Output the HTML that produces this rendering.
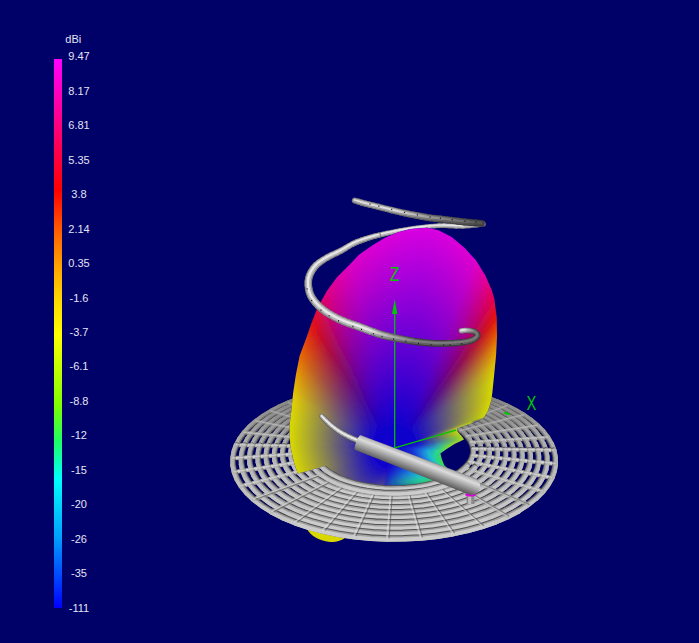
<!DOCTYPE html><html><head><meta charset="utf-8"><title>3D pattern</title><style>
html,body{margin:0;padding:0;background:#000069;overflow:hidden}
svg{display:block}
text{font-family:"Liberation Sans",sans-serif}
.w,.d,.m,.l,.m2,.l2{fill:none;stroke-linecap:round}.m2{stroke:#b4b4b4}.l2{stroke:#e2e2e2}
.d{stroke:#505050}.m{stroke:#9e9e9e}.l{stroke:#c8c8c8}
</style></head><body>
<svg width="699" height="643" viewBox="0 0 699 643">
<defs>
<linearGradient id="cb" gradientUnits="userSpaceOnUse" x1="0" y1="59" x2="0" y2="608">
<stop offset="0.0000" stop-color="#ff00ff"/>
<stop offset="0.1202" stop-color="#ff0080"/>
<stop offset="0.2386" stop-color="#ff0000"/>
<stop offset="0.3151" stop-color="#ff6000"/>
<stop offset="0.3752" stop-color="#ffa000"/>
<stop offset="0.4390" stop-color="#ffd800"/>
<stop offset="0.5027" stop-color="#ffff00"/>
<stop offset="0.5665" stop-color="#c0ff00"/>
<stop offset="0.6302" stop-color="#80ff00"/>
<stop offset="0.6940" stop-color="#20ff60"/>
<stop offset="0.7650" stop-color="#00ffff"/>
<stop offset="0.8707" stop-color="#00a0ff"/>
<stop offset="1.0000" stop-color="#0000ff"/>
</linearGradient>
<linearGradient id="tg" gradientUnits="objectBoundingBox" x1="0" y1="0" x2="0" y2="1">
<stop offset="0" stop-color="#7c7c7c"/>
<stop offset="0.1" stop-color="#b8b8b8"/>
<stop offset="0.28" stop-color="#dcdcdc"/>
<stop offset="0.5" stop-color="#b4b4b4"/>
<stop offset="0.75" stop-color="#868686"/>
<stop offset="1" stop-color="#585858"/>
</linearGradient>
</defs>
<rect width="699" height="643" fill="#000069"/>
<rect x="54" y="59" width="8" height="549" fill="url(#cb)"/>
<g fill="#e4e4f4" font-size="11" text-anchor="middle">
<text x="73.3" y="43.1">dBi</text>
<text x="79" y="60.2">9.47</text>
<text x="79" y="94.7">8.17</text>
<text x="79" y="129.1">6.81</text>
<text x="79" y="163.6">5.35</text>
<text x="79" y="198.1">3.8</text>
<text x="79" y="232.5">2.14</text>
<text x="79" y="267.0">0.35</text>
<text x="79" y="301.5">-1.6</text>
<text x="79" y="335.9">-3.7</text>
<text x="79" y="370.4">-6.1</text>
<text x="79" y="404.9">-8.8</text>
<text x="79" y="439.4">-12</text>
<text x="79" y="473.8">-15</text>
<text x="79" y="508.3">-20</text>
<text x="79" y="542.8">-26</text>
<text x="79" y="577.2">-35</text>
<text x="79" y="611.7">-111</text>
</g>
<path d="M307 529 C311 536 318 540.5 330 542 C338 542 343 540 347 536.5 L347 530 Z" fill="#d8d800"/>
<g id="mesh">
<path class="w" stroke="#545454" stroke-width="4.5" d="M244.5 445.2L236.6 445.0"/>
<path class="w" stroke="#4e4e4e" stroke-width="4" d="M251.7 433.3L244.4 432.6M262.7 422.5L256.1 421.3M530.4 426.7L537.3 425.7"/>
<path class="w" stroke="#484848" stroke-width="4" d="M276.7 413.0L271.0 411.3M501.8 407.9L507.0 406.0M517.5 416.7L523.6 415.1"/>
<path class="w" stroke="#424242" stroke-width="4" d="M293.4 404.8L288.6 402.8M312.1 398.1L308.3 395.7M464.1 394.8L467.3 392.3M483.8 400.6L488.1 398.4"/>
<path class="w" stroke="#3c3c3c" stroke-width="4" d="M332.5 392.9L329.6 390.3"/>
<path class="w" stroke="#3c3c3c" stroke-width="3.5" d="M353.9 389.2L352.1 386.5M376.1 387.1L375.3 384.4M398.6 386.7L398.9 383.9M421.1 387.8L422.3 385.1M443.0 390.5L445.3 387.9"/>
<path class="w" stroke="#545454" stroke-width="4" d="M539.9 438.0L547.5 437.5"/>
<path class="w" stroke="#aeaeae" stroke-width="3.5" d="M244.5 445.2L236.6 445.0"/>
<path class="w" stroke="#a8a8a8" stroke-width="3.5" d="M251.7 433.3L244.4 432.6M539.9 438.0L547.5 437.5"/>
<path class="w" stroke="#9c9c9c" stroke-width="3" d="M262.7 422.5L256.1 421.3"/>
<path class="w" stroke="#969696" stroke-width="3" d="M276.7 413.0L271.0 411.3M517.5 416.7L523.6 415.1"/>
<path class="w" stroke="#8a8a8a" stroke-width="3" d="M293.4 404.8L288.6 402.8M483.8 400.6L488.1 398.4"/>
<path class="w" stroke="#848484" stroke-width="3" d="M312.1 398.1L308.3 395.7M464.1 394.8L467.3 392.3"/>
<path class="w" stroke="#7e7e7e" stroke-width="3" d="M332.5 392.9L329.6 390.3M353.9 389.2L352.1 386.5M421.1 387.8L422.3 385.1M443.0 390.5L445.3 387.9"/>
<path class="w" stroke="#787878" stroke-width="3" d="M376.1 387.1L375.3 384.4M398.6 386.7L398.9 383.9"/>
<path class="w" stroke="#909090" stroke-width="3" d="M501.8 407.9L507.0 406.0"/>
<path class="w" stroke="#a2a2a2" stroke-width="3" d="M530.4 426.7L537.3 425.7"/>
<path class="w" stroke="#dedede" stroke-width="1.5" d="M244.5 445.2L236.6 445.0"/>
<path class="w" stroke="#d2d2d2" stroke-width="1.5" d="M251.7 433.3L244.4 432.6"/>
<path class="w" stroke="#c6c6c6" stroke-width="1.5" d="M262.7 422.5L256.1 421.3"/>
<path class="w" stroke="#bababa" stroke-width="1.5" d="M276.7 413.0L271.0 411.3"/>
<path class="w" stroke="#b4b4b4" stroke-width="1.5" d="M293.4 404.8L288.6 402.8M501.8 407.9L507.0 406.0"/>
<path class="w" stroke="#a8a8a8" stroke-width="1.5" d="M312.1 398.1L308.3 395.7M464.1 394.8L467.3 392.3"/>
<path class="w" stroke="#a2a2a2" stroke-width="1.5" d="M332.5 392.9L329.6 390.3M443.0 390.5L445.3 387.9"/>
<path class="w" stroke="#9c9c9c" stroke-width="1.5" d="M353.9 389.2L352.1 386.5M376.1 387.1L375.3 384.4M398.6 386.7L398.9 383.9M421.1 387.8L422.3 385.1"/>
<path class="w" stroke="#aeaeae" stroke-width="1.5" d="M483.8 400.6L488.1 398.4"/>
<path class="w" stroke="#c0c0c0" stroke-width="1.5" d="M517.5 416.7L523.6 415.1"/>
<path class="w" stroke="#cccccc" stroke-width="1.5" d="M530.4 426.7L537.3 425.7"/>
<path class="w" stroke="#d8d8d8" stroke-width="1.5" d="M539.9 438.0L547.5 437.5"/>
<path class="w" stroke="#545454" stroke-width="4.5" d="M252.4 445.3L244.5 445.2"/>
<path class="w" stroke="#4e4e4e" stroke-width="4" d="M259.1 434.1L251.7 433.3M269.3 423.8L262.7 422.5M523.5 427.8L530.4 426.7"/>
<path class="w" stroke="#484848" stroke-width="4" d="M282.5 414.7L276.7 413.0M496.6 409.8L501.8 407.9M511.4 418.2L517.5 416.7"/>
<path class="w" stroke="#424242" stroke-width="4" d="M298.3 406.9L293.4 404.8M316.0 400.4L312.1 398.1M460.8 397.2L464.1 394.8M479.6 402.8L483.8 400.6"/>
<path class="w" stroke="#3c3c3c" stroke-width="4" d="M335.4 395.4L332.5 392.9M355.8 391.9L353.9 389.2M440.8 393.1L443.0 390.5"/>
<path class="w" stroke="#3c3c3c" stroke-width="3.5" d="M377.0 389.9L376.1 387.1M398.4 389.5L398.6 386.7M419.8 390.5L421.1 387.8"/>
<path class="w" stroke="#545454" stroke-width="4" d="M532.3 438.5L539.9 438.0"/>
<path class="w" stroke="#aeaeae" stroke-width="3.5" d="M252.4 445.3L244.5 445.2"/>
<path class="w" stroke="#a8a8a8" stroke-width="3.5" d="M259.1 434.1L251.7 433.3M532.3 438.5L539.9 438.0"/>
<path class="w" stroke="#9c9c9c" stroke-width="3" d="M269.3 423.8L262.7 422.5"/>
<path class="w" stroke="#969696" stroke-width="3" d="M282.5 414.7L276.7 413.0M511.4 418.2L517.5 416.7"/>
<path class="w" stroke="#8a8a8a" stroke-width="3" d="M298.3 406.9L293.4 404.8M479.6 402.8L483.8 400.6"/>
<path class="w" stroke="#848484" stroke-width="3" d="M316.0 400.4L312.1 398.1M460.8 397.2L464.1 394.8"/>
<path class="w" stroke="#7e7e7e" stroke-width="3" d="M335.4 395.4L332.5 392.9M355.8 391.9L353.9 389.2M419.8 390.5L421.1 387.8M440.8 393.1L443.0 390.5"/>
<path class="w" stroke="#787878" stroke-width="3" d="M377.0 389.9L376.1 387.1M398.4 389.5L398.6 386.7"/>
<path class="w" stroke="#909090" stroke-width="3" d="M496.6 409.8L501.8 407.9"/>
<path class="w" stroke="#a2a2a2" stroke-width="3" d="M523.5 427.8L530.4 426.7"/>
<path class="w" stroke="#dedede" stroke-width="1.5" d="M252.4 445.3L244.5 445.2"/>
<path class="w" stroke="#d2d2d2" stroke-width="1.5" d="M259.1 434.1L251.7 433.3"/>
<path class="w" stroke="#c6c6c6" stroke-width="1.5" d="M269.3 423.8L262.7 422.5"/>
<path class="w" stroke="#bababa" stroke-width="1.5" d="M282.5 414.7L276.7 413.0"/>
<path class="w" stroke="#b4b4b4" stroke-width="1.5" d="M298.3 406.9L293.4 404.8M496.6 409.8L501.8 407.9"/>
<path class="w" stroke="#a8a8a8" stroke-width="1.5" d="M316.0 400.4L312.1 398.1M460.8 397.2L464.1 394.8"/>
<path class="w" stroke="#a2a2a2" stroke-width="1.5" d="M335.4 395.4L332.5 392.9M440.8 393.1L443.0 390.5"/>
<path class="w" stroke="#9c9c9c" stroke-width="1.5" d="M355.8 391.9L353.9 389.2M377.0 389.9L376.1 387.1M398.4 389.5L398.6 386.7M419.8 390.5L421.1 387.8"/>
<path class="w" stroke="#aeaeae" stroke-width="1.5" d="M479.6 402.8L483.8 400.6"/>
<path class="w" stroke="#c0c0c0" stroke-width="1.5" d="M511.4 418.2L517.5 416.7"/>
<path class="w" stroke="#cccccc" stroke-width="1.5" d="M523.5 427.8L530.4 426.7"/>
<path class="w" stroke="#d8d8d8" stroke-width="1.5" d="M532.3 438.5L539.9 438.0"/>
<path class="w" stroke="#545454" stroke-width="4.5" d="M260.3 445.4L252.4 445.3"/>
<path class="w" stroke="#4e4e4e" stroke-width="4" d="M266.4 434.8L259.1 434.1M275.9 425.1L269.3 423.8M516.5 428.9L523.5 427.8"/>
<path class="w" stroke="#484848" stroke-width="4" d="M288.3 416.4L282.5 414.7M491.3 411.8L496.6 409.8M505.2 419.7L511.4 418.2"/>
<path class="w" stroke="#424242" stroke-width="4" d="M303.2 408.9L298.3 406.9M320.0 402.8L316.0 400.4M457.5 399.8L460.8 397.2M475.2 405.1L479.6 402.8"/>
<path class="w" stroke="#3c3c3c" stroke-width="4" d="M338.3 398.0L335.4 395.4M357.7 394.7L355.8 391.9M377.8 392.8L377.0 389.9M398.2 392.3L398.4 389.5M418.6 393.3L419.8 390.5M438.5 395.8L440.8 393.1"/>
<path class="w" stroke="#545454" stroke-width="4" d="M524.7 439.0L532.3 438.5"/>
<path class="w" stroke="#aeaeae" stroke-width="3.5" d="M260.3 445.4L252.4 445.3"/>
<path class="w" stroke="#a8a8a8" stroke-width="3.5" d="M266.4 434.8L259.1 434.1M524.7 439.0L532.3 438.5"/>
<path class="w" stroke="#9c9c9c" stroke-width="3" d="M275.9 425.1L269.3 423.8"/>
<path class="w" stroke="#969696" stroke-width="3" d="M288.3 416.4L282.5 414.7M505.2 419.7L511.4 418.2"/>
<path class="w" stroke="#8a8a8a" stroke-width="3" d="M303.2 408.9L298.3 406.9M475.2 405.1L479.6 402.8"/>
<path class="w" stroke="#848484" stroke-width="3" d="M320.0 402.8L316.0 400.4M457.5 399.8L460.8 397.2"/>
<path class="w" stroke="#7e7e7e" stroke-width="3" d="M338.3 398.0L335.4 395.4M357.7 394.7L355.8 391.9M418.6 393.3L419.8 390.5M438.5 395.8L440.8 393.1"/>
<path class="w" stroke="#787878" stroke-width="3" d="M377.8 392.8L377.0 389.9M398.2 392.3L398.4 389.5"/>
<path class="w" stroke="#909090" stroke-width="3" d="M491.3 411.8L496.6 409.8"/>
<path class="w" stroke="#a2a2a2" stroke-width="3" d="M516.5 428.9L523.5 427.8"/>
<path class="w" stroke="#dedede" stroke-width="1.5" d="M260.3 445.4L252.4 445.3"/>
<path class="w" stroke="#d2d2d2" stroke-width="1.5" d="M266.4 434.8L259.1 434.1"/>
<path class="w" stroke="#c6c6c6" stroke-width="1.5" d="M275.9 425.1L269.3 423.8"/>
<path class="w" stroke="#bababa" stroke-width="1.5" d="M288.3 416.4L282.5 414.7"/>
<path class="w" stroke="#b4b4b4" stroke-width="1.5" d="M303.2 408.9L298.3 406.9M491.3 411.8L496.6 409.8"/>
<path class="w" stroke="#a8a8a8" stroke-width="1.5" d="M320.0 402.8L316.0 400.4M457.5 399.8L460.8 397.2"/>
<path class="w" stroke="#a2a2a2" stroke-width="1.5" d="M338.3 398.0L335.4 395.4M438.5 395.8L440.8 393.1"/>
<path class="w" stroke="#9c9c9c" stroke-width="1.5" d="M357.7 394.7L355.8 391.9M377.8 392.8L377.0 389.9M398.2 392.3L398.4 389.5M418.6 393.3L419.8 390.5"/>
<path class="w" stroke="#aeaeae" stroke-width="1.5" d="M475.2 405.1L479.6 402.8"/>
<path class="w" stroke="#c0c0c0" stroke-width="1.5" d="M505.2 419.7L511.4 418.2"/>
<path class="w" stroke="#cccccc" stroke-width="1.5" d="M516.5 428.9L523.5 427.8"/>
<path class="w" stroke="#d8d8d8" stroke-width="1.5" d="M524.7 439.0L532.3 438.5"/>
<path class="w" stroke="#545454" stroke-width="4.5" d="M268.3 445.6L260.3 445.4M517.1 439.5L524.7 439.0"/>
<path class="w" stroke="#4e4e4e" stroke-width="4" d="M273.8 435.6L266.4 434.8M282.6 426.4L275.9 425.1M509.5 429.9L516.5 428.9"/>
<path class="w" stroke="#484848" stroke-width="4" d="M294.2 418.1L288.3 416.4M486.0 413.7L491.3 411.8M499.0 421.3L505.2 419.7"/>
<path class="w" stroke="#424242" stroke-width="4" d="M308.1 411.1L303.2 408.9M323.9 405.2L320.0 402.8M454.1 402.3L457.5 399.8M470.9 407.4L475.2 405.1"/>
<path class="w" stroke="#3c3c3c" stroke-width="4" d="M341.2 400.6L338.3 398.0M359.6 397.4L357.7 394.7M378.7 395.6L377.8 392.8M398.0 395.2L398.2 392.3M417.3 396.2L418.6 393.3M436.1 398.6L438.5 395.8"/>
<path class="w" stroke="#aeaeae" stroke-width="3.5" d="M268.3 445.6L260.3 445.4"/>
<path class="w" stroke="#a8a8a8" stroke-width="3.5" d="M273.8 435.6L266.4 434.8M517.1 439.5L524.7 439.0"/>
<path class="w" stroke="#9c9c9c" stroke-width="3" d="M282.6 426.4L275.9 425.1"/>
<path class="w" stroke="#969696" stroke-width="3" d="M294.2 418.1L288.3 416.4M499.0 421.3L505.2 419.7"/>
<path class="w" stroke="#8a8a8a" stroke-width="3" d="M308.1 411.1L303.2 408.9M470.9 407.4L475.2 405.1"/>
<path class="w" stroke="#848484" stroke-width="3" d="M323.9 405.2L320.0 402.8M454.1 402.3L457.5 399.8"/>
<path class="w" stroke="#7e7e7e" stroke-width="3" d="M341.2 400.6L338.3 398.0M359.6 397.4L357.7 394.7M417.3 396.2L418.6 393.3M436.1 398.6L438.5 395.8"/>
<path class="w" stroke="#787878" stroke-width="3" d="M378.7 395.6L377.8 392.8M398.0 395.2L398.2 392.3"/>
<path class="w" stroke="#909090" stroke-width="3" d="M486.0 413.7L491.3 411.8"/>
<path class="w" stroke="#a2a2a2" stroke-width="3" d="M509.5 429.9L516.5 428.9"/>
<path class="w" stroke="#dedede" stroke-width="1.5" d="M268.3 445.6L260.3 445.4"/>
<path class="w" stroke="#d2d2d2" stroke-width="1.5" d="M273.8 435.6L266.4 434.8"/>
<path class="w" stroke="#c6c6c6" stroke-width="1.5" d="M282.6 426.4L275.9 425.1"/>
<path class="w" stroke="#bababa" stroke-width="1.5" d="M294.2 418.1L288.3 416.4"/>
<path class="w" stroke="#b4b4b4" stroke-width="1.5" d="M308.1 411.1L303.2 408.9M486.0 413.7L491.3 411.8"/>
<path class="w" stroke="#a8a8a8" stroke-width="1.5" d="M323.9 405.2L320.0 402.8M454.1 402.3L457.5 399.8"/>
<path class="w" stroke="#a2a2a2" stroke-width="1.5" d="M341.2 400.6L338.3 398.0M436.1 398.6L438.5 395.8"/>
<path class="w" stroke="#9c9c9c" stroke-width="1.5" d="M359.6 397.4L357.7 394.7M378.7 395.6L377.8 392.8M398.0 395.2L398.2 392.3M417.3 396.2L418.6 393.3"/>
<path class="w" stroke="#aeaeae" stroke-width="1.5" d="M470.9 407.4L475.2 405.1"/>
<path class="w" stroke="#c0c0c0" stroke-width="1.5" d="M499.0 421.3L505.2 419.7"/>
<path class="w" stroke="#cccccc" stroke-width="1.5" d="M509.5 429.9L516.5 428.9"/>
<path class="w" stroke="#d8d8d8" stroke-width="1.5" d="M517.1 439.5L524.7 439.0"/>
<path class="w" stroke="#545454" stroke-width="4.5" d="M276.2 445.7L268.3 445.6M509.4 440.0L517.1 439.5"/>
<path class="w" stroke="#4e4e4e" stroke-width="4" d="M281.2 436.3L273.8 435.6M289.4 427.6L282.6 426.4M502.5 431.0L509.5 429.9"/>
<path class="w" stroke="#484848" stroke-width="4" d="M300.1 419.9L294.2 418.1M480.6 415.7L486.0 413.7M492.8 422.9L499.0 421.3"/>
<path class="w" stroke="#424242" stroke-width="4" d="M313.1 413.2L308.1 411.1M328.0 407.6L323.9 405.2M450.7 404.9L454.1 402.3M466.4 409.7L470.9 407.4"/>
<path class="w" stroke="#3c3c3c" stroke-width="4" d="M344.2 403.3L341.2 400.6M361.6 400.3L359.6 397.4M379.5 398.5L378.7 395.6M397.8 398.1L398.0 395.2M416.0 399.1L417.3 396.2M433.7 401.3L436.1 398.6"/>
<path class="w" stroke="#aeaeae" stroke-width="3.5" d="M276.2 445.7L268.3 445.6"/>
<path class="w" stroke="#a8a8a8" stroke-width="3.5" d="M281.2 436.3L273.8 435.6M509.4 440.0L517.1 439.5"/>
<path class="w" stroke="#9c9c9c" stroke-width="3" d="M289.4 427.6L282.6 426.4"/>
<path class="w" stroke="#969696" stroke-width="3" d="M300.1 419.9L294.2 418.1M492.8 422.9L499.0 421.3"/>
<path class="w" stroke="#8a8a8a" stroke-width="3" d="M313.1 413.2L308.1 411.1M466.4 409.7L470.9 407.4"/>
<path class="w" stroke="#848484" stroke-width="3" d="M328.0 407.6L323.9 405.2M450.7 404.9L454.1 402.3"/>
<path class="w" stroke="#7e7e7e" stroke-width="3" d="M344.2 403.3L341.2 400.6M361.6 400.3L359.6 397.4M416.0 399.1L417.3 396.2M433.7 401.3L436.1 398.6"/>
<path class="w" stroke="#787878" stroke-width="3" d="M379.5 398.5L378.7 395.6M397.8 398.1L398.0 395.2"/>
<path class="w" stroke="#909090" stroke-width="3" d="M480.6 415.7L486.0 413.7"/>
<path class="w" stroke="#a2a2a2" stroke-width="3" d="M502.5 431.0L509.5 429.9"/>
<path class="w" stroke="#dedede" stroke-width="1.5" d="M276.2 445.7L268.3 445.6"/>
<path class="w" stroke="#d2d2d2" stroke-width="1.5" d="M281.2 436.3L273.8 435.6"/>
<path class="w" stroke="#c6c6c6" stroke-width="1.5" d="M289.4 427.6L282.6 426.4"/>
<path class="w" stroke="#bababa" stroke-width="1.5" d="M300.1 419.9L294.2 418.1"/>
<path class="w" stroke="#b4b4b4" stroke-width="1.5" d="M313.1 413.2L308.1 411.1M480.6 415.7L486.0 413.7"/>
<path class="w" stroke="#a8a8a8" stroke-width="1.5" d="M328.0 407.6L323.9 405.2M450.7 404.9L454.1 402.3"/>
<path class="w" stroke="#a2a2a2" stroke-width="1.5" d="M344.2 403.3L341.2 400.6M433.7 401.3L436.1 398.6"/>
<path class="w" stroke="#9c9c9c" stroke-width="1.5" d="M361.6 400.3L359.6 397.4M379.5 398.5L378.7 395.6M397.8 398.1L398.0 395.2M416.0 399.1L417.3 396.2"/>
<path class="w" stroke="#aeaeae" stroke-width="1.5" d="M466.4 409.7L470.9 407.4"/>
<path class="w" stroke="#c0c0c0" stroke-width="1.5" d="M492.8 422.9L499.0 421.3"/>
<path class="w" stroke="#cccccc" stroke-width="1.5" d="M502.5 431.0L509.5 429.9"/>
<path class="w" stroke="#d8d8d8" stroke-width="1.5" d="M509.4 440.0L517.1 439.5"/>
<path class="w" stroke="#545454" stroke-width="4.5" d="M284.1 445.8L276.2 445.7M501.8 440.5L509.4 440.0"/>
<path class="w" stroke="#4e4e4e" stroke-width="4" d="M288.7 437.1L281.2 436.3M296.1 428.9L289.4 427.6M495.4 432.1L502.5 431.0"/>
<path class="w" stroke="#484848" stroke-width="4" d="M306.1 421.6L300.1 419.9M475.2 417.7L480.6 415.7M486.5 424.5L492.8 422.9"/>
<path class="w" stroke="#424242" stroke-width="4" d="M318.2 415.3L313.1 413.2M332.1 410.1L328.0 407.6M447.2 407.5L450.7 404.9M462.0 412.1L466.4 409.7"/>
<path class="w" stroke="#3c3c3c" stroke-width="4" d="M347.3 406.0L344.2 403.3M363.5 403.1L361.6 400.3M380.4 401.5L379.5 398.5M397.6 401.1L397.8 398.1M414.7 402.0L416.0 399.1M431.3 404.1L433.7 401.3"/>
<path class="w" stroke="#aeaeae" stroke-width="3.5" d="M284.1 445.8L276.2 445.7"/>
<path class="w" stroke="#a8a8a8" stroke-width="3.5" d="M288.7 437.1L281.2 436.3M501.8 440.5L509.4 440.0"/>
<path class="w" stroke="#9c9c9c" stroke-width="3" d="M296.1 428.9L289.4 427.6"/>
<path class="w" stroke="#969696" stroke-width="3" d="M306.1 421.6L300.1 419.9M486.5 424.5L492.8 422.9"/>
<path class="w" stroke="#8a8a8a" stroke-width="3" d="M318.2 415.3L313.1 413.2M462.0 412.1L466.4 409.7"/>
<path class="w" stroke="#848484" stroke-width="3" d="M332.1 410.1L328.0 407.6M447.2 407.5L450.7 404.9"/>
<path class="w" stroke="#7e7e7e" stroke-width="3" d="M347.3 406.0L344.2 403.3M363.5 403.1L361.6 400.3M414.7 402.0L416.0 399.1M431.3 404.1L433.7 401.3"/>
<path class="w" stroke="#787878" stroke-width="3" d="M380.4 401.5L379.5 398.5M397.6 401.1L397.8 398.1"/>
<path class="w" stroke="#909090" stroke-width="3" d="M475.2 417.7L480.6 415.7"/>
<path class="w" stroke="#a2a2a2" stroke-width="3.5" d="M495.4 432.1L502.5 431.0"/>
<path class="w" stroke="#dedede" stroke-width="1.5" d="M284.1 445.8L276.2 445.7"/>
<path class="w" stroke="#d2d2d2" stroke-width="1.5" d="M288.7 437.1L281.2 436.3"/>
<path class="w" stroke="#c6c6c6" stroke-width="1.5" d="M296.1 428.9L289.4 427.6"/>
<path class="w" stroke="#bababa" stroke-width="1.5" d="M306.1 421.6L300.1 419.9"/>
<path class="w" stroke="#b4b4b4" stroke-width="1.5" d="M318.2 415.3L313.1 413.2M475.2 417.7L480.6 415.7"/>
<path class="w" stroke="#a8a8a8" stroke-width="1.5" d="M332.1 410.1L328.0 407.6M447.2 407.5L450.7 404.9"/>
<path class="w" stroke="#a2a2a2" stroke-width="1.5" d="M347.3 406.0L344.2 403.3M431.3 404.1L433.7 401.3"/>
<path class="w" stroke="#9c9c9c" stroke-width="1.5" d="M363.5 403.1L361.6 400.3M380.4 401.5L379.5 398.5M397.6 401.1L397.8 398.1M414.7 402.0L416.0 399.1"/>
<path class="w" stroke="#aeaeae" stroke-width="1.5" d="M462.0 412.1L466.4 409.7"/>
<path class="w" stroke="#c0c0c0" stroke-width="1.5" d="M486.5 424.5L492.8 422.9"/>
<path class="w" stroke="#cccccc" stroke-width="1.5" d="M495.4 432.1L502.5 431.0"/>
<path class="w" stroke="#d8d8d8" stroke-width="1.5" d="M501.8 440.5L509.4 440.0"/>
<path class="w" stroke="#545454" stroke-width="4.5" d="M292.1 446.0L284.1 445.8M494.1 441.0L501.8 440.5"/>
<path class="w" stroke="#4e4e4e" stroke-width="4" d="M296.2 437.8L288.7 437.1M302.9 430.2L296.1 428.9M488.3 433.2L495.4 432.1"/>
<path class="w" stroke="#484848" stroke-width="4" d="M312.1 423.4L306.1 421.6M469.7 419.8L475.2 417.7M480.1 426.1L486.5 424.5"/>
<path class="w" stroke="#424242" stroke-width="4" d="M323.3 417.5L318.2 415.3M336.2 412.6L332.1 410.1M443.7 410.2L447.2 407.5M457.4 414.4L462.0 412.1"/>
<path class="w" stroke="#3c3c3c" stroke-width="4" d="M350.4 408.8L347.3 406.0M365.5 406.1L363.5 403.1M381.3 404.5L380.4 401.5M397.4 404.2L397.6 401.1M413.3 405.0L414.7 402.0M428.9 407.0L431.3 404.1"/>
<path class="w" stroke="#aeaeae" stroke-width="3.5" d="M292.1 446.0L284.1 445.8"/>
<path class="w" stroke="#a8a8a8" stroke-width="3.5" d="M296.2 437.8L288.7 437.1M494.1 441.0L501.8 440.5"/>
<path class="w" stroke="#9c9c9c" stroke-width="3" d="M302.9 430.2L296.1 428.9"/>
<path class="w" stroke="#969696" stroke-width="3" d="M312.1 423.4L306.1 421.6M480.1 426.1L486.5 424.5"/>
<path class="w" stroke="#8a8a8a" stroke-width="3" d="M323.3 417.5L318.2 415.3M457.4 414.4L462.0 412.1"/>
<path class="w" stroke="#848484" stroke-width="3" d="M336.2 412.6L332.1 410.1M443.7 410.2L447.2 407.5"/>
<path class="w" stroke="#7e7e7e" stroke-width="3" d="M350.4 408.8L347.3 406.0M365.5 406.1L363.5 403.1M413.3 405.0L414.7 402.0M428.9 407.0L431.3 404.1"/>
<path class="w" stroke="#787878" stroke-width="3" d="M381.3 404.5L380.4 401.5M397.4 404.2L397.6 401.1"/>
<path class="w" stroke="#909090" stroke-width="3" d="M469.7 419.8L475.2 417.7"/>
<path class="w" stroke="#a2a2a2" stroke-width="3.5" d="M488.3 433.2L495.4 432.1"/>
<path class="w" stroke="#dedede" stroke-width="1.5" d="M292.1 446.0L284.1 445.8"/>
<path class="w" stroke="#d2d2d2" stroke-width="1.5" d="M296.2 437.8L288.7 437.1"/>
<path class="w" stroke="#c6c6c6" stroke-width="1.5" d="M302.9 430.2L296.1 428.9"/>
<path class="w" stroke="#bababa" stroke-width="1.5" d="M312.1 423.4L306.1 421.6"/>
<path class="w" stroke="#b4b4b4" stroke-width="1.5" d="M323.3 417.5L318.2 415.3M469.7 419.8L475.2 417.7"/>
<path class="w" stroke="#a8a8a8" stroke-width="1.5" d="M336.2 412.6L332.1 410.1M443.7 410.2L447.2 407.5"/>
<path class="w" stroke="#a2a2a2" stroke-width="1.5" d="M350.4 408.8L347.3 406.0M428.9 407.0L431.3 404.1"/>
<path class="w" stroke="#9c9c9c" stroke-width="1.5" d="M365.5 406.1L363.5 403.1M381.3 404.5L380.4 401.5M397.4 404.2L397.6 401.1M413.3 405.0L414.7 402.0"/>
<path class="w" stroke="#aeaeae" stroke-width="1.5" d="M457.4 414.4L462.0 412.1"/>
<path class="w" stroke="#c0c0c0" stroke-width="1.5" d="M480.1 426.1L486.5 424.5"/>
<path class="w" stroke="#cccccc" stroke-width="1.5" d="M488.3 433.2L495.4 432.1"/>
<path class="w" stroke="#d8d8d8" stroke-width="1.5" d="M494.1 441.0L501.8 440.5"/>
<path class="w" stroke="#545454" stroke-width="4.5" d="M300.0 446.1L292.1 446.0M486.4 441.5L494.1 441.0"/>
<path class="w" stroke="#4e4e4e" stroke-width="4" d="M303.7 438.6L296.2 437.8M309.8 431.5L302.9 430.2M481.2 434.3L488.3 433.2"/>
<path class="w" stroke="#484848" stroke-width="4" d="M318.2 425.2L312.1 423.4M464.1 421.8L469.7 419.8M473.7 427.7L480.1 426.1"/>
<path class="w" stroke="#424242" stroke-width="4" d="M328.5 419.7L323.3 417.5M340.4 415.1L336.2 412.6M440.2 412.9L443.7 410.2M452.8 416.8L457.4 414.4"/>
<path class="w" stroke="#3c3c3c" stroke-width="4" d="M353.5 411.5L350.4 408.8M367.6 409.0L365.5 406.1M382.2 407.6L381.3 404.5M397.1 407.2L397.4 404.2M412.0 408.0L413.3 405.0M426.4 409.9L428.9 407.0"/>
<path class="w" stroke="#aeaeae" stroke-width="3.5" d="M300.0 446.1L292.1 446.0"/>
<path class="w" stroke="#a8a8a8" stroke-width="3.5" d="M303.7 438.6L296.2 437.8M486.4 441.5L494.1 441.0"/>
<path class="w" stroke="#9c9c9c" stroke-width="3.5" d="M309.8 431.5L302.9 430.2"/>
<path class="w" stroke="#969696" stroke-width="3" d="M318.2 425.2L312.1 423.4M473.7 427.7L480.1 426.1"/>
<path class="w" stroke="#8a8a8a" stroke-width="3" d="M328.5 419.7L323.3 417.5M452.8 416.8L457.4 414.4"/>
<path class="w" stroke="#848484" stroke-width="3" d="M340.4 415.1L336.2 412.6M440.2 412.9L443.7 410.2"/>
<path class="w" stroke="#7e7e7e" stroke-width="3" d="M353.5 411.5L350.4 408.8M367.6 409.0L365.5 406.1M412.0 408.0L413.3 405.0M426.4 409.9L428.9 407.0"/>
<path class="w" stroke="#787878" stroke-width="3" d="M382.2 407.6L381.3 404.5M397.1 407.2L397.4 404.2"/>
<path class="w" stroke="#909090" stroke-width="3" d="M464.1 421.8L469.7 419.8"/>
<path class="w" stroke="#a2a2a2" stroke-width="3.5" d="M481.2 434.3L488.3 433.2"/>
<path class="w" stroke="#dedede" stroke-width="1.5" d="M300.0 446.1L292.1 446.0"/>
<path class="w" stroke="#d2d2d2" stroke-width="1.5" d="M303.7 438.6L296.2 437.8"/>
<path class="w" stroke="#c6c6c6" stroke-width="1.5" d="M309.8 431.5L302.9 430.2"/>
<path class="w" stroke="#bababa" stroke-width="1.5" d="M318.2 425.2L312.1 423.4"/>
<path class="w" stroke="#b4b4b4" stroke-width="1.5" d="M328.5 419.7L323.3 417.5M464.1 421.8L469.7 419.8"/>
<path class="w" stroke="#a8a8a8" stroke-width="1.5" d="M340.4 415.1L336.2 412.6M440.2 412.9L443.7 410.2"/>
<path class="w" stroke="#a2a2a2" stroke-width="1.5" d="M353.5 411.5L350.4 408.8M426.4 409.9L428.9 407.0"/>
<path class="w" stroke="#9c9c9c" stroke-width="1.5" d="M367.6 409.0L365.5 406.1M382.2 407.6L381.3 404.5M397.1 407.2L397.4 404.2M412.0 408.0L413.3 405.0"/>
<path class="w" stroke="#aeaeae" stroke-width="1.5" d="M452.8 416.8L457.4 414.4"/>
<path class="w" stroke="#c0c0c0" stroke-width="1.5" d="M473.7 427.7L480.1 426.1"/>
<path class="w" stroke="#cccccc" stroke-width="1.5" d="M481.2 434.3L488.3 433.2"/>
<path class="w" stroke="#d8d8d8" stroke-width="1.5" d="M486.4 441.5L494.1 441.0"/>
<path class="w" stroke="#545454" stroke-width="4.5" d="M308.0 446.2L300.0 446.1M478.7 442.0L486.4 441.5"/>
<path class="w" stroke="#4e4e4e" stroke-width="4.5" d="M311.2 439.3L303.7 438.6"/>
<path class="w" stroke="#4e4e4e" stroke-width="4" d="M316.7 432.9L309.8 431.5M474.0 435.4L481.2 434.3"/>
<path class="w" stroke="#484848" stroke-width="4" d="M324.3 427.0L318.2 425.2M458.5 423.9L464.1 421.8M467.2 429.3L473.7 427.7"/>
<path class="w" stroke="#424242" stroke-width="4" d="M333.7 421.9L328.5 419.7M344.6 417.7L340.4 415.1M436.5 415.6L440.2 412.9M448.2 419.3L452.8 416.8"/>
<path class="w" stroke="#3c3c3c" stroke-width="4" d="M356.7 414.4L353.5 411.5M369.6 412.0L367.6 409.0M383.1 410.7L382.2 407.6M396.9 410.4L397.1 407.2M410.6 411.1L412.0 408.0M423.9 412.8L426.4 409.9"/>
<path class="w" stroke="#aeaeae" stroke-width="3.5" d="M308.0 446.2L300.0 446.1"/>
<path class="w" stroke="#a8a8a8" stroke-width="3.5" d="M311.2 439.3L303.7 438.6M478.7 442.0L486.4 441.5"/>
<path class="w" stroke="#9c9c9c" stroke-width="3.5" d="M316.7 432.9L309.8 431.5"/>
<path class="w" stroke="#969696" stroke-width="3" d="M324.3 427.0L318.2 425.2M467.2 429.3L473.7 427.7"/>
<path class="w" stroke="#8a8a8a" stroke-width="3" d="M333.7 421.9L328.5 419.7M448.2 419.3L452.8 416.8"/>
<path class="w" stroke="#848484" stroke-width="3" d="M344.6 417.7L340.4 415.1M436.5 415.6L440.2 412.9"/>
<path class="w" stroke="#7e7e7e" stroke-width="3" d="M356.7 414.4L353.5 411.5M369.6 412.0L367.6 409.0M410.6 411.1L412.0 408.0M423.9 412.8L426.4 409.9"/>
<path class="w" stroke="#787878" stroke-width="3" d="M383.1 410.7L382.2 407.6M396.9 410.4L397.1 407.2"/>
<path class="w" stroke="#909090" stroke-width="3" d="M458.5 423.9L464.1 421.8"/>
<path class="w" stroke="#a2a2a2" stroke-width="3.5" d="M474.0 435.4L481.2 434.3"/>
<path class="w" stroke="#dedede" stroke-width="1.5" d="M308.0 446.2L300.0 446.1"/>
<path class="w" stroke="#d2d2d2" stroke-width="1.5" d="M311.2 439.3L303.7 438.6"/>
<path class="w" stroke="#c6c6c6" stroke-width="1.5" d="M316.7 432.9L309.8 431.5"/>
<path class="w" stroke="#bababa" stroke-width="1.5" d="M324.3 427.0L318.2 425.2"/>
<path class="w" stroke="#b4b4b4" stroke-width="1.5" d="M333.7 421.9L328.5 419.7M458.5 423.9L464.1 421.8"/>
<path class="w" stroke="#a8a8a8" stroke-width="1.5" d="M344.6 417.7L340.4 415.1M436.5 415.6L440.2 412.9"/>
<path class="w" stroke="#a2a2a2" stroke-width="1.5" d="M356.7 414.4L353.5 411.5M423.9 412.8L426.4 409.9"/>
<path class="w" stroke="#9c9c9c" stroke-width="1.5" d="M369.6 412.0L367.6 409.0M383.1 410.7L382.2 407.6M396.9 410.4L397.1 407.2M410.6 411.1L412.0 408.0"/>
<path class="w" stroke="#aeaeae" stroke-width="1.5" d="M448.2 419.3L452.8 416.8"/>
<path class="w" stroke="#c0c0c0" stroke-width="1.5" d="M467.2 429.3L473.7 427.7"/>
<path class="w" stroke="#cccccc" stroke-width="1.5" d="M474.0 435.4L481.2 434.3"/>
<path class="w" stroke="#d8d8d8" stroke-width="1.5" d="M478.7 442.0L486.4 441.5"/>
<path class="w" stroke="#545454" stroke-width="4.5" d="M316.0 446.4L308.0 446.2M470.9 442.5L478.7 442.0"/>
<path class="w" stroke="#4e4e4e" stroke-width="4.5" d="M318.7 440.1L311.2 439.3"/>
<path class="w" stroke="#4e4e4e" stroke-width="4" d="M323.7 434.2L316.7 432.9M466.8 436.5L474.0 435.4"/>
<path class="w" stroke="#484848" stroke-width="4" d="M330.5 428.9L324.3 427.0M452.8 426.0L458.5 423.9M460.7 430.9L467.2 429.3"/>
<path class="w" stroke="#424242" stroke-width="4" d="M339.0 424.2L333.7 421.9M348.9 420.3L344.6 417.7M432.9 418.4L436.5 415.6M443.5 421.8L448.2 419.3"/>
<path class="w" stroke="#3c3c3c" stroke-width="4" d="M359.9 417.2L356.7 414.4M371.7 415.1L369.6 412.0M384.1 413.8L383.1 410.7M396.7 413.5L396.9 410.4M409.2 414.2L410.6 411.1M421.4 415.8L423.9 412.8"/>
<path class="w" stroke="#aeaeae" stroke-width="3.5" d="M316.0 446.4L308.0 446.2"/>
<path class="w" stroke="#a8a8a8" stroke-width="3.5" d="M318.7 440.1L311.2 439.3M470.9 442.5L478.7 442.0"/>
<path class="w" stroke="#9c9c9c" stroke-width="3.5" d="M323.7 434.2L316.7 432.9"/>
<path class="w" stroke="#969696" stroke-width="3" d="M330.5 428.9L324.3 427.0M460.7 430.9L467.2 429.3"/>
<path class="w" stroke="#8a8a8a" stroke-width="3" d="M339.0 424.2L333.7 421.9M443.5 421.8L448.2 419.3"/>
<path class="w" stroke="#848484" stroke-width="3" d="M348.9 420.3L344.6 417.7M432.9 418.4L436.5 415.6"/>
<path class="w" stroke="#7e7e7e" stroke-width="3" d="M359.9 417.2L356.7 414.4M371.7 415.1L369.6 412.0M409.2 414.2L410.6 411.1M421.4 415.8L423.9 412.8"/>
<path class="w" stroke="#787878" stroke-width="3" d="M384.1 413.8L383.1 410.7M396.7 413.5L396.9 410.4"/>
<path class="w" stroke="#909090" stroke-width="3" d="M452.8 426.0L458.5 423.9"/>
<path class="w" stroke="#a2a2a2" stroke-width="3.5" d="M466.8 436.5L474.0 435.4"/>
<path class="w" stroke="#dedede" stroke-width="1.5" d="M316.0 446.4L308.0 446.2"/>
<path class="w" stroke="#d2d2d2" stroke-width="1.5" d="M318.7 440.1L311.2 439.3"/>
<path class="w" stroke="#c6c6c6" stroke-width="1.5" d="M323.7 434.2L316.7 432.9"/>
<path class="w" stroke="#bababa" stroke-width="1.5" d="M330.5 428.9L324.3 427.0"/>
<path class="w" stroke="#b4b4b4" stroke-width="1.5" d="M339.0 424.2L333.7 421.9M452.8 426.0L458.5 423.9"/>
<path class="w" stroke="#a8a8a8" stroke-width="1.5" d="M348.9 420.3L344.6 417.7M432.9 418.4L436.5 415.6"/>
<path class="w" stroke="#a2a2a2" stroke-width="1.5" d="M359.9 417.2L356.7 414.4M421.4 415.8L423.9 412.8"/>
<path class="w" stroke="#9c9c9c" stroke-width="1.5" d="M371.7 415.1L369.6 412.0M384.1 413.8L383.1 410.7M396.7 413.5L396.9 410.4M409.2 414.2L410.6 411.1"/>
<path class="w" stroke="#aeaeae" stroke-width="1.5" d="M443.5 421.8L448.2 419.3"/>
<path class="w" stroke="#c0c0c0" stroke-width="1.5" d="M460.7 430.9L467.2 429.3"/>
<path class="w" stroke="#cccccc" stroke-width="1.5" d="M466.8 436.5L474.0 435.4"/>
<path class="w" stroke="#d8d8d8" stroke-width="1.5" d="M470.9 442.5L478.7 442.0"/>
<path class="w" stroke="#484848" stroke-width="5.5" d="M236.6 445.0L240.0 438.7M547.5 437.5L551.1 443.8M551.1 443.8L553.6 450.3"/>
<path class="w" stroke="#424242" stroke-width="5.5" d="M240.0 438.7L244.4 432.6M542.9 431.4L547.5 437.5"/>
<path class="w" stroke="#424242" stroke-width="5" d="M244.4 432.6L249.8 426.8M249.8 426.8L256.1 421.3M530.8 420.2L537.3 425.7M537.3 425.7L542.9 431.4"/>
<path class="w" stroke="#3c3c3c" stroke-width="5" d="M256.1 421.3L263.2 416.1M263.2 416.1L271.0 411.3M271.0 411.3L279.5 406.8M507.0 406.0L515.6 410.4M515.6 410.4L523.6 415.1M523.6 415.1L530.8 420.2"/>
<path class="w" stroke="#363636" stroke-width="5" d="M279.5 406.8L288.6 402.8M288.6 402.8L298.2 399.1M298.2 399.1L308.3 395.7M477.9 395.1L488.1 398.4M488.1 398.4L497.8 402.0M497.8 402.0L507.0 406.0"/>
<path class="w" stroke="#363636" stroke-width="4.5" d="M308.3 395.7L318.8 392.8M467.3 392.3L477.9 395.1"/>
<path class="w" stroke="#303030" stroke-width="4.5" d="M318.8 392.8L329.6 390.3M329.6 390.3L340.8 388.2M340.8 388.2L352.1 386.5M352.1 386.5L363.7 385.3M363.7 385.3L375.3 384.4M375.3 384.4L387.1 383.9M387.1 383.9L398.9 383.9M398.9 383.9L410.6 384.3M410.6 384.3L422.3 385.1M422.3 385.1L433.9 386.2M433.9 386.2L445.3 387.9M445.3 387.9L456.4 389.9M456.4 389.9L467.3 392.3"/>
<path class="w" stroke="#8a8a8a" stroke-width="4.5" d="M236.2 444.8L239.6 438.5M547.9 437.2L551.5 443.5M551.5 443.6L554.1 450.1"/>
<path class="w" stroke="#848484" stroke-width="4.5" d="M239.6 438.4L244.1 432.4M543.2 431.2L547.8 437.2"/>
<path class="w" stroke="#7e7e7e" stroke-width="4.5" d="M244.1 432.3L249.5 426.5M249.6 426.5L255.8 421.0M531.1 419.9L537.5 425.4M537.6 425.4L543.2 431.1"/>
<path class="w" stroke="#787878" stroke-width="4" d="M255.9 421.0L263.0 415.8M523.8 414.8L531.1 419.9"/>
<path class="w" stroke="#727272" stroke-width="4" d="M263.0 415.8L270.8 411.0M270.8 410.9L279.3 406.5M507.2 405.6L515.8 410.0M515.8 410.0L523.8 414.8"/>
<path class="w" stroke="#6c6c6c" stroke-width="4" d="M279.4 406.5L288.4 402.4M288.5 402.4L298.1 398.7M488.2 398.0L497.9 401.6M497.9 401.6L507.1 405.6"/>
<path class="w" stroke="#666666" stroke-width="4" d="M298.1 398.7L308.2 395.4M308.2 395.4L318.7 392.5M467.4 391.9L478.0 394.8M478.0 394.8L488.2 398.0"/>
<path class="w" stroke="#606060" stroke-width="4" d="M318.7 392.5L329.5 390.0M329.6 390.0L340.7 387.9M340.7 387.9L352.1 386.2M352.1 386.2L363.6 384.9M422.3 384.7L433.9 385.9M433.9 385.9L445.3 387.5M445.3 387.5L456.5 389.5M456.5 389.5L467.4 391.9"/>
<path class="w" stroke="#5a5a5a" stroke-width="4" d="M363.6 384.9L375.3 384.0M375.3 384.0L387.1 383.6M387.1 383.6L398.9 383.5M398.9 383.5L410.6 383.9M410.6 383.9L422.3 384.7"/>
<path class="w" stroke="#aeaeae" stroke-width="3" d="M235.6 444.5L239.0 438.2M548.4 436.9L552.0 443.2"/>
<path class="w" stroke="#a8a8a8" stroke-width="3" d="M239.1 438.1L243.6 432.0M543.7 430.8L548.3 436.8"/>
<path class="w" stroke="#a2a2a2" stroke-width="3" d="M243.7 431.9L249.1 426.1M538.0 424.9L543.6 430.7"/>
<path class="w" stroke="#9c9c9c" stroke-width="3" d="M249.1 426.0L255.4 420.5M531.5 419.5L537.9 424.9"/>
<path class="w" stroke="#969696" stroke-width="3" d="M255.5 420.5L262.6 415.3M524.2 414.3L531.4 419.4"/>
<path class="w" stroke="#909090" stroke-width="3" d="M262.7 415.3L270.5 410.4M270.6 410.4L279.1 406.0M507.4 405.1L516.1 409.5M516.1 409.5L524.1 414.3"/>
<path class="w" stroke="#8a8a8a" stroke-width="3" d="M279.1 405.9L288.2 401.9M498.2 401.1L507.4 405.1"/>
<path class="w" stroke="#848484" stroke-width="3" d="M288.3 401.9L297.9 398.1M297.9 398.1L308.0 394.8M478.2 394.2L488.4 397.4M488.4 397.5L498.1 401.1"/>
<path class="w" stroke="#7e7e7e" stroke-width="3" d="M308.1 394.8L318.5 391.9M318.6 391.9L329.4 389.4M456.7 389.0L467.5 391.4M467.6 391.4L478.1 394.2"/>
<path class="w" stroke="#787878" stroke-width="3" d="M329.5 389.4L340.6 387.3M340.6 387.3L352.0 385.6M352.0 385.6L363.6 384.3M422.4 384.1L434.0 385.3M434.0 385.3L445.4 386.9M445.4 386.9L456.6 389.0"/>
<path class="w" stroke="#727272" stroke-width="3" d="M363.6 384.3L375.3 383.5M375.3 383.5L387.0 383.0M387.1 383.0L398.8 383.0M398.9 383.0L410.6 383.3M410.7 383.3L422.4 384.1"/>
<path class="w" stroke="#aeaeae" stroke-width="3.5" d="M552.1 443.4L554.7 449.9"/>
<path class="w" stroke="#484848" stroke-width="5.5" d="M244.5 445.2L247.6 439.1M539.9 438.0L543.3 443.9M543.3 443.9L545.5 450.1"/>
<path class="w" stroke="#424242" stroke-width="5.5" d="M247.6 439.1L251.7 433.3M535.6 432.2L539.9 438.0"/>
<path class="w" stroke="#424242" stroke-width="5" d="M251.7 433.3L256.8 427.8M256.8 427.8L262.7 422.5M524.3 421.5L530.4 426.7M530.4 426.7L535.6 432.2"/>
<path class="w" stroke="#3c3c3c" stroke-width="5" d="M262.7 422.5L269.4 417.6M269.4 417.6L276.7 413.0M276.7 413.0L284.8 408.7M501.8 407.9L510.0 412.1M510.0 412.1L517.5 416.7M517.5 416.7L524.3 421.5"/>
<path class="w" stroke="#363636" stroke-width="5" d="M284.8 408.7L293.4 404.8M293.4 404.8L302.5 401.2M302.5 401.2L312.1 398.1M312.1 398.1L322.1 395.3M464.1 394.8L474.2 397.5M474.2 397.5L483.8 400.6M483.8 400.6L493.1 404.1M493.1 404.1L501.8 407.9"/>
<path class="w" stroke="#303030" stroke-width="4.5" d="M322.1 395.3L332.5 392.9M332.5 392.9L343.1 390.8M343.1 390.8L353.9 389.2M353.9 389.2L365.0 388.0M365.0 388.0L376.1 387.1M376.1 387.1L387.4 386.7M387.4 386.7L398.6 386.7M398.6 386.7L409.9 387.0M409.9 387.0L421.1 387.8M421.1 387.8L432.1 388.9M432.1 388.9L443.0 390.5M443.0 390.5L453.7 392.4M453.7 392.4L464.1 394.8"/>
<path class="w" stroke="#8a8a8a" stroke-width="4.5" d="M244.1 445.0L247.2 438.9M540.3 437.8L543.6 443.7M543.7 443.8L545.9 450.0"/>
<path class="w" stroke="#848484" stroke-width="4.5" d="M247.3 438.9L251.4 433.1M535.9 432.0L540.3 437.7"/>
<path class="w" stroke="#7e7e7e" stroke-width="4.5" d="M251.4 433.1L256.5 427.5M256.5 427.5L262.4 422.2M524.6 421.2L530.7 426.4M530.7 426.4L535.9 431.9"/>
<path class="w" stroke="#787878" stroke-width="4.5" d="M262.4 422.2L269.1 417.3M517.7 416.3L524.6 421.2"/>
<path class="w" stroke="#727272" stroke-width="4" d="M269.1 417.3L276.5 412.6M276.6 412.6L284.6 408.4M502.0 407.5L510.2 411.8M510.2 411.8L517.7 416.3"/>
<path class="w" stroke="#6c6c6c" stroke-width="4" d="M284.6 408.4L293.2 404.4M293.3 404.4L302.4 400.9M484.0 400.2L493.2 403.7M493.2 403.7L502.0 407.5"/>
<path class="w" stroke="#666666" stroke-width="4" d="M302.4 400.9L312.0 397.7M312.0 397.7L322.0 394.9M464.2 394.4L474.3 397.1M474.3 397.1L484.0 400.2"/>
<path class="w" stroke="#606060" stroke-width="4" d="M322.1 394.9L332.4 392.5M332.4 392.5L343.0 390.5M343.0 390.5L353.9 388.8M353.9 388.8L364.9 387.6M421.1 387.4L432.2 388.6M432.2 388.6L443.1 390.1M443.1 390.1L453.8 392.0M453.8 392.0L464.2 394.4"/>
<path class="w" stroke="#5a5a5a" stroke-width="4" d="M365.0 387.6L376.1 386.8M376.1 386.8L387.4 386.3M387.4 386.3L398.6 386.3M398.7 386.3L409.9 386.6M409.9 386.6L421.1 387.4"/>
<path class="w" stroke="#aeaeae" stroke-width="3" d="M243.5 444.7L246.7 438.6M540.9 437.4L544.2 443.4"/>
<path class="w" stroke="#a8a8a8" stroke-width="3" d="M246.8 438.5L250.9 432.7M536.5 431.6L540.8 437.3"/>
<path class="w" stroke="#a2a2a2" stroke-width="3" d="M251.0 432.6L256.0 427.1M531.1 426.0L536.4 431.5"/>
<path class="w" stroke="#9c9c9c" stroke-width="3" d="M256.1 427.0L262.0 421.8M525.0 420.8L531.1 425.9"/>
<path class="w" stroke="#969696" stroke-width="3" d="M262.1 421.7L268.7 416.8M518.1 415.8L524.9 420.7"/>
<path class="w" stroke="#909090" stroke-width="3" d="M268.8 416.8L276.2 412.1M276.3 412.1L284.3 407.8M502.3 407.0L510.4 411.2M510.5 411.2L518.0 415.8"/>
<path class="w" stroke="#8a8a8a" stroke-width="3" d="M284.4 407.8L293.0 403.9M493.5 403.2L502.2 407.0"/>
<path class="w" stroke="#848484" stroke-width="3" d="M293.1 403.9L302.2 400.3M302.2 400.3L311.8 397.1M474.5 396.6L484.1 399.7M484.2 399.7L493.4 403.1"/>
<path class="w" stroke="#7e7e7e" stroke-width="3" d="M311.9 397.1L321.9 394.3M321.9 394.3L332.3 391.9M453.9 391.5L464.3 393.8M464.3 393.8L474.4 396.6"/>
<path class="w" stroke="#787878" stroke-width="3" d="M332.3 391.9L342.9 389.9M343.0 389.9L353.8 388.3M353.8 388.3L364.9 387.0M421.2 386.8L432.2 388.0M432.3 388.0L443.2 389.5M443.2 389.5L453.9 391.5"/>
<path class="w" stroke="#727272" stroke-width="3" d="M364.9 387.0L376.1 386.2M376.1 386.2L387.3 385.8M387.4 385.8L398.6 385.7M398.7 385.7L409.9 386.1M410.0 386.1L421.1 386.8"/>
<path class="w" stroke="#aeaeae" stroke-width="3.5" d="M544.3 443.6L546.6 449.8"/>
<path class="w" stroke="#484848" stroke-width="5.5" d="M252.4 445.3L255.3 439.6M532.3 438.5L535.4 444.1M535.4 444.1L537.4 450.0"/>
<path class="w" stroke="#424242" stroke-width="5.5" d="M255.3 439.6L259.1 434.1M528.3 433.0L532.3 438.5"/>
<path class="w" stroke="#424242" stroke-width="5" d="M259.1 434.1L263.8 428.8M263.8 428.8L269.3 423.8M517.8 422.8L523.5 427.8M523.5 427.8L528.3 433.0"/>
<path class="w" stroke="#3c3c3c" stroke-width="5" d="M269.3 423.8L275.5 419.1M275.5 419.1L282.5 414.7M282.5 414.7L290.1 410.6M496.6 409.8L504.3 413.8M504.3 413.8L511.4 418.2M511.4 418.2L517.8 422.8"/>
<path class="w" stroke="#363636" stroke-width="5" d="M290.1 410.6L298.3 406.9M298.3 406.9L306.9 403.5M306.9 403.5L316.0 400.4M316.0 400.4L325.5 397.7M460.8 397.2L470.4 399.8M470.4 399.8L479.6 402.8M479.6 402.8L488.3 406.1M488.3 406.1L496.6 409.8"/>
<path class="w" stroke="#303030" stroke-width="5" d="M325.5 397.7L335.4 395.4M335.4 395.4L345.5 393.5M450.9 395.0L460.8 397.2"/>
<path class="w" stroke="#303030" stroke-width="4.5" d="M345.5 393.5L355.8 391.9M355.8 391.9L366.3 390.7M366.3 390.7L377.0 389.9M377.0 389.9L387.7 389.5M387.7 389.5L398.4 389.5M398.4 389.5L409.2 389.8M409.2 389.8L419.8 390.5M419.8 390.5L430.4 391.6M430.4 391.6L440.8 393.1M440.8 393.1L450.9 395.0"/>
<path class="w" stroke="#8a8a8a" stroke-width="4.5" d="M252.0 445.1L254.9 439.4M532.7 438.3L535.8 443.9M535.8 444.0L537.8 449.9"/>
<path class="w" stroke="#848484" stroke-width="4.5" d="M254.9 439.3L258.7 433.8M528.7 432.8L532.7 438.2"/>
<path class="w" stroke="#7e7e7e" stroke-width="4.5" d="M258.8 433.8L263.5 428.5M263.5 428.5L269.0 423.5M518.1 422.5L523.7 427.5M523.8 427.5L528.6 432.7"/>
<path class="w" stroke="#787878" stroke-width="4.5" d="M269.0 423.5L275.3 418.8M511.6 417.9L518.0 422.5"/>
<path class="w" stroke="#727272" stroke-width="4" d="M275.3 418.8L282.3 414.3M282.3 414.3L289.9 410.3M496.8 409.5L504.5 413.5M504.5 413.5L511.6 417.8"/>
<path class="w" stroke="#6c6c6c" stroke-width="4" d="M289.9 410.2L298.1 406.5M298.1 406.5L306.8 403.1M479.7 402.5L488.5 405.8M488.5 405.8L496.8 409.5"/>
<path class="w" stroke="#666666" stroke-width="4" d="M306.8 403.1L315.9 400.0M315.9 400.0L325.4 397.4M460.9 396.9L470.5 399.5M470.5 399.5L479.7 402.4"/>
<path class="w" stroke="#606060" stroke-width="4" d="M325.4 397.4L335.3 395.0M335.3 395.0L345.4 393.1M345.4 393.1L355.8 391.5M355.8 391.5L366.3 390.4M419.9 390.2L430.4 391.3M430.4 391.3L440.8 392.8M440.8 392.8L451.0 394.6M451.0 394.6L460.9 396.9"/>
<path class="w" stroke="#5a5a5a" stroke-width="4" d="M366.3 390.4L376.9 389.5M377.0 389.5L387.7 389.1M387.7 389.1L398.4 389.1M398.5 389.1L409.2 389.4M409.2 389.4L419.9 390.2"/>
<path class="w" stroke="#aeaeae" stroke-width="3" d="M251.4 444.8L254.3 439.1M533.3 438.0L536.3 443.6"/>
<path class="w" stroke="#a8a8a8" stroke-width="3" d="M254.4 439.0L258.2 433.5M529.2 432.4L533.2 437.8"/>
<path class="w" stroke="#a2a2a2" stroke-width="3" d="M258.3 433.4L263.0 428.1M524.2 427.1L529.1 432.3"/>
<path class="w" stroke="#9c9c9c" stroke-width="3" d="M263.1 428.0L268.6 423.0M518.5 422.1L524.2 427.0"/>
<path class="w" stroke="#969696" stroke-width="3" d="M268.7 423.0L274.9 418.3M512.0 417.4L518.4 422.0"/>
<path class="w" stroke="#909090" stroke-width="3" d="M275.0 418.2L282.0 413.8M282.0 413.8L289.6 409.7M497.1 408.9L504.8 413.0M504.8 413.0L511.9 417.3"/>
<path class="w" stroke="#8a8a8a" stroke-width="3" d="M289.7 409.7L297.8 406.0M488.7 405.2L497.0 408.9"/>
<path class="w" stroke="#848484" stroke-width="3" d="M297.9 405.9L306.6 402.5M306.6 402.5L315.7 399.5M470.7 398.9L479.9 401.9M479.9 401.9L488.7 405.2"/>
<path class="w" stroke="#7e7e7e" stroke-width="3" d="M315.8 399.5L325.3 396.8M325.3 396.8L335.1 394.5M451.1 394.1L461.0 396.3M461.1 396.3L470.6 398.9"/>
<path class="w" stroke="#787878" stroke-width="3" d="M335.2 394.5L345.3 392.5M345.3 392.5L355.7 391.0M355.7 391.0L366.2 389.8M419.9 389.6L430.5 390.7M430.5 390.7L440.9 392.2M440.9 392.2L451.1 394.1"/>
<path class="w" stroke="#727272" stroke-width="3" d="M366.3 389.8L376.9 389.0M376.9 389.0L387.7 388.6M387.7 388.6L398.4 388.5M398.5 388.5L409.2 388.9M409.2 388.9L419.9 389.6"/>
<path class="w" stroke="#aeaeae" stroke-width="3.5" d="M536.4 443.8L538.5 449.6"/>
<path class="w" stroke="#484848" stroke-width="5.5" d="M260.3 445.4L262.9 440.0M524.7 439.0L527.5 444.3M527.5 444.3L529.3 449.9"/>
<path class="w" stroke="#424242" stroke-width="5.5" d="M262.9 440.0L266.4 434.8M521.0 433.8L524.7 439.0"/>
<path class="w" stroke="#424242" stroke-width="5" d="M266.4 434.8L270.8 429.8M270.8 429.8L275.9 425.1M511.2 424.2L516.5 428.9M516.5 428.9L521.0 433.8"/>
<path class="w" stroke="#3c3c3c" stroke-width="5" d="M275.9 425.1L281.8 420.6M281.8 420.6L288.3 416.4M288.3 416.4L295.5 412.5M491.3 411.8L498.6 415.6M498.6 415.6L505.2 419.7M505.2 419.7L511.2 424.2"/>
<path class="w" stroke="#363636" stroke-width="5" d="M295.5 412.5L303.2 408.9M303.2 408.9L311.3 405.7M311.3 405.7L320.0 402.8M320.0 402.8L329.0 400.2M457.5 399.8L466.6 402.2M466.6 402.2L475.2 405.1M475.2 405.1L483.5 408.3M483.5 408.3L491.3 411.8"/>
<path class="w" stroke="#303030" stroke-width="5" d="M329.0 400.2L338.3 398.0M338.3 398.0L347.9 396.2M347.9 396.2L357.7 394.7M428.6 394.4L438.5 395.8M438.5 395.8L448.1 397.6M448.1 397.6L457.5 399.8"/>
<path class="w" stroke="#303030" stroke-width="4.5" d="M357.7 394.7L367.7 393.5M367.7 393.5L377.8 392.8M377.8 392.8L388.0 392.3M388.0 392.3L398.2 392.3M398.2 392.3L408.4 392.6M408.4 392.6L418.6 393.3M418.6 393.3L428.6 394.4"/>
<path class="w" stroke="#8a8a8a" stroke-width="4.5" d="M259.9 445.2L262.5 439.8M525.1 438.8L527.9 444.1M527.9 444.2L529.8 449.7"/>
<path class="w" stroke="#848484" stroke-width="4.5" d="M262.6 439.8L266.1 434.6M521.4 433.6L525.1 438.7"/>
<path class="w" stroke="#7e7e7e" stroke-width="4.5" d="M266.1 434.5L270.5 429.6M270.5 429.5L275.6 424.8M511.5 423.9L516.8 428.5M516.8 428.6L521.3 433.5"/>
<path class="w" stroke="#787878" stroke-width="4.5" d="M275.7 424.8L281.5 420.3M505.5 419.4L511.5 423.8"/>
<path class="w" stroke="#727272" stroke-width="4" d="M281.6 420.3L288.1 416.1M288.1 416.1L295.3 412.2M491.5 411.4L498.8 415.3M498.8 415.3L505.4 419.4"/>
<path class="w" stroke="#6c6c6c" stroke-width="4" d="M295.3 412.2L303.0 408.6M303.0 408.6L311.2 405.3M475.4 404.7L483.7 407.9M483.7 407.9L491.5 411.4"/>
<path class="w" stroke="#666666" stroke-width="4" d="M311.2 405.3L319.8 402.4M319.9 402.4L328.8 399.9M457.6 399.4L466.7 401.9M466.7 401.9L475.4 404.7"/>
<path class="w" stroke="#606060" stroke-width="4" d="M328.9 399.8L338.2 397.6M338.2 397.6L347.8 395.8M347.8 395.8L357.6 394.3M357.7 394.3L367.6 393.1M418.6 393.0L428.6 394.0M428.7 394.0L438.5 395.4M438.5 395.4L448.2 397.2M448.2 397.2L457.6 399.4"/>
<path class="w" stroke="#5a5a5a" stroke-width="4" d="M367.7 393.1L377.8 392.4M377.8 392.4L388.0 392.0M388.0 392.0L398.2 391.9M398.2 391.9L408.4 392.3M408.5 392.3L418.6 393.0"/>
<path class="w" stroke="#aeaeae" stroke-width="3" d="M259.4 445.0L262.0 439.6M525.7 438.5L528.5 443.8"/>
<path class="w" stroke="#a8a8a8" stroke-width="3" d="M262.1 439.4L265.6 434.2M521.9 433.2L525.6 438.4"/>
<path class="w" stroke="#a2a2a2" stroke-width="3" d="M265.6 434.1L270.0 429.1M517.3 428.2L521.8 433.1"/>
<path class="w" stroke="#9c9c9c" stroke-width="3" d="M270.1 429.1L275.2 424.3M511.9 423.4L517.2 428.1"/>
<path class="w" stroke="#969696" stroke-width="3" d="M275.3 424.3L281.2 419.8M505.8 418.9L511.8 423.3"/>
<path class="w" stroke="#909090" stroke-width="3" d="M281.2 419.7L287.8 415.6M287.9 415.5L295.0 411.6M491.8 410.9L499.0 414.7M499.1 414.7L505.8 418.9"/>
<path class="w" stroke="#8a8a8a" stroke-width="3" d="M295.1 411.6L302.7 408.0M483.9 407.4L491.7 410.9"/>
<path class="w" stroke="#848484" stroke-width="3" d="M302.8 408.0L311.0 404.8M311.0 404.8L319.6 401.9M466.9 401.3L475.5 404.2M475.6 404.2L483.9 407.4"/>
<path class="w" stroke="#7e7e7e" stroke-width="3" d="M319.7 401.9L328.7 399.3M328.7 399.3L338.1 397.1M448.3 396.7L457.7 398.8M457.7 398.8L466.8 401.3"/>
<path class="w" stroke="#787878" stroke-width="3" d="M338.1 397.1L347.7 395.2M347.7 395.2L357.6 393.7M357.6 393.7L367.6 392.6M418.7 392.4L428.7 393.5M428.7 393.5L438.6 394.9M438.6 394.9L448.3 396.7"/>
<path class="w" stroke="#727272" stroke-width="3" d="M367.6 392.6L377.7 391.8M377.8 391.8L388.0 391.4M388.0 391.4L398.2 391.4M398.3 391.4L408.5 391.7M408.5 391.7L418.6 392.4"/>
<path class="w" stroke="#aeaeae" stroke-width="3.5" d="M528.5 444.0L530.4 449.5"/>
<path class="w" stroke="#484848" stroke-width="5.5" d="M268.3 445.6L270.6 440.5M517.1 439.5L519.6 444.5M519.6 444.5L521.2 449.7"/>
<path class="w" stroke="#424242" stroke-width="5.5" d="M270.6 440.5L273.8 435.6M513.7 434.6L517.1 439.5"/>
<path class="w" stroke="#424242" stroke-width="5" d="M273.8 435.6L277.8 430.8M277.8 430.8L282.6 426.4M504.6 425.5L509.5 429.9M509.5 429.9L513.7 434.6"/>
<path class="w" stroke="#3c3c3c" stroke-width="5" d="M282.6 426.4L288.1 422.1M288.1 422.1L294.2 418.1M294.2 418.1L300.9 414.4M486.0 413.7L492.8 417.4M492.8 417.4L499.0 421.3M499.0 421.3L504.6 425.5"/>
<path class="w" stroke="#363636" stroke-width="5" d="M300.9 414.4L308.1 411.1M308.1 411.1L315.8 408.0M315.8 408.0L323.9 405.2M323.9 405.2L332.4 402.8M454.1 402.3L462.7 404.7M462.7 404.7L470.9 407.4M470.9 407.4L478.7 410.4M478.7 410.4L486.0 413.7"/>
<path class="w" stroke="#303030" stroke-width="5" d="M332.4 402.8L341.2 400.6M341.2 400.6L350.3 398.9M350.3 398.9L359.6 397.4M359.6 397.4L369.1 396.4M369.1 396.4L378.7 395.6M378.7 395.6L388.3 395.2M388.3 395.2L398.0 395.2M398.0 395.2L407.7 395.5M407.7 395.5L417.3 396.2M417.3 396.2L426.8 397.2M426.8 397.2L436.1 398.6M436.1 398.6L445.2 400.3M445.2 400.3L454.1 402.3"/>
<path class="w" stroke="#8a8a8a" stroke-width="4.5" d="M267.9 445.4L270.2 440.3M517.5 439.3L520.0 444.3M520.0 444.4L521.7 449.6"/>
<path class="w" stroke="#848484" stroke-width="4.5" d="M270.3 440.2L273.5 435.3M514.1 434.4L517.4 439.2"/>
<path class="w" stroke="#7e7e7e" stroke-width="4.5" d="M273.5 435.3L277.5 430.6M277.6 430.5L282.3 426.1M504.9 425.2L509.8 429.6M509.8 429.6L514.0 434.3"/>
<path class="w" stroke="#787878" stroke-width="4.5" d="M282.4 426.0L287.8 421.8M499.3 421.0L504.9 425.2"/>
<path class="w" stroke="#727272" stroke-width="4.5" d="M287.9 421.8L294.0 417.8M493.0 417.0L499.2 421.0"/>
<path class="w" stroke="#727272" stroke-width="4" d="M294.0 417.8L300.7 414.1M486.2 413.4L493.0 417.0"/>
<path class="w" stroke="#6c6c6c" stroke-width="4" d="M300.7 414.1L307.9 410.7M308.0 410.7L315.7 407.6M471.0 407.0L478.8 410.0M478.8 410.0L486.1 413.4"/>
<path class="w" stroke="#666666" stroke-width="4" d="M315.7 407.6L323.8 404.8M323.8 404.8L332.3 402.4M454.2 401.9L462.8 404.3M462.8 404.3L471.0 407.0"/>
<path class="w" stroke="#606060" stroke-width="4" d="M332.3 402.4L341.1 400.3M341.2 400.3L350.2 398.5M350.3 398.5L359.6 397.1M359.6 397.1L369.0 396.0M417.3 395.8L426.8 396.8M426.8 396.8L436.2 398.2M436.2 398.2L445.3 399.9M445.3 399.9L454.2 401.9"/>
<path class="w" stroke="#5a5a5a" stroke-width="4" d="M369.0 396.0L378.6 395.2M378.6 395.2L388.3 394.9M388.3 394.9L398.0 394.8M398.0 394.8L407.7 395.1M407.7 395.1L417.3 395.8"/>
<path class="w" stroke="#aeaeae" stroke-width="3" d="M267.3 445.1L269.6 440.0M518.0 439.0L520.6 444.1"/>
<path class="w" stroke="#a8a8a8" stroke-width="3" d="M269.7 439.9L272.9 435.0M514.6 434.0L518.0 438.9"/>
<path class="w" stroke="#a2a2a2" stroke-width="3" d="M273.0 434.9L277.1 430.2M510.3 429.2L514.5 433.9"/>
<path class="w" stroke="#9c9c9c" stroke-width="3" d="M277.1 430.1L281.9 425.6M505.3 424.7L510.2 429.2"/>
<path class="w" stroke="#969696" stroke-width="3" d="M282.0 425.5L287.5 421.3M499.6 420.5L505.2 424.7"/>
<path class="w" stroke="#909090" stroke-width="3" d="M287.5 421.3L293.6 417.3M293.7 417.3L300.4 413.6M486.5 412.9L493.3 416.5M493.3 416.5L499.6 420.4"/>
<path class="w" stroke="#8a8a8a" stroke-width="3" d="M300.5 413.5L307.7 410.1M479.1 409.5L486.4 412.8"/>
<path class="w" stroke="#848484" stroke-width="3" d="M307.7 410.1L315.4 407.0M315.5 407.0L323.6 404.3M463.0 403.7L471.2 406.5M471.2 406.5L479.0 409.5"/>
<path class="w" stroke="#7e7e7e" stroke-width="3" d="M323.7 404.3L332.2 401.8M332.2 401.8L341.0 399.7M445.5 399.3L454.3 401.4M454.4 401.4L462.9 403.7"/>
<path class="w" stroke="#787878" stroke-width="3" d="M341.1 399.7L350.1 397.9M350.2 397.9L359.5 396.5M359.5 396.5L369.0 395.4M417.4 395.2L426.9 396.2M426.9 396.2L436.3 397.6M436.3 397.6L445.4 399.3"/>
<path class="w" stroke="#727272" stroke-width="3" d="M369.0 395.4L378.6 394.7M378.6 394.7L388.3 394.3M388.3 394.3L398.0 394.3M398.0 394.3L407.7 394.6M407.8 394.6L417.4 395.2"/>
<path class="w" stroke="#aeaeae" stroke-width="3.5" d="M520.7 444.2L522.3 449.4"/>
<path class="w" stroke="#484848" stroke-width="5.5" d="M276.2 445.7L278.3 440.9M509.4 440.0L511.7 444.7M511.7 444.7L513.2 449.6"/>
<path class="w" stroke="#424242" stroke-width="5.5" d="M278.3 440.9L281.2 436.3M281.2 436.3L284.9 431.9M506.4 435.4L509.4 440.0"/>
<path class="w" stroke="#424242" stroke-width="5" d="M284.9 431.9L289.4 427.6M498.0 426.8L502.5 431.0M502.5 431.0L506.4 435.4"/>
<path class="w" stroke="#3c3c3c" stroke-width="5" d="M289.4 427.6L294.4 423.6M294.4 423.6L300.1 419.9M300.1 419.9L306.4 416.4M480.6 415.7L487.0 419.2M487.0 419.2L492.8 422.9M492.8 422.9L498.0 426.8"/>
<path class="w" stroke="#363636" stroke-width="5" d="M306.4 416.4L313.1 413.2M313.1 413.2L320.3 410.3M320.3 410.3L328.0 407.6M328.0 407.6L336.0 405.3M450.7 404.9L458.7 407.1M458.7 407.1L466.4 409.7M466.4 409.7L473.7 412.6M473.7 412.6L480.6 415.7"/>
<path class="w" stroke="#303030" stroke-width="5" d="M336.0 405.3L344.2 403.3M344.2 403.3L352.8 401.6M352.8 401.6L361.6 400.3M361.6 400.3L370.5 399.2M370.5 399.2L379.5 398.5M379.5 398.5L388.7 398.2M388.7 398.2L397.8 398.1M397.8 398.1L406.9 398.4M406.9 398.4L416.0 399.1M416.0 399.1L424.9 400.0M424.9 400.0L433.7 401.3M433.7 401.3L442.3 402.9M442.3 402.9L450.7 404.9"/>
<path class="w" stroke="#8a8a8a" stroke-width="4.5" d="M275.8 445.5L277.9 440.7M509.8 439.8L512.1 444.5M512.1 444.6L513.6 449.5"/>
<path class="w" stroke="#848484" stroke-width="4.5" d="M278.0 440.7L280.9 436.1M506.7 435.2L509.8 439.7"/>
<path class="w" stroke="#7e7e7e" stroke-width="4.5" d="M280.9 436.0L284.6 431.6M284.7 431.6L289.1 427.3M498.2 426.5L502.8 430.7M502.8 430.7L506.7 435.1"/>
<path class="w" stroke="#787878" stroke-width="4.5" d="M289.1 427.3L294.2 423.3M493.0 422.5L498.2 426.5"/>
<path class="w" stroke="#727272" stroke-width="4.5" d="M294.2 423.3L299.9 419.5M487.2 418.8L493.0 422.5"/>
<path class="w" stroke="#727272" stroke-width="4" d="M299.9 419.5L306.2 416.0M480.8 415.4L487.1 418.8"/>
<path class="w" stroke="#6c6c6c" stroke-width="4" d="M306.2 416.0L313.0 412.8M313.0 412.8L320.2 409.9M466.6 409.3L473.9 412.2M473.9 412.2L480.8 415.4"/>
<path class="w" stroke="#666666" stroke-width="4" d="M320.2 409.9L327.8 407.3M327.9 407.3L335.8 404.9M450.8 404.5L458.8 406.8M458.9 406.8L466.6 409.3"/>
<path class="w" stroke="#606060" stroke-width="4" d="M335.9 404.9L344.2 402.9M344.2 402.9L352.7 401.2M352.7 401.2L361.5 399.9M361.5 399.9L370.4 398.9M416.0 398.7L425.0 399.7M425.0 399.7L433.8 400.9M433.8 400.9L442.4 402.6M442.4 402.6L450.8 404.5"/>
<path class="w" stroke="#5a5a5a" stroke-width="4" d="M370.5 398.9L379.5 398.2M379.5 398.2L388.6 397.8M388.7 397.8L397.8 397.8M397.8 397.8L406.9 398.1M407.0 398.1L416.0 398.7"/>
<path class="w" stroke="#aeaeae" stroke-width="3" d="M275.2 445.3L277.3 440.5M510.4 439.5L512.7 444.3"/>
<path class="w" stroke="#a8a8a8" stroke-width="3" d="M277.4 440.4L280.4 435.7M507.2 434.8L510.3 439.4"/>
<path class="w" stroke="#a2a2a2" stroke-width="3" d="M280.4 435.6L284.1 431.2M503.3 430.3L507.1 434.7"/>
<path class="w" stroke="#9c9c9c" stroke-width="3" d="M284.2 431.1L288.6 426.9M498.7 426.1L503.2 430.2"/>
<path class="w" stroke="#969696" stroke-width="3" d="M288.7 426.8L293.8 422.8M493.4 422.1L498.6 426.0"/>
<path class="w" stroke="#909090" stroke-width="3" d="M293.9 422.8L299.6 419.0M299.6 419.0L305.9 415.5M481.1 414.8L487.4 418.3M487.5 418.3L493.3 422.0"/>
<path class="w" stroke="#8a8a8a" stroke-width="3" d="M305.9 415.5L312.7 412.3M474.2 411.7L481.0 414.8"/>
<path class="w" stroke="#848484" stroke-width="3" d="M312.8 412.3L320.0 409.3M320.0 409.3L327.6 406.7M459.1 406.2L466.8 408.8M466.8 408.8L474.1 411.6"/>
<path class="w" stroke="#7e7e7e" stroke-width="3" d="M327.7 406.7L335.7 404.4M335.7 404.4L344.0 402.4M442.6 402.0L450.9 403.9M451.0 403.9L459.0 406.2"/>
<path class="w" stroke="#787878" stroke-width="3" d="M344.1 402.4L352.6 400.7M352.6 400.7L361.4 399.3M361.4 399.3L370.4 398.3M416.1 398.1L425.1 399.1M425.1 399.1L433.9 400.4M433.9 400.4L442.5 402.0"/>
<path class="w" stroke="#727272" stroke-width="3" d="M370.4 398.3L379.5 397.6M379.5 397.6L388.6 397.2M388.6 397.2L397.8 397.2M397.8 397.2L407.0 397.5M407.0 397.5L416.1 398.1"/>
<path class="w" stroke="#aeaeae" stroke-width="3.5" d="M512.8 444.4L514.2 449.3"/>
<path class="w" stroke="#484848" stroke-width="5.5" d="M284.1 445.8L286.0 441.4M501.8 440.5L503.8 444.9M503.8 444.9L505.1 449.5"/>
<path class="w" stroke="#424242" stroke-width="5.5" d="M286.0 441.4L288.7 437.1M288.7 437.1L292.1 432.9M495.4 432.1L499.0 436.2M499.0 436.2L501.8 440.5"/>
<path class="w" stroke="#424242" stroke-width="5" d="M292.1 432.9L296.1 428.9M491.3 428.2L495.4 432.1"/>
<path class="w" stroke="#3c3c3c" stroke-width="5" d="M296.1 428.9L300.8 425.2M300.8 425.2L306.1 421.6M306.1 421.6L311.9 418.4M475.2 417.7L481.1 421.0M481.1 421.0L486.5 424.5M486.5 424.5L491.3 428.2"/>
<path class="w" stroke="#363636" stroke-width="5" d="M311.9 418.4L318.2 415.3M318.2 415.3L324.9 412.6M324.9 412.6L332.1 410.1M332.1 410.1L339.5 407.9M447.2 407.5L454.8 409.6M454.8 409.6L462.0 412.1M462.0 412.1L468.8 414.8M468.8 414.8L475.2 417.7"/>
<path class="w" stroke="#303030" stroke-width="5" d="M339.5 407.9L347.3 406.0M347.3 406.0L355.3 404.4M355.3 404.4L363.5 403.1M363.5 403.1L371.9 402.2M371.9 402.2L380.4 401.5M380.4 401.5L389.0 401.2M389.0 401.2L397.6 401.1M397.6 401.1L406.2 401.4M406.2 401.4L414.7 402.0M414.7 402.0L423.1 402.9M423.1 402.9L431.3 404.1M431.3 404.1L439.4 405.7M439.4 405.7L447.2 407.5"/>
<path class="w" stroke="#8a8a8a" stroke-width="4.5" d="M283.7 445.7L285.6 441.2M502.2 440.3L504.2 444.7M504.2 444.8L505.5 449.4"/>
<path class="w" stroke="#848484" stroke-width="4.5" d="M285.7 441.1L288.3 436.8M499.3 436.0L502.1 440.3"/>
<path class="w" stroke="#7e7e7e" stroke-width="4.5" d="M288.4 436.8L291.7 432.6M291.8 432.6L295.8 428.6M491.5 427.9L495.7 431.8M495.8 431.8L499.3 435.9"/>
<path class="w" stroke="#787878" stroke-width="4.5" d="M295.9 428.6L300.6 424.9M486.7 424.1L491.5 427.8"/>
<path class="w" stroke="#727272" stroke-width="4.5" d="M300.6 424.8L305.9 421.3M305.9 421.3L311.7 418.0M475.4 417.4L481.3 420.6M481.3 420.6L486.7 424.1"/>
<path class="w" stroke="#6c6c6c" stroke-width="4" d="M311.7 418.0L318.0 415.0M318.0 415.0L324.8 412.2M462.1 411.7L468.9 414.4M468.9 414.4L475.3 417.4"/>
<path class="w" stroke="#666666" stroke-width="4" d="M324.8 412.2L331.9 409.7M331.9 409.7L339.4 407.5M447.3 407.1L454.9 409.3M454.9 409.3L462.1 411.7"/>
<path class="w" stroke="#606060" stroke-width="4" d="M339.4 407.5L347.2 405.6M347.2 405.6L355.2 404.0M355.2 404.0L363.5 402.8M363.5 402.8L371.9 401.8M414.7 401.6L423.1 402.5M423.1 402.5L431.4 403.8M431.4 403.8L439.5 405.3M439.5 405.3L447.3 407.1"/>
<path class="w" stroke="#5a5a5a" stroke-width="4" d="M371.9 401.8L380.4 401.1M380.4 401.1L389.0 400.8M389.0 400.8L397.6 400.7M397.6 400.7L406.2 401.0M406.2 401.0L414.7 401.6"/>
<path class="w" stroke="#aeaeae" stroke-width="3" d="M283.2 445.4L285.0 440.9M502.7 440.0L504.8 444.5"/>
<path class="w" stroke="#a8a8a8" stroke-width="3" d="M285.1 440.8L287.8 436.5M499.9 435.6L502.7 439.9"/>
<path class="w" stroke="#a2a2a2" stroke-width="3" d="M287.9 436.4L291.3 432.2M496.2 431.4L499.8 435.5"/>
<path class="w" stroke="#9c9c9c" stroke-width="3" d="M291.3 432.2L295.4 428.2M492.0 427.4L496.2 431.3"/>
<path class="w" stroke="#969696" stroke-width="3" d="M295.5 428.1L300.2 424.4M487.1 423.6L491.9 427.3"/>
<path class="w" stroke="#909090" stroke-width="3" d="M300.2 424.3L305.5 420.8M305.6 420.8L311.4 417.5M475.6 416.8L481.6 420.1M481.6 420.1L487.0 423.6"/>
<path class="w" stroke="#8a8a8a" stroke-width="3" d="M311.5 417.5L317.8 414.4M469.2 413.9L475.6 416.8"/>
<path class="w" stroke="#848484" stroke-width="3" d="M317.8 414.4L324.5 411.7M324.6 411.6L331.7 409.2M455.1 408.7L462.3 411.1M462.3 411.1L469.1 413.8"/>
<path class="w" stroke="#7e7e7e" stroke-width="3" d="M331.8 409.2L339.2 407.0M339.3 407.0L347.1 405.1M439.6 404.7L447.5 406.6M447.5 406.6L455.0 408.7"/>
<path class="w" stroke="#787878" stroke-width="3" d="M347.1 405.1L355.1 403.5M355.2 403.5L363.4 402.2M363.4 402.2L371.8 401.2M414.8 401.0L423.2 402.0M423.2 402.0L431.5 403.2M431.5 403.2L439.6 404.7"/>
<path class="w" stroke="#727272" stroke-width="3" d="M371.8 401.2L380.3 400.5M380.4 400.5L388.9 400.2M389.0 400.2L397.6 400.2M397.6 400.2L406.2 400.4M406.2 400.4L414.7 401.0"/>
<path class="w" stroke="#aeaeae" stroke-width="3.5" d="M504.9 444.6L506.1 449.2"/>
<path class="w" stroke="#484848" stroke-width="5.5" d="M292.1 446.0L293.8 441.8M494.1 441.0L495.9 445.1M495.9 445.1L497.0 449.3"/>
<path class="w" stroke="#424242" stroke-width="5.5" d="M293.8 441.8L296.2 437.8M296.2 437.8L299.2 433.9M488.3 433.2L491.6 437.0M491.6 437.0L494.1 441.0"/>
<path class="w" stroke="#424242" stroke-width="5" d="M299.2 433.9L302.9 430.2M484.5 429.5L488.3 433.2"/>
<path class="w" stroke="#3c3c3c" stroke-width="5" d="M302.9 430.2L307.3 426.7M307.3 426.7L312.1 423.4M312.1 423.4L317.5 420.4M469.7 419.8L475.1 422.8M475.1 422.8L480.1 426.1M480.1 426.1L484.5 429.5"/>
<path class="w" stroke="#363636" stroke-width="5" d="M317.5 420.4L323.3 417.5M323.3 417.5L329.6 414.9M329.6 414.9L336.2 412.6M336.2 412.6L343.1 410.5M443.7 410.2L450.7 412.2M450.7 412.2L457.4 414.4M457.4 414.4L463.7 417.0M463.7 417.0L469.7 419.8"/>
<path class="w" stroke="#303030" stroke-width="5" d="M343.1 410.5L350.4 408.8M350.4 408.8L357.9 407.3M357.9 407.3L365.5 406.1M365.5 406.1L373.4 405.1M373.4 405.1L381.3 404.5M381.3 404.5L389.3 404.2M389.3 404.2L397.4 404.2M397.4 404.2L405.4 404.4M405.4 404.4L413.3 405.0M413.3 405.0L421.2 405.8M421.2 405.8L428.9 407.0M428.9 407.0L436.4 408.4M436.4 408.4L443.7 410.2"/>
<path class="w" stroke="#8a8a8a" stroke-width="4.5" d="M291.7 445.8L293.4 441.7M494.5 440.8L496.3 444.9M496.3 445.0L497.4 449.2"/>
<path class="w" stroke="#848484" stroke-width="4.5" d="M293.4 441.6L295.8 437.6M491.9 436.8L494.4 440.8"/>
<path class="w" stroke="#7e7e7e" stroke-width="4.5" d="M295.8 437.5L298.9 433.7M298.9 433.6L302.7 429.9M484.8 429.2L488.6 432.9M488.7 432.9L491.9 436.7"/>
<path class="w" stroke="#787878" stroke-width="4.5" d="M302.7 429.9L307.0 426.4M480.4 425.7L484.8 429.2"/>
<path class="w" stroke="#727272" stroke-width="4.5" d="M307.0 426.4L311.9 423.1M311.9 423.1L317.3 420.0M469.9 419.4L475.3 422.4M475.4 422.5L480.3 425.7"/>
<path class="w" stroke="#6c6c6c" stroke-width="4.5" d="M317.3 420.0L323.1 417.2"/>
<path class="w" stroke="#6c6c6c" stroke-width="4" d="M323.2 417.1L329.4 414.6M457.6 414.1L463.9 416.6M463.9 416.6L469.8 419.4"/>
<path class="w" stroke="#666666" stroke-width="4" d="M329.4 414.5L336.1 412.2M336.1 412.2L343.0 410.2M443.8 409.8L450.8 411.8M450.9 411.8L457.5 414.1"/>
<path class="w" stroke="#606060" stroke-width="4" d="M343.0 410.2L350.3 408.4M350.3 408.4L357.8 406.9M357.8 406.9L365.5 405.7M365.5 405.7L373.3 404.7M413.4 404.6L421.2 405.5M421.2 405.5L429.0 406.6M429.0 406.6L436.5 408.1M436.5 408.1L443.8 409.8"/>
<path class="w" stroke="#5a5a5a" stroke-width="4" d="M373.3 404.7L381.3 404.1M381.3 404.1L389.3 403.8M389.3 403.8L397.4 403.8M397.4 403.8L405.4 404.0M405.4 404.0L413.4 404.6"/>
<path class="w" stroke="#aeaeae" stroke-width="3" d="M291.1 445.6L292.8 441.4M495.1 440.6L496.9 444.7"/>
<path class="w" stroke="#a8a8a8" stroke-width="3" d="M292.9 441.3L295.3 437.3M492.4 436.4L495.0 440.4"/>
<path class="w" stroke="#a2a2a2" stroke-width="3" d="M295.3 437.1L298.4 433.3M489.2 432.5L492.4 436.3"/>
<path class="w" stroke="#9c9c9c" stroke-width="3" d="M298.5 433.2L302.2 429.5M485.2 428.8L489.1 432.4"/>
<path class="w" stroke="#969696" stroke-width="3" d="M302.3 429.4L306.6 425.9M480.7 425.2L485.2 428.7"/>
<path class="w" stroke="#909090" stroke-width="3" d="M306.7 425.9L311.5 422.6M311.6 422.5L317.0 419.5M470.2 418.9L475.6 421.9M475.7 421.9L480.7 425.2"/>
<path class="w" stroke="#8a8a8a" stroke-width="3" d="M317.0 419.4L322.9 416.6M464.2 416.1L470.1 418.9"/>
<path class="w" stroke="#848484" stroke-width="3" d="M322.9 416.6L329.2 414.0M329.2 414.0L335.9 411.7M451.0 411.2L457.7 413.5M457.8 413.5L464.1 416.0"/>
<path class="w" stroke="#7e7e7e" stroke-width="3" d="M335.9 411.6L342.9 409.6M342.9 409.6L350.1 407.8M436.7 407.5L443.9 409.2M444.0 409.2L451.0 411.2"/>
<path class="w" stroke="#787878" stroke-width="3" d="M350.2 407.8L357.7 406.3M357.7 406.3L365.4 405.1M365.4 405.1L373.3 404.2M413.4 404.0L421.3 404.9M421.3 404.9L429.0 406.0M429.1 406.0L436.6 407.5"/>
<path class="w" stroke="#727272" stroke-width="3" d="M373.3 404.2L381.2 403.5M381.3 403.5L389.3 403.2M389.3 403.2L397.4 403.2M397.4 403.2L405.4 403.4M405.4 403.4L413.4 404.0"/>
<path class="w" stroke="#aeaeae" stroke-width="3.5" d="M497.0 444.8L498.1 449.1"/>
<path class="w" stroke="#484848" stroke-width="5.5" d="M300.0 446.1L301.5 442.3M486.4 441.5L488.0 445.3M488.0 445.3L488.9 449.2"/>
<path class="w" stroke="#424242" stroke-width="5.5" d="M301.5 442.3L303.7 438.6M303.7 438.6L306.4 435.0M481.2 434.3L484.1 437.8M484.1 437.8L486.4 441.5"/>
<path class="w" stroke="#424242" stroke-width="5" d="M306.4 435.0L309.8 431.5M477.7 430.9L481.2 434.3"/>
<path class="w" stroke="#3c3c3c" stroke-width="5" d="M309.8 431.5L313.7 428.3M313.7 428.3L318.2 425.2M318.2 425.2L323.1 422.4M464.1 421.8L469.1 424.6M469.1 424.6L473.7 427.7M473.7 427.7L477.7 430.9"/>
<path class="w" stroke="#363636" stroke-width="5" d="M323.1 422.4L328.5 419.7M328.5 419.7L334.3 417.3M334.3 417.3L340.4 415.1M340.4 415.1L346.8 413.2M440.2 412.9L446.6 414.7M446.6 414.7L452.8 416.8M452.8 416.8L458.7 419.2M458.7 419.2L464.1 421.8"/>
<path class="w" stroke="#303030" stroke-width="5" d="M346.8 413.2L353.5 411.5M353.5 411.5L360.4 410.1M360.4 410.1L367.6 409.0M367.6 409.0L374.8 408.2M374.8 408.2L382.2 407.6M382.2 407.6L389.7 407.3M389.7 407.3L397.1 407.2M397.1 407.2L404.6 407.5M404.6 407.5L412.0 408.0M412.0 408.0L419.3 408.8M419.3 408.8L426.4 409.9M426.4 409.9L433.4 411.2M433.4 411.2L440.2 412.9"/>
<path class="w" stroke="#8a8a8a" stroke-width="4.5" d="M299.6 445.9L301.1 442.1M486.8 441.3L488.4 445.1M488.4 445.2L489.4 449.1"/>
<path class="w" stroke="#848484" stroke-width="4.5" d="M301.2 442.1L303.3 438.3M484.5 437.6L486.7 441.3"/>
<path class="w" stroke="#7e7e7e" stroke-width="4.5" d="M303.3 438.3L306.1 434.7M306.1 434.7L309.5 431.3M478.0 430.6L481.5 434.0M481.5 434.0L484.4 437.6"/>
<path class="w" stroke="#787878" stroke-width="4.5" d="M309.5 431.2L313.5 428.0M473.9 427.3L478.0 430.6"/>
<path class="w" stroke="#727272" stroke-width="4.5" d="M313.5 427.9L318.0 424.9M318.0 424.9L322.9 422.0M464.3 421.5L469.3 424.3M469.4 424.3L473.9 427.3"/>
<path class="w" stroke="#6c6c6c" stroke-width="4.5" d="M322.9 422.0L328.3 419.4M458.8 418.8L464.3 421.4"/>
<path class="w" stroke="#6c6c6c" stroke-width="4" d="M328.3 419.3L334.1 416.9M453.0 416.5L458.8 418.8"/>
<path class="w" stroke="#666666" stroke-width="4" d="M334.1 416.9L340.2 414.8M340.3 414.7L346.7 412.8M440.3 412.5L446.8 414.3M446.8 414.3L453.0 416.5"/>
<path class="w" stroke="#606060" stroke-width="4" d="M346.7 412.8L353.4 411.2M353.4 411.2L360.4 409.8M360.4 409.8L367.5 408.6M367.5 408.6L374.8 407.8M412.0 407.6L419.3 408.4M419.3 408.4L426.5 409.5M426.5 409.5L433.5 410.9M433.5 410.9L440.2 412.5"/>
<path class="w" stroke="#5a5a5a" stroke-width="4" d="M374.8 407.8L382.2 407.2M382.2 407.2L389.6 406.9M389.7 406.9L397.1 406.8M397.1 406.8L404.6 407.1M404.6 407.1L412.0 407.6"/>
<path class="w" stroke="#aeaeae" stroke-width="3" d="M299.0 445.7L300.5 441.9M487.4 441.1L489.0 444.9"/>
<path class="w" stroke="#a8a8a8" stroke-width="3" d="M300.6 441.7L302.7 438.0M485.0 437.3L487.3 441.0"/>
<path class="w" stroke="#a2a2a2" stroke-width="3" d="M302.8 437.9L305.6 434.3M482.0 433.6L484.9 437.2"/>
<path class="w" stroke="#9c9c9c" stroke-width="3" d="M305.7 434.2L309.1 430.8M478.5 430.1L481.9 433.5"/>
<path class="w" stroke="#969696" stroke-width="3" d="M309.1 430.7L313.1 427.5M474.3 426.8L478.4 430.1"/>
<path class="w" stroke="#909090" stroke-width="3" d="M313.2 427.4L317.6 424.4M317.7 424.3L322.6 421.5M464.6 420.9L469.6 423.7M469.7 423.8L474.3 426.8"/>
<path class="w" stroke="#8a8a8a" stroke-width="3" d="M322.7 421.4L328.0 418.8M459.1 418.3L464.6 420.9"/>
<path class="w" stroke="#848484" stroke-width="3" d="M328.1 418.8L333.9 416.4M333.9 416.4L340.0 414.2M447.0 413.8L453.2 415.9M453.2 415.9L459.0 418.3"/>
<path class="w" stroke="#7e7e7e" stroke-width="3" d="M340.1 414.2L346.5 412.3M346.6 412.2L353.3 410.6M433.6 410.3L440.4 411.9M440.4 411.9L446.9 413.8"/>
<path class="w" stroke="#787878" stroke-width="3" d="M353.3 410.6L360.3 409.2M360.3 409.2L367.4 408.0M367.5 408.0L374.7 407.2M412.1 407.0L419.4 407.8M419.4 407.8L426.6 408.9M426.6 408.9L433.6 410.3"/>
<path class="w" stroke="#727272" stroke-width="3" d="M374.8 407.2L382.1 406.6M382.2 406.6L389.6 406.3M389.7 406.3L397.1 406.3M397.2 406.3L404.6 406.5M404.6 406.5L412.0 407.0"/>
<path class="w" stroke="#aeaeae" stroke-width="3.5" d="M489.1 445.1L490.0 449.0"/>
<path class="w" stroke="#484848" stroke-width="5.5" d="M308.0 446.2L309.3 442.7M478.7 442.0L480.1 445.5M480.1 445.5L480.9 449.1"/>
<path class="w" stroke="#424242" stroke-width="5.5" d="M309.3 442.7L311.2 439.3M311.2 439.3L313.7 436.0M313.7 436.0L316.7 432.9M474.0 435.4L476.6 438.6M476.6 438.6L478.7 442.0"/>
<path class="w" stroke="#3c3c3c" stroke-width="5" d="M316.7 432.9L320.3 429.9M320.3 429.9L324.3 427.0M324.3 427.0L328.8 424.4M458.5 423.9L463.1 426.5M463.1 426.5L467.2 429.3M467.2 429.3L470.9 432.3"/>
<path class="w" stroke="#363636" stroke-width="5" d="M328.8 424.4L333.7 421.9M333.7 421.9L339.0 419.7M339.0 419.7L344.6 417.7M344.6 417.7L350.5 415.9M436.5 415.6L442.5 417.3M442.5 417.3L448.2 419.3M448.2 419.3L453.5 421.5M453.5 421.5L458.5 423.9"/>
<path class="w" stroke="#303030" stroke-width="5" d="M350.5 415.9L356.7 414.4M356.7 414.4L363.1 413.1M363.1 413.1L369.6 412.0M369.6 412.0L376.3 411.2M376.3 411.2L383.1 410.7M383.1 410.7L390.0 410.4M390.0 410.4L396.9 410.4M396.9 410.4L403.8 410.6M403.8 410.6L410.6 411.1M410.6 411.1L417.3 411.8M417.3 411.8L423.9 412.8M423.9 412.8L430.3 414.1M430.3 414.1L436.5 415.6"/>
<path class="w" stroke="#424242" stroke-width="5" d="M470.9 432.3L474.0 435.4"/>
<path class="w" stroke="#8a8a8a" stroke-width="4.5" d="M307.6 446.1L308.9 442.6M479.1 441.9L480.5 445.4M480.5 445.4L481.3 449.0"/>
<path class="w" stroke="#848484" stroke-width="4.5" d="M308.9 442.5L310.8 439.1M477.0 438.4L479.0 441.8"/>
<path class="w" stroke="#7e7e7e" stroke-width="4.5" d="M310.9 439.1L313.3 435.8M313.4 435.7L316.4 432.6M471.2 432.0L474.3 435.1M474.4 435.1L477.0 438.4"/>
<path class="w" stroke="#787878" stroke-width="4.5" d="M316.4 432.5L320.0 429.5M467.5 429.0L471.2 431.9"/>
<path class="w" stroke="#727272" stroke-width="4.5" d="M320.0 429.5L324.1 426.7M324.1 426.7L328.6 424.0M458.7 423.5L463.3 426.1M463.3 426.1L467.5 428.9"/>
<path class="w" stroke="#6c6c6c" stroke-width="4.5" d="M328.6 424.0L333.5 421.6M333.6 421.6L338.8 419.3M448.3 418.9L453.7 421.1M453.7 421.1L458.7 423.5"/>
<path class="w" stroke="#666666" stroke-width="4" d="M338.9 419.3L344.5 417.3M344.5 417.3L350.4 415.5M436.7 415.2L442.6 416.9M442.6 416.9L448.3 418.9"/>
<path class="w" stroke="#606060" stroke-width="4" d="M350.4 415.5L356.6 414.0M356.6 414.0L363.0 412.7M363.0 412.7L369.6 411.6M369.6 411.6L376.3 410.8M410.6 410.7L417.4 411.4M417.4 411.4L424.0 412.4M424.0 412.4L430.4 413.7M430.4 413.7L436.6 415.2"/>
<path class="w" stroke="#5a5a5a" stroke-width="4" d="M376.3 410.8L383.1 410.3M383.1 410.3L390.0 410.0M390.0 410.0L396.9 410.0M396.9 410.0L403.8 410.2M403.8 410.2L410.6 410.7"/>
<path class="w" stroke="#aeaeae" stroke-width="3" d="M307.0 445.8L308.3 442.3M479.7 441.6L481.1 445.1"/>
<path class="w" stroke="#a8a8a8" stroke-width="3" d="M308.4 442.2L310.3 438.8M477.6 438.1L479.6 441.5"/>
<path class="w" stroke="#a2a2a2" stroke-width="3" d="M310.3 438.7L312.8 435.4M474.9 434.7L477.5 438.0"/>
<path class="w" stroke="#9c9c9c" stroke-width="3" d="M312.9 435.3L316.0 432.1M471.6 431.5L474.8 434.6"/>
<path class="w" stroke="#969696" stroke-width="3" d="M316.0 432.1L319.6 429.1M467.9 428.5L471.5 431.4"/>
<path class="w" stroke="#909090" stroke-width="3" d="M319.7 429.0L323.7 426.2M323.8 426.1L328.3 423.5M459.0 423.0L463.6 425.6M463.7 425.6L467.8 428.4"/>
<path class="w" stroke="#8a8a8a" stroke-width="3" d="M328.4 423.5L333.3 421.0M454.0 420.6L459.0 423.0"/>
<path class="w" stroke="#848484" stroke-width="3" d="M333.3 421.0L338.6 418.8M338.7 418.8L344.3 416.7M442.8 416.4L448.5 418.3M448.6 418.3L453.9 420.5"/>
<path class="w" stroke="#7e7e7e" stroke-width="3" d="M344.3 416.7L350.2 415.0M350.3 414.9L356.4 413.4M430.6 413.1L436.8 414.6M436.8 414.6L442.8 416.4"/>
<path class="w" stroke="#787878" stroke-width="3" d="M356.5 413.4L362.9 412.1M362.9 412.1L369.5 411.0M369.5 411.0L376.2 410.2M410.7 410.1L417.4 410.8M417.5 410.9L424.1 411.9M424.1 411.9L430.5 413.1"/>
<path class="w" stroke="#727272" stroke-width="3" d="M376.3 410.2L383.1 409.7M383.1 409.7L390.0 409.4M390.0 409.4L396.9 409.4M396.9 409.4L403.8 409.6M403.8 409.6L410.7 410.1"/>
<path class="w" stroke="#aeaeae" stroke-width="3.5" d="M481.1 445.3L481.9 448.8"/>
<path class="w" stroke="#484848" stroke-width="5.5" d="M316.0 446.4L317.1 443.2M470.9 442.5L472.1 445.7M472.1 445.7L472.8 448.9"/>
<path class="w" stroke="#424242" stroke-width="5.5" d="M317.1 443.2L318.7 440.1M318.7 440.1L321.0 437.1M321.0 437.1L323.7 434.2M464.0 433.6L466.8 436.5M466.8 436.5L469.1 439.5M469.1 439.5L470.9 442.5"/>
<path class="w" stroke="#3c3c3c" stroke-width="5" d="M323.7 434.2L326.9 431.4M326.9 431.4L330.5 428.9M330.5 428.9L334.6 426.4M452.8 426.0L457.0 428.4M457.0 428.4L460.7 430.9M460.7 430.9L464.0 433.6"/>
<path class="w" stroke="#363636" stroke-width="5" d="M334.6 426.4L339.0 424.2M339.0 424.2L343.8 422.1M343.8 422.1L348.9 420.3M348.9 420.3L354.3 418.7M432.9 418.4L438.3 420.0M438.3 420.0L443.5 421.8M443.5 421.8L448.3 423.8M448.3 423.8L452.8 426.0"/>
<path class="w" stroke="#303030" stroke-width="5" d="M354.3 418.7L359.9 417.2M359.9 417.2L365.7 416.0M365.7 416.0L371.7 415.1M371.7 415.1L377.9 414.3M377.9 414.3L384.1 413.8M384.1 413.8L390.4 413.6M390.4 413.6L396.7 413.5M396.7 413.5L402.9 413.8M402.9 413.8L409.2 414.2M409.2 414.2L415.3 414.9M415.3 414.9L421.4 415.8M421.4 415.8L427.2 417.0M427.2 417.0L432.9 418.4"/>
<path class="w" stroke="#8a8a8a" stroke-width="4.5" d="M315.5 446.2L316.7 443.0M471.3 442.4L472.5 445.6M472.6 445.6L473.2 448.9"/>
<path class="w" stroke="#848484" stroke-width="4.5" d="M316.7 443.0L318.4 439.9M469.5 439.2L471.3 442.3"/>
<path class="w" stroke="#7e7e7e" stroke-width="4.5" d="M318.4 439.8L320.6 436.8M320.6 436.8L323.4 433.9M464.3 433.3L467.1 436.2M467.2 436.2L469.5 439.2"/>
<path class="w" stroke="#787878" stroke-width="4.5" d="M323.4 433.9L326.6 431.1M461.0 430.6L464.3 433.3"/>
<path class="w" stroke="#727272" stroke-width="4.5" d="M326.6 431.1L330.3 428.5M330.3 428.5L334.4 426.1M453.1 425.6L457.2 428.0M457.2 428.0L461.0 430.6"/>
<path class="w" stroke="#6c6c6c" stroke-width="4.5" d="M334.4 426.1L338.8 423.8M338.9 423.8L343.6 421.8M443.6 421.4L448.5 423.4M448.5 423.4L453.0 425.6"/>
<path class="w" stroke="#666666" stroke-width="4.5" d="M343.7 421.8L348.8 419.9M348.8 419.9L354.2 418.3M433.0 418.0L438.4 419.6M438.4 419.6L443.6 421.4"/>
<path class="w" stroke="#606060" stroke-width="4" d="M354.2 418.3L359.8 416.8M359.8 416.8L365.7 415.6M365.7 415.6L371.7 414.7M371.7 414.7L377.8 413.9M409.2 413.8L415.4 414.5M415.4 414.5L421.4 415.4M421.4 415.4L427.3 416.6M427.3 416.6L433.0 418.0"/>
<path class="w" stroke="#5a5a5a" stroke-width="4" d="M377.8 413.9L384.0 413.4M384.1 413.4L390.3 413.2M390.4 413.2L396.7 413.1M396.7 413.1L403.0 413.4M403.0 413.4L409.2 413.8"/>
<path class="w" stroke="#aeaeae" stroke-width="3" d="M314.9 446.0L316.1 442.8M471.9 442.2L473.2 445.3"/>
<path class="w" stroke="#a8a8a8" stroke-width="3" d="M316.1 442.7L317.8 439.6M470.1 438.9L471.8 442.0"/>
<path class="w" stroke="#a2a2a2" stroke-width="3" d="M317.9 439.4L320.1 436.4M467.7 435.8L470.0 438.8"/>
<path class="w" stroke="#9c9c9c" stroke-width="3" d="M320.2 436.3L322.9 433.5M464.8 432.9L467.6 435.7"/>
<path class="w" stroke="#969696" stroke-width="3" d="M323.0 433.4L326.2 430.7M461.4 430.1L464.7 432.8"/>
<path class="w" stroke="#909090" stroke-width="3" d="M326.3 430.6L329.9 428.0M330.0 428.0L334.0 425.5M453.4 425.1L457.5 427.5M457.6 427.5L461.3 430.1"/>
<path class="w" stroke="#8a8a8a" stroke-width="3" d="M334.1 425.5L338.6 423.3M448.8 422.8L453.3 425.1"/>
<path class="w" stroke="#848484" stroke-width="3" d="M338.6 423.3L343.4 421.2M343.5 421.2L348.6 419.3M438.6 419.0L443.8 420.8M443.9 420.8L448.7 422.8"/>
<path class="w" stroke="#7e7e7e" stroke-width="3" d="M348.6 419.3L354.0 417.7M354.0 417.7L359.7 416.3M427.5 416.0L433.1 417.4M433.2 417.4L438.6 419.0"/>
<path class="w" stroke="#787878" stroke-width="3" d="M359.7 416.2L365.5 415.1M365.6 415.0L371.6 414.1M371.6 414.1L377.7 413.3M409.3 413.2L415.4 413.9M415.5 413.9L421.5 414.8M421.5 414.8L427.4 416.0"/>
<path class="w" stroke="#727272" stroke-width="3" d="M377.8 413.3L384.0 412.8M384.0 412.8L390.3 412.6M390.4 412.6L396.7 412.5M396.7 412.5L403.0 412.8M403.0 412.8L409.3 413.2"/>
<path class="w" stroke="#aeaeae" stroke-width="3.5" d="M473.2 445.5L473.9 448.7"/>
<path class="w" stroke="#5a5a5a" stroke-width="5" d="M391.1 488.2L390.8 492.8M376.3 487.3L374.3 491.7M420.6 486.1L423.5 490.4M406.1 487.8L407.4 492.3"/>
<path class="w" stroke="#5a5a5a" stroke-width="4.5" d="M362.2 485.0L358.6 489.2M349.3 481.6L344.3 485.3M338.0 477.1L331.9 480.3M328.8 471.7L321.7 474.4M321.9 465.8L314.2 467.7M317.5 459.4L309.4 460.6M315.5 452.9L307.3 453.4M472.3 455.5L480.4 456.3M469.3 462.0L477.3 463.5M463.9 468.2L471.4 470.4M456.0 474.0L462.8 476.8M446.0 479.0L451.7 482.5M434.0 483.1L438.5 487.0"/>
<path class="w" stroke="#545454" stroke-width="4.5" d="M472.8 448.9L480.9 449.1"/>
<path class="w" stroke="#b4b4b4" stroke-width="3.5" d="M391.1 488.2L390.8 492.8M376.3 487.3L374.3 491.7M362.2 485.0L358.6 489.2M349.3 481.6L344.3 485.3M338.0 477.1L331.9 480.3M328.8 471.7L321.7 474.4M321.9 465.8L314.2 467.7M317.5 459.4L309.4 460.6M315.5 452.9L307.3 453.4M472.8 448.9L480.9 449.1M472.3 455.5L480.4 456.3M469.3 462.0L477.3 463.5M463.9 468.2L471.4 470.4M456.0 474.0L462.8 476.8M446.0 479.0L451.7 482.5M434.0 483.1L438.5 487.0M420.6 486.1L423.5 490.4M406.1 487.8L407.4 492.3"/>
<path class="w" stroke="#e4e4e4" stroke-width="2" d="M391.1 488.2L390.8 492.8M376.3 487.3L374.3 491.7M362.2 485.0L358.6 489.2M349.3 481.6L344.3 485.3M338.0 477.1L331.9 480.3M328.8 471.7L321.7 474.4M321.9 465.8L314.2 467.7M317.5 459.4L309.4 460.6M315.5 452.9L307.3 453.4M472.3 455.5L480.4 456.3M469.3 462.0L477.3 463.5M463.9 468.2L471.4 470.4M456.0 474.0L462.8 476.8M446.0 479.0L451.7 482.5M434.0 483.1L438.5 487.0M420.6 486.1L423.5 490.4M406.1 487.8L407.4 492.3"/>
<path class="w" stroke="#dedede" stroke-width="1.5" d="M472.8 448.9L480.9 449.1"/>
<path class="w" stroke="#5a5a5a" stroke-width="5" d="M390.8 492.8L390.5 497.4M374.3 491.7L372.3 496.3M358.6 489.2L355.0 493.5M438.5 487.0L443.0 491.1M423.5 490.4L426.6 494.8M407.4 492.3L408.8 496.9"/>
<path class="w" stroke="#5a5a5a" stroke-width="4.5" d="M344.3 485.3L339.2 489.2M331.9 480.3L325.6 483.6M321.7 474.4L314.6 477.0M314.2 467.7L306.4 469.7M309.4 460.6L301.3 461.9M307.3 453.4L299.2 453.9M480.4 456.3L488.6 457.1M477.3 463.5L485.3 465.0M471.4 470.4L479.0 472.7M462.8 476.8L469.6 479.8M451.7 482.5L457.5 486.0"/>
<path class="w" stroke="#545454" stroke-width="4.5" d="M480.9 449.1L488.9 449.2"/>
<path class="w" stroke="#b4b4b4" stroke-width="4" d="M390.8 492.8L390.5 497.4M374.3 491.7L372.3 496.3M407.4 492.3L408.8 496.9"/>
<path class="w" stroke="#b4b4b4" stroke-width="3.5" d="M358.6 489.2L355.0 493.5M344.3 485.3L339.2 489.2M331.9 480.3L325.6 483.6M321.7 474.4L314.6 477.0M314.2 467.7L306.4 469.7M309.4 460.6L301.3 461.9M307.3 453.4L299.2 453.9M480.9 449.1L488.9 449.2M480.4 456.3L488.6 457.1M477.3 463.5L485.3 465.0M471.4 470.4L479.0 472.7M462.8 476.8L469.6 479.8M451.7 482.5L457.5 486.0M438.5 487.0L443.0 491.1M423.5 490.4L426.6 494.8"/>
<path class="w" stroke="#e4e4e4" stroke-width="2" d="M390.8 492.8L390.5 497.4M374.3 491.7L372.3 496.3M358.6 489.2L355.0 493.5M344.3 485.3L339.2 489.2M331.9 480.3L325.6 483.6M321.7 474.4L314.6 477.0M314.2 467.7L306.4 469.7M309.4 460.6L301.3 461.9M307.3 453.4L299.2 453.9M480.4 456.3L488.6 457.1M477.3 463.5L485.3 465.0M471.4 470.4L479.0 472.7M462.8 476.8L469.6 479.8M451.7 482.5L457.5 486.0M438.5 487.0L443.0 491.1M423.5 490.4L426.6 494.8M407.4 492.3L408.8 496.9"/>
<path class="w" stroke="#dedede" stroke-width="1.5" d="M480.9 449.1L488.9 449.2"/>
<path class="w" stroke="#5a5a5a" stroke-width="5" d="M390.5 497.4L390.1 502.2M372.3 496.3L370.2 500.9M355.0 493.5L351.2 497.8M339.2 489.2L334.1 493.1M443.0 491.1L447.6 495.1M426.6 494.8L429.6 499.2M408.8 496.9L410.2 501.6"/>
<path class="w" stroke="#5a5a5a" stroke-width="4.5" d="M325.6 483.6L319.3 486.9M314.6 477.0L307.3 479.7M306.4 469.7L298.5 471.7M301.3 461.9L293.1 463.1M299.2 453.9L291.0 454.5M488.6 457.1L496.8 458.0M485.3 465.0L493.4 466.6M479.0 472.7L486.6 474.9M469.6 479.8L476.6 482.7M457.5 486.0L463.4 489.5"/>
<path class="w" stroke="#545454" stroke-width="4.5" d="M488.9 449.2L497.0 449.3"/>
<path class="w" stroke="#b4b4b4" stroke-width="4" d="M390.5 497.4L390.1 502.2M372.3 496.3L370.2 500.9M355.0 493.5L351.2 497.8M426.6 494.8L429.6 499.2M408.8 496.9L410.2 501.6"/>
<path class="w" stroke="#b4b4b4" stroke-width="3.5" d="M339.2 489.2L334.1 493.1M325.6 483.6L319.3 486.9M314.6 477.0L307.3 479.7M306.4 469.7L298.5 471.7M301.3 461.9L293.1 463.1M299.2 453.9L291.0 454.5M488.9 449.2L497.0 449.3M488.6 457.1L496.8 458.0M485.3 465.0L493.4 466.6M479.0 472.7L486.6 474.9M469.6 479.8L476.6 482.7M457.5 486.0L463.4 489.5M443.0 491.1L447.6 495.1"/>
<path class="w" stroke="#e4e4e4" stroke-width="2" d="M390.5 497.4L390.1 502.2M372.3 496.3L370.2 500.9M355.0 493.5L351.2 497.8M339.2 489.2L334.1 493.1M325.6 483.6L319.3 486.9M314.6 477.0L307.3 479.7M306.4 469.7L298.5 471.7M301.3 461.9L293.1 463.1M299.2 453.9L291.0 454.5M488.6 457.1L496.8 458.0M485.3 465.0L493.4 466.6M479.0 472.7L486.6 474.9M469.6 479.8L476.6 482.7M457.5 486.0L463.4 489.5M443.0 491.1L447.6 495.1M426.6 494.8L429.6 499.2M408.8 496.9L410.2 501.6"/>
<path class="w" stroke="#dedede" stroke-width="1.5" d="M488.9 449.2L497.0 449.3"/>
<path class="w" stroke="#5a5a5a" stroke-width="5" d="M390.1 502.2L389.7 507.1M370.2 500.9L368.0 505.6M351.2 497.8L347.5 502.2M334.1 493.1L328.8 497.0M319.3 486.9L312.8 490.3M463.4 489.5L469.4 493.2M447.6 495.1L452.3 499.3M429.6 499.2L432.8 503.8M410.2 501.6L411.6 506.4"/>
<path class="w" stroke="#5a5a5a" stroke-width="4.5" d="M307.3 479.7L300.0 482.4M298.5 471.7L290.6 473.6M293.1 463.1L284.9 464.4M291.0 454.5L282.8 455.0M496.8 458.0L505.1 458.8M493.4 466.6L501.5 468.1M486.6 474.9L494.4 477.2M476.6 482.7L483.6 485.7"/>
<path class="w" stroke="#545454" stroke-width="4.5" d="M497.0 449.3L505.1 449.5"/>
<path class="w" stroke="#b4b4b4" stroke-width="4" d="M390.1 502.2L389.7 507.1M370.2 500.9L368.0 505.6M351.2 497.8L347.5 502.2M334.1 493.1L328.8 497.0M447.6 495.1L452.3 499.3M429.6 499.2L432.8 503.8M410.2 501.6L411.6 506.4"/>
<path class="w" stroke="#b4b4b4" stroke-width="3.5" d="M319.3 486.9L312.8 490.3M307.3 479.7L300.0 482.4M298.5 471.7L290.6 473.6M293.1 463.1L284.9 464.4M291.0 454.5L282.8 455.0M497.0 449.3L505.1 449.5M496.8 458.0L505.1 458.8M493.4 466.6L501.5 468.1M486.6 474.9L494.4 477.2M476.6 482.7L483.6 485.7M463.4 489.5L469.4 493.2"/>
<path class="w" stroke="#e4e4e4" stroke-width="2" d="M390.1 502.2L389.7 507.1M370.2 500.9L368.0 505.6M351.2 497.8L347.5 502.2M334.1 493.1L328.8 497.0M319.3 486.9L312.8 490.3M307.3 479.7L300.0 482.4M298.5 471.7L290.6 473.6M293.1 463.1L284.9 464.4M291.0 454.5L282.8 455.0M496.8 458.0L505.1 458.8M493.4 466.6L501.5 468.1M486.6 474.9L494.4 477.2M476.6 482.7L483.6 485.7M463.4 489.5L469.4 493.2M447.6 495.1L452.3 499.3M429.6 499.2L432.8 503.8M410.2 501.6L411.6 506.4"/>
<path class="w" stroke="#dedede" stroke-width="1.5" d="M497.0 449.3L505.1 449.5"/>
<path class="w" stroke="#5a5a5a" stroke-width="5" d="M389.7 507.1L389.4 512.0M368.0 505.6L365.9 510.5M347.5 502.2L343.6 506.7M328.8 497.0L323.5 501.1M312.8 490.3L306.3 493.7M469.4 493.2L475.5 496.8M452.3 499.3L457.1 503.5M432.8 503.8L436.0 508.5M411.6 506.4L413.1 511.3"/>
<path class="w" stroke="#5a5a5a" stroke-width="4.5" d="M300.0 482.4L292.5 485.1M290.6 473.6L282.6 475.7M284.9 464.4L276.6 465.7M282.8 455.0L274.6 455.6M505.1 458.8L513.3 459.6M501.5 468.1L509.7 469.7M494.4 477.2L502.2 479.5M483.6 485.7L490.7 488.7"/>
<path class="w" stroke="#545454" stroke-width="4.5" d="M505.1 449.5L513.2 449.6"/>
<path class="w" stroke="#b4b4b4" stroke-width="4" d="M389.7 507.1L389.4 512.0M368.0 505.6L365.9 510.5M347.5 502.2L343.6 506.7M328.8 497.0L323.5 501.1M469.4 493.2L475.5 496.8M452.3 499.3L457.1 503.5M432.8 503.8L436.0 508.5M411.6 506.4L413.1 511.3"/>
<path class="w" stroke="#b4b4b4" stroke-width="3.5" d="M312.8 490.3L306.3 493.7M300.0 482.4L292.5 485.1M290.6 473.6L282.6 475.7M284.9 464.4L276.6 465.7M282.8 455.0L274.6 455.6M505.1 449.5L513.2 449.6M505.1 458.8L513.3 459.6M501.5 468.1L509.7 469.7M494.4 477.2L502.2 479.5M483.6 485.7L490.7 488.7"/>
<path class="w" stroke="#e4e4e4" stroke-width="2" d="M389.7 507.1L389.4 512.0M368.0 505.6L365.9 510.5M347.5 502.2L343.6 506.7M328.8 497.0L323.5 501.1M312.8 490.3L306.3 493.7M300.0 482.4L292.5 485.1M290.6 473.6L282.6 475.7M284.9 464.4L276.6 465.7M282.8 455.0L274.6 455.6M505.1 458.8L513.3 459.6M501.5 468.1L509.7 469.7M494.4 477.2L502.2 479.5M483.6 485.7L490.7 488.7M469.4 493.2L475.5 496.8M452.3 499.3L457.1 503.5M432.8 503.8L436.0 508.5M411.6 506.4L413.1 511.3"/>
<path class="w" stroke="#dedede" stroke-width="1.5" d="M505.1 449.5L513.2 449.6"/>
<path class="w" stroke="#5a5a5a" stroke-width="5" d="M389.4 512.0L389.0 517.1M365.9 510.5L363.7 515.4M343.6 506.7L339.7 511.3M323.5 501.1L318.1 505.2M306.3 493.7L299.6 497.2M490.7 488.7L497.9 491.8M475.5 496.8L481.7 500.6M457.1 503.5L461.9 507.9M436.0 508.5L439.2 513.2M413.1 511.3L414.6 516.3"/>
<path class="w" stroke="#5a5a5a" stroke-width="4.5" d="M292.5 485.1L285.0 487.9M282.6 475.7L274.6 477.7M276.6 465.7L268.3 466.9M274.6 455.6L266.3 456.1M513.3 459.6L521.6 460.4M509.7 469.7L518.0 471.3M502.2 479.5L510.0 481.9"/>
<path class="w" stroke="#545454" stroke-width="4.5" d="M513.2 449.6L521.2 449.7"/>
<path class="w" stroke="#b4b4b4" stroke-width="4" d="M389.4 512.0L389.0 517.1M365.9 510.5L363.7 515.4M343.6 506.7L339.7 511.3M323.5 501.1L318.1 505.2M306.3 493.7L299.6 497.2M475.5 496.8L481.7 500.6M457.1 503.5L461.9 507.9M436.0 508.5L439.2 513.2M413.1 511.3L414.6 516.3"/>
<path class="w" stroke="#b4b4b4" stroke-width="3.5" d="M292.5 485.1L285.0 487.9M282.6 475.7L274.6 477.7M276.6 465.7L268.3 466.9M274.6 455.6L266.3 456.1M513.2 449.6L521.2 449.7M513.3 459.6L521.6 460.4M509.7 469.7L518.0 471.3M502.2 479.5L510.0 481.9M490.7 488.7L497.9 491.8"/>
<path class="w" stroke="#e4e4e4" stroke-width="2" d="M389.4 512.0L389.0 517.1M365.9 510.5L363.7 515.4M343.6 506.7L339.7 511.3M323.5 501.1L318.1 505.2M306.3 493.7L299.6 497.2M292.5 485.1L285.0 487.9M282.6 475.7L274.6 477.7M276.6 465.7L268.3 466.9M274.6 455.6L266.3 456.1M513.3 459.6L521.6 460.4M509.7 469.7L518.0 471.3M502.2 479.5L510.0 481.9M490.7 488.7L497.9 491.8M475.5 496.8L481.7 500.6M457.1 503.5L461.9 507.9M436.0 508.5L439.2 513.2M413.1 511.3L414.6 516.3"/>
<path class="w" stroke="#dedede" stroke-width="1.5" d="M513.2 449.6L521.2 449.7"/>
<path class="w" stroke="#5a5a5a" stroke-width="5" d="M389.0 517.1L388.6 522.2M363.7 515.4L361.4 520.4M339.7 511.3L335.7 516.0M318.1 505.2L312.6 509.3M299.6 497.2L292.9 500.7M285.0 487.9L277.4 490.7M497.9 491.8L505.2 494.9M481.7 500.6L488.0 504.4M461.9 507.9L466.9 512.2M439.2 513.2L442.6 518.0M414.6 516.3L416.1 521.4"/>
<path class="w" stroke="#5a5a5a" stroke-width="4.5" d="M274.6 477.7L266.4 479.7M268.3 466.9L260.0 468.2M266.3 456.1L258.1 456.7M521.6 460.4L530.0 461.3M518.0 471.3L526.3 472.9M510.0 481.9L518.0 484.2"/>
<path class="w" stroke="#545454" stroke-width="4.5" d="M521.2 449.7L529.3 449.9"/>
<path class="w" stroke="#b4b4b4" stroke-width="4" d="M389.0 517.1L388.6 522.2M363.7 515.4L361.4 520.4M339.7 511.3L335.7 516.0M318.1 505.2L312.6 509.3M299.6 497.2L292.9 500.7M481.7 500.6L488.0 504.4M461.9 507.9L466.9 512.2M439.2 513.2L442.6 518.0M414.6 516.3L416.1 521.4"/>
<path class="w" stroke="#b4b4b4" stroke-width="3.5" d="M285.0 487.9L277.4 490.7M274.6 477.7L266.4 479.7M268.3 466.9L260.0 468.2M266.3 456.1L258.1 456.7M521.2 449.7L529.3 449.9M521.6 460.4L530.0 461.3M518.0 471.3L526.3 472.9M510.0 481.9L518.0 484.2M497.9 491.8L505.2 494.9"/>
<path class="w" stroke="#e4e4e4" stroke-width="2" d="M389.0 517.1L388.6 522.2M363.7 515.4L361.4 520.4M339.7 511.3L335.7 516.0M318.1 505.2L312.6 509.3M299.6 497.2L292.9 500.7M285.0 487.9L277.4 490.7M274.6 477.7L266.4 479.7M268.3 466.9L260.0 468.2M266.3 456.1L258.1 456.7M521.6 460.4L530.0 461.3M518.0 471.3L526.3 472.9M510.0 481.9L518.0 484.2M497.9 491.8L505.2 494.9M481.7 500.6L488.0 504.4M461.9 507.9L466.9 512.2M439.2 513.2L442.6 518.0M414.6 516.3L416.1 521.4"/>
<path class="w" stroke="#dedede" stroke-width="1.5" d="M521.2 449.7L529.3 449.9"/>
<path class="w" stroke="#5a5a5a" stroke-width="5" d="M388.6 522.2L388.2 527.5M361.4 520.4L359.1 525.5M335.7 516.0L331.6 520.8M312.6 509.3L306.9 513.6M292.9 500.7L286.1 504.3M277.4 490.7L269.7 493.6M505.2 494.9L512.6 498.0M488.0 504.4L494.4 508.2M466.9 512.2L471.9 516.7M442.6 518.0L446.0 523.0M416.1 521.4L417.6 526.7"/>
<path class="w" stroke="#5a5a5a" stroke-width="4.5" d="M266.4 479.7L258.2 481.8M260.0 468.2L251.6 469.5M258.1 456.7L249.8 457.2M530.0 461.3L538.3 462.1M526.3 472.9L534.6 474.5M518.0 484.2L526.1 486.6"/>
<path class="w" stroke="#545454" stroke-width="4.5" d="M529.3 449.9L537.4 450.0"/>
<path class="w" stroke="#b4b4b4" stroke-width="4" d="M388.6 522.2L388.2 527.5M361.4 520.4L359.1 525.5M335.7 516.0L331.6 520.8M312.6 509.3L306.9 513.6M292.9 500.7L286.1 504.3M505.2 494.9L512.6 498.0M488.0 504.4L494.4 508.2M466.9 512.2L471.9 516.7M442.6 518.0L446.0 523.0M416.1 521.4L417.6 526.7"/>
<path class="w" stroke="#b4b4b4" stroke-width="3.5" d="M277.4 490.7L269.7 493.6M266.4 479.7L258.2 481.8M260.0 468.2L251.6 469.5M258.1 456.7L249.8 457.2M529.3 449.9L537.4 450.0M530.0 461.3L538.3 462.1M526.3 472.9L534.6 474.5M518.0 484.2L526.1 486.6"/>
<path class="w" stroke="#e4e4e4" stroke-width="2" d="M388.6 522.2L388.2 527.5M361.4 520.4L359.1 525.5M335.7 516.0L331.6 520.8M312.6 509.3L306.9 513.6M292.9 500.7L286.1 504.3M277.4 490.7L269.7 493.6M266.4 479.7L258.2 481.8M260.0 468.2L251.6 469.5M258.1 456.7L249.8 457.2M530.0 461.3L538.3 462.1M526.3 472.9L534.6 474.5M518.0 484.2L526.1 486.6M505.2 494.9L512.6 498.0M488.0 504.4L494.4 508.2M466.9 512.2L471.9 516.7M442.6 518.0L446.0 523.0M416.1 521.4L417.6 526.7"/>
<path class="w" stroke="#dedede" stroke-width="1.5" d="M529.3 449.9L537.4 450.0"/>
<path class="w" stroke="#5a5a5a" stroke-width="5" d="M388.2 527.5L387.8 532.9M359.1 525.5L356.8 530.7M331.6 520.8L327.4 525.6M306.9 513.6L301.2 517.9M286.1 504.3L279.2 508.0M269.7 493.6L261.9 496.4M512.6 498.0L520.1 501.2M494.4 508.2L500.8 512.2M471.9 516.7L477.0 521.3M446.0 523.0L449.4 528.0M417.6 526.7L419.2 532.0"/>
<path class="w" stroke="#5a5a5a" stroke-width="4.5" d="M258.2 481.8L249.9 483.9M251.6 469.5L243.1 470.8M249.8 457.2L241.5 457.8M538.3 462.1L546.7 463.0M534.6 474.5L543.1 476.1M526.1 486.6L534.2 489.0"/>
<path class="w" stroke="#545454" stroke-width="4.5" d="M537.4 450.0L545.5 450.1"/>
<path class="w" stroke="#b4b4b4" stroke-width="4" d="M388.2 527.5L387.8 532.9M359.1 525.5L356.8 530.7M331.6 520.8L327.4 525.6M306.9 513.6L301.2 517.9M286.1 504.3L279.2 508.0M269.7 493.6L261.9 496.4M512.6 498.0L520.1 501.2M494.4 508.2L500.8 512.2M471.9 516.7L477.0 521.3M446.0 523.0L449.4 528.0M417.6 526.7L419.2 532.0"/>
<path class="w" stroke="#b4b4b4" stroke-width="3.5" d="M258.2 481.8L249.9 483.9M251.6 469.5L243.1 470.8M249.8 457.2L241.5 457.8M537.4 450.0L545.5 450.1M538.3 462.1L546.7 463.0M534.6 474.5L543.1 476.1M526.1 486.6L534.2 489.0"/>
<path class="w" stroke="#e4e4e4" stroke-width="2" d="M388.2 527.5L387.8 532.9M359.1 525.5L356.8 530.7M331.6 520.8L327.4 525.6M306.9 513.6L301.2 517.9M286.1 504.3L279.2 508.0M269.7 493.6L261.9 496.4M258.2 481.8L249.9 483.9M251.6 469.5L243.1 470.8M249.8 457.2L241.5 457.8M538.3 462.1L546.7 463.0M534.6 474.5L543.1 476.1M526.1 486.6L534.2 489.0M512.6 498.0L520.1 501.2M494.4 508.2L500.8 512.2M471.9 516.7L477.0 521.3M446.0 523.0L449.4 528.0M417.6 526.7L419.2 532.0"/>
<path class="w" stroke="#dedede" stroke-width="1.5" d="M537.4 450.0L545.5 450.1"/>
<path class="w" stroke="#5a5a5a" stroke-width="5" d="M387.8 532.9L387.4 538.4M356.8 530.7L354.3 536.1M327.4 525.6L323.2 530.6M301.2 517.9L295.4 522.3M279.2 508.0L272.1 511.7M261.9 496.4L254.0 499.3M534.2 489.0L542.4 491.4M520.1 501.2L527.7 504.4M500.8 512.2L507.4 516.1M477.0 521.3L482.2 525.9M449.4 528.0L452.9 533.1M419.2 532.0L420.8 537.4"/>
<path class="w" stroke="#5a5a5a" stroke-width="4.5" d="M249.9 483.9L241.5 486.0M243.1 470.8L234.6 472.1M241.5 457.8L233.1 458.3M546.7 463.0L555.2 463.8M543.1 476.1L551.5 477.7"/>
<path class="w" stroke="#545454" stroke-width="4.5" d="M545.5 450.1L553.6 450.3"/>
<path class="w" stroke="#b4b4b4" stroke-width="4" d="M387.8 532.9L387.4 538.4M356.8 530.7L354.3 536.1M327.4 525.6L323.2 530.6M301.2 517.9L295.4 522.3M279.2 508.0L272.1 511.7M261.9 496.4L254.0 499.3M520.1 501.2L527.7 504.4M500.8 512.2L507.4 516.1M477.0 521.3L482.2 525.9M449.4 528.0L452.9 533.1M419.2 532.0L420.8 537.4"/>
<path class="w" stroke="#b4b4b4" stroke-width="3.5" d="M249.9 483.9L241.5 486.0M243.1 470.8L234.6 472.1M241.5 457.8L233.1 458.3M545.5 450.1L553.6 450.3M546.7 463.0L555.2 463.8M543.1 476.1L551.5 477.7M534.2 489.0L542.4 491.4"/>
<path class="w" stroke="#e4e4e4" stroke-width="2" d="M387.8 532.9L387.4 538.4M356.8 530.7L354.3 536.1M327.4 525.6L323.2 530.6M301.2 517.9L295.4 522.3M279.2 508.0L272.1 511.7M261.9 496.4L254.0 499.3M249.9 483.9L241.5 486.0M243.1 470.8L234.6 472.1M241.5 457.8L233.1 458.3M546.7 463.0L555.2 463.8M543.1 476.1L551.5 477.7M534.2 489.0L542.4 491.4M520.1 501.2L527.7 504.4M500.8 512.2L507.4 516.1M477.0 521.3L482.2 525.9M449.4 528.0L452.9 533.1M419.2 532.0L420.8 537.4"/>
<path class="w" stroke="#dedede" stroke-width="1.5" d="M545.5 450.1L553.6 450.3"/>
<path class="w" stroke="#545454" stroke-width="6" d="M391.1 488.2L383.7 487.9M383.7 487.9L376.3 487.3M376.3 487.3L369.1 486.3M369.1 486.3L362.2 485.0M362.2 485.0L355.5 483.4M355.5 483.4L349.3 481.6M349.3 481.6L343.4 479.4M343.4 479.4L338.0 477.1M451.3 476.6L446.0 479.0M446.0 479.0L440.2 481.2M440.2 481.2L434.0 483.1M434.0 483.1L427.5 484.7M427.5 484.7L420.6 486.1M420.6 486.1L413.4 487.1M413.4 487.1L406.1 487.8M406.1 487.8L398.6 488.2M398.6 488.2L391.1 488.2"/>
<path class="w" stroke="#4e4e4e" stroke-width="6" d="M338.0 477.1L333.2 474.5M456.0 474.0L451.3 476.6"/>
<path class="w" stroke="#4e4e4e" stroke-width="5.5" d="M333.2 474.5L328.8 471.7M328.8 471.7L325.1 468.8M325.1 468.8L321.9 465.8M321.9 465.8L319.4 462.6M319.4 462.6L317.5 459.4M317.5 459.4L316.2 456.1M472.3 455.5L471.1 458.8M471.1 458.8L469.3 462.0M469.3 462.0L466.9 465.2M466.9 465.2L463.9 468.2M463.9 468.2L460.3 471.2M460.3 471.2L456.0 474.0"/>
<path class="w" stroke="#484848" stroke-width="5.5" d="M316.2 456.1L315.5 452.9M315.5 452.9L315.4 449.6M315.4 449.6L316.0 446.4M472.8 448.9L472.9 452.2M472.9 452.2L472.3 455.5"/>
<path class="w" stroke="#a2a2a2" stroke-width="5" d="M391.1 488.7L383.7 488.4M383.6 488.4L376.3 487.7M376.3 487.7L369.1 486.8M369.0 486.8L362.1 485.5M362.1 485.5L355.4 483.9M355.4 483.9L349.1 482.0M349.1 482.0L343.3 479.9M446.2 479.4L440.4 481.6M440.4 481.6L434.2 483.5M434.1 483.5L427.6 485.2M427.5 485.2L420.7 486.5M420.6 486.5L413.5 487.6M413.5 487.6L406.1 488.3M406.1 488.3L398.7 488.6M398.6 488.6L391.1 488.7"/>
<path class="w" stroke="#9c9c9c" stroke-width="5" d="M343.2 479.9L337.8 477.5M337.8 477.5L332.9 474.9M332.9 474.9L328.6 472.1M328.5 472.1L324.8 469.2M464.2 468.6L460.5 471.5M460.5 471.6L456.3 474.4M456.3 474.4L451.5 477.0M451.5 477.0L446.2 479.4"/>
<path class="w" stroke="#969696" stroke-width="5" d="M324.8 469.2L321.6 466.1M467.2 465.5L464.2 468.5"/>
<path class="w" stroke="#969696" stroke-width="4.5" d="M321.6 466.1L319.0 462.9M319.0 462.9L317.1 459.6M317.0 459.6L315.8 456.3M471.5 459.0L469.7 462.2M469.7 462.3L467.3 465.4"/>
<path class="w" stroke="#909090" stroke-width="4.5" d="M315.7 456.2L315.1 453.0M315.1 452.9L315.0 449.6M315.0 449.5L315.5 446.3M473.2 448.9L473.3 452.2M473.3 452.3L472.7 455.6M472.7 455.6L471.5 458.9"/>
<path class="w" stroke="#cccccc" stroke-width="3.5" d="M391.1 489.4L383.6 489.1M383.6 489.1L376.2 488.4M376.2 488.4L369.0 487.5M368.9 487.4L362.0 486.2M361.9 486.2L355.3 484.6M355.2 484.6L348.9 482.7M440.6 482.3L434.4 484.2M434.3 484.2L427.7 485.9M427.7 485.9L420.8 487.2M420.7 487.2L413.6 488.3M413.5 488.3L406.2 489.0M406.1 489.0L398.7 489.3M398.6 489.3L391.1 489.4"/>
<path class="w" stroke="#c6c6c6" stroke-width="3.5" d="M348.9 482.7L343.0 480.5M342.9 480.5L337.6 478.1M337.5 478.1L332.6 475.5M332.5 475.5L328.2 472.7M460.9 472.1L456.7 474.9M456.6 475.0L451.8 477.6M451.8 477.6L446.5 480.0M446.4 480.1L440.6 482.3"/>
<path class="w" stroke="#c0c0c0" stroke-width="3.5" d="M328.1 472.6L324.4 469.7M324.3 469.6L321.1 466.6M321.0 466.5L318.5 463.3M470.2 462.7L467.8 465.8M467.7 466.0L464.7 469.0M464.6 469.1L461.0 472.1"/>
<path class="w" stroke="#bababa" stroke-width="3.5" d="M318.4 463.2L316.5 460.0M316.4 459.8L315.1 456.6M473.3 455.9L472.2 459.1M472.1 459.3L470.3 462.5"/>
<path class="w" stroke="#b4b4b4" stroke-width="3.5" d="M315.1 456.4L314.4 453.1M314.4 452.9L314.3 449.6M314.4 449.4L314.9 446.2M473.9 448.9L473.9 452.2M473.9 452.4L473.4 455.7"/>
<path class="w" stroke="#545454" stroke-width="6" d="M390.8 492.8L382.5 492.4M382.5 492.4L374.3 491.7M374.3 491.7L366.3 490.6M366.3 490.6L358.6 489.2M358.6 489.2L351.2 487.4M351.2 487.4L344.3 485.3M344.3 485.3L337.8 483.0M337.8 483.0L331.9 480.3M457.5 479.8L451.7 482.5M451.7 482.5L445.3 484.9M445.3 484.9L438.5 487.0M438.5 487.0L431.2 488.9M431.2 488.9L423.5 490.4M423.5 490.4L415.6 491.5M415.6 491.5L407.4 492.3M407.4 492.3L399.1 492.7M399.1 492.7L390.8 492.8"/>
<path class="w" stroke="#4e4e4e" stroke-width="6" d="M331.9 480.3L326.5 477.4M326.5 477.4L321.7 474.4M467.4 473.7L462.8 476.8M462.8 476.8L457.5 479.8"/>
<path class="w" stroke="#4e4e4e" stroke-width="5.5" d="M321.7 474.4L317.6 471.1M317.6 471.1L314.2 467.7M314.2 467.7L311.4 464.2M311.4 464.2L309.4 460.6M309.4 460.6L308.0 457.0M480.4 456.3L479.2 459.9M479.2 459.9L477.3 463.5M477.3 463.5L474.7 467.0M474.7 467.0L471.4 470.4M471.4 470.4L467.4 473.7"/>
<path class="w" stroke="#484848" stroke-width="5.5" d="M308.0 457.0L307.3 453.4M307.3 453.4L307.3 449.8M307.3 449.8L308.0 446.2M480.9 449.1L481.0 452.7M481.0 452.7L480.4 456.3"/>
<path class="w" stroke="#a2a2a2" stroke-width="5" d="M390.8 493.3L382.5 492.9M382.5 492.9L374.3 492.2M374.2 492.2L366.3 491.1M366.2 491.1L358.5 489.7M358.5 489.7L351.1 487.9M351.1 487.9L344.1 485.8M344.1 485.8L337.6 483.4M451.9 482.9L445.5 485.3M445.5 485.3L438.6 487.5M438.6 487.5L431.3 489.3M431.3 489.3L423.6 490.8M423.6 490.8L415.7 492.0M415.6 492.0L407.5 492.8M407.5 492.8L399.2 493.2M399.1 493.2L390.8 493.3"/>
<path class="w" stroke="#9c9c9c" stroke-width="5" d="M337.6 483.4L331.7 480.7M331.6 480.7L326.3 477.9M326.2 477.8L321.5 474.7M321.5 474.7L317.3 471.5M471.7 470.8L467.7 474.1M467.7 474.1L463.1 477.2M463.0 477.2L457.8 480.2M457.7 480.2L451.9 482.9"/>
<path class="w" stroke="#969696" stroke-width="5" d="M317.3 471.4L313.9 468.0M313.8 468.0L311.1 464.5M475.0 467.3L471.7 470.8"/>
<path class="w" stroke="#969696" stroke-width="4.5" d="M311.1 464.4L309.0 460.9M309.0 460.8L307.6 457.2M479.6 460.1L477.7 463.7M477.7 463.8L475.0 467.3"/>
<path class="w" stroke="#909090" stroke-width="4.5" d="M307.6 457.1L306.9 453.5M306.9 453.4L306.9 449.8M306.9 449.7L307.6 446.1M481.3 449.1L481.4 452.7M481.4 452.7L480.9 456.4M480.9 456.4L479.6 460.1"/>
<path class="w" stroke="#cccccc" stroke-width="3.5" d="M390.8 494.0L382.4 493.6M382.4 493.6L374.2 492.9M374.1 492.9L366.2 491.8M366.1 491.8L358.4 490.4M358.3 490.3L351.0 488.6M350.9 488.6L343.9 486.5M445.7 486.0L438.8 488.2M438.8 488.2L431.5 490.0M431.4 490.0L423.8 491.5M423.7 491.6L415.8 492.7M415.7 492.7L407.5 493.5M407.5 493.5L399.2 493.9M399.1 493.9L390.8 494.0"/>
<path class="w" stroke="#c6c6c6" stroke-width="3.5" d="M343.9 486.4L337.4 484.1M337.3 484.0L331.4 481.4M331.3 481.3L325.9 478.5M325.9 478.4L321.1 475.3M468.1 474.7L463.4 477.8M463.4 477.9L458.1 480.8M458.0 480.8L452.2 483.5M452.1 483.5L445.8 486.0"/>
<path class="w" stroke="#c0c0c0" stroke-width="3.5" d="M321.0 475.3L316.9 472.0M316.8 471.9L313.4 468.5M313.3 468.4L310.6 464.9M478.2 464.2L475.6 467.7M475.5 467.8L472.2 471.2M472.1 471.3L468.1 474.6"/>
<path class="w" stroke="#bababa" stroke-width="3.5" d="M310.5 464.8L308.4 461.2M308.3 461.0L307.0 457.4M481.5 456.7L480.3 460.3M480.2 460.5L478.3 464.0"/>
<path class="w" stroke="#b4b4b4" stroke-width="3.5" d="M306.9 457.2L306.3 453.6M306.2 453.4L306.2 449.8M306.3 449.6L306.9 446.0M482.0 449.0L482.1 452.6M482.1 452.8L481.5 456.5"/>
<path class="w" stroke="#545454" stroke-width="6" d="M390.5 497.4L381.3 497.1M381.3 497.1L372.3 496.3M372.3 496.3L363.5 495.1M363.5 495.1L355.0 493.5M355.0 493.5L346.8 491.5M346.8 491.5L339.2 489.2M339.2 489.2L332.1 486.5M332.1 486.5L325.6 483.6M463.9 483.0L457.5 486.0M457.5 486.0L450.5 488.7M450.5 488.7L443.0 491.1M443.0 491.1L435.0 493.1M435.0 493.1L426.6 494.8M426.6 494.8L417.8 496.1M417.8 496.1L408.8 496.9M408.8 496.9L399.7 497.4M399.7 497.4L390.5 497.4"/>
<path class="w" stroke="#4e4e4e" stroke-width="6" d="M325.6 483.6L319.7 480.4M319.7 480.4L314.6 477.0M314.6 477.0L310.1 473.4M479.0 472.7L474.7 476.3M474.7 476.3L469.6 479.8M469.6 479.8L463.9 483.0"/>
<path class="w" stroke="#4e4e4e" stroke-width="5.5" d="M310.1 473.4L306.4 469.7M306.4 469.7L303.5 465.8M303.5 465.8L301.3 461.9M301.3 461.9L299.9 457.9M488.6 457.1L487.4 461.1M487.4 461.1L485.3 465.0M485.3 465.0L482.5 468.9M482.5 468.9L479.0 472.7"/>
<path class="w" stroke="#484848" stroke-width="5.5" d="M299.9 457.9L299.2 453.9M299.2 453.9L299.3 450.0M299.3 450.0L300.0 446.1M488.9 449.2L489.1 453.2M489.1 453.2L488.6 457.1"/>
<path class="w" stroke="#a2a2a2" stroke-width="5" d="M390.4 497.9L381.3 497.5M381.3 497.5L372.2 496.7M372.2 496.7L363.4 495.5M363.4 495.5L354.9 493.9M354.8 493.9L346.7 492.0M346.7 491.9L339.1 489.6M339.0 489.6L331.9 487.0M457.7 486.4L450.7 489.1M450.7 489.1L443.1 491.5M443.1 491.5L435.1 493.6M435.1 493.6L426.6 495.2M426.6 495.2L417.9 496.5M417.8 496.5L408.9 497.4M408.8 497.4L399.7 497.9M399.7 497.9L390.5 497.9"/>
<path class="w" stroke="#9c9c9c" stroke-width="5" d="M331.9 487.0L325.4 484.0M325.4 484.0L319.5 480.8M319.5 480.8L314.3 477.4M314.3 477.4L309.8 473.8M479.3 473.0L475.0 476.7M474.9 476.7L469.9 480.1M469.9 480.2L464.1 483.4M464.1 483.4L457.7 486.4"/>
<path class="w" stroke="#969696" stroke-width="5" d="M309.8 473.7L306.1 470.0M306.0 470.0L303.1 466.1M485.7 465.3L482.9 469.2M482.9 469.2L479.3 473.0"/>
<path class="w" stroke="#969696" stroke-width="4.5" d="M303.1 466.0L300.9 462.1M300.9 462.0L299.4 458.1M487.8 461.3L485.7 465.2"/>
<path class="w" stroke="#909090" stroke-width="4.5" d="M299.4 458.0L298.7 454.0M298.7 453.9L298.8 450.0M298.8 449.9L299.6 446.0M489.4 449.2L489.6 453.1M489.6 453.2L489.1 457.2M489.0 457.3L487.8 461.2"/>
<path class="w" stroke="#cccccc" stroke-width="3.5" d="M390.4 498.7L381.2 498.3M381.2 498.3L372.2 497.5M372.1 497.5L363.3 496.3M363.2 496.2L354.7 494.6M354.7 494.6L346.6 492.7M346.5 492.6L338.9 490.3M450.9 489.8L443.4 492.2M443.3 492.2L435.3 494.3M435.2 494.3L426.8 495.9M426.7 496.0L418.0 497.2M417.9 497.3L408.9 498.1M408.9 498.1L399.7 498.6M399.7 498.6L390.5 498.7"/>
<path class="w" stroke="#c6c6c6" stroke-width="3.5" d="M338.8 490.3L331.7 487.6M331.6 487.6L325.1 484.7M325.0 484.6L319.2 481.4M319.1 481.4L313.9 478.0M475.3 477.3L470.3 480.7M470.2 480.8L464.5 484.0M464.4 484.0L458.0 487.0M458.0 487.1L451.0 489.8"/>
<path class="w" stroke="#c0c0c0" stroke-width="3.5" d="M313.8 477.9L309.4 474.3M309.3 474.2L305.6 470.5M305.5 470.4L302.6 466.5M486.2 465.7L483.4 469.6M483.4 469.7L479.8 473.5M479.7 473.6L475.4 477.2"/>
<path class="w" stroke="#bababa" stroke-width="3.5" d="M302.5 466.4L300.3 462.4M300.2 462.3L298.8 458.3M489.7 457.5L488.4 461.4M488.4 461.6L486.3 465.6"/>
<path class="w" stroke="#b4b4b4" stroke-width="3.5" d="M298.8 458.1L298.1 454.1M298.1 453.9L298.2 450.0M298.2 449.8L299.0 445.9M490.0 449.1L490.2 453.1M490.2 453.3L489.7 457.3"/>
<path class="w" stroke="#545454" stroke-width="6" d="M390.1 502.2L380.1 501.8M380.1 501.8L370.2 500.9M370.2 500.9L360.5 499.6M360.5 499.6L351.2 497.8M351.2 497.8L342.4 495.6M342.4 495.6L334.1 493.1M334.1 493.1L326.3 490.2M326.3 490.2L319.3 486.9M470.4 486.3L463.4 489.5M463.4 489.5L455.8 492.5M455.8 492.5L447.6 495.1M447.6 495.1L438.8 497.4M438.8 497.4L429.6 499.2M429.6 499.2L420.1 500.7M420.1 500.7L410.2 501.6M410.2 501.6L400.2 502.2M400.2 502.2L390.1 502.2"/>
<path class="w" stroke="#4e4e4e" stroke-width="6" d="M319.3 486.9L312.9 483.4M312.9 483.4L307.3 479.7M307.3 479.7L302.5 475.7M302.5 475.7L298.5 471.7M486.6 474.9L482.0 478.9M482.0 478.9L476.6 482.7M476.6 482.7L470.4 486.3"/>
<path class="w" stroke="#4e4e4e" stroke-width="5.5" d="M298.5 471.7L295.4 467.4M295.4 467.4L293.1 463.1M293.1 463.1L291.6 458.8M496.8 458.0L495.5 462.3M495.5 462.3L493.4 466.6M493.4 466.6L490.4 470.8M490.4 470.8L486.6 474.9"/>
<path class="w" stroke="#484848" stroke-width="5.5" d="M291.6 458.8L291.0 454.5M291.0 454.5L291.2 450.2M291.2 450.2L292.1 446.0M497.0 449.3L497.3 453.6M497.3 453.6L496.8 458.0"/>
<path class="w" stroke="#a2a2a2" stroke-width="5" d="M390.1 502.7L380.0 502.3M380.0 502.3L370.1 501.4M370.1 501.4L360.5 500.0M360.4 500.0L351.1 498.3M351.1 498.3L342.3 496.1M342.2 496.1L333.9 493.5M333.9 493.5L326.2 490.6M463.6 490.0L456.0 493.0M456.0 493.0L447.8 495.6M447.7 495.6L439.0 497.9M438.9 497.9L429.7 499.7M429.7 499.7L420.1 501.2M420.1 501.2L410.3 502.1M410.2 502.1L400.2 502.6M400.2 502.6L390.1 502.7"/>
<path class="w" stroke="#9c9c9c" stroke-width="5" d="M326.1 490.6L319.1 487.4M319.0 487.3L312.7 483.8M312.6 483.8L307.1 480.1M307.0 480.0L302.2 476.1M486.9 475.3L482.3 479.3M482.3 479.3L476.8 483.1M476.8 483.1L470.6 486.7M470.6 486.7L463.6 490.0"/>
<path class="w" stroke="#969696" stroke-width="5" d="M302.2 476.1L298.2 472.0M298.2 471.9L295.0 467.7M493.8 466.8L490.8 471.1M490.8 471.1L487.0 475.3"/>
<path class="w" stroke="#969696" stroke-width="4.5" d="M295.0 467.7L292.7 463.4M292.7 463.3L291.2 459.0M495.9 462.5L493.8 466.8"/>
<path class="w" stroke="#909090" stroke-width="4.5" d="M291.2 458.9L290.6 454.6M290.6 454.5L290.7 450.2M290.7 450.1L291.7 445.9M497.4 449.3L497.8 453.6M497.8 453.7L497.3 458.0M497.3 458.1L496.0 462.4"/>
<path class="w" stroke="#cccccc" stroke-width="3.5" d="M390.1 503.4L380.0 503.0M380.0 503.0L370.1 502.1M370.0 502.1L360.4 500.8M360.3 500.8L351.0 499.0M351.0 499.0L342.1 496.8M342.0 496.8L333.7 494.2M456.2 493.7L448.0 496.3M447.9 496.3L439.2 498.6M439.1 498.6L429.9 500.4M429.8 500.5L420.2 501.9M420.2 501.9L410.3 502.9M410.3 502.9L400.3 503.4M400.2 503.4L390.1 503.4"/>
<path class="w" stroke="#c6c6c6" stroke-width="3.5" d="M333.6 494.2L325.9 491.3M325.8 491.2L318.8 488.0M318.7 488.0L312.3 484.5M312.2 484.4L306.7 480.7M482.7 479.9L477.2 483.7M477.1 483.7L470.9 487.3M470.9 487.3L463.9 490.6M463.9 490.6L456.3 493.6"/>
<path class="w" stroke="#c0c0c0" stroke-width="3.5" d="M306.6 480.6L301.8 476.6M301.7 476.5L297.7 472.5M297.6 472.3L294.5 468.1M494.3 467.2L491.4 471.5M491.3 471.6L487.5 475.7M487.4 475.8L482.7 479.8"/>
<path class="w" stroke="#bababa" stroke-width="3.5" d="M294.4 468.0L292.1 463.7M292.1 463.5L290.6 459.2M497.9 458.3L496.6 462.6M496.5 462.8L494.4 467.1"/>
<path class="w" stroke="#b4b4b4" stroke-width="3.5" d="M290.5 459.0L289.9 454.7M289.9 454.4L290.1 450.1M290.1 450.0L291.0 445.7M498.1 449.3L498.4 453.5M498.4 453.7L497.9 458.1"/>
<path class="w" stroke="#545454" stroke-width="6" d="M389.7 507.1L378.8 506.6M378.8 506.6L368.0 505.6M368.0 505.6L357.6 504.2M357.6 504.2L347.5 502.2M347.5 502.2L337.8 499.8M337.8 499.8L328.8 497.0M328.8 497.0L320.4 493.8M320.4 493.8L312.8 490.3M476.9 489.6L469.4 493.2M469.4 493.2L461.2 496.4M461.2 496.4L452.3 499.3M452.3 499.3L442.8 501.8M442.8 501.8L432.8 503.8M432.8 503.8L422.4 505.4M422.4 505.4L411.6 506.4M411.6 506.4L400.7 507.0M400.7 507.0L389.7 507.1"/>
<path class="w" stroke="#4e4e4e" stroke-width="6" d="M312.8 490.3L306.0 486.5M306.0 486.5L300.0 482.4M300.0 482.4L294.8 478.1M294.8 478.1L290.6 473.6M498.4 472.7L494.4 477.2M494.4 477.2L489.4 481.6M489.4 481.6L483.6 485.7M483.6 485.7L476.9 489.6"/>
<path class="w" stroke="#4e4e4e" stroke-width="5.5" d="M290.6 473.6L287.3 469.1M287.3 469.1L284.9 464.4M284.9 464.4L283.4 459.7M505.1 458.8L503.8 463.5M503.8 463.5L501.5 468.1M501.5 468.1L498.4 472.7"/>
<path class="w" stroke="#484848" stroke-width="5.5" d="M283.4 459.7L282.8 455.0M282.8 455.0L283.0 450.4M283.0 450.4L284.1 445.8M505.1 449.5L505.5 454.1M505.5 454.1L505.1 458.8"/>
<path class="w" stroke="#a2a2a2" stroke-width="5" d="M389.7 507.6L378.8 507.1M378.8 507.1L368.0 506.1M368.0 506.1L357.5 504.6M357.5 504.6L347.4 502.7M347.3 502.7L337.7 500.3M337.7 500.3L328.7 497.5M328.6 497.5L320.3 494.3M469.6 493.6L461.4 496.9M461.3 496.9L452.4 499.8M452.4 499.8L442.9 502.3M442.9 502.3L432.9 504.3M432.8 504.3L422.4 505.9M422.4 505.9L411.7 506.9M411.7 506.9L400.8 507.5M400.7 507.5L389.7 507.6"/>
<path class="w" stroke="#9c9c9c" stroke-width="5" d="M320.2 494.3L312.6 490.7M312.6 490.7L305.7 486.9M305.7 486.9L299.7 482.8M299.7 482.8L294.5 478.5M494.7 477.6L489.7 481.9M489.7 481.9L483.9 486.1M483.8 486.1L477.1 490.0M477.1 490.0L469.6 493.6"/>
<path class="w" stroke="#969696" stroke-width="5" d="M294.5 478.4L290.3 474.0M290.2 473.9L286.9 469.3M286.9 469.3L284.5 464.6M504.2 463.7L501.9 468.3M501.9 468.4L498.8 473.0M498.7 473.0L494.7 477.5"/>
<path class="w" stroke="#969696" stroke-width="4.5" d="M284.5 464.5L283.0 459.9"/>
<path class="w" stroke="#909090" stroke-width="4.5" d="M283.0 459.8L282.4 455.1M282.4 455.0L282.6 450.4M282.6 450.3L283.7 445.7M505.5 449.4L505.9 454.1M505.9 454.1L505.5 458.8M505.5 458.9L504.2 463.6"/>
<path class="w" stroke="#cccccc" stroke-width="3.5" d="M389.7 508.3L378.8 507.8M378.7 507.8L367.9 506.9M367.9 506.8L357.4 505.4M357.3 505.4L347.2 503.4M347.2 503.4L337.5 501.0M337.5 501.0L328.5 498.2M461.6 497.6L452.7 500.5M452.6 500.5L443.1 503.0M443.0 503.0L433.0 505.0M433.0 505.0L422.5 506.6M422.5 506.6L411.8 507.7M411.7 507.7L400.8 508.2M400.7 508.2L389.8 508.3"/>
<path class="w" stroke="#c6c6c6" stroke-width="3.5" d="M328.4 498.2L320.0 495.0M319.9 494.9L312.3 491.4M312.2 491.3L305.4 487.5M305.3 487.5L299.3 483.4M490.1 482.5L484.3 486.6M484.2 486.7L477.5 490.6M477.4 490.6L469.9 494.2M469.9 494.3L461.6 497.5"/>
<path class="w" stroke="#c0c0c0" stroke-width="3.5" d="M299.2 483.3L294.1 479.0M294.0 478.9L289.8 474.4M289.7 474.3L286.4 469.7M502.5 468.8L499.3 473.4M499.3 473.5L495.2 478.0M495.1 478.1L490.2 482.4"/>
<path class="w" stroke="#bababa" stroke-width="3.5" d="M286.3 469.6L283.9 464.9M283.8 464.7L282.3 460.1M506.1 459.1L504.8 463.8M504.8 464.0L502.6 468.6"/>
<path class="w" stroke="#b4b4b4" stroke-width="3.5" d="M282.3 459.9L281.7 455.2M281.7 455.0L282.0 450.3M282.0 450.1L283.1 445.6M506.2 449.4L506.6 454.0M506.6 454.2L506.2 458.9"/>
<path class="w" stroke="#545454" stroke-width="6" d="M389.4 512.0L377.5 511.5M377.5 511.5L365.9 510.5M365.9 510.5L354.5 508.8M354.5 508.8L343.6 506.7M343.6 506.7L333.2 504.1M333.2 504.1L323.5 501.1M323.5 501.1L314.5 497.6M314.5 497.6L306.3 493.7M483.5 492.9L475.5 496.8M475.5 496.8L466.7 500.4M466.7 500.4L457.1 503.5M457.1 503.5L446.8 506.2M446.8 506.2L436.0 508.5M436.0 508.5L424.7 510.2M424.7 510.2L413.1 511.3M413.1 511.3L401.3 512.0M401.3 512.0L389.4 512.0"/>
<path class="w" stroke="#4e4e4e" stroke-width="6" d="M306.3 493.7L299.0 489.6M299.0 489.6L292.5 485.1M292.5 485.1L287.1 480.5M287.1 480.5L282.6 475.7M506.4 474.7L502.2 479.5M502.2 479.5L496.9 484.2M496.9 484.2L490.7 488.7M490.7 488.7L483.5 492.9"/>
<path class="w" stroke="#4e4e4e" stroke-width="5.5" d="M282.6 475.7L279.1 470.7M279.1 470.7L276.6 465.7M276.6 465.7L275.1 460.6M513.3 459.6L512.0 464.7M512.0 464.7L509.7 469.7M509.7 469.7L506.4 474.7"/>
<path class="w" stroke="#484848" stroke-width="5.5" d="M275.1 460.6L274.6 455.6M274.6 455.6L274.9 450.6M274.9 450.6L276.2 445.7M513.2 449.6L513.7 454.6M513.7 454.6L513.3 459.6"/>
<path class="w" stroke="#a2a2a2" stroke-width="5" d="M389.4 512.5L377.5 512.0M377.5 512.0L365.8 510.9M365.8 510.9L354.5 509.3M354.4 509.3L343.5 507.2M343.5 507.2L333.1 504.6M333.1 504.6L323.3 501.5M323.3 501.5L314.3 498.0M475.7 497.3L466.8 500.8M466.8 500.9L457.2 504.0M457.2 504.0L446.9 506.7M446.9 506.7L436.1 508.9M436.1 509.0L424.8 510.7M424.8 510.7L413.1 511.8M413.1 511.8L401.3 512.5M401.3 512.5L389.4 512.5"/>
<path class="w" stroke="#9c9c9c" stroke-width="5" d="M314.3 498.0L306.1 494.2M306.0 494.2L298.7 490.0M298.7 490.0L292.3 485.5M292.2 485.5L286.8 480.8M502.5 479.9L497.2 484.6M497.2 484.6L491.0 489.1M490.9 489.1L483.8 493.3M483.8 493.4L475.7 497.3"/>
<path class="w" stroke="#969696" stroke-width="5" d="M286.8 480.8L282.3 476.0M282.2 475.9L278.8 471.0M278.7 470.9L276.2 465.9M512.4 464.9L510.1 469.9M510.1 470.0L506.8 474.9M506.8 475.0L502.5 479.8"/>
<path class="w" stroke="#969696" stroke-width="4.5" d="M276.2 465.8L274.7 460.7"/>
<path class="w" stroke="#909090" stroke-width="4.5" d="M274.7 460.7L274.1 455.6M274.1 455.5L274.5 450.6M274.5 450.5L275.8 445.6M513.6 449.6L514.1 454.5M514.2 454.6L513.8 459.6M513.8 459.7L512.5 464.8"/>
<path class="w" stroke="#cccccc" stroke-width="3.5" d="M389.3 513.3L377.5 512.8M377.4 512.8L365.8 511.7M365.7 511.7L354.4 510.1M354.3 510.1L343.4 507.9M343.3 507.9L332.9 505.3M332.9 505.3L323.1 502.2M467.0 501.6L457.4 504.7M457.4 504.7L447.1 507.4M447.0 507.5L436.2 509.7M436.2 509.7L424.9 511.4M424.8 511.4L413.2 512.6M413.2 512.6L401.3 513.2M401.3 513.2L389.4 513.3"/>
<path class="w" stroke="#c6c6c6" stroke-width="3.5" d="M323.0 502.2L314.0 498.7M314.0 498.7L305.8 494.8M305.7 494.8L298.4 490.6M298.3 490.5L291.9 486.1M497.6 485.2L491.4 489.7M491.3 489.7L484.1 494.0M484.1 494.0L476.0 497.9M476.0 498.0L467.1 501.5"/>
<path class="w" stroke="#c0c0c0" stroke-width="3.5" d="M291.8 486.0L286.3 481.4M286.2 481.3L281.8 476.4M281.7 476.3L278.2 471.4M510.7 470.3L507.4 475.3M507.3 475.4L503.0 480.3M502.9 480.4L497.7 485.1"/>
<path class="w" stroke="#bababa" stroke-width="3.5" d="M278.1 471.2L275.6 466.2M275.6 466.0L274.1 460.9M514.4 459.9L513.1 464.9M513.0 465.1L510.8 470.2"/>
<path class="w" stroke="#b4b4b4" stroke-width="3.5" d="M274.0 460.7L273.5 455.7M273.5 455.5L273.8 450.5M273.9 450.3L275.1 445.4M514.3 449.5L514.8 454.5M514.8 454.7L514.4 459.7"/>
<path class="w" stroke="#545454" stroke-width="6.5" d="M389.0 517.1L376.2 516.5M376.2 516.5L363.7 515.4M363.7 515.4L351.4 513.6M439.2 513.2L427.1 515.1M427.1 515.1L414.6 516.3M414.6 516.3L401.8 517.0M401.8 517.0L389.0 517.1"/>
<path class="w" stroke="#545454" stroke-width="6" d="M351.4 513.6L339.7 511.3M339.7 511.3L328.5 508.5M328.5 508.5L318.1 505.2M318.1 505.2L308.4 501.4M308.4 501.4L299.6 497.2M490.3 496.3L481.7 500.6M481.7 500.6L472.2 504.4M472.2 504.4L461.9 507.9M461.9 507.9L450.9 510.8M450.9 510.8L439.2 513.2"/>
<path class="w" stroke="#4e4e4e" stroke-width="6" d="M299.6 497.2L291.8 492.7M291.8 492.7L285.0 487.9M285.0 487.9L279.3 482.9M279.3 482.9L274.6 477.7M274.6 477.7L270.9 472.3M518.0 471.3L514.5 476.6M514.5 476.6L510.0 481.9M510.0 481.9L504.5 486.9M504.5 486.9L497.9 491.8M497.9 491.8L490.3 496.3"/>
<path class="w" stroke="#4e4e4e" stroke-width="5.5" d="M270.9 472.3L268.3 466.9M268.3 466.9L266.8 461.5M521.6 460.4L520.3 465.9M520.3 465.9L518.0 471.3"/>
<path class="w" stroke="#484848" stroke-width="5.5" d="M266.8 461.5L266.3 456.1M266.3 456.1L266.8 450.8M266.8 450.8L268.3 445.6M521.2 449.7L521.9 455.1M521.9 455.1L521.6 460.4"/>
<path class="w" stroke="#a2a2a2" stroke-width="5.5" d="M389.0 517.6L376.2 517.0M376.2 517.0L363.6 515.9M363.6 515.9L351.4 514.1M439.3 513.7L427.2 515.6M427.1 515.6L414.6 516.8M414.6 516.8L401.9 517.5M401.8 517.5L389.0 517.6"/>
<path class="w" stroke="#a2a2a2" stroke-width="5" d="M351.3 514.1L339.6 511.8M339.6 511.8L328.4 509.0M328.4 508.9L317.9 505.6M317.9 505.6L308.2 501.8M481.9 501.0L472.4 504.9M472.4 504.9L462.1 508.3M462.0 508.3L451.0 511.3M451.0 511.3L439.3 513.7"/>
<path class="w" stroke="#9c9c9c" stroke-width="5" d="M308.2 501.8L299.4 497.7M299.4 497.6L291.6 493.1M291.6 493.1L284.8 488.3M284.7 488.3L278.9 483.2M510.4 482.2L504.8 487.3M504.8 487.3L498.2 492.2M498.1 492.2L490.5 496.8M490.5 496.8L481.9 501.0"/>
<path class="w" stroke="#969696" stroke-width="5" d="M278.9 483.2L274.2 478.0M274.2 477.9L270.5 472.6M270.5 472.5L267.9 467.1M520.7 466.0L518.4 471.5M518.4 471.5L514.9 476.9M514.9 476.9L510.4 482.2"/>
<path class="w" stroke="#969696" stroke-width="4.5" d="M267.9 467.1L266.4 461.6"/>
<path class="w" stroke="#909090" stroke-width="4.5" d="M266.4 461.6L265.9 456.2M265.9 456.1L266.4 450.8M266.4 450.7L267.8 445.4M521.7 449.7L522.4 455.0M522.4 455.1L522.1 460.5M522.1 460.5L520.8 466.0"/>
<path class="w" stroke="#cccccc" stroke-width="4" d="M389.0 518.3L376.2 517.8M376.1 517.8L363.5 516.6M363.5 516.6L351.3 514.9M439.4 514.4L427.3 516.3M427.2 516.3L414.7 517.6M414.6 517.6L401.9 518.3M401.8 518.3L389.0 518.3"/>
<path class="w" stroke="#cccccc" stroke-width="3.5" d="M351.2 514.8L339.4 512.5M339.4 512.5L328.2 509.7M328.1 509.7L317.7 506.3M472.6 505.6L462.3 509.0M462.2 509.1L451.2 512.0M451.1 512.0L439.5 514.4"/>
<path class="w" stroke="#c6c6c6" stroke-width="3.5" d="M317.6 506.3L308.0 502.5M307.9 502.5L299.1 498.3M299.0 498.3L291.2 493.7M291.1 493.7L284.3 488.9M505.2 487.9L498.6 492.7M498.5 492.8L490.9 497.4M490.8 497.4L482.2 501.7M482.2 501.7L472.7 505.6"/>
<path class="w" stroke="#c0c0c0" stroke-width="3.5" d="M284.3 488.8L278.5 483.8M278.4 483.7L273.7 478.5M273.6 478.3L270.0 473.0M518.9 471.9L515.5 477.2M515.4 477.4L510.9 482.6M510.8 482.7L505.3 487.8"/>
<path class="w" stroke="#bababa" stroke-width="3.5" d="M269.9 472.8L267.3 467.4M267.3 467.3L265.7 461.8M522.7 460.7L521.4 466.1M521.4 466.3L519.0 471.7"/>
<path class="w" stroke="#b4b4b4" stroke-width="3.5" d="M265.7 461.6L265.2 456.2M265.2 456.0L265.7 450.7M265.8 450.5L267.2 445.3M522.3 449.6L523.0 454.9M523.0 455.1L522.8 460.5"/>
<path class="w" stroke="#545454" stroke-width="6.5" d="M388.6 522.2L374.9 521.6M374.9 521.6L361.4 520.4M361.4 520.4L348.3 518.5M348.3 518.5L335.7 516.0M335.7 516.0L323.7 512.9M466.9 512.2L455.0 515.4M455.0 515.4L442.6 518.0M442.6 518.0L429.5 520.1M429.5 520.1L416.1 521.4M416.1 521.4L402.4 522.2M402.4 522.2L388.6 522.2"/>
<path class="w" stroke="#545454" stroke-width="6" d="M323.7 512.9L312.6 509.3M312.6 509.3L302.3 505.2M302.3 505.2L292.9 500.7M497.1 499.8L488.0 504.4M488.0 504.4L477.9 508.5M477.9 508.5L466.9 512.2"/>
<path class="w" stroke="#4e4e4e" stroke-width="6" d="M292.9 500.7L284.6 495.9M284.6 495.9L277.4 490.7M277.4 490.7L271.3 485.3M271.3 485.3L266.4 479.7M266.4 479.7L262.6 474.0M526.3 472.9L522.7 478.6M522.7 478.6L518.0 484.2M518.0 484.2L512.2 489.7M512.2 489.7L505.2 494.9M505.2 494.9L497.1 499.8"/>
<path class="w" stroke="#4e4e4e" stroke-width="5.5" d="M262.6 474.0L260.0 468.2M260.0 468.2L258.5 462.4M530.0 461.3L528.7 467.1M528.7 467.1L526.3 472.9"/>
<path class="w" stroke="#484848" stroke-width="5.5" d="M258.5 462.4L258.1 456.7M258.1 456.7L258.7 451.0M258.7 451.0L260.3 445.4M529.3 449.9L530.2 455.5M530.2 455.5L530.0 461.3"/>
<path class="w" stroke="#a2a2a2" stroke-width="5.5" d="M388.6 522.8L374.9 522.2M374.9 522.2L361.4 520.9M361.3 520.9L348.2 519.0M348.2 519.0L335.6 516.5M335.6 516.5L323.6 513.4M467.0 512.7L455.2 515.9M455.2 515.9L442.7 518.5M442.6 518.5L429.6 520.6M429.6 520.6L416.1 522.0M416.1 522.0L402.4 522.7M402.4 522.7L388.6 522.8"/>
<path class="w" stroke="#a2a2a2" stroke-width="5" d="M323.6 513.4L312.4 509.8M312.4 509.8L302.1 505.7M488.2 504.8L478.0 509.0M478.0 509.0L467.0 512.7"/>
<path class="w" stroke="#9c9c9c" stroke-width="5" d="M302.0 505.7L292.7 501.2M292.7 501.2L284.4 496.3M284.3 496.3L277.1 491.1M277.1 491.1L271.0 485.7M518.3 484.6L512.5 490.0M512.5 490.0L505.5 495.3M505.4 495.3L497.4 500.2M497.3 500.2L488.2 504.8"/>
<path class="w" stroke="#969696" stroke-width="5" d="M271.0 485.6L266.1 480.0M266.0 480.0L262.2 474.3M262.2 474.2L259.6 468.4M529.1 467.2L526.7 473.0M526.7 473.1L523.1 478.8M523.1 478.9L518.4 484.5"/>
<path class="w" stroke="#969696" stroke-width="4.5" d="M259.6 468.3L258.0 462.5"/>
<path class="w" stroke="#909090" stroke-width="4.5" d="M258.0 462.5L257.6 456.7M257.6 456.6L258.3 450.9M258.3 450.9L259.9 445.3M529.8 449.8L530.6 455.5M530.6 455.5L530.4 461.3M530.4 461.4L529.1 467.2"/>
<path class="w" stroke="#cccccc" stroke-width="4" d="M388.6 523.5L374.8 522.9M374.8 522.9L361.3 521.7M361.2 521.6L348.1 519.7M348.0 519.7L335.4 517.2M335.4 517.2L323.4 514.1M467.2 513.4L455.4 516.6M455.3 516.7L442.8 519.3M442.8 519.3L429.7 521.3M429.7 521.3L416.2 522.7M416.2 522.7L402.5 523.4M402.4 523.5L388.6 523.5"/>
<path class="w" stroke="#cccccc" stroke-width="3.5" d="M323.3 514.1L312.2 510.5M478.3 509.7L467.2 513.4"/>
<path class="w" stroke="#c6c6c6" stroke-width="3.5" d="M312.1 510.5L301.8 506.4M301.7 506.3L292.4 501.8M292.3 501.8L284.0 496.9M283.9 496.9L276.7 491.7M512.9 490.6L505.9 495.8M505.8 495.9L497.7 500.8M497.6 500.9L488.5 505.5M488.4 505.5L478.3 509.7"/>
<path class="w" stroke="#c0c0c0" stroke-width="3.5" d="M276.6 491.6L270.6 486.2M270.5 486.1L265.5 480.5M265.4 480.4L261.7 474.7M527.3 473.5L523.7 479.2M523.6 479.3L518.9 485.0M518.8 485.1L513.0 490.5"/>
<path class="w" stroke="#bababa" stroke-width="3.5" d="M261.6 474.5L258.9 468.7M258.9 468.5L257.4 462.7M531.1 461.5L529.8 467.3M529.7 467.5L527.3 473.3"/>
<path class="w" stroke="#b4b4b4" stroke-width="3.5" d="M257.4 462.5L256.9 456.8M257.0 456.6L257.6 450.9M257.6 450.7L259.3 445.1M530.4 449.7L531.3 455.4M531.3 455.6L531.1 461.3"/>
<path class="w" stroke="#545454" stroke-width="6.5" d="M388.2 527.5L373.5 526.9M373.5 526.9L359.1 525.5M359.1 525.5L345.1 523.5M345.1 523.5L331.6 520.8M331.6 520.8L318.9 517.4M318.9 517.4L306.9 513.6M483.6 512.7L471.9 516.7M471.9 516.7L459.3 520.1M459.3 520.1L446.0 523.0M446.0 523.0L432.0 525.2M432.0 525.2L417.6 526.7M417.6 526.7L403.0 527.4M403.0 527.4L388.2 527.5"/>
<path class="w" stroke="#545454" stroke-width="6" d="M306.9 513.6L296.0 509.2M296.0 509.2L286.1 504.3M504.0 503.3L494.4 508.2M494.4 508.2L483.6 512.7"/>
<path class="w" stroke="#4e4e4e" stroke-width="6" d="M286.1 504.3L277.3 499.1M277.3 499.1L269.7 493.6M269.7 493.6L263.3 487.8M263.3 487.8L258.2 481.8M258.2 481.8L254.3 475.7M534.6 474.5L531.0 480.6M531.0 480.6L526.1 486.6M526.1 486.6L519.9 492.4M519.9 492.4L512.6 498.0M512.6 498.0L504.0 503.3"/>
<path class="w" stroke="#4e4e4e" stroke-width="5.5" d="M254.3 475.7L251.6 469.5M251.6 469.5L250.1 463.3M538.3 462.1L537.1 468.3M537.1 468.3L534.6 474.5"/>
<path class="w" stroke="#484848" stroke-width="5.5" d="M250.1 463.3L249.8 457.2M249.8 457.2L250.6 451.2M250.6 451.2L252.4 445.3M537.4 450.0L538.4 456.0M538.4 456.0L538.3 462.1"/>
<path class="w" stroke="#a2a2a2" stroke-width="5.5" d="M388.2 528.0L373.5 527.4M373.5 527.4L359.1 526.0M359.0 526.0L345.0 524.0M345.0 524.0L331.5 521.3M331.5 521.2L318.7 517.9M318.7 517.9L306.8 514.0M483.8 513.2L472.0 517.2M472.0 517.2L459.4 520.6M459.4 520.6L446.1 523.5M446.0 523.5L432.1 525.7M432.1 525.7L417.7 527.2M417.7 527.2L403.0 528.0M403.0 528.0L388.2 528.0"/>
<path class="w" stroke="#a2a2a2" stroke-width="5" d="M306.8 514.0L295.8 509.6M494.5 508.7L483.8 513.2"/>
<path class="w" stroke="#9c9c9c" stroke-width="5" d="M295.8 509.6L285.9 504.8M285.8 504.7L277.1 499.5M277.0 499.5L269.4 493.9M269.4 493.9L263.0 488.1M526.4 486.9L520.3 492.8M520.2 492.8L512.9 498.4M512.8 498.4L504.3 503.7M504.3 503.7L494.6 508.7"/>
<path class="w" stroke="#969696" stroke-width="5" d="M263.0 488.1L257.8 482.1M257.8 482.0L253.9 475.9M253.9 475.9L251.2 469.7M251.2 469.6L249.7 463.5M537.5 468.5L535.1 474.6M535.0 474.7L531.4 480.8M531.3 480.9L526.4 486.9"/>
<path class="w" stroke="#909090" stroke-width="4.5" d="M249.7 463.4L249.3 457.2M249.3 457.2L250.1 451.1M250.1 451.1L252.0 445.2M537.9 449.9L538.9 455.9M538.9 456.0L538.8 462.1M538.8 462.2L537.5 468.4"/>
<path class="w" stroke="#cccccc" stroke-width="4" d="M388.2 528.8L373.5 528.2M373.4 528.1L359.0 526.8M358.9 526.8L344.9 524.7M344.8 524.7L331.4 522.0M331.3 522.0L318.5 518.7M318.5 518.6L306.6 514.8M484.0 513.9L472.3 517.9M472.2 517.9L459.6 521.4M459.6 521.4L446.2 524.2M446.2 524.2L432.2 526.4M432.2 526.4L417.8 527.9M417.7 527.9L403.1 528.7M403.0 528.7L388.2 528.8"/>
<path class="w" stroke="#c6c6c6" stroke-width="3.5" d="M306.5 514.7L295.5 510.3M295.5 510.3L285.6 505.4M285.5 505.4L276.7 500.2M276.6 500.1L269.0 494.5M520.7 493.4L513.3 499.0M513.2 499.1L504.7 504.3M504.6 504.4L494.9 509.3M494.8 509.4L484.1 513.9"/>
<path class="w" stroke="#c0c0c0" stroke-width="3.5" d="M268.9 494.4L262.5 488.6M262.4 488.5L257.3 482.6M257.2 482.4L253.3 476.3M535.6 475.1L532.0 481.2M531.9 481.3L527.0 487.3M526.9 487.4L520.8 493.3"/>
<path class="w" stroke="#bababa" stroke-width="3.5" d="M253.2 476.1L250.5 470.0M250.5 469.8L249.0 463.6M539.4 462.3L538.2 468.5M538.1 468.7L535.7 474.9"/>
<path class="w" stroke="#b4b4b4" stroke-width="3.5" d="M249.0 463.4L248.7 457.3M248.7 457.1L249.5 451.1M249.5 450.9L251.4 445.0M538.5 449.8L539.5 455.8M539.6 456.0L539.5 462.1"/>
<path class="w" stroke="#545454" stroke-width="6.5" d="M387.8 532.9L372.2 532.2M372.2 532.2L356.8 530.7M356.8 530.7L341.8 528.5M341.8 528.5L327.4 525.6M327.4 525.6L313.9 522.0M313.9 522.0L301.2 517.9M301.2 517.9L289.6 513.2M500.8 512.2L489.4 517.0M489.4 517.0L477.0 521.3M477.0 521.3L463.6 525.0M463.6 525.0L449.4 528.0M449.4 528.0L434.6 530.4M434.6 530.4L419.2 532.0M419.2 532.0L403.6 532.8M403.6 532.8L387.8 532.9"/>
<path class="w" stroke="#545454" stroke-width="6" d="M289.6 513.2L279.2 508.0M511.1 506.9L500.8 512.2"/>
<path class="w" stroke="#4e4e4e" stroke-width="6" d="M279.2 508.0L269.9 502.4M269.9 502.4L261.9 496.4M261.9 496.4L255.3 490.2M255.3 490.2L249.9 483.9M249.9 483.9L245.9 477.4M245.9 477.4L243.1 470.8M543.1 476.1L539.3 482.6M539.3 482.6L534.2 489.0M534.2 489.0L527.8 495.2M527.8 495.2L520.1 501.2M520.1 501.2L511.1 506.9"/>
<path class="w" stroke="#4e4e4e" stroke-width="5.5" d="M243.1 470.8L241.7 464.3M546.7 463.0L545.5 469.5M545.5 469.5L543.1 476.1"/>
<path class="w" stroke="#484848" stroke-width="5.5" d="M241.7 464.3L241.5 457.8M241.5 457.8L242.4 451.4M242.4 451.4L244.5 445.2M545.5 450.1L546.7 456.5M546.7 456.5L546.7 463.0"/>
<path class="w" stroke="#a2a2a2" stroke-width="5.5" d="M387.8 533.4L372.1 532.7M372.1 532.7L356.7 531.3M356.7 531.2L341.7 529.0M341.7 529.0L327.3 526.1M327.3 526.1L313.8 522.5M313.7 522.5L301.1 518.4M301.0 518.3L289.4 513.6M501.0 512.6L489.6 517.4M489.6 517.4L477.2 521.7M477.1 521.8L463.7 525.4M463.7 525.5L449.5 528.5M449.5 528.5L434.6 530.9M434.6 530.9L419.3 532.5M419.3 532.5L403.6 533.3M403.6 533.3L387.8 533.4"/>
<path class="w" stroke="#9c9c9c" stroke-width="5" d="M289.4 513.6L278.9 508.4M278.9 508.4L269.7 502.8M269.6 502.8L261.6 496.8M261.6 496.8L254.9 490.6M534.5 489.3L528.1 495.6M528.1 495.6L520.4 501.6M520.3 501.6L511.3 507.3M511.3 507.3L501.1 512.6"/>
<path class="w" stroke="#969696" stroke-width="5" d="M254.9 490.5L249.5 484.2M249.5 484.1L245.5 477.6M245.4 477.5L242.7 471.0M242.7 470.9L241.2 464.4M546.0 469.7L543.5 476.2M543.5 476.3L539.7 482.8M539.7 482.9L534.6 489.3"/>
<path class="w" stroke="#909090" stroke-width="4.5" d="M241.2 464.3L241.0 457.8M241.0 457.7L242.0 451.3M242.0 451.3L244.1 445.0M546.0 450.1L547.2 456.4M547.2 456.5L547.2 463.0"/>
<path class="w" stroke="#909090" stroke-width="5" d="M547.2 463.0L546.0 469.6"/>
<path class="w" stroke="#cccccc" stroke-width="4" d="M387.8 534.2L372.1 533.5M372.0 533.5L356.6 532.0M356.6 532.0L341.6 529.8M341.5 529.8L327.2 526.9M327.1 526.9L313.6 523.3M313.5 523.3L300.8 519.1M489.9 518.2L477.4 522.5M477.3 522.5L464.0 526.2M463.9 526.2L449.7 529.3M449.6 529.3L434.8 531.6M434.7 531.6L419.4 533.3M419.3 533.3L403.7 534.1M403.6 534.1L387.8 534.2"/>
<path class="w" stroke="#c6c6c6" stroke-width="4" d="M300.8 519.0L289.2 514.3M501.3 513.3L489.9 518.1"/>
<path class="w" stroke="#c6c6c6" stroke-width="3.5" d="M289.1 514.3L278.6 509.1M278.5 509.0L269.3 503.4M269.2 503.3L261.2 497.4M528.5 496.2L520.8 502.2M520.7 502.2L511.7 507.9M511.6 508.0L501.4 513.3"/>
<path class="w" stroke="#c0c0c0" stroke-width="3.5" d="M261.1 497.3L254.4 491.1M254.4 491.0L249.0 484.6M248.9 484.5L244.9 478.0M544.1 476.6L540.3 483.2M540.2 483.3L535.1 489.7M535.0 489.8L528.6 496.1"/>
<path class="w" stroke="#bababa" stroke-width="3.5" d="M244.8 477.8L242.1 471.3M242.0 471.1L240.6 464.5M547.8 463.2L546.6 469.7M546.6 469.9L544.1 476.5"/>
<path class="w" stroke="#b4b4b4" stroke-width="3.5" d="M240.6 464.3L240.3 457.8M240.4 457.6L241.3 451.2M241.4 451.1L243.5 444.8M546.6 449.9L547.8 456.3M547.8 456.5L547.9 463.0"/>
<path class="w" stroke="#545454" stroke-width="6.5" d="M387.4 538.4L370.7 537.6M370.7 537.6L354.3 536.1M354.3 536.1L338.4 533.7M338.4 533.7L323.2 530.6M323.2 530.6L308.8 526.7M308.8 526.7L295.4 522.3M295.4 522.3L283.2 517.2M283.2 517.2L272.1 511.7M518.2 510.5L507.4 516.1M507.4 516.1L495.4 521.3M495.4 521.3L482.2 525.9M482.2 525.9L468.0 529.9M468.0 529.9L452.9 533.1M452.9 533.1L437.2 535.7M437.2 535.7L420.8 537.4M420.8 537.4L404.2 538.3M404.2 538.3L387.4 538.4"/>
<path class="w" stroke="#4e4e4e" stroke-width="6" d="M272.1 511.7L262.4 505.7M262.4 505.7L254.0 499.3M254.0 499.3L247.1 492.8M247.1 492.8L241.5 486.0M241.5 486.0L237.4 479.1M237.4 479.1L234.6 472.1M554.0 470.7L551.5 477.7M551.5 477.7L547.7 484.6M547.7 484.6L542.4 491.4M542.4 491.4L535.7 498.0M535.7 498.0L527.7 504.4M527.7 504.4L518.2 510.5"/>
<path class="w" stroke="#4e4e4e" stroke-width="5.5" d="M234.6 472.1L233.2 465.2M555.2 463.8L554.0 470.7"/>
<path class="w" stroke="#484848" stroke-width="5.5" d="M233.2 465.2L233.1 458.3M233.1 458.3L234.3 451.6M234.3 451.6L236.6 445.0M553.6 450.3L555.0 457.0M555.0 457.0L555.2 463.8"/>
<path class="w" stroke="#a2a2a2" stroke-width="5.5" d="M387.4 538.9L370.7 538.2M370.7 538.2L354.3 536.6M354.3 536.6L338.4 534.2M338.3 534.2L323.1 531.1M323.1 531.1L308.7 527.2M308.7 527.2L295.3 522.7M295.2 522.7L283.0 517.7M507.6 516.6L495.6 521.8M495.6 521.8L482.4 526.4M482.4 526.4L468.2 530.4M468.1 530.4L453.1 533.6M453.0 533.6L437.2 536.2M437.2 536.2L420.9 537.9M420.9 537.9L404.2 538.8M404.2 538.8L387.4 538.9"/>
<path class="w" stroke="#9c9c9c" stroke-width="5.5" d="M282.9 517.7L271.9 512.1M518.4 510.9L507.7 516.6"/>
<path class="w" stroke="#9c9c9c" stroke-width="5" d="M271.9 512.1L262.1 506.1M262.1 506.1L253.8 499.7M253.7 499.7L246.8 493.1M542.8 491.7L536.1 498.4M536.0 498.4L528.0 504.8M527.9 504.8L518.5 510.9"/>
<path class="w" stroke="#969696" stroke-width="5" d="M246.7 493.1L241.2 486.3M241.1 486.2L237.0 479.3M237.0 479.2L234.2 472.3M234.2 472.2L232.8 465.3M554.5 470.9L552.0 477.8M551.9 477.9L548.1 484.8M548.1 484.9L542.8 491.7"/>
<path class="w" stroke="#909090" stroke-width="4.5" d="M232.8 465.2L232.7 458.3M232.7 458.3L233.8 451.5M233.9 451.5L236.2 444.9M554.1 450.2L555.5 456.9M555.5 457.0L555.6 463.8"/>
<path class="w" stroke="#909090" stroke-width="5" d="M555.6 463.9L554.5 470.8"/>
<path class="w" stroke="#cccccc" stroke-width="4" d="M387.4 539.7L370.7 539.0M370.6 539.0L354.2 537.4M354.2 537.4L338.2 535.0M338.2 535.0L322.9 531.8M322.9 531.8L308.5 528.0M308.4 528.0L295.0 523.5M495.8 522.5L482.6 527.1M482.6 527.1L468.4 531.1M468.3 531.1L453.2 534.4M453.2 534.4L437.4 536.9M437.3 537.0L421.0 538.7M420.9 538.7L404.3 539.6M404.2 539.6L387.4 539.7"/>
<path class="w" stroke="#c6c6c6" stroke-width="4" d="M295.0 523.4L282.7 518.4M282.6 518.3L271.6 512.8M518.8 511.6L508.0 517.2M507.9 517.3L495.9 522.5"/>
<path class="w" stroke="#c6c6c6" stroke-width="3.5" d="M271.5 512.7L261.8 506.7M261.7 506.6L253.3 500.3M536.5 499.0L528.4 505.4M528.3 505.5L518.9 511.5"/>
<path class="w" stroke="#c0c0c0" stroke-width="3.5" d="M253.2 500.2L246.3 493.6M246.2 493.5L240.6 486.7M240.5 486.6L236.4 479.7M552.6 478.3L548.7 485.2M548.6 485.3L543.4 492.1M543.3 492.3L536.6 498.9"/>
<path class="w" stroke="#bababa" stroke-width="3.5" d="M236.3 479.5L233.6 472.5M233.5 472.3L232.1 465.4M556.3 464.0L555.1 470.9M555.1 471.1L552.6 478.1"/>
<path class="w" stroke="#b4b4b4" stroke-width="3.5" d="M232.1 465.2L232.0 458.3M232.0 458.1L233.2 451.4M233.2 451.2L235.5 444.7M554.7 450.1L556.1 456.8M556.1 456.9L556.3 463.8"/>
<path class="w" stroke-opacity="0.45" stroke="#a8a8a8" stroke-width="3.5" d="M338.0 477.1L331.9 480.3M328.8 471.7L321.7 474.4M321.7 474.4L314.6 477.0M314.6 477.0L307.3 479.7M307.3 479.7L300.0 482.4M321.9 465.8L314.2 467.7M314.2 467.7L306.4 469.7M306.4 469.7L298.5 471.7M298.5 471.7L290.6 473.6M290.6 473.6L282.6 475.7M282.6 475.7L274.6 477.7M274.6 477.7L266.4 479.7M266.4 479.7L258.2 481.8M317.5 459.4L309.4 460.6M309.4 460.6L301.3 461.9M301.3 461.9L293.1 463.1M293.1 463.1L284.9 464.4M284.9 464.4L276.6 465.7M276.6 465.7L268.3 466.9M268.3 466.9L260.0 468.2M260.0 468.2L251.6 469.5M251.6 469.5L243.1 470.8M243.1 470.8L234.6 472.1M315.5 452.9L307.3 453.4M307.3 453.4L299.2 453.9M299.2 453.9L291.0 454.5M291.0 454.5L282.8 455.0M282.8 455.0L274.6 455.6M274.6 455.6L266.3 456.1M266.3 456.1L258.1 456.7M258.1 456.7L249.8 457.2M249.8 457.2L241.5 457.8M241.5 457.8L233.1 458.3M316.0 446.4L308.0 446.2M308.0 446.2L300.0 446.1M300.0 446.1L292.1 446.0M292.1 446.0L284.1 445.8M284.1 445.8L276.2 445.7M276.2 445.7L268.3 445.6M268.3 445.6L260.3 445.4M260.3 445.4L252.4 445.3M252.4 445.3L244.5 445.2M244.5 445.2L236.6 445.0M470.9 442.5L478.7 442.0M478.7 442.0L486.4 441.5M486.4 441.5L494.1 441.0M494.1 441.0L501.8 440.5M501.8 440.5L509.4 440.0M509.4 440.0L517.1 439.5M517.1 439.5L524.7 439.0M524.7 439.0L532.3 438.5M532.3 438.5L539.9 438.0M539.9 438.0L547.5 437.5M472.8 448.9L480.9 449.1M480.9 449.1L488.9 449.2M488.9 449.2L497.0 449.3M497.0 449.3L505.1 449.5M505.1 449.5L513.2 449.6M513.2 449.6L521.2 449.7M521.2 449.7L529.3 449.9M529.3 449.9L537.4 450.0M537.4 450.0L545.5 450.1M545.5 450.1L553.6 450.3M472.3 455.5L480.4 456.3M480.4 456.3L488.6 457.1M488.6 457.1L496.8 458.0M496.8 458.0L505.1 458.8M505.1 458.8L513.3 459.6M513.3 459.6L521.6 460.4M521.6 460.4L530.0 461.3M530.0 461.3L538.3 462.1M538.3 462.1L546.7 463.0M546.7 463.0L555.2 463.8M469.3 462.0L477.3 463.5M477.3 463.5L485.3 465.0M485.3 465.0L493.4 466.6M493.4 466.6L501.5 468.1M501.5 468.1L509.7 469.7M509.7 469.7L518.0 471.3M518.0 471.3L526.3 472.9M526.3 472.9L534.6 474.5M534.6 474.5L543.1 476.1M543.1 476.1L551.5 477.7M463.9 468.2L471.4 470.4M471.4 470.4L479.0 472.7M479.0 472.7L486.6 474.9M486.6 474.9L494.4 477.2M494.4 477.2L502.2 479.5M502.2 479.5L510.0 481.9M456.0 474.0L462.8 476.8M462.8 476.8L469.6 479.8M469.6 479.8L476.6 482.7M446.0 479.0L451.7 482.5"/>
<path class="w" stroke-opacity="0.45" stroke="#a8a8a8" stroke-width="4" d="M331.9 480.3L325.6 483.6M325.6 483.6L319.3 486.9M319.3 486.9L312.8 490.3M312.8 490.3L306.3 493.7M306.3 493.7L299.6 497.2M299.6 497.2L292.9 500.7M292.9 500.7L286.1 504.3M286.1 504.3L279.2 508.0M279.2 508.0L272.1 511.7M300.0 482.4L292.5 485.1M292.5 485.1L285.0 487.9M285.0 487.9L277.4 490.7M277.4 490.7L269.7 493.6M269.7 493.6L261.9 496.4M261.9 496.4L254.0 499.3M258.2 481.8L249.9 483.9M249.9 483.9L241.5 486.0M510.0 481.9L518.0 484.2M518.0 484.2L526.1 486.6M526.1 486.6L534.2 489.0M534.2 489.0L542.4 491.4M476.6 482.7L483.6 485.7M483.6 485.7L490.7 488.7M490.7 488.7L497.9 491.8M497.9 491.8L505.2 494.9M505.2 494.9L512.6 498.0M512.6 498.0L520.1 501.2M520.1 501.2L527.7 504.4M451.7 482.5L457.5 486.0M457.5 486.0L463.4 489.5M463.4 489.5L469.4 493.2M469.4 493.2L475.5 496.8M475.5 496.8L481.7 500.6M481.7 500.6L488.0 504.4M488.0 504.4L494.4 508.2M494.4 508.2L500.8 512.2M500.8 512.2L507.4 516.1"/>
<path class="w" stroke-opacity="0.45" stroke="#a0a0a0" stroke-width="3.5" d="M318.7 440.1L311.2 439.3M311.2 439.3L303.7 438.6M303.7 438.6L296.2 437.8M296.2 437.8L288.7 437.1M288.7 437.1L281.2 436.3M281.2 436.3L273.8 435.6M273.8 435.6L266.4 434.8M266.4 434.8L259.1 434.1M259.1 434.1L251.7 433.3M251.7 433.3L244.4 432.6M466.8 436.5L474.0 435.4M474.0 435.4L481.2 434.3M481.2 434.3L488.3 433.2M488.3 433.2L495.4 432.1M495.4 432.1L502.5 431.0M502.5 431.0L509.5 429.9M509.5 429.9L516.5 428.9M516.5 428.9L523.5 427.8M523.5 427.8L530.4 426.7M530.4 426.7L537.3 425.7"/>
<path class="w" stroke-opacity="0.45" stroke="#989898" stroke-width="3.5" d="M323.7 434.2L316.7 432.9M316.7 432.9L309.8 431.5M309.8 431.5L302.9 430.2M302.9 430.2L296.1 428.9M296.1 428.9L289.4 427.6M289.4 427.6L282.6 426.4M282.6 426.4L275.9 425.1M275.9 425.1L269.3 423.8M269.3 423.8L262.7 422.5M262.7 422.5L256.1 421.3M460.7 430.9L467.2 429.3M467.2 429.3L473.7 427.7M473.7 427.7L480.1 426.1M480.1 426.1L486.5 424.5M486.5 424.5L492.8 422.9M492.8 422.9L499.0 421.3M499.0 421.3L505.2 419.7"/>
<path class="w" stroke-opacity="0.45" stroke="#909090" stroke-width="3.5" d="M330.5 428.9L324.3 427.0M324.3 427.0L318.2 425.2M318.2 425.2L312.1 423.4M312.1 423.4L306.1 421.6M306.1 421.6L300.1 419.9M452.8 426.0L458.5 423.9M458.5 423.9L464.1 421.8M464.1 421.8L469.7 419.8"/>
<path class="w" stroke-opacity="0.45" stroke="#909090" stroke-width="3" d="M300.1 419.9L294.2 418.1M294.2 418.1L288.3 416.4M288.3 416.4L282.5 414.7M282.5 414.7L276.7 413.0M276.7 413.0L271.0 411.3M469.7 419.8L475.2 417.7M475.2 417.7L480.6 415.7M480.6 415.7L486.0 413.7M486.0 413.7L491.3 411.8M491.3 411.8L496.6 409.8M496.6 409.8L501.8 407.9M501.8 407.9L507.0 406.0"/>
<path class="w" stroke-opacity="0.45" stroke="#888888" stroke-width="3.5" d="M339.0 424.2L333.7 421.9M333.7 421.9L328.5 419.7M443.5 421.8L448.2 419.3"/>
<path class="w" stroke-opacity="0.45" stroke="#888888" stroke-width="3" d="M328.5 419.7L323.3 417.5M323.3 417.5L318.2 415.3M318.2 415.3L313.1 413.2M313.1 413.2L308.1 411.1M308.1 411.1L303.2 408.9M303.2 408.9L298.3 406.9M298.3 406.9L293.4 404.8M293.4 404.8L288.6 402.8M348.9 420.3L344.6 417.7M344.6 417.7L340.4 415.1M340.4 415.1L336.2 412.6M336.2 412.6L332.1 410.1M332.1 410.1L328.0 407.6M328.0 407.6L323.9 405.2M323.9 405.2L320.0 402.8M320.0 402.8L316.0 400.4M316.0 400.4L312.1 398.1M312.1 398.1L308.3 395.7M448.2 419.3L452.8 416.8M452.8 416.8L457.4 414.4M457.4 414.4L462.0 412.1M462.0 412.1L466.4 409.7M466.4 409.7L470.9 407.4M470.9 407.4L475.2 405.1M475.2 405.1L479.6 402.8M479.6 402.8L483.8 400.6M483.8 400.6L488.1 398.4"/>
<path class="w" stroke-opacity="0.45" stroke="#989898" stroke-width="3" d="M505.2 419.7L511.4 418.2M511.4 418.2L517.5 416.7M517.5 416.7L523.6 415.1"/>
<path class="w" stroke-opacity="0.55" stroke="#e0e0e0" stroke-width="1.5" d="M390.8 487.8L390.5 492.4M390.5 492.4L390.2 497.0M390.2 497.0L389.8 501.8M389.8 501.8L389.4 506.7M389.4 506.7L389.1 511.6M389.1 511.6L388.7 516.7M388.7 516.7L388.3 521.8M388.3 521.8L387.9 527.1M376.0 486.9L374.0 491.3M374.0 491.3L372.0 495.9M372.0 495.9L369.9 500.5M369.9 500.5L367.7 505.2M367.7 505.2L365.6 510.1M365.6 510.1L363.4 515.0M363.4 515.0L361.1 520.0M361.1 520.0L358.8 525.1M361.9 484.6L358.3 488.8M358.3 488.8L354.7 493.1M354.7 493.1L350.9 497.4M350.9 497.4L347.2 501.8M347.2 501.8L343.3 506.3M343.3 506.3L339.4 510.9M339.4 510.9L335.4 515.6M335.4 515.6L331.3 520.4M331.3 520.4L327.1 525.2M349.0 481.2L344.0 484.9M344.0 484.9L338.9 488.8M338.9 488.8L333.8 492.7M333.8 492.7L328.5 496.6M328.5 496.6L323.2 500.7M323.2 500.7L317.8 504.8M317.8 504.8L312.3 508.9M312.3 508.9L306.6 513.2M306.6 513.2L300.9 517.5M300.9 517.5L295.1 521.9M337.7 476.7L331.6 479.9M331.6 479.9L325.3 483.2M325.3 483.2L319.0 486.5M319.0 486.5L312.5 489.9M312.5 489.9L306.0 493.3M306.0 493.3L299.3 496.8M299.3 496.8L292.6 500.3M292.6 500.3L285.8 503.9M285.8 503.9L278.9 507.6M278.9 507.6L271.8 511.3M328.5 471.3L321.4 474.0M321.4 474.0L314.3 476.6M314.3 476.6L307.0 479.3M307.0 479.3L299.7 482.0M299.7 482.0L292.2 484.7M292.2 484.7L284.7 487.5M284.7 487.5L277.1 490.3M277.1 490.3L269.4 493.2M269.4 493.2L261.6 496.0M261.6 496.0L253.7 498.9M321.6 465.4L313.9 467.3M313.9 467.3L306.1 469.3M306.1 469.3L298.2 471.3M298.2 471.3L290.3 473.2M290.3 473.2L282.3 475.3M282.3 475.3L274.3 477.3M274.3 477.3L266.1 479.3M266.1 479.3L257.9 481.4M257.9 481.4L249.6 483.5M249.6 483.5L241.2 485.6M317.2 459.0L309.1 460.2M309.1 460.2L301.0 461.5M301.0 461.5L292.8 462.7M292.8 462.7L284.6 464.0M284.6 464.0L276.3 465.3M276.3 465.3L268.0 466.5M268.0 466.5L259.7 467.8M259.7 467.8L251.3 469.1M251.3 469.1L242.8 470.4M242.8 470.4L234.3 471.7M315.2 452.5L307.0 453.0M307.0 453.0L298.9 453.5M298.9 453.5L290.7 454.1M290.7 454.1L282.5 454.6M282.5 454.6L274.3 455.2M274.3 455.2L266.0 455.7M266.0 455.7L257.8 456.3M257.8 456.3L249.5 456.8M249.5 456.8L241.2 457.4M241.2 457.4L232.8 457.9M315.7 446.0L307.7 445.8M307.7 445.8L299.7 445.7M299.7 445.7L291.8 445.6M291.8 445.6L283.8 445.4M283.8 445.4L275.9 445.3M275.9 445.3L268.0 445.2M268.0 445.2L260.0 445.0M260.0 445.0L252.1 444.9M252.1 444.9L244.2 444.8M244.2 444.8L236.3 444.6M472.5 448.5L480.6 448.7M480.6 448.7L488.6 448.8M488.6 448.8L496.7 448.9M496.7 448.9L504.8 449.1M504.8 449.1L512.9 449.2M512.9 449.2L520.9 449.3M520.9 449.3L529.0 449.5M529.0 449.5L537.1 449.6M537.1 449.6L545.2 449.7M545.2 449.7L553.3 449.9M472.0 455.1L480.1 455.9M480.1 455.9L488.3 456.7M488.3 456.7L496.5 457.6M496.5 457.6L504.8 458.4M504.8 458.4L513.0 459.2M513.0 459.2L521.3 460.0M521.3 460.0L529.7 460.9M529.7 460.9L538.0 461.7M538.0 461.7L546.4 462.6M546.4 462.6L554.9 463.4M469.0 461.6L477.0 463.1M477.0 463.1L485.0 464.6M485.0 464.6L493.1 466.2M493.1 466.2L501.2 467.7M501.2 467.7L509.4 469.3M509.4 469.3L517.7 470.9M517.7 470.9L526.0 472.5M526.0 472.5L534.3 474.1M534.3 474.1L542.8 475.7M542.8 475.7L551.2 477.3M463.6 467.8L471.1 470.0M471.1 470.0L478.7 472.3M478.7 472.3L486.3 474.5M486.3 474.5L494.1 476.8M494.1 476.8L501.9 479.1M501.9 479.1L509.7 481.5M509.7 481.5L517.7 483.8M517.7 483.8L525.8 486.2M525.8 486.2L533.9 488.6M533.9 488.6L542.1 491.0M455.7 473.6L462.5 476.4M462.5 476.4L469.3 479.4M469.3 479.4L476.3 482.3M476.3 482.3L483.3 485.3M483.3 485.3L490.4 488.3M490.4 488.3L497.6 491.4M497.6 491.4L504.9 494.5M504.9 494.5L512.3 497.6M512.3 497.6L519.8 500.8M519.8 500.8L527.4 504.0M445.7 478.6L451.4 482.1M451.4 482.1L457.2 485.6M457.2 485.6L463.1 489.1M463.1 489.1L469.1 492.8M469.1 492.8L475.2 496.4M475.2 496.4L481.4 500.2M481.4 500.2L487.7 504.0M487.7 504.0L494.1 507.8M494.1 507.8L500.5 511.8M500.5 511.8L507.1 515.7M433.7 482.7L438.2 486.6M438.2 486.6L442.7 490.7M442.7 490.7L447.3 494.7M447.3 494.7L452.0 498.9M452.0 498.9L456.8 503.1M456.8 503.1L461.6 507.5M461.6 507.5L466.6 511.8M466.6 511.8L471.6 516.3M471.6 516.3L476.7 520.9M476.7 520.9L481.9 525.5M420.3 485.7L423.2 490.0M423.2 490.0L426.3 494.4M426.3 494.4L429.3 498.8M429.3 498.8L432.5 503.4M432.5 503.4L435.7 508.1M435.7 508.1L438.9 512.8M438.9 512.8L442.3 517.6M442.3 517.6L445.7 522.6M445.7 522.6L449.1 527.6M405.8 487.4L407.1 491.9M407.1 491.9L408.5 496.5M408.5 496.5L409.9 501.2M409.9 501.2L411.3 506.0M411.3 506.0L412.8 510.9M412.8 510.9L414.3 515.9M414.3 515.9L415.8 521.0M415.8 521.0L417.3 526.3"/>
<path class="w" stroke-opacity="0.55" stroke="#e0e0e0" stroke-width="2" d="M387.9 527.1L387.5 532.5M387.5 532.5L387.1 538.0M358.8 525.1L356.5 530.3M356.5 530.3L354.0 535.7M327.1 525.2L322.9 530.2M449.1 527.6L452.6 532.7M417.3 526.3L418.9 531.6M418.9 531.6L420.5 537.0"/>
<path class="w" stroke-opacity="0.55" stroke="#d8d8d8" stroke-width="1.5" d="M318.4 439.7L310.9 438.9M310.9 438.9L303.4 438.2M303.4 438.2L295.9 437.4M295.9 437.4L288.4 436.7M288.4 436.7L280.9 435.9M280.9 435.9L273.5 435.2M273.5 435.2L266.1 434.4M266.1 434.4L258.8 433.7M258.8 433.7L251.4 432.9M251.4 432.9L244.1 432.2M470.6 442.1L478.4 441.6M478.4 441.6L486.1 441.1M486.1 441.1L493.8 440.6M493.8 440.6L501.5 440.1M501.5 440.1L509.1 439.6M509.1 439.6L516.8 439.1M516.8 439.1L524.4 438.6M524.4 438.6L532.0 438.1M532.0 438.1L539.6 437.6M539.6 437.6L547.2 437.1"/>
<path class="w" stroke-opacity="0.55" stroke="#c8c8c8" stroke-width="1.5" d="M323.4 433.8L316.4 432.5M316.4 432.5L309.5 431.1M309.5 431.1L302.6 429.8M302.6 429.8L295.8 428.5M295.8 428.5L289.1 427.2M289.1 427.2L282.3 426.0M282.3 426.0L275.6 424.7M275.6 424.7L269.0 423.4M269.0 423.4L262.4 422.1M262.4 422.1L255.8 420.9"/>
<path class="w" stroke-opacity="0.55" stroke="#c0c0c0" stroke-width="1.5" d="M330.2 428.5L324.0 426.6M324.0 426.6L317.9 424.8M317.9 424.8L311.8 423.0M311.8 423.0L305.8 421.2M305.8 421.2L299.8 419.5M299.8 419.5L293.9 417.7M293.9 417.7L288.0 416.0M288.0 416.0L282.2 414.3M282.2 414.3L276.4 412.6M276.4 412.6L270.7 410.9M460.4 430.5L466.9 428.9M466.9 428.9L473.4 427.3M473.4 427.3L479.8 425.7M479.8 425.7L486.2 424.1M486.2 424.1L492.5 422.5M492.5 422.5L498.7 420.9M498.7 420.9L504.9 419.3M504.9 419.3L511.1 417.8M511.1 417.8L517.2 416.3M517.2 416.3L523.3 414.7"/>
<path class="w" stroke-opacity="0.55" stroke="#b8b8b8" stroke-width="1.5" d="M338.7 423.8L333.4 421.5M333.4 421.5L328.2 419.3M328.2 419.3L323.0 417.1M323.0 417.1L317.9 414.9M317.9 414.9L312.8 412.8M312.8 412.8L307.8 410.7M307.8 410.7L302.9 408.5M302.9 408.5L298.0 406.5M298.0 406.5L293.1 404.4M293.1 404.4L288.3 402.4M452.5 425.6L458.2 423.5M458.2 423.5L463.8 421.4M463.8 421.4L469.4 419.4M469.4 419.4L474.9 417.3M474.9 417.3L480.3 415.3M480.3 415.3L485.7 413.3M485.7 413.3L491.0 411.4M491.0 411.4L496.3 409.4M496.3 409.4L501.5 407.5M501.5 407.5L506.7 405.6"/>
<path class="w" stroke-opacity="0.55" stroke="#b0b0b0" stroke-width="1.5" d="M348.6 419.9L344.3 417.3M344.3 417.3L340.1 414.7M340.1 414.7L335.9 412.2M335.9 412.2L331.8 409.7M331.8 409.7L327.7 407.2M327.7 407.2L323.6 404.8M323.6 404.8L319.7 402.4M319.7 402.4L315.7 400.0M315.7 400.0L311.8 397.7M311.8 397.7L308.0 395.3M443.2 421.4L447.9 418.9M447.9 418.9L452.5 416.4M452.5 416.4L457.1 414.0M457.1 414.0L461.7 411.7M461.7 411.7L466.1 409.3M466.1 409.3L470.6 407.0M470.6 407.0L474.9 404.7M474.9 404.7L479.3 402.4M479.3 402.4L483.5 400.2M483.5 400.2L487.8 398.0"/>
<path class="w" stroke-opacity="0.55" stroke="#a8a8a8" stroke-width="1.5" d="M359.6 416.8L356.4 414.0M356.4 414.0L353.2 411.1M353.2 411.1L350.1 408.4M350.1 408.4L347.0 405.6M347.0 405.6L343.9 402.9M343.9 402.9L340.9 400.2M340.9 400.2L338.0 397.6M338.0 397.6L335.1 395.0M335.1 395.0L332.2 392.5M332.2 392.5L329.3 389.9M421.1 415.4L423.6 412.4M423.6 412.4L426.1 409.5M426.1 409.5L428.6 406.6M428.6 406.6L431.0 403.7M431.0 403.7L433.4 400.9M433.4 400.9L435.8 398.2M435.8 398.2L438.2 395.4M438.2 395.4L440.5 392.7M440.5 392.7L442.7 390.1M442.7 390.1L445.0 387.5M432.6 418.0L436.2 415.2M436.2 415.2L439.9 412.5M439.9 412.5L443.4 409.8M443.4 409.8L446.9 407.1M446.9 407.1L450.4 404.5M450.4 404.5L453.8 401.9M453.8 401.9L457.2 399.4M457.2 399.4L460.5 396.8M460.5 396.8L463.8 394.4M463.8 394.4L467.0 391.9"/>
<path class="w" stroke-opacity="0.55" stroke="#a0a0a0" stroke-width="1.5" d="M371.4 414.7L369.3 411.6M369.3 411.6L367.3 408.6M367.3 408.6L365.2 405.7M365.2 405.7L363.2 402.7M363.2 402.7L361.3 399.9M361.3 399.9L359.3 397.0M359.3 397.0L357.4 394.3M357.4 394.3L355.5 391.5M355.5 391.5L353.6 388.8M353.6 388.8L351.8 386.1M383.8 413.4L382.8 410.3M382.8 410.3L381.9 407.2M381.9 407.2L381.0 404.1M381.0 404.1L380.1 401.1M380.1 401.1L379.2 398.1M379.2 398.1L378.4 395.2M378.4 395.2L377.5 392.4M377.5 392.4L376.7 389.5M376.7 389.5L375.8 386.7M375.8 386.7L375.0 384.0M396.4 413.1L396.6 410.0M396.6 410.0L396.8 406.8M396.8 406.8L397.1 403.8M397.1 403.8L397.3 400.7M397.3 400.7L397.5 397.7M397.5 397.7L397.7 394.8M397.7 394.8L397.9 391.9M397.9 391.9L398.1 389.1M398.1 389.1L398.3 386.3M398.3 386.3L398.6 383.5M408.9 413.8L410.3 410.7M410.3 410.7L411.7 407.6M411.7 407.6L413.0 404.6M413.0 404.6L414.4 401.6M414.4 401.6L415.7 398.7M415.7 398.7L417.0 395.8M417.0 395.8L418.3 392.9M418.3 392.9L419.5 390.1M419.5 390.1L420.8 387.4M420.8 387.4L422.0 384.7"/>
<path class="w" stroke-opacity="0.55" stroke="#d0d0d0" stroke-width="1.5" d="M466.5 436.1L473.7 435.0M473.7 435.0L480.9 433.9M480.9 433.9L488.0 432.8M488.0 432.8L495.1 431.7M495.1 431.7L502.2 430.6M502.2 430.6L509.2 429.5M509.2 429.5L516.2 428.5M516.2 428.5L523.2 427.4M523.2 427.4L530.1 426.3M530.1 426.3L537.0 425.3"/>
<path fill="none" stroke="#505050" stroke-opacity="0.6" stroke-width="1.1" d="M392.8 488.2L389.1 538.4M378.0 487.3L356.0 536.1M363.9 485.0L324.9 530.6M351.0 481.6L297.1 522.3M339.7 477.1L273.8 511.7M330.5 471.7L255.7 499.3M457.7 474.0L529.4 504.4M447.7 479.0L509.1 516.1M435.7 483.1L483.9 525.9M422.3 486.1L454.6 533.1M407.8 487.8L422.5 537.4"/>
</g>
<g id="hback">
<path class="w" stroke="#808080" stroke-width="5.5" d="M483.0 223.8L476.2 224.8"/>
<path class="w" stroke="#808080" stroke-width="5.3" d="M476.2 224.8L469.4 225.7"/>
<path class="w" stroke="#808080" stroke-width="5.1" d="M469.4 225.7L462.8 226.3"/>
<path class="w" stroke="#808080" stroke-width="5.0" d="M462.8 226.3L456.3 226.2"/>
<path class="w" stroke="#808080" stroke-width="4.9" d="M456.3 226.2L449.9 225.8"/>
<path class="w" stroke="#808080" stroke-width="4.8" d="M449.9 225.8L444.0 225.6"/>
<path class="w" stroke="#808080" stroke-width="4.8" d="M444.0 225.6L438.9 225.7"/>
<path class="w" stroke="#808080" stroke-width="4.7" d="M438.9 225.7L434.4 226.0"/>
<path class="w" stroke="#808080" stroke-width="4.7" d="M434.4 226.0L430.0 226.4"/>
<path class="w" stroke="#808080" stroke-width="4.7" d="M430.0 226.4L425.7 226.8"/>
<path class="w" stroke="#808080" stroke-width="4.7" d="M425.7 226.8L421.5 227.3"/>
<path class="w" stroke="#808080" stroke-width="4.7" d="M421.5 227.3L417.3 227.8"/>
<path class="w" stroke="#808080" stroke-width="4.7" d="M417.3 227.8L413.0 228.4"/>
<path class="w" stroke="#808080" stroke-width="4.7" d="M413.0 228.4L408.7 229.1"/>
<path class="w" stroke="#808080" stroke-width="4.8" d="M408.7 229.1L404.4 229.8"/>
<path class="w" stroke="#808080" stroke-width="4.8" d="M404.4 229.8L400.1 230.6"/>
<path class="w" stroke="#808080" stroke-width="4.8" d="M400.1 230.6L395.8 231.4"/>
<path class="w" stroke="#808080" stroke-width="4.9" d="M395.8 231.4L391.5 232.3"/>
<path class="w" stroke="#808080" stroke-width="4.9" d="M391.5 232.3L387.2 233.2"/>
<path class="w" stroke="#808080" stroke-width="5.0" d="M387.2 233.2L382.9 234.2"/>
<path class="w" stroke="#808080" stroke-width="5.1" d="M382.9 234.2L378.6 235.2"/>
<path class="w" stroke="#808080" stroke-width="5.1" d="M378.6 235.2L374.3 236.3"/>
<path class="w" stroke="#808080" stroke-width="5.2" d="M374.3 236.3L370.0 237.5"/>
<path class="w" stroke="#808080" stroke-width="5.3" d="M370.0 237.5L365.7 238.8"/>
<path class="w" stroke="#808080" stroke-width="5.5" d="M365.7 238.8L361.4 240.3"/>
<path class="w" stroke="#808080" stroke-width="5.6" d="M361.4 240.3L357.1 241.9"/>
<path class="w" stroke="#808080" stroke-width="5.7" d="M357.1 241.9L352.9 243.8"/>
<path class="w" stroke="#b8b8b8" stroke-width="3.8" d="M482.9 223.6L476.1 224.5"/>
<path class="w" stroke="#b8b8b8" stroke-width="3.7" d="M476.1 224.5L469.3 225.5"/>
<path class="w" stroke="#b8b8b8" stroke-width="3.6" d="M469.3 225.5L462.7 226.1"/>
<path class="w" stroke="#b8b8b8" stroke-width="3.5" d="M462.7 226.1L456.2 226.0"/>
<path class="w" stroke="#b8b8b8" stroke-width="3.4" d="M456.2 226.0L449.8 225.6"/>
<path class="w" stroke="#b8b8b8" stroke-width="3.4" d="M449.8 225.6L443.9 225.3"/>
<path class="w" stroke="#b8b8b8" stroke-width="3.3" d="M443.9 225.3L438.8 225.5"/>
<path class="w" stroke="#b8b8b8" stroke-width="3.3" d="M438.8 225.5L434.3 225.8"/>
<path class="w" stroke="#b8b8b8" stroke-width="3.3" d="M434.3 225.8L429.9 226.2"/>
<path class="w" stroke="#b8b8b8" stroke-width="3.3" d="M429.9 226.2L425.6 226.6"/>
<path class="w" stroke="#b8b8b8" stroke-width="3.3" d="M425.6 226.6L421.4 227.0"/>
<path class="w" stroke="#b8b8b8" stroke-width="3.3" d="M421.4 227.0L417.2 227.6"/>
<path class="w" stroke="#b8b8b8" stroke-width="3.3" d="M417.2 227.6L412.9 228.2"/>
<path class="w" stroke="#b8b8b8" stroke-width="3.3" d="M412.9 228.2L408.6 228.8"/>
<path class="w" stroke="#b8b8b8" stroke-width="3.3" d="M408.6 228.8L404.3 229.6"/>
<path class="w" stroke="#b8b8b8" stroke-width="3.4" d="M404.3 229.6L400.0 230.3"/>
<path class="w" stroke="#b8b8b8" stroke-width="3.4" d="M400.0 230.3L395.7 231.2"/>
<path class="w" stroke="#b8b8b8" stroke-width="3.4" d="M395.7 231.2L391.4 232.1"/>
<path class="w" stroke="#b8b8b8" stroke-width="3.4" d="M391.4 232.1L387.1 233.0"/>
<path class="w" stroke="#b8b8b8" stroke-width="3.5" d="M387.1 233.0L382.8 233.9"/>
<path class="w" stroke="#b8b8b8" stroke-width="3.5" d="M382.8 233.9L378.5 234.9"/>
<path class="w" stroke="#b8b8b8" stroke-width="3.6" d="M378.5 234.9L374.2 236.0"/>
<path class="w" stroke="#b8b8b8" stroke-width="3.7" d="M374.2 236.0L369.9 237.2"/>
<path class="w" stroke="#b8b8b8" stroke-width="3.7" d="M369.9 237.2L365.6 238.6"/>
<path class="w" stroke="#b8b8b8" stroke-width="3.8" d="M365.6 238.6L361.3 240.0"/>
<path class="w" stroke="#b8b8b8" stroke-width="3.9" d="M361.3 240.0L357.0 241.7"/>
<path class="w" stroke="#b8b8b8" stroke-width="4.0" d="M357.0 241.7L352.8 243.6"/>
<path class="w" stroke="#e8e8e8" stroke-width="1.6" d="M482.7 223.2L475.9 224.2"/>
<path class="w" stroke="#e8e8e8" stroke-width="1.6" d="M475.9 224.2L469.1 225.1"/>
<path class="w" stroke="#e8e8e8" stroke-width="1.5" d="M469.1 225.1L462.5 225.7"/>
<path class="w" stroke="#e8e8e8" stroke-width="1.5" d="M462.5 225.7L456.0 225.6"/>
<path class="w" stroke="#e8e8e8" stroke-width="1.5" d="M456.0 225.6L449.6 225.2"/>
<path class="w" stroke="#e8e8e8" stroke-width="1.4" d="M449.6 225.2L443.7 225.0"/>
<path class="w" stroke="#e8e8e8" stroke-width="1.4" d="M443.7 225.0L438.6 225.1"/>
<path class="w" stroke="#e8e8e8" stroke-width="1.4" d="M438.6 225.1L434.1 225.4"/>
<path class="w" stroke="#e8e8e8" stroke-width="1.4" d="M434.1 225.4L429.7 225.8"/>
<path class="w" stroke="#e8e8e8" stroke-width="1.4" d="M429.7 225.8L425.4 226.2"/>
<path class="w" stroke="#e8e8e8" stroke-width="1.4" d="M425.4 226.2L421.2 226.7"/>
<path class="w" stroke="#e8e8e8" stroke-width="1.4" d="M421.2 226.7L417.0 227.2"/>
<path class="w" stroke="#e8e8e8" stroke-width="1.4" d="M417.0 227.2L412.7 227.8"/>
<path class="w" stroke="#e8e8e8" stroke-width="1.4" d="M412.7 227.8L408.4 228.5"/>
<path class="w" stroke="#e8e8e8" stroke-width="1.4" d="M408.4 228.5L404.1 229.2"/>
<path class="w" stroke="#e8e8e8" stroke-width="1.4" d="M404.1 229.2L399.8 230.0"/>
<path class="w" stroke="#e8e8e8" stroke-width="1.5" d="M399.8 230.0L395.5 230.8"/>
<path class="w" stroke="#e8e8e8" stroke-width="1.5" d="M395.5 230.8L391.2 231.7"/>
<path class="w" stroke="#e8e8e8" stroke-width="1.5" d="M391.2 231.7L386.9 232.6"/>
<path class="w" stroke="#e8e8e8" stroke-width="1.5" d="M386.9 232.6L382.6 233.6"/>
<path class="w" stroke="#e8e8e8" stroke-width="1.5" d="M382.6 233.6L378.3 234.6"/>
<path class="w" stroke="#e8e8e8" stroke-width="1.5" d="M378.3 234.6L374.0 235.7"/>
<path class="w" stroke="#e8e8e8" stroke-width="1.6" d="M374.0 235.7L369.7 236.9"/>
<path class="w" stroke="#e8e8e8" stroke-width="1.6" d="M369.7 236.9L365.4 238.2"/>
<path class="w" stroke="#e8e8e8" stroke-width="1.6" d="M365.4 238.2L361.1 239.7"/>
<path class="w" stroke="#e8e8e8" stroke-width="1.7" d="M361.1 239.7L356.8 241.3"/>
<path class="w" stroke="#e8e8e8" stroke-width="1.7" d="M356.8 241.3L352.6 243.2"/>
</g>
<clipPath id="lobe"><path d="M427.3 227.8L438.5 230.2L451.6 237.0L464.7 248.1L475.9 260.3L485.2 275.2L491.7 290.1L494.3 298.7L496.7 317.3L497.0 336.0L496.1 354.7L494.3 373.3L492.4 392.0L491.5 399.5L488.0 410.8L483.5 418.3L476.8 422.0L467.4 424.7L457.0 428.5L457.5 431.5L462.0 436.5L464.0 439.5L454.5 444.0L445.5 449.8L440.4 453.6L441.7 458.8L444.2 465.2L450.0 470.5L457.8 472.9L453.2 475.6L448.2 478.1L442.6 480.3L436.6 482.3L430.1 484.1L423.4 485.6L416.3 486.7L409.0 487.5L401.6 488.1L394.1 488.2L386.7 488.1L379.2 487.5L372.0 486.7L364.9 485.6L358.2 484.1L351.7 482.3L345.7 480.3L340.1 478.1L335.0 475.6L330.5 472.9L326.5 470.0L323.1 467.0L322.0 467.0L309.0 470.8L297.8 473.6L294.0 462.4L290.3 446.0L289.4 427.3L290.3 419.5L291.2 412.0L293.1 393.3L295.9 374.7L299.6 356.0L306.5 337.6L311.1 324.2L316.0 311.6L321.6 300.4L327.2 290.6L337.0 277.3L351.0 263.3L359.3 254.5L372.2 245.5L385.0 237.8L398.0 232.3L410.8 228.9Z"/></clipPath>
<g clip-path="url(#lobe)">
<rect x="280" y="220" width="230" height="280" fill="rgb(18,4,204)"/>
<defs><linearGradient id="w0" gradientUnits="userSpaceOnUse" x1="394.7" y1="447.6" x2="397.5" y2="232.5"><stop offset="0" stop-color="rgb(18,4,204)"/><stop offset="0.102" stop-color="rgb(18,4,204)"/><stop offset="1" stop-color="rgb(217,0,221)"/></linearGradient><linearGradient id="w1" gradientUnits="userSpaceOnUse" x1="394.7" y1="447.6" x2="403.2" y2="230.9"><stop offset="0" stop-color="rgb(18,4,204)"/><stop offset="0.101" stop-color="rgb(18,4,204)"/><stop offset="1" stop-color="rgb(217,0,222)"/></linearGradient><linearGradient id="w2" gradientUnits="userSpaceOnUse" x1="394.7" y1="447.6" x2="409.0" y2="229.4"><stop offset="0" stop-color="rgb(18,4,204)"/><stop offset="0.101" stop-color="rgb(18,4,204)"/><stop offset="1" stop-color="rgb(216,0,223)"/></linearGradient><linearGradient id="w3" gradientUnits="userSpaceOnUse" x1="394.7" y1="447.6" x2="414.8" y2="228.6"><stop offset="0" stop-color="rgb(18,4,204)"/><stop offset="0.100" stop-color="rgb(18,4,204)"/><stop offset="1" stop-color="rgb(216,0,224)"/></linearGradient><linearGradient id="w4" gradientUnits="userSpaceOnUse" x1="394.7" y1="447.6" x2="420.7" y2="228.2"><stop offset="0" stop-color="rgb(18,4,204)"/><stop offset="0.100" stop-color="rgb(18,4,204)"/><stop offset="1" stop-color="rgb(216,0,224)"/></linearGradient><linearGradient id="w5" gradientUnits="userSpaceOnUse" x1="394.7" y1="447.6" x2="426.6" y2="227.8"><stop offset="0" stop-color="rgb(18,4,204)"/><stop offset="0.099" stop-color="rgb(18,4,204)"/><stop offset="1" stop-color="rgb(216,0,224)"/></linearGradient><linearGradient id="w6" gradientUnits="userSpaceOnUse" x1="394.7" y1="447.6" x2="432.3" y2="228.9"><stop offset="0" stop-color="rgb(18,4,204)"/><stop offset="0.099" stop-color="rgb(18,4,204)"/><stop offset="1" stop-color="rgb(216,0,223)"/></linearGradient><linearGradient id="w7" gradientUnits="userSpaceOnUse" x1="394.7" y1="447.6" x2="438.0" y2="230.1"><stop offset="0" stop-color="rgb(18,4,204)"/><stop offset="0.099" stop-color="rgb(18,4,204)"/><stop offset="1" stop-color="rgb(216,0,223)"/></linearGradient><linearGradient id="w8" gradientUnits="userSpaceOnUse" x1="394.7" y1="447.6" x2="443.3" y2="232.7"><stop offset="0" stop-color="rgb(18,4,204)"/><stop offset="0.100" stop-color="rgb(18,4,204)"/><stop offset="1" stop-color="rgb(217,0,221)"/></linearGradient><linearGradient id="w9" gradientUnits="userSpaceOnUse" x1="394.7" y1="447.6" x2="448.6" y2="235.4"><stop offset="0" stop-color="rgb(18,4,204)"/><stop offset="0.101" stop-color="rgb(18,4,204)"/><stop offset="1" stop-color="rgb(217,0,219)"/></linearGradient><linearGradient id="w10" gradientUnits="userSpaceOnUse" x1="394.7" y1="447.6" x2="453.6" y2="238.7"><stop offset="0" stop-color="rgb(18,4,204)"/><stop offset="0.101" stop-color="rgb(18,4,204)"/><stop offset="1" stop-color="rgb(218,0,218)"/></linearGradient><linearGradient id="w11" gradientUnits="userSpaceOnUse" x1="394.7" y1="447.6" x2="458.3" y2="242.7"><stop offset="0" stop-color="rgb(18,4,204)"/><stop offset="0.103" stop-color="rgb(18,4,204)"/><stop offset="1" stop-color="rgb(219,0,215)"/></linearGradient><linearGradient id="w12" gradientUnits="userSpaceOnUse" x1="394.7" y1="447.6" x2="462.9" y2="246.6"><stop offset="0" stop-color="rgb(18,4,204)"/><stop offset="0.104" stop-color="rgb(18,4,204)"/><stop offset="1" stop-color="rgb(219,0,213)"/></linearGradient><linearGradient id="w13" gradientUnits="userSpaceOnUse" x1="394.7" y1="447.6" x2="467.3" y2="250.9"><stop offset="0" stop-color="rgb(18,4,204)"/><stop offset="0.105" stop-color="rgb(18,4,204)"/><stop offset="1" stop-color="rgb(220,0,210)"/></linearGradient><linearGradient id="w14" gradientUnits="userSpaceOnUse" x1="394.7" y1="447.6" x2="471.4" y2="255.4"><stop offset="0" stop-color="rgb(18,4,204)"/><stop offset="0.106" stop-color="rgb(18,4,204)"/><stop offset="1" stop-color="rgb(221,0,207)"/></linearGradient><linearGradient id="w15" gradientUnits="userSpaceOnUse" x1="394.7" y1="447.6" x2="475.4" y2="259.8"><stop offset="0" stop-color="rgb(18,4,204)"/><stop offset="0.108" stop-color="rgb(18,4,204)"/><stop offset="1" stop-color="rgb(222,0,205)"/></linearGradient><linearGradient id="w16" gradientUnits="userSpaceOnUse" x1="394.7" y1="447.6" x2="478.9" y2="265.0"><stop offset="0" stop-color="rgb(18,4,204)"/><stop offset="0.109" stop-color="rgb(18,4,204)"/><stop offset="1" stop-color="rgb(224,0,192)"/></linearGradient><linearGradient id="w17" gradientUnits="userSpaceOnUse" x1="394.7" y1="447.6" x2="482.1" y2="270.3"><stop offset="0" stop-color="rgb(18,4,204)"/><stop offset="0.111" stop-color="rgb(18,4,204)"/><stop offset="1" stop-color="rgb(225,0,176)"/></linearGradient><linearGradient id="w18" gradientUnits="userSpaceOnUse" x1="394.7" y1="447.6" x2="485.3" y2="275.4"><stop offset="0" stop-color="rgb(18,4,204)"/><stop offset="0.113" stop-color="rgb(18,4,204)"/><stop offset="1" stop-color="rgb(227,0,161)"/></linearGradient><linearGradient id="w19" gradientUnits="userSpaceOnUse" x1="394.7" y1="447.6" x2="487.8" y2="281.3"><stop offset="0" stop-color="rgb(18,4,204)"/><stop offset="0.115" stop-color="rgb(18,4,204)"/><stop offset="1" stop-color="rgb(228,0,141)"/></linearGradient><linearGradient id="w20" gradientUnits="userSpaceOnUse" x1="394.7" y1="447.6" x2="490.3" y2="286.9"><stop offset="0" stop-color="rgb(18,4,204)"/><stop offset="0.118" stop-color="rgb(18,4,204)"/><stop offset="1" stop-color="rgb(229,0,120)"/></linearGradient><linearGradient id="w21" gradientUnits="userSpaceOnUse" x1="394.7" y1="447.6" x2="492.5" y2="292.6"><stop offset="0" stop-color="rgb(18,4,204)"/><stop offset="0.120" stop-color="rgb(18,4,204)"/><stop offset="1" stop-color="rgb(229,0,99)"/></linearGradient><linearGradient id="w22" gradientUnits="userSpaceOnUse" x1="394.7" y1="447.6" x2="494.3" y2="298.6"><stop offset="0" stop-color="rgb(18,4,204)"/><stop offset="0.123" stop-color="rgb(18,4,204)"/><stop offset="1" stop-color="rgb(230,1,78)"/></linearGradient><linearGradient id="w23" gradientUnits="userSpaceOnUse" x1="394.7" y1="447.6" x2="495.2" y2="305.4"><stop offset="0" stop-color="rgb(18,4,204)"/><stop offset="0.126" stop-color="rgb(18,4,204)"/><stop offset="1" stop-color="rgb(229,8,53)"/></linearGradient><linearGradient id="w24" gradientUnits="userSpaceOnUse" x1="394.7" y1="447.6" x2="496.0" y2="311.9"><stop offset="0" stop-color="rgb(18,4,204)"/><stop offset="0.130" stop-color="rgb(18,4,204)"/><stop offset="1" stop-color="rgb(229,15,29)"/></linearGradient><linearGradient id="w25" gradientUnits="userSpaceOnUse" x1="394.7" y1="447.6" x2="496.7" y2="318.2"><stop offset="0" stop-color="rgb(18,4,204)"/><stop offset="0.134" stop-color="rgb(18,4,204)"/><stop offset="1" stop-color="rgb(228,24,9)"/></linearGradient><linearGradient id="w26" gradientUnits="userSpaceOnUse" x1="394.7" y1="447.6" x2="496.8" y2="324.8"><stop offset="0" stop-color="rgb(18,4,204)"/><stop offset="0.138" stop-color="rgb(18,4,204)"/><stop offset="1" stop-color="rgb(229,49,5)"/></linearGradient><linearGradient id="w27" gradientUnits="userSpaceOnUse" x1="394.7" y1="447.6" x2="496.9" y2="331.0"><stop offset="0" stop-color="rgb(18,4,204)"/><stop offset="0.142" stop-color="rgb(18,4,204)"/><stop offset="1" stop-color="rgb(230,73,1)"/></linearGradient><linearGradient id="w28" gradientUnits="userSpaceOnUse" x1="394.7" y1="447.6" x2="497.0" y2="337.0"><stop offset="0" stop-color="rgb(18,4,204)"/><stop offset="0.146" stop-color="rgb(18,4,204)"/><stop offset="1" stop-color="rgb(230,96,0)"/></linearGradient><linearGradient id="w29" gradientUnits="userSpaceOnUse" x1="394.7" y1="447.6" x2="496.7" y2="342.9"><stop offset="0" stop-color="rgb(18,4,204)"/><stop offset="0.151" stop-color="rgb(18,4,204)"/><stop offset="1" stop-color="rgb(230,120,0)"/></linearGradient><linearGradient id="w30" gradientUnits="userSpaceOnUse" x1="394.7" y1="447.6" x2="496.4" y2="348.5"><stop offset="0" stop-color="rgb(18,4,204)"/><stop offset="0.155" stop-color="rgb(18,4,204)"/><stop offset="1" stop-color="rgb(230,142,0)"/></linearGradient><linearGradient id="w31" gradientUnits="userSpaceOnUse" x1="394.7" y1="447.6" x2="496.1" y2="353.8"><stop offset="0" stop-color="rgb(18,4,204)"/><stop offset="0.159" stop-color="rgb(18,4,204)"/><stop offset="1" stop-color="rgb(228,158,0)"/></linearGradient><linearGradient id="w32" gradientUnits="userSpaceOnUse" x1="394.7" y1="447.6" x2="495.7" y2="359.0"><stop offset="0" stop-color="rgb(18,4,204)"/><stop offset="0.164" stop-color="rgb(18,4,204)"/><stop offset="1" stop-color="rgb(227,175,0)"/></linearGradient><linearGradient id="w33" gradientUnits="userSpaceOnUse" x1="394.7" y1="447.6" x2="495.2" y2="364.0"><stop offset="0" stop-color="rgb(18,4,204)"/><stop offset="0.168" stop-color="rgb(18,4,204)"/><stop offset="1" stop-color="rgb(225,190,0)"/></linearGradient><linearGradient id="w34" gradientUnits="userSpaceOnUse" x1="394.7" y1="447.6" x2="494.7" y2="368.7"><stop offset="0" stop-color="rgb(18,4,204)"/><stop offset="0.173" stop-color="rgb(18,4,204)"/><stop offset="1" stop-color="rgb(222,198,0)"/></linearGradient><linearGradient id="w35" gradientUnits="userSpaceOnUse" x1="394.7" y1="447.6" x2="494.3" y2="373.2"><stop offset="0" stop-color="rgb(18,4,204)"/><stop offset="0.177" stop-color="rgb(18,4,204)"/><stop offset="1" stop-color="rgb(220,205,0)"/></linearGradient><linearGradient id="w36" gradientUnits="userSpaceOnUse" x1="394.7" y1="447.6" x2="493.9" y2="377.5"><stop offset="0" stop-color="rgb(18,4,204)"/><stop offset="0.181" stop-color="rgb(18,4,204)"/><stop offset="1" stop-color="rgb(217,212,0)"/></linearGradient><linearGradient id="w37" gradientUnits="userSpaceOnUse" x1="394.7" y1="447.6" x2="493.5" y2="381.6"><stop offset="0" stop-color="rgb(18,4,204)"/><stop offset="0.185" stop-color="rgb(18,4,204)"/><stop offset="1" stop-color="rgb(216,216,0)"/></linearGradient><linearGradient id="w38" gradientUnits="userSpaceOnUse" x1="394.7" y1="447.6" x2="493.1" y2="385.5"><stop offset="0" stop-color="rgb(18,4,204)"/><stop offset="0.189" stop-color="rgb(18,4,204)"/><stop offset="1" stop-color="rgb(216,216,0)"/></linearGradient><linearGradient id="w39" gradientUnits="userSpaceOnUse" x1="394.7" y1="447.6" x2="492.7" y2="389.3"><stop offset="0" stop-color="rgb(18,4,204)"/><stop offset="0.193" stop-color="rgb(18,4,204)"/><stop offset="1" stop-color="rgb(216,216,0)"/></linearGradient><linearGradient id="w40" gradientUnits="userSpaceOnUse" x1="394.7" y1="447.6" x2="492.3" y2="392.9"><stop offset="0" stop-color="rgb(18,4,204)"/><stop offset="0.197" stop-color="rgb(18,4,204)"/><stop offset="1" stop-color="rgb(216,216,0)"/></linearGradient><linearGradient id="w41" gradientUnits="userSpaceOnUse" x1="394.7" y1="447.6" x2="491.9" y2="396.5"><stop offset="0" stop-color="rgb(18,4,204)"/><stop offset="0.200" stop-color="rgb(18,4,204)"/><stop offset="1" stop-color="rgb(215,215,0)"/></linearGradient><linearGradient id="w42" gradientUnits="userSpaceOnUse" x1="394.7" y1="447.6" x2="491.4" y2="399.9"><stop offset="0" stop-color="rgb(18,4,204)"/><stop offset="0.204" stop-color="rgb(18,4,204)"/><stop offset="1" stop-color="rgb(215,215,0)"/></linearGradient><linearGradient id="w43" gradientUnits="userSpaceOnUse" x1="394.7" y1="447.6" x2="490.2" y2="403.6"><stop offset="0" stop-color="rgb(18,4,204)"/><stop offset="0.209" stop-color="rgb(18,4,204)"/><stop offset="1" stop-color="rgb(215,215,0)"/></linearGradient><linearGradient id="w44" gradientUnits="userSpaceOnUse" x1="394.7" y1="447.6" x2="489.2" y2="407.0"><stop offset="0" stop-color="rgb(18,4,204)"/><stop offset="0.214" stop-color="rgb(18,4,204)"/><stop offset="1" stop-color="rgb(213,215,0)"/></linearGradient><linearGradient id="w45" gradientUnits="userSpaceOnUse" x1="394.7" y1="447.6" x2="488.1" y2="410.3"><stop offset="0" stop-color="rgb(18,4,204)"/><stop offset="0.219" stop-color="rgb(18,4,204)"/><stop offset="1" stop-color="rgb(209,216,1)"/></linearGradient><linearGradient id="w46" gradientUnits="userSpaceOnUse" x1="394.7" y1="447.6" x2="486.2" y2="413.9"><stop offset="0" stop-color="rgb(18,4,204)"/><stop offset="0.226" stop-color="rgb(18,4,204)"/><stop offset="1" stop-color="rgb(206,216,2)"/></linearGradient><linearGradient id="w47" gradientUnits="userSpaceOnUse" x1="394.7" y1="447.6" x2="484.1" y2="417.2"><stop offset="0" stop-color="rgb(18,4,204)"/><stop offset="0.233" stop-color="rgb(18,4,204)"/><stop offset="1" stop-color="rgb(202,217,3)"/></linearGradient><linearGradient id="w48" gradientUnits="userSpaceOnUse" x1="394.7" y1="447.6" x2="461.5" y2="426.9"><stop offset="0" stop-color="rgb(18,4,204)"/><stop offset="0.315" stop-color="rgb(18,4,204)"/><stop offset="1" stop-color="rgb(198,218,4)"/></linearGradient><linearGradient id="w49" gradientUnits="userSpaceOnUse" x1="394.7" y1="447.6" x2="457.2" y2="430.0"><stop offset="0" stop-color="rgb(18,4,204)"/><stop offset="0.339" stop-color="rgb(18,4,204)"/><stop offset="1" stop-color="rgb(194,218,5)"/></linearGradient><linearGradient id="w50" gradientUnits="userSpaceOnUse" x1="394.7" y1="447.6" x2="457.6" y2="431.6"><stop offset="0" stop-color="rgb(18,4,204)"/><stop offset="0.339" stop-color="rgb(18,4,204)"/><stop offset="1" stop-color="rgb(191,219,8)"/></linearGradient><linearGradient id="w51" gradientUnits="userSpaceOnUse" x1="394.7" y1="447.6" x2="458.9" y2="433.1"><stop offset="0" stop-color="rgb(18,4,204)"/><stop offset="0.334" stop-color="rgb(18,4,204)"/><stop offset="1" stop-color="rgb(187,219,10)"/></linearGradient><linearGradient id="w52" gradientUnits="userSpaceOnUse" x1="394.7" y1="447.6" x2="460.3" y2="434.6"><stop offset="0" stop-color="rgb(18,4,204)"/><stop offset="0.2" stop-color="rgb(18,5,204)"/><stop offset="0.35" stop-color="rgb(23,13,199)"/><stop offset="0.5" stop-color="rgb(58,61,158)"/><stop offset="0.62" stop-color="rgb(87,100,126)"/><stop offset="0.74" stop-color="rgb(115,139,93)"/><stop offset="0.86" stop-color="rgb(144,177,57)"/><stop offset="1" stop-color="rgb(183,220,13)"/></linearGradient><linearGradient id="w53" gradientUnits="userSpaceOnUse" x1="394.7" y1="447.6" x2="461.6" y2="436.1"><stop offset="0" stop-color="rgb(18,4,204)"/><stop offset="0.2" stop-color="rgb(18,8,205)"/><stop offset="0.35" stop-color="rgb(24,18,199)"/><stop offset="0.5" stop-color="rgb(55,66,164)"/><stop offset="0.62" stop-color="rgb(80,106,136)"/><stop offset="0.74" stop-color="rgb(105,145,105)"/><stop offset="0.86" stop-color="rgb(131,181,68)"/><stop offset="1" stop-color="rgb(179,220,15)"/></linearGradient><linearGradient id="w54" gradientUnits="userSpaceOnUse" x1="394.7" y1="447.6" x2="462.8" y2="437.7"><stop offset="0" stop-color="rgb(18,4,204)"/><stop offset="0.2" stop-color="rgb(19,10,205)"/><stop offset="0.35" stop-color="rgb(24,22,199)"/><stop offset="0.5" stop-color="rgb(52,71,170)"/><stop offset="0.62" stop-color="rgb(74,111,145)"/><stop offset="0.74" stop-color="rgb(96,151,117)"/><stop offset="0.86" stop-color="rgb(119,185,77)"/><stop offset="1" stop-color="rgb(176,220,16)"/></linearGradient><linearGradient id="w55" gradientUnits="userSpaceOnUse" x1="394.7" y1="447.6" x2="463.9" y2="439.4"><stop offset="0" stop-color="rgb(18,4,204)"/><stop offset="0.2" stop-color="rgb(19,13,206)"/><stop offset="0.35" stop-color="rgb(25,26,200)"/><stop offset="0.5" stop-color="rgb(49,75,176)"/><stop offset="0.62" stop-color="rgb(68,116,154)"/><stop offset="0.74" stop-color="rgb(87,156,128)"/><stop offset="0.86" stop-color="rgb(107,189,87)"/><stop offset="1" stop-color="rgb(172,220,18)"/></linearGradient><linearGradient id="w56" gradientUnits="userSpaceOnUse" x1="394.7" y1="447.6" x2="459.5" y2="441.6"><stop offset="0" stop-color="rgb(18,4,204)"/><stop offset="0.2" stop-color="rgb(19,15,206)"/><stop offset="0.35" stop-color="rgb(21,26,205)"/><stop offset="0.5" stop-color="rgb(43,76,185)"/><stop offset="0.62" stop-color="rgb(60,118,166)"/><stop offset="0.74" stop-color="rgb(76,160,142)"/><stop offset="0.86" stop-color="rgb(96,192,97)"/><stop offset="1" stop-color="rgb(168,220,19)"/></linearGradient><linearGradient id="w57" gradientUnits="userSpaceOnUse" x1="394.7" y1="447.6" x2="455.3" y2="443.6"><stop offset="0" stop-color="rgb(18,4,204)"/><stop offset="0.2" stop-color="rgb(19,18,206)"/><stop offset="0.35" stop-color="rgb(20,28,208)"/><stop offset="0.5" stop-color="rgb(38,77,194)"/><stop offset="0.62" stop-color="rgb(52,121,178)"/><stop offset="0.74" stop-color="rgb(67,164,155)"/><stop offset="0.86" stop-color="rgb(84,195,107)"/><stop offset="1" stop-color="rgb(163,220,21)"/></linearGradient><linearGradient id="w58" gradientUnits="userSpaceOnUse" x1="394.7" y1="447.6" x2="452.4" y2="445.3"><stop offset="0" stop-color="rgb(18,4,204)"/><stop offset="0.2" stop-color="rgb(19,20,207)"/><stop offset="0.35" stop-color="rgb(20,32,209)"/><stop offset="0.5" stop-color="rgb(33,80,201)"/><stop offset="0.62" stop-color="rgb(45,125,188)"/><stop offset="0.74" stop-color="rgb(57,169,167)"/><stop offset="0.86" stop-color="rgb(72,199,117)"/><stop offset="1" stop-color="rgb(152,221,26)"/></linearGradient><linearGradient id="w59" gradientUnits="userSpaceOnUse" x1="394.7" y1="447.6" x2="450.0" y2="446.9"><stop offset="0" stop-color="rgb(18,4,204)"/><stop offset="0.2" stop-color="rgb(20,22,207)"/><stop offset="0.35" stop-color="rgb(21,36,210)"/><stop offset="0.5" stop-color="rgb(30,84,207)"/><stop offset="0.62" stop-color="rgb(39,130,198)"/><stop offset="0.74" stop-color="rgb(48,174,179)"/><stop offset="0.86" stop-color="rgb(61,203,127)"/><stop offset="1" stop-color="rgb(141,223,31)"/></linearGradient><linearGradient id="w60" gradientUnits="userSpaceOnUse" x1="394.7" y1="447.6" x2="447.8" y2="448.3"><stop offset="0" stop-color="rgb(18,4,204)"/><stop offset="0.2" stop-color="rgb(20,25,208)"/><stop offset="0.35" stop-color="rgb(21,41,210)"/><stop offset="0.5" stop-color="rgb(28,89,213)"/><stop offset="0.62" stop-color="rgb(35,135,207)"/><stop offset="0.74" stop-color="rgb(41,180,190)"/><stop offset="0.86" stop-color="rgb(53,207,135)"/><stop offset="1" stop-color="rgb(129,224,36)"/></linearGradient><linearGradient id="w61" gradientUnits="userSpaceOnUse" x1="394.7" y1="447.6" x2="445.8" y2="449.6"><stop offset="0" stop-color="rgb(18,4,204)"/><stop offset="0.2" stop-color="rgb(20,27,208)"/><stop offset="0.35" stop-color="rgb(22,45,211)"/><stop offset="0.5" stop-color="rgb(27,95,217)"/><stop offset="0.62" stop-color="rgb(31,141,215)"/><stop offset="0.74" stop-color="rgb(36,186,200)"/><stop offset="0.86" stop-color="rgb(46,211,143)"/><stop offset="1" stop-color="rgb(117,225,44)"/></linearGradient><linearGradient id="w62" gradientUnits="userSpaceOnUse" x1="394.7" y1="447.6" x2="444.1" y2="450.8"><stop offset="0" stop-color="rgb(18,4,204)"/><stop offset="0.2" stop-color="rgb(20,30,208)"/><stop offset="0.35" stop-color="rgb(22,49,212)"/><stop offset="0.5" stop-color="rgb(26,101,221)"/><stop offset="0.62" stop-color="rgb(29,148,221)"/><stop offset="0.74" stop-color="rgb(32,193,209)"/><stop offset="0.86" stop-color="rgb(41,215,149)"/><stop offset="1" stop-color="rgb(99,223,68)"/></linearGradient><linearGradient id="w63" gradientUnits="userSpaceOnUse" x1="394.7" y1="447.6" x2="442.6" y2="452.0"><stop offset="0" stop-color="rgb(18,4,204)"/><stop offset="0.2" stop-color="rgb(20,30,209)"/><stop offset="0.35" stop-color="rgb(22,50,212)"/><stop offset="0.5" stop-color="rgb(26,102,221)"/><stop offset="0.62" stop-color="rgb(29,149,222)"/><stop offset="0.74" stop-color="rgb(31,194,210)"/><stop offset="0.86" stop-color="rgb(40,216,150)"/><stop offset="1" stop-color="rgb(81,222,92)"/></linearGradient><linearGradient id="w64" gradientUnits="userSpaceOnUse" x1="394.7" y1="447.6" x2="441.1" y2="453.1"><stop offset="0" stop-color="rgb(18,4,204)"/><stop offset="0.2" stop-color="rgb(20,30,209)"/><stop offset="0.35" stop-color="rgb(22,50,212)"/><stop offset="0.5" stop-color="rgb(26,102,221)"/><stop offset="0.62" stop-color="rgb(29,149,222)"/><stop offset="0.74" stop-color="rgb(31,194,210)"/><stop offset="0.86" stop-color="rgb(40,216,150)"/><stop offset="1" stop-color="rgb(63,220,116)"/></linearGradient><linearGradient id="w65" gradientUnits="userSpaceOnUse" x1="394.7" y1="447.6" x2="440.6" y2="454.2"><stop offset="0" stop-color="rgb(18,4,204)"/><stop offset="0.2" stop-color="rgb(20,30,209)"/><stop offset="0.35" stop-color="rgb(22,50,212)"/><stop offset="0.5" stop-color="rgb(26,102,221)"/><stop offset="0.62" stop-color="rgb(29,149,222)"/><stop offset="0.74" stop-color="rgb(31,194,210)"/><stop offset="0.86" stop-color="rgb(40,216,150)"/><stop offset="1" stop-color="rgb(60,221,110)"/></linearGradient><linearGradient id="w66" gradientUnits="userSpaceOnUse" x1="394.7" y1="447.6" x2="440.9" y2="455.5"><stop offset="0" stop-color="rgb(18,4,204)"/><stop offset="0.2" stop-color="rgb(20,30,209)"/><stop offset="0.35" stop-color="rgb(22,50,212)"/><stop offset="0.5" stop-color="rgb(26,102,221)"/><stop offset="0.62" stop-color="rgb(29,149,222)"/><stop offset="0.74" stop-color="rgb(31,194,210)"/><stop offset="0.86" stop-color="rgb(40,216,150)"/><stop offset="1" stop-color="rgb(60,222,97)"/></linearGradient><linearGradient id="w67" gradientUnits="userSpaceOnUse" x1="394.7" y1="447.6" x2="441.2" y2="456.9"><stop offset="0" stop-color="rgb(18,4,204)"/><stop offset="0.2" stop-color="rgb(20,30,209)"/><stop offset="0.35" stop-color="rgb(22,50,212)"/><stop offset="0.5" stop-color="rgb(26,102,221)"/><stop offset="0.62" stop-color="rgb(29,149,222)"/><stop offset="0.74" stop-color="rgb(31,194,210)"/><stop offset="0.86" stop-color="rgb(40,216,150)"/><stop offset="1" stop-color="rgb(60,224,85)"/></linearGradient><linearGradient id="w68" gradientUnits="userSpaceOnUse" x1="394.7" y1="447.6" x2="441.6" y2="458.2"><stop offset="0" stop-color="rgb(18,4,204)"/><stop offset="0.2" stop-color="rgb(20,30,209)"/><stop offset="0.35" stop-color="rgb(22,50,212)"/><stop offset="0.5" stop-color="rgb(26,102,221)"/><stop offset="0.62" stop-color="rgb(29,149,222)"/><stop offset="0.74" stop-color="rgb(31,194,210)"/><stop offset="0.86" stop-color="rgb(40,216,150)"/><stop offset="1" stop-color="rgb(60,225,72)"/></linearGradient><linearGradient id="w69" gradientUnits="userSpaceOnUse" x1="394.7" y1="447.6" x2="442.0" y2="459.6"><stop offset="0" stop-color="rgb(18,4,204)"/><stop offset="0.2" stop-color="rgb(20,30,209)"/><stop offset="0.35" stop-color="rgb(22,50,212)"/><stop offset="0.5" stop-color="rgb(26,102,221)"/><stop offset="0.62" stop-color="rgb(29,149,222)"/><stop offset="0.74" stop-color="rgb(31,194,210)"/><stop offset="0.86" stop-color="rgb(40,216,150)"/><stop offset="1" stop-color="rgb(62,225,66)"/></linearGradient><linearGradient id="w70" gradientUnits="userSpaceOnUse" x1="394.7" y1="447.6" x2="442.6" y2="461.1"><stop offset="0" stop-color="rgb(18,4,204)"/><stop offset="0.2" stop-color="rgb(20,30,209)"/><stop offset="0.35" stop-color="rgb(22,50,212)"/><stop offset="0.5" stop-color="rgb(26,102,221)"/><stop offset="0.62" stop-color="rgb(29,149,222)"/><stop offset="0.74" stop-color="rgb(31,194,210)"/><stop offset="0.86" stop-color="rgb(40,216,150)"/><stop offset="1" stop-color="rgb(64,225,62)"/></linearGradient><linearGradient id="w71" gradientUnits="userSpaceOnUse" x1="394.7" y1="447.6" x2="443.2" y2="462.7"><stop offset="0" stop-color="rgb(18,4,204)"/><stop offset="0.2" stop-color="rgb(20,30,209)"/><stop offset="0.35" stop-color="rgb(22,50,212)"/><stop offset="0.5" stop-color="rgb(26,102,221)"/><stop offset="0.62" stop-color="rgb(29,149,222)"/><stop offset="0.74" stop-color="rgb(31,194,210)"/><stop offset="0.86" stop-color="rgb(40,216,150)"/><stop offset="1" stop-color="rgb(66,225,58)"/></linearGradient><linearGradient id="w72" gradientUnits="userSpaceOnUse" x1="394.7" y1="447.6" x2="443.8" y2="464.3"><stop offset="0" stop-color="rgb(18,4,204)"/><stop offset="0.2" stop-color="rgb(20,30,209)"/><stop offset="0.35" stop-color="rgb(22,50,212)"/><stop offset="0.5" stop-color="rgb(26,102,221)"/><stop offset="0.62" stop-color="rgb(29,149,222)"/><stop offset="0.74" stop-color="rgb(31,194,210)"/><stop offset="0.86" stop-color="rgb(40,216,150)"/><stop offset="1" stop-color="rgb(68,225,54)"/></linearGradient><linearGradient id="w73" gradientUnits="userSpaceOnUse" x1="394.7" y1="447.6" x2="445.4" y2="466.3"><stop offset="0" stop-color="rgb(18,4,204)"/><stop offset="0.2" stop-color="rgb(20,30,209)"/><stop offset="0.35" stop-color="rgb(22,50,212)"/><stop offset="0.5" stop-color="rgb(26,102,221)"/><stop offset="0.62" stop-color="rgb(29,149,222)"/><stop offset="0.74" stop-color="rgb(31,194,210)"/><stop offset="0.86" stop-color="rgb(40,216,150)"/><stop offset="1" stop-color="rgb(70,225,50)"/></linearGradient><linearGradient id="w74" gradientUnits="userSpaceOnUse" x1="394.7" y1="447.6" x2="448.4" y2="469.0"><stop offset="0" stop-color="rgb(18,4,204)"/><stop offset="0.2" stop-color="rgb(20,30,209)"/><stop offset="0.35" stop-color="rgb(22,50,212)"/><stop offset="0.5" stop-color="rgb(26,102,221)"/><stop offset="0.62" stop-color="rgb(29,149,222)"/><stop offset="0.74" stop-color="rgb(31,194,210)"/><stop offset="0.86" stop-color="rgb(40,216,150)"/><stop offset="1" stop-color="rgb(72,222,50)"/></linearGradient><linearGradient id="w75" gradientUnits="userSpaceOnUse" x1="394.7" y1="447.6" x2="456.0" y2="473.9"><stop offset="0" stop-color="rgb(18,4,204)"/><stop offset="0.2" stop-color="rgb(20,30,209)"/><stop offset="0.35" stop-color="rgb(22,50,212)"/><stop offset="0.5" stop-color="rgb(26,102,221)"/><stop offset="0.62" stop-color="rgb(29,149,222)"/><stop offset="0.74" stop-color="rgb(31,194,210)"/><stop offset="0.86" stop-color="rgb(40,216,150)"/><stop offset="1" stop-color="rgb(74,220,50)"/></linearGradient><linearGradient id="w76" gradientUnits="userSpaceOnUse" x1="394.7" y1="447.6" x2="454.2" y2="475.0"><stop offset="0" stop-color="rgb(18,4,204)"/><stop offset="0.2" stop-color="rgb(20,30,209)"/><stop offset="0.35" stop-color="rgb(22,50,212)"/><stop offset="0.5" stop-color="rgb(26,102,221)"/><stop offset="0.62" stop-color="rgb(29,149,222)"/><stop offset="0.74" stop-color="rgb(31,194,210)"/><stop offset="0.86" stop-color="rgb(40,216,150)"/><stop offset="1" stop-color="rgb(76,218,50)"/></linearGradient><linearGradient id="w77" gradientUnits="userSpaceOnUse" x1="394.7" y1="447.6" x2="452.3" y2="476.0"><stop offset="0" stop-color="rgb(18,4,204)"/><stop offset="0.2" stop-color="rgb(20,30,209)"/><stop offset="0.35" stop-color="rgb(22,50,212)"/><stop offset="0.5" stop-color="rgb(26,102,221)"/><stop offset="0.62" stop-color="rgb(29,149,222)"/><stop offset="0.74" stop-color="rgb(31,194,210)"/><stop offset="0.86" stop-color="rgb(40,216,150)"/><stop offset="1" stop-color="rgb(78,215,50)"/></linearGradient><linearGradient id="w78" gradientUnits="userSpaceOnUse" x1="394.7" y1="447.6" x2="450.4" y2="476.9"><stop offset="0" stop-color="rgb(18,4,204)"/><stop offset="0.2" stop-color="rgb(20,30,209)"/><stop offset="0.35" stop-color="rgb(22,50,212)"/><stop offset="0.5" stop-color="rgb(26,102,221)"/><stop offset="0.62" stop-color="rgb(29,149,222)"/><stop offset="0.74" stop-color="rgb(31,194,210)"/><stop offset="0.86" stop-color="rgb(40,216,150)"/><stop offset="1" stop-color="rgb(80,213,50)"/></linearGradient><linearGradient id="w79" gradientUnits="userSpaceOnUse" x1="394.7" y1="447.6" x2="448.6" y2="477.8"><stop offset="0" stop-color="rgb(18,4,204)"/><stop offset="0.2" stop-color="rgb(20,30,209)"/><stop offset="0.35" stop-color="rgb(22,50,212)"/><stop offset="0.5" stop-color="rgb(26,102,221)"/><stop offset="0.62" stop-color="rgb(29,149,222)"/><stop offset="0.74" stop-color="rgb(31,194,210)"/><stop offset="0.86" stop-color="rgb(40,216,150)"/><stop offset="1" stop-color="rgb(82,211,50)"/></linearGradient><linearGradient id="w80" gradientUnits="userSpaceOnUse" x1="394.7" y1="447.6" x2="446.8" y2="478.6"><stop offset="0" stop-color="rgb(18,4,204)"/><stop offset="0.2" stop-color="rgb(20,30,209)"/><stop offset="0.35" stop-color="rgb(22,50,212)"/><stop offset="0.5" stop-color="rgb(26,102,221)"/><stop offset="0.62" stop-color="rgb(29,149,222)"/><stop offset="0.74" stop-color="rgb(31,194,210)"/><stop offset="0.86" stop-color="rgb(40,216,150)"/><stop offset="1" stop-color="rgb(83,208,50)"/></linearGradient><linearGradient id="w81" gradientUnits="userSpaceOnUse" x1="394.7" y1="447.6" x2="445.0" y2="479.3"><stop offset="0" stop-color="rgb(18,4,204)"/><stop offset="0.2" stop-color="rgb(20,30,209)"/><stop offset="0.35" stop-color="rgb(22,50,212)"/><stop offset="0.5" stop-color="rgb(26,102,221)"/><stop offset="0.62" stop-color="rgb(29,149,222)"/><stop offset="0.74" stop-color="rgb(31,194,210)"/><stop offset="0.86" stop-color="rgb(40,216,150)"/><stop offset="1" stop-color="rgb(85,206,50)"/></linearGradient><linearGradient id="w82" gradientUnits="userSpaceOnUse" x1="394.7" y1="447.6" x2="443.3" y2="480.0"><stop offset="0" stop-color="rgb(18,4,204)"/><stop offset="0.2" stop-color="rgb(20,30,209)"/><stop offset="0.35" stop-color="rgb(22,50,212)"/><stop offset="0.5" stop-color="rgb(26,102,221)"/><stop offset="0.62" stop-color="rgb(29,149,222)"/><stop offset="0.74" stop-color="rgb(31,194,210)"/><stop offset="0.86" stop-color="rgb(40,216,150)"/><stop offset="1" stop-color="rgb(87,204,50)"/></linearGradient><linearGradient id="w83" gradientUnits="userSpaceOnUse" x1="394.7" y1="447.6" x2="441.5" y2="480.7"><stop offset="0" stop-color="rgb(18,4,204)"/><stop offset="0.2" stop-color="rgb(20,30,209)"/><stop offset="0.35" stop-color="rgb(22,50,212)"/><stop offset="0.5" stop-color="rgb(26,102,221)"/><stop offset="0.62" stop-color="rgb(29,149,222)"/><stop offset="0.74" stop-color="rgb(31,194,210)"/><stop offset="0.86" stop-color="rgb(40,216,150)"/><stop offset="1" stop-color="rgb(89,201,50)"/></linearGradient><linearGradient id="w84" gradientUnits="userSpaceOnUse" x1="394.7" y1="447.6" x2="439.8" y2="481.3"><stop offset="0" stop-color="rgb(18,4,204)"/><stop offset="0.2" stop-color="rgb(20,30,209)"/><stop offset="0.35" stop-color="rgb(22,50,212)"/><stop offset="0.5" stop-color="rgb(26,102,221)"/><stop offset="0.62" stop-color="rgb(29,149,222)"/><stop offset="0.74" stop-color="rgb(31,194,210)"/><stop offset="0.86" stop-color="rgb(40,216,150)"/><stop offset="1" stop-color="rgb(87,199,53)"/></linearGradient><linearGradient id="w85" gradientUnits="userSpaceOnUse" x1="394.7" y1="447.6" x2="438.1" y2="481.8"><stop offset="0" stop-color="rgb(18,4,204)"/><stop offset="0.2" stop-color="rgb(20,30,209)"/><stop offset="0.35" stop-color="rgb(22,50,212)"/><stop offset="0.5" stop-color="rgb(26,102,221)"/><stop offset="0.62" stop-color="rgb(29,149,222)"/><stop offset="0.74" stop-color="rgb(31,194,210)"/><stop offset="0.86" stop-color="rgb(40,216,150)"/><stop offset="1" stop-color="rgb(82,198,60)"/></linearGradient><linearGradient id="w86" gradientUnits="userSpaceOnUse" x1="394.7" y1="447.6" x2="436.5" y2="482.4"><stop offset="0" stop-color="rgb(18,4,204)"/><stop offset="0.2" stop-color="rgb(20,30,209)"/><stop offset="0.35" stop-color="rgb(22,50,212)"/><stop offset="0.5" stop-color="rgb(26,102,221)"/><stop offset="0.62" stop-color="rgb(29,149,222)"/><stop offset="0.74" stop-color="rgb(31,194,210)"/><stop offset="0.86" stop-color="rgb(40,216,150)"/><stop offset="1" stop-color="rgb(76,197,67)"/></linearGradient><linearGradient id="w87" gradientUnits="userSpaceOnUse" x1="394.7" y1="447.6" x2="434.8" y2="482.8"><stop offset="0" stop-color="rgb(18,4,204)"/><stop offset="0.2" stop-color="rgb(20,30,209)"/><stop offset="0.35" stop-color="rgb(22,50,212)"/><stop offset="0.5" stop-color="rgb(26,102,221)"/><stop offset="0.62" stop-color="rgb(29,149,222)"/><stop offset="0.74" stop-color="rgb(31,194,210)"/><stop offset="0.86" stop-color="rgb(40,216,150)"/><stop offset="1" stop-color="rgb(71,195,74)"/></linearGradient><linearGradient id="w88" gradientUnits="userSpaceOnUse" x1="394.7" y1="447.6" x2="433.3" y2="483.2"><stop offset="0" stop-color="rgb(18,4,204)"/><stop offset="0.2" stop-color="rgb(20,30,209)"/><stop offset="0.35" stop-color="rgb(22,50,212)"/><stop offset="0.5" stop-color="rgb(26,102,221)"/><stop offset="0.62" stop-color="rgb(29,149,222)"/><stop offset="0.74" stop-color="rgb(31,194,210)"/><stop offset="0.86" stop-color="rgb(40,216,150)"/><stop offset="1" stop-color="rgb(65,194,81)"/></linearGradient><linearGradient id="w89" gradientUnits="userSpaceOnUse" x1="394.7" y1="447.6" x2="431.7" y2="483.7"><stop offset="0" stop-color="rgb(18,4,204)"/><stop offset="0.2" stop-color="rgb(20,30,209)"/><stop offset="0.35" stop-color="rgb(22,50,212)"/><stop offset="0.5" stop-color="rgb(26,102,221)"/><stop offset="0.62" stop-color="rgb(29,149,222)"/><stop offset="0.74" stop-color="rgb(31,194,210)"/><stop offset="0.86" stop-color="rgb(40,216,150)"/><stop offset="1" stop-color="rgb(60,192,88)"/></linearGradient><linearGradient id="w90" gradientUnits="userSpaceOnUse" x1="394.7" y1="447.6" x2="430.2" y2="484.1"><stop offset="0" stop-color="rgb(18,4,204)"/><stop offset="0.2" stop-color="rgb(20,30,209)"/><stop offset="0.35" stop-color="rgb(22,50,212)"/><stop offset="0.5" stop-color="rgb(26,102,221)"/><stop offset="0.62" stop-color="rgb(29,149,222)"/><stop offset="0.74" stop-color="rgb(31,194,210)"/><stop offset="0.86" stop-color="rgb(40,216,150)"/><stop offset="1" stop-color="rgb(55,191,94)"/></linearGradient><linearGradient id="w91" gradientUnits="userSpaceOnUse" x1="394.7" y1="447.6" x2="428.7" y2="484.4"><stop offset="0" stop-color="rgb(18,4,204)"/><stop offset="0.2" stop-color="rgb(20,30,209)"/><stop offset="0.35" stop-color="rgb(22,50,212)"/><stop offset="0.5" stop-color="rgb(26,102,221)"/><stop offset="0.62" stop-color="rgb(29,149,222)"/><stop offset="0.74" stop-color="rgb(31,194,210)"/><stop offset="0.86" stop-color="rgb(40,216,150)"/><stop offset="1" stop-color="rgb(50,189,101)"/></linearGradient><linearGradient id="w92" gradientUnits="userSpaceOnUse" x1="394.7" y1="447.6" x2="427.2" y2="484.7"><stop offset="0" stop-color="rgb(18,4,204)"/><stop offset="0.2" stop-color="rgb(20,30,209)"/><stop offset="0.35" stop-color="rgb(22,50,212)"/><stop offset="0.5" stop-color="rgb(26,102,221)"/><stop offset="0.62" stop-color="rgb(29,149,222)"/><stop offset="0.74" stop-color="rgb(31,194,210)"/><stop offset="0.86" stop-color="rgb(40,216,150)"/><stop offset="1" stop-color="rgb(48,185,104)"/></linearGradient><linearGradient id="w93" gradientUnits="userSpaceOnUse" x1="394.7" y1="447.6" x2="425.8" y2="485.0"><stop offset="0" stop-color="rgb(18,4,204)"/><stop offset="0.2" stop-color="rgb(20,30,209)"/><stop offset="0.35" stop-color="rgb(22,50,212)"/><stop offset="0.5" stop-color="rgb(26,102,221)"/><stop offset="0.62" stop-color="rgb(29,148,222)"/><stop offset="0.74" stop-color="rgb(31,193,210)"/><stop offset="0.86" stop-color="rgb(40,216,150)"/><stop offset="1" stop-color="rgb(46,180,108)"/></linearGradient><linearGradient id="w94" gradientUnits="userSpaceOnUse" x1="394.7" y1="447.6" x2="424.4" y2="485.3"><stop offset="0" stop-color="rgb(18,4,204)"/><stop offset="0.2" stop-color="rgb(20,30,208)"/><stop offset="0.35" stop-color="rgb(22,49,212)"/><stop offset="0.5" stop-color="rgb(26,100,220)"/><stop offset="0.62" stop-color="rgb(29,146,221)"/><stop offset="0.74" stop-color="rgb(31,191,208)"/><stop offset="0.86" stop-color="rgb(40,214,150)"/><stop offset="1" stop-color="rgb(44,175,112)"/></linearGradient><linearGradient id="w95" gradientUnits="userSpaceOnUse" x1="394.7" y1="447.6" x2="423.1" y2="485.6"><stop offset="0" stop-color="rgb(18,4,204)"/><stop offset="0.2" stop-color="rgb(20,29,208)"/><stop offset="0.35" stop-color="rgb(22,48,212)"/><stop offset="0.5" stop-color="rgb(26,98,220)"/><stop offset="0.62" stop-color="rgb(29,144,220)"/><stop offset="0.74" stop-color="rgb(31,188,207)"/><stop offset="0.86" stop-color="rgb(40,211,149)"/><stop offset="1" stop-color="rgb(42,170,116)"/></linearGradient><linearGradient id="w96" gradientUnits="userSpaceOnUse" x1="394.7" y1="447.6" x2="421.7" y2="485.8"><stop offset="0" stop-color="rgb(18,4,204)"/><stop offset="0.2" stop-color="rgb(20,28,208)"/><stop offset="0.35" stop-color="rgb(22,46,211)"/><stop offset="0.5" stop-color="rgb(26,95,219)"/><stop offset="0.62" stop-color="rgb(28,141,219)"/><stop offset="0.74" stop-color="rgb(31,185,206)"/><stop offset="0.86" stop-color="rgb(40,209,149)"/><stop offset="1" stop-color="rgb(40,166,119)"/></linearGradient><linearGradient id="w97" gradientUnits="userSpaceOnUse" x1="394.7" y1="447.6" x2="420.4" y2="486.0"><stop offset="0" stop-color="rgb(18,4,204)"/><stop offset="0.2" stop-color="rgb(20,28,208)"/><stop offset="0.35" stop-color="rgb(22,45,211)"/><stop offset="0.5" stop-color="rgb(26,93,219)"/><stop offset="0.62" stop-color="rgb(28,138,218)"/><stop offset="0.74" stop-color="rgb(31,182,205)"/><stop offset="0.86" stop-color="rgb(39,206,149)"/><stop offset="1" stop-color="rgb(38,161,123)"/></linearGradient><linearGradient id="w98" gradientUnits="userSpaceOnUse" x1="394.7" y1="447.6" x2="419.1" y2="486.3"><stop offset="0" stop-color="rgb(18,4,204)"/><stop offset="0.2" stop-color="rgb(20,27,208)"/><stop offset="0.35" stop-color="rgb(21,44,211)"/><stop offset="0.5" stop-color="rgb(25,90,218)"/><stop offset="0.62" stop-color="rgb(28,135,217)"/><stop offset="0.74" stop-color="rgb(31,179,204)"/><stop offset="0.86" stop-color="rgb(39,203,150)"/><stop offset="1" stop-color="rgb(37,156,127)"/></linearGradient><linearGradient id="w99" gradientUnits="userSpaceOnUse" x1="394.7" y1="447.6" x2="417.8" y2="486.5"><stop offset="0" stop-color="rgb(18,4,204)"/><stop offset="0.2" stop-color="rgb(20,26,208)"/><stop offset="0.35" stop-color="rgb(21,43,211)"/><stop offset="0.5" stop-color="rgb(25,88,218)"/><stop offset="0.62" stop-color="rgb(28,132,217)"/><stop offset="0.74" stop-color="rgb(31,176,203)"/><stop offset="0.86" stop-color="rgb(38,200,150)"/><stop offset="1" stop-color="rgb(35,152,131)"/></linearGradient><linearGradient id="w100" gradientUnits="userSpaceOnUse" x1="394.7" y1="447.6" x2="416.6" y2="486.7"><stop offset="0" stop-color="rgb(18,4,204)"/><stop offset="0.2" stop-color="rgb(20,26,208)"/><stop offset="0.35" stop-color="rgb(21,42,211)"/><stop offset="0.5" stop-color="rgb(25,85,218)"/><stop offset="0.62" stop-color="rgb(28,129,216)"/><stop offset="0.74" stop-color="rgb(30,172,203)"/><stop offset="0.86" stop-color="rgb(38,197,151)"/><stop offset="1" stop-color="rgb(33,147,134)"/></linearGradient><linearGradient id="w101" gradientUnits="userSpaceOnUse" x1="394.7" y1="447.6" x2="415.3" y2="486.8"><stop offset="0" stop-color="rgb(18,4,204)"/><stop offset="0.2" stop-color="rgb(20,25,208)"/><stop offset="0.35" stop-color="rgb(21,41,210)"/><stop offset="0.5" stop-color="rgb(25,83,217)"/><stop offset="0.62" stop-color="rgb(27,126,215)"/><stop offset="0.74" stop-color="rgb(30,169,202)"/><stop offset="0.86" stop-color="rgb(37,193,151)"/><stop offset="1" stop-color="rgb(31,142,138)"/></linearGradient><linearGradient id="w102" gradientUnits="userSpaceOnUse" x1="394.7" y1="447.6" x2="414.1" y2="487.0"><stop offset="0" stop-color="rgb(18,4,204)"/><stop offset="0.2" stop-color="rgb(20,24,208)"/><stop offset="0.35" stop-color="rgb(21,39,210)"/><stop offset="0.5" stop-color="rgb(25,80,217)"/><stop offset="0.62" stop-color="rgb(27,123,215)"/><stop offset="0.74" stop-color="rgb(30,165,202)"/><stop offset="0.86" stop-color="rgb(37,190,152)"/><stop offset="1" stop-color="rgb(30,139,141)"/></linearGradient><linearGradient id="w103" gradientUnits="userSpaceOnUse" x1="394.7" y1="447.6" x2="412.9" y2="487.1"><stop offset="0" stop-color="rgb(18,4,204)"/><stop offset="0.2" stop-color="rgb(20,24,207)"/><stop offset="0.35" stop-color="rgb(21,38,210)"/><stop offset="0.5" stop-color="rgb(24,77,217)"/><stop offset="0.62" stop-color="rgb(27,120,214)"/><stop offset="0.74" stop-color="rgb(29,161,201)"/><stop offset="0.86" stop-color="rgb(36,186,153)"/><stop offset="1" stop-color="rgb(29,136,142)"/></linearGradient><linearGradient id="w104" gradientUnits="userSpaceOnUse" x1="394.7" y1="447.6" x2="411.7" y2="487.2"><stop offset="0" stop-color="rgb(18,4,204)"/><stop offset="0.2" stop-color="rgb(20,23,207)"/><stop offset="0.35" stop-color="rgb(21,37,210)"/><stop offset="0.5" stop-color="rgb(24,75,216)"/><stop offset="0.62" stop-color="rgb(26,116,213)"/><stop offset="0.74" stop-color="rgb(29,158,200)"/><stop offset="0.86" stop-color="rgb(36,183,153)"/><stop offset="1" stop-color="rgb(29,133,144)"/></linearGradient><linearGradient id="w105" gradientUnits="userSpaceOnUse" x1="394.7" y1="447.6" x2="410.6" y2="487.4"><stop offset="0" stop-color="rgb(18,4,204)"/><stop offset="0.2" stop-color="rgb(20,22,207)"/><stop offset="0.35" stop-color="rgb(21,36,210)"/><stop offset="0.5" stop-color="rgb(24,73,216)"/><stop offset="0.62" stop-color="rgb(26,113,213)"/><stop offset="0.74" stop-color="rgb(29,154,200)"/><stop offset="0.86" stop-color="rgb(35,179,154)"/><stop offset="1" stop-color="rgb(28,130,146)"/></linearGradient><linearGradient id="w106" gradientUnits="userSpaceOnUse" x1="394.7" y1="447.6" x2="409.4" y2="487.5"><stop offset="0" stop-color="rgb(18,4,204)"/><stop offset="0.2" stop-color="rgb(20,22,207)"/><stop offset="0.35" stop-color="rgb(21,35,209)"/><stop offset="0.5" stop-color="rgb(24,70,215)"/><stop offset="0.62" stop-color="rgb(26,110,212)"/><stop offset="0.74" stop-color="rgb(28,150,199)"/><stop offset="0.86" stop-color="rgb(35,175,155)"/><stop offset="1" stop-color="rgb(28,128,148)"/></linearGradient><linearGradient id="w107" gradientUnits="userSpaceOnUse" x1="394.7" y1="447.6" x2="408.3" y2="487.6"><stop offset="0" stop-color="rgb(18,4,204)"/><stop offset="0.2" stop-color="rgb(19,21,207)"/><stop offset="0.35" stop-color="rgb(21,34,209)"/><stop offset="0.5" stop-color="rgb(23,68,215)"/><stop offset="0.62" stop-color="rgb(26,106,212)"/><stop offset="0.74" stop-color="rgb(28,146,199)"/><stop offset="0.86" stop-color="rgb(34,171,155)"/><stop offset="1" stop-color="rgb(27,125,149)"/></linearGradient><linearGradient id="w108" gradientUnits="userSpaceOnUse" x1="394.7" y1="447.6" x2="407.1" y2="487.7"><stop offset="0" stop-color="rgb(18,4,204)"/><stop offset="0.2" stop-color="rgb(19,20,207)"/><stop offset="0.35" stop-color="rgb(20,33,209)"/><stop offset="0.5" stop-color="rgb(23,65,215)"/><stop offset="0.62" stop-color="rgb(25,103,211)"/><stop offset="0.74" stop-color="rgb(28,142,199)"/><stop offset="0.86" stop-color="rgb(34,167,156)"/><stop offset="1" stop-color="rgb(26,122,151)"/></linearGradient><linearGradient id="w109" gradientUnits="userSpaceOnUse" x1="394.7" y1="447.6" x2="406.0" y2="487.8"><stop offset="0" stop-color="rgb(18,4,204)"/><stop offset="0.2" stop-color="rgb(19,20,207)"/><stop offset="0.35" stop-color="rgb(20,31,209)"/><stop offset="0.5" stop-color="rgb(23,63,214)"/><stop offset="0.62" stop-color="rgb(25,99,211)"/><stop offset="0.74" stop-color="rgb(27,138,198)"/><stop offset="0.86" stop-color="rgb(33,163,157)"/><stop offset="1" stop-color="rgb(26,119,152)"/></linearGradient><linearGradient id="w110" gradientUnits="userSpaceOnUse" x1="394.7" y1="447.6" x2="404.9" y2="487.8"><stop offset="0" stop-color="rgb(18,4,204)"/><stop offset="0.2" stop-color="rgb(19,19,207)"/><stop offset="0.35" stop-color="rgb(20,30,209)"/><stop offset="0.5" stop-color="rgb(23,60,214)"/><stop offset="0.62" stop-color="rgb(25,96,210)"/><stop offset="0.74" stop-color="rgb(27,134,198)"/><stop offset="0.86" stop-color="rgb(33,159,158)"/><stop offset="1" stop-color="rgb(25,116,154)"/></linearGradient><linearGradient id="w111" gradientUnits="userSpaceOnUse" x1="394.7" y1="447.6" x2="403.8" y2="487.9"><stop offset="0" stop-color="rgb(18,4,204)"/><stop offset="0.2" stop-color="rgb(19,18,206)"/><stop offset="0.35" stop-color="rgb(20,29,208)"/><stop offset="0.5" stop-color="rgb(23,58,213)"/><stop offset="0.62" stop-color="rgb(24,92,210)"/><stop offset="0.74" stop-color="rgb(27,130,198)"/><stop offset="0.86" stop-color="rgb(32,155,159)"/><stop offset="1" stop-color="rgb(25,114,156)"/></linearGradient><linearGradient id="w112" gradientUnits="userSpaceOnUse" x1="394.7" y1="447.6" x2="402.7" y2="488.0"><stop offset="0" stop-color="rgb(18,4,204)"/><stop offset="0.2" stop-color="rgb(19,18,206)"/><stop offset="0.35" stop-color="rgb(20,28,208)"/><stop offset="0.5" stop-color="rgb(22,55,213)"/><stop offset="0.62" stop-color="rgb(24,89,209)"/><stop offset="0.74" stop-color="rgb(26,125,197)"/><stop offset="0.86" stop-color="rgb(32,150,160)"/><stop offset="1" stop-color="rgb(24,111,158)"/></linearGradient><linearGradient id="w113" gradientUnits="userSpaceOnUse" x1="394.7" y1="447.6" x2="401.7" y2="488.0"><stop offset="0" stop-color="rgb(18,4,204)"/><stop offset="0.2" stop-color="rgb(19,17,206)"/><stop offset="0.35" stop-color="rgb(20,27,208)"/><stop offset="0.5" stop-color="rgb(22,53,212)"/><stop offset="0.62" stop-color="rgb(24,85,209)"/><stop offset="0.74" stop-color="rgb(26,121,197)"/><stop offset="0.86" stop-color="rgb(31,146,161)"/><stop offset="1" stop-color="rgb(24,108,159)"/></linearGradient><linearGradient id="w114" gradientUnits="userSpaceOnUse" x1="394.7" y1="447.6" x2="400.6" y2="488.1"><stop offset="0" stop-color="rgb(18,4,204)"/><stop offset="0.2" stop-color="rgb(19,16,206)"/><stop offset="0.35" stop-color="rgb(20,26,208)"/><stop offset="0.5" stop-color="rgb(22,50,212)"/><stop offset="0.62" stop-color="rgb(24,82,209)"/><stop offset="0.74" stop-color="rgb(25,117,197)"/><stop offset="0.86" stop-color="rgb(30,141,163)"/><stop offset="1" stop-color="rgb(23,105,161)"/></linearGradient><linearGradient id="w115" gradientUnits="userSpaceOnUse" x1="394.7" y1="447.6" x2="399.5" y2="488.1"><stop offset="0" stop-color="rgb(18,4,204)"/><stop offset="0.2" stop-color="rgb(19,16,206)"/><stop offset="0.35" stop-color="rgb(20,25,208)"/><stop offset="0.5" stop-color="rgb(22,48,212)"/><stop offset="0.62" stop-color="rgb(23,78,208)"/><stop offset="0.74" stop-color="rgb(25,112,197)"/><stop offset="0.86" stop-color="rgb(30,137,164)"/><stop offset="1" stop-color="rgb(22,102,162)"/></linearGradient><linearGradient id="w116" gradientUnits="userSpaceOnUse" x1="394.7" y1="447.6" x2="398.4" y2="488.1"><stop offset="0" stop-color="rgb(18,4,204)"/><stop offset="0.2" stop-color="rgb(19,15,206)"/><stop offset="0.35" stop-color="rgb(20,23,207)"/><stop offset="0.5" stop-color="rgb(22,45,211)"/><stop offset="0.62" stop-color="rgb(23,75,208)"/><stop offset="0.74" stop-color="rgb(25,108,197)"/><stop offset="0.86" stop-color="rgb(29,132,165)"/><stop offset="1" stop-color="rgb(22,100,164)"/></linearGradient><linearGradient id="w117" gradientUnits="userSpaceOnUse" x1="394.7" y1="447.6" x2="397.4" y2="488.1"><stop offset="0" stop-color="rgb(18,4,204)"/><stop offset="0.2" stop-color="rgb(19,14,206)"/><stop offset="0.35" stop-color="rgb(20,22,207)"/><stop offset="0.5" stop-color="rgb(21,43,211)"/><stop offset="0.62" stop-color="rgb(23,71,207)"/><stop offset="0.74" stop-color="rgb(24,103,196)"/><stop offset="0.86" stop-color="rgb(28,127,167)"/><stop offset="1" stop-color="rgb(21,97,166)"/></linearGradient><linearGradient id="w118" gradientUnits="userSpaceOnUse" x1="394.7" y1="447.6" x2="396.3" y2="488.2"><stop offset="0" stop-color="rgb(18,4,204)"/><stop offset="0.2" stop-color="rgb(19,14,206)"/><stop offset="0.35" stop-color="rgb(19,21,207)"/><stop offset="0.5" stop-color="rgb(21,41,210)"/><stop offset="0.62" stop-color="rgb(22,67,207)"/><stop offset="0.74" stop-color="rgb(24,99,196)"/><stop offset="0.86" stop-color="rgb(27,122,168)"/><stop offset="1" stop-color="rgb(21,94,168)"/></linearGradient><linearGradient id="w119" gradientUnits="userSpaceOnUse" x1="394.7" y1="447.6" x2="395.2" y2="488.2"><stop offset="0" stop-color="rgb(18,4,204)"/><stop offset="0.2" stop-color="rgb(19,13,206)"/><stop offset="0.35" stop-color="rgb(19,20,207)"/><stop offset="0.5" stop-color="rgb(21,38,210)"/><stop offset="0.62" stop-color="rgb(22,64,206)"/><stop offset="0.74" stop-color="rgb(23,94,196)"/><stop offset="0.86" stop-color="rgb(27,117,170)"/><stop offset="1" stop-color="rgb(20,91,169)"/></linearGradient><linearGradient id="w120" gradientUnits="userSpaceOnUse" x1="394.7" y1="447.6" x2="394.2" y2="488.2"><stop offset="0" stop-color="rgb(18,4,204)"/><stop offset="0.2" stop-color="rgb(19,12,205)"/><stop offset="0.35" stop-color="rgb(19,19,207)"/><stop offset="0.5" stop-color="rgb(21,36,209)"/><stop offset="0.62" stop-color="rgb(22,60,206)"/><stop offset="0.74" stop-color="rgb(23,89,196)"/><stop offset="0.86" stop-color="rgb(27,111,171)"/><stop offset="1" stop-color="rgb(21,87,170)"/></linearGradient><linearGradient id="w121" gradientUnits="userSpaceOnUse" x1="394.7" y1="447.6" x2="393.1" y2="488.2"><stop offset="0" stop-color="rgb(18,4,204)"/><stop offset="0.2" stop-color="rgb(19,12,205)"/><stop offset="0.35" stop-color="rgb(19,18,206)"/><stop offset="0.5" stop-color="rgb(21,33,209)"/><stop offset="0.62" stop-color="rgb(22,56,205)"/><stop offset="0.74" stop-color="rgb(24,84,196)"/><stop offset="0.86" stop-color="rgb(27,105,172)"/><stop offset="1" stop-color="rgb(24,82,170)"/></linearGradient><linearGradient id="w122" gradientUnits="userSpaceOnUse" x1="394.7" y1="447.6" x2="392.0" y2="488.2"><stop offset="0" stop-color="rgb(18,4,204)"/><stop offset="0.2" stop-color="rgb(19,11,205)"/><stop offset="0.35" stop-color="rgb(19,16,206)"/><stop offset="0.5" stop-color="rgb(20,31,209)"/><stop offset="0.62" stop-color="rgb(22,52,205)"/><stop offset="0.74" stop-color="rgb(24,79,195)"/><stop offset="0.86" stop-color="rgb(28,99,173)"/><stop offset="1" stop-color="rgb(27,77,171)"/></linearGradient><linearGradient id="w123" gradientUnits="userSpaceOnUse" x1="394.7" y1="447.6" x2="391.0" y2="488.1"><stop offset="0" stop-color="rgb(18,4,204)"/><stop offset="0.2" stop-color="rgb(19,10,205)"/><stop offset="0.35" stop-color="rgb(19,15,206)"/><stop offset="0.5" stop-color="rgb(20,28,208)"/><stop offset="0.62" stop-color="rgb(22,49,204)"/><stop offset="0.74" stop-color="rgb(25,73,195)"/><stop offset="0.86" stop-color="rgb(29,92,173)"/><stop offset="1" stop-color="rgb(29,72,171)"/></linearGradient><linearGradient id="w124" gradientUnits="userSpaceOnUse" x1="394.7" y1="447.6" x2="389.9" y2="488.1"><stop offset="0" stop-color="rgb(18,4,204)"/><stop offset="0.2" stop-color="rgb(19,10,205)"/><stop offset="0.35" stop-color="rgb(19,14,206)"/><stop offset="0.5" stop-color="rgb(20,26,208)"/><stop offset="0.62" stop-color="rgb(22,45,204)"/><stop offset="0.74" stop-color="rgb(26,67,194)"/><stop offset="0.86" stop-color="rgb(30,85,174)"/><stop offset="1" stop-color="rgb(32,67,171)"/></linearGradient><linearGradient id="w125" gradientUnits="userSpaceOnUse" x1="394.7" y1="447.6" x2="388.8" y2="488.1"><stop offset="0" stop-color="rgb(18,4,204)"/><stop offset="0.2" stop-color="rgb(18,9,205)"/><stop offset="0.35" stop-color="rgb(19,13,206)"/><stop offset="0.5" stop-color="rgb(20,23,207)"/><stop offset="0.62" stop-color="rgb(22,41,203)"/><stop offset="0.74" stop-color="rgb(26,62,194)"/><stop offset="0.86" stop-color="rgb(32,78,175)"/><stop offset="1" stop-color="rgb(34,62,172)"/></linearGradient><linearGradient id="w126" gradientUnits="userSpaceOnUse" x1="394.7" y1="447.6" x2="387.7" y2="488.1"><stop offset="0" stop-color="rgb(18,4,204)"/><stop offset="0.2" stop-color="rgb(18,8,205)"/><stop offset="0.35" stop-color="rgb(19,12,205)"/><stop offset="0.5" stop-color="rgb(19,21,207)"/><stop offset="0.62" stop-color="rgb(23,37,202)"/><stop offset="0.74" stop-color="rgb(27,56,193)"/><stop offset="0.86" stop-color="rgb(33,71,176)"/><stop offset="1" stop-color="rgb(37,57,172)"/></linearGradient><linearGradient id="w127" gradientUnits="userSpaceOnUse" x1="394.7" y1="447.6" x2="386.7" y2="488.1"><stop offset="0" stop-color="rgb(18,4,204)"/><stop offset="0.2" stop-color="rgb(18,8,205)"/><stop offset="0.35" stop-color="rgb(19,11,205)"/><stop offset="0.5" stop-color="rgb(19,18,206)"/><stop offset="0.62" stop-color="rgb(23,33,202)"/><stop offset="0.74" stop-color="rgb(28,50,193)"/><stop offset="0.86" stop-color="rgb(34,64,177)"/><stop offset="1" stop-color="rgb(40,52,172)"/></linearGradient><linearGradient id="w128" gradientUnits="userSpaceOnUse" x1="394.7" y1="447.6" x2="385.6" y2="488.0"><stop offset="0" stop-color="rgb(18,4,204)"/><stop offset="0.2" stop-color="rgb(18,7,205)"/><stop offset="0.35" stop-color="rgb(18,10,205)"/><stop offset="0.5" stop-color="rgb(19,16,206)"/><stop offset="0.62" stop-color="rgb(23,29,201)"/><stop offset="0.74" stop-color="rgb(29,44,192)"/><stop offset="0.86" stop-color="rgb(36,56,178)"/><stop offset="1" stop-color="rgb(42,47,172)"/></linearGradient><linearGradient id="w129" gradientUnits="userSpaceOnUse" x1="394.7" y1="447.6" x2="384.5" y2="487.9"><stop offset="0" stop-color="rgb(18,4,204)"/><stop offset="0.2" stop-color="rgb(18,7,204)"/><stop offset="0.35" stop-color="rgb(18,8,205)"/><stop offset="0.5" stop-color="rgb(19,13,206)"/><stop offset="0.62" stop-color="rgb(24,24,200)"/><stop offset="0.74" stop-color="rgb(30,38,192)"/><stop offset="0.86" stop-color="rgb(37,48,179)"/><stop offset="1" stop-color="rgb(45,42,173)"/></linearGradient><linearGradient id="w130" gradientUnits="userSpaceOnUse" x1="394.7" y1="447.6" x2="383.4" y2="487.8"><stop offset="0" stop-color="rgb(18,4,204)"/><stop offset="0.2" stop-color="rgb(18,6,204)"/><stop offset="0.35" stop-color="rgb(18,7,205)"/><stop offset="0.5" stop-color="rgb(19,11,205)"/><stop offset="0.62" stop-color="rgb(24,20,200)"/><stop offset="0.74" stop-color="rgb(31,31,191)"/><stop offset="0.86" stop-color="rgb(39,41,180)"/><stop offset="1" stop-color="rgb(48,37,173)"/></linearGradient><linearGradient id="w131" gradientUnits="userSpaceOnUse" x1="394.7" y1="447.6" x2="372.9" y2="518.0"><stop offset="0" stop-color="rgb(18,4,204)"/><stop offset="0.2" stop-color="rgb(18,5,204)"/><stop offset="0.35" stop-color="rgb(32,21,190)"/><stop offset="0.5" stop-color="rgb(73,67,149)"/><stop offset="0.62" stop-color="rgb(105,103,116)"/><stop offset="0.74" stop-color="rgb(138,140,82)"/><stop offset="0.86" stop-color="rgb(170,176,46)"/><stop offset="1" stop-color="rgb(216,216,0)"/></linearGradient><linearGradient id="w132" gradientUnits="userSpaceOnUse" x1="394.7" y1="447.6" x2="370.0" y2="520.3"><stop offset="0" stop-color="rgb(18,4,204)"/><stop offset="0.2" stop-color="rgb(18,5,204)"/><stop offset="0.35" stop-color="rgb(35,23,186)"/><stop offset="0.5" stop-color="rgb(76,68,145)"/><stop offset="0.62" stop-color="rgb(109,104,111)"/><stop offset="0.74" stop-color="rgb(142,140,77)"/><stop offset="0.86" stop-color="rgb(174,175,42)"/><stop offset="1" stop-color="rgb(216,216,0)"/></linearGradient><linearGradient id="w133" gradientUnits="userSpaceOnUse" x1="394.7" y1="447.6" x2="366.9" y2="522.9"><stop offset="0" stop-color="rgb(18,4,204)"/><stop offset="0.274" stop-color="rgb(18,4,204)"/><stop offset="1" stop-color="rgb(216,216,0)"/></linearGradient><linearGradient id="w134" gradientUnits="userSpaceOnUse" x1="394.7" y1="447.6" x2="363.5" y2="525.7"><stop offset="0" stop-color="rgb(18,4,204)"/><stop offset="0.262" stop-color="rgb(18,4,204)"/><stop offset="1" stop-color="rgb(216,216,0)"/></linearGradient><linearGradient id="w135" gradientUnits="userSpaceOnUse" x1="394.7" y1="447.6" x2="360.1" y2="528.2"><stop offset="0" stop-color="rgb(18,4,204)"/><stop offset="0.251" stop-color="rgb(18,4,204)"/><stop offset="1" stop-color="rgb(216,216,0)"/></linearGradient><linearGradient id="w136" gradientUnits="userSpaceOnUse" x1="394.7" y1="447.6" x2="356.5" y2="530.4"><stop offset="0" stop-color="rgb(18,4,204)"/><stop offset="0.241" stop-color="rgb(18,4,204)"/><stop offset="1" stop-color="rgb(216,216,0)"/></linearGradient><linearGradient id="w137" gradientUnits="userSpaceOnUse" x1="394.7" y1="447.6" x2="352.7" y2="532.8"><stop offset="0" stop-color="rgb(18,4,204)"/><stop offset="0.231" stop-color="rgb(18,4,204)"/><stop offset="1" stop-color="rgb(216,216,0)"/></linearGradient><linearGradient id="w138" gradientUnits="userSpaceOnUse" x1="394.7" y1="447.6" x2="348.5" y2="535.5"><stop offset="0" stop-color="rgb(18,4,204)"/><stop offset="0.222" stop-color="rgb(18,4,204)"/><stop offset="1" stop-color="rgb(216,216,0)"/></linearGradient><linearGradient id="w139" gradientUnits="userSpaceOnUse" x1="394.7" y1="447.6" x2="344.3" y2="537.5"><stop offset="0" stop-color="rgb(18,4,204)"/><stop offset="0.213" stop-color="rgb(18,4,204)"/><stop offset="1" stop-color="rgb(216,216,0)"/></linearGradient><linearGradient id="w140" gradientUnits="userSpaceOnUse" x1="394.7" y1="447.6" x2="340.5" y2="538.7"><stop offset="0" stop-color="rgb(18,4,204)"/><stop offset="0.207" stop-color="rgb(18,4,204)"/><stop offset="1" stop-color="rgb(216,216,0)"/></linearGradient><linearGradient id="w141" gradientUnits="userSpaceOnUse" x1="394.7" y1="447.6" x2="336.4" y2="540.0"><stop offset="0" stop-color="rgb(18,4,204)"/><stop offset="0.201" stop-color="rgb(18,4,204)"/><stop offset="1" stop-color="rgb(216,216,0)"/></linearGradient><linearGradient id="w142" gradientUnits="userSpaceOnUse" x1="394.7" y1="447.6" x2="332.1" y2="541.4"><stop offset="0" stop-color="rgb(18,4,204)"/><stop offset="0.195" stop-color="rgb(18,4,204)"/><stop offset="1" stop-color="rgb(216,216,0)"/></linearGradient><linearGradient id="w143" gradientUnits="userSpaceOnUse" x1="394.7" y1="447.6" x2="328.3" y2="541.6"><stop offset="0" stop-color="rgb(18,4,204)"/><stop offset="0.191" stop-color="rgb(18,4,204)"/><stop offset="1" stop-color="rgb(216,216,0)"/></linearGradient><linearGradient id="w144" gradientUnits="userSpaceOnUse" x1="394.7" y1="447.6" x2="325.1" y2="540.8"><stop offset="0" stop-color="rgb(18,4,204)"/><stop offset="0.189" stop-color="rgb(18,4,204)"/><stop offset="1" stop-color="rgb(216,216,0)"/></linearGradient><linearGradient id="w145" gradientUnits="userSpaceOnUse" x1="394.7" y1="447.6" x2="321.9" y2="540.0"><stop offset="0" stop-color="rgb(18,4,204)"/><stop offset="0.187" stop-color="rgb(18,4,204)"/><stop offset="1" stop-color="rgb(216,216,0)"/></linearGradient><linearGradient id="w146" gradientUnits="userSpaceOnUse" x1="394.7" y1="447.6" x2="318.6" y2="539.1"><stop offset="0" stop-color="rgb(18,4,204)"/><stop offset="0.185" stop-color="rgb(18,4,204)"/><stop offset="1" stop-color="rgb(216,216,0)"/></linearGradient><linearGradient id="w147" gradientUnits="userSpaceOnUse" x1="394.7" y1="447.6" x2="316.1" y2="537.3"><stop offset="0" stop-color="rgb(18,4,204)"/><stop offset="0.184" stop-color="rgb(18,4,204)"/><stop offset="1" stop-color="rgb(216,216,0)"/></linearGradient><linearGradient id="w148" gradientUnits="userSpaceOnUse" x1="394.7" y1="447.6" x2="313.8" y2="535.2"><stop offset="0" stop-color="rgb(18,4,204)"/><stop offset="0.185" stop-color="rgb(18,4,204)"/><stop offset="1" stop-color="rgb(216,216,0)"/></linearGradient><linearGradient id="w149" gradientUnits="userSpaceOnUse" x1="394.7" y1="447.6" x2="311.5" y2="533.1"><stop offset="0" stop-color="rgb(18,4,204)"/><stop offset="0.184" stop-color="rgb(18,4,204)"/><stop offset="1" stop-color="rgb(216,216,0)"/></linearGradient><linearGradient id="w150" gradientUnits="userSpaceOnUse" x1="394.7" y1="447.6" x2="309.1" y2="530.9"><stop offset="0" stop-color="rgb(18,4,204)"/><stop offset="0.184" stop-color="rgb(18,4,204)"/><stop offset="1" stop-color="rgb(216,216,0)"/></linearGradient><linearGradient id="w151" gradientUnits="userSpaceOnUse" x1="394.7" y1="447.6" x2="306.9" y2="528.8"><stop offset="0" stop-color="rgb(18,4,204)"/><stop offset="0.184" stop-color="rgb(18,4,204)"/><stop offset="1" stop-color="rgb(216,216,0)"/></linearGradient><linearGradient id="w152" gradientUnits="userSpaceOnUse" x1="394.7" y1="447.6" x2="305.7" y2="525.6"><stop offset="0" stop-color="rgb(18,4,204)"/><stop offset="0.186" stop-color="rgb(18,4,204)"/><stop offset="1" stop-color="rgb(216,216,0)"/></linearGradient><linearGradient id="w153" gradientUnits="userSpaceOnUse" x1="394.7" y1="447.6" x2="304.6" y2="522.5"><stop offset="0" stop-color="rgb(18,4,204)"/><stop offset="0.188" stop-color="rgb(18,4,204)"/><stop offset="1" stop-color="rgb(216,216,0)"/></linearGradient><linearGradient id="w154" gradientUnits="userSpaceOnUse" x1="394.7" y1="447.6" x2="303.5" y2="519.5"><stop offset="0" stop-color="rgb(18,4,204)"/><stop offset="0.189" stop-color="rgb(18,4,204)"/><stop offset="1" stop-color="rgb(216,216,0)"/></linearGradient><linearGradient id="w155" gradientUnits="userSpaceOnUse" x1="394.7" y1="447.6" x2="302.4" y2="516.5"><stop offset="0" stop-color="rgb(18,4,204)"/><stop offset="0.191" stop-color="rgb(18,4,204)"/><stop offset="1" stop-color="rgb(216,216,0)"/></linearGradient><linearGradient id="w156" gradientUnits="userSpaceOnUse" x1="394.7" y1="447.6" x2="301.3" y2="513.6"><stop offset="0" stop-color="rgb(18,4,204)"/><stop offset="0.192" stop-color="rgb(18,4,204)"/><stop offset="1" stop-color="rgb(216,216,0)"/></linearGradient><linearGradient id="w157" gradientUnits="userSpaceOnUse" x1="394.7" y1="447.6" x2="300.3" y2="510.7"><stop offset="0" stop-color="rgb(18,4,204)"/><stop offset="0.194" stop-color="rgb(18,4,204)"/><stop offset="1" stop-color="rgb(216,216,0)"/></linearGradient><linearGradient id="w158" gradientUnits="userSpaceOnUse" x1="394.7" y1="447.6" x2="299.6" y2="507.6"><stop offset="0" stop-color="rgb(18,4,204)"/><stop offset="0.196" stop-color="rgb(18,4,204)"/><stop offset="1" stop-color="rgb(216,216,0)"/></linearGradient><linearGradient id="w159" gradientUnits="userSpaceOnUse" x1="394.7" y1="447.6" x2="299.2" y2="504.4"><stop offset="0" stop-color="rgb(18,4,204)"/><stop offset="0.198" stop-color="rgb(18,4,204)"/><stop offset="1" stop-color="rgb(216,216,0)"/></linearGradient><linearGradient id="w160" gradientUnits="userSpaceOnUse" x1="394.7" y1="447.6" x2="298.7" y2="501.4"><stop offset="0" stop-color="rgb(18,4,204)"/><stop offset="0.200" stop-color="rgb(18,4,204)"/><stop offset="1" stop-color="rgb(216,216,0)"/></linearGradient><linearGradient id="w161" gradientUnits="userSpaceOnUse" x1="394.7" y1="447.6" x2="298.3" y2="498.3"><stop offset="0" stop-color="rgb(18,4,204)"/><stop offset="0.202" stop-color="rgb(18,4,204)"/><stop offset="1" stop-color="rgb(216,216,0)"/></linearGradient><linearGradient id="w162" gradientUnits="userSpaceOnUse" x1="394.7" y1="447.6" x2="297.8" y2="495.4"><stop offset="0" stop-color="rgb(18,4,204)"/><stop offset="0.204" stop-color="rgb(18,4,204)"/><stop offset="1" stop-color="rgb(216,216,0)"/></linearGradient><linearGradient id="w163" gradientUnits="userSpaceOnUse" x1="394.7" y1="447.6" x2="297.4" y2="492.5"><stop offset="0" stop-color="rgb(18,4,204)"/><stop offset="0.205" stop-color="rgb(18,4,204)"/><stop offset="1" stop-color="rgb(216,216,0)"/></linearGradient><linearGradient id="w164" gradientUnits="userSpaceOnUse" x1="394.7" y1="447.6" x2="297.0" y2="489.6"><stop offset="0" stop-color="rgb(18,4,204)"/><stop offset="0.207" stop-color="rgb(18,4,204)"/><stop offset="1" stop-color="rgb(216,216,0)"/></linearGradient><linearGradient id="w165" gradientUnits="userSpaceOnUse" x1="394.7" y1="447.6" x2="297.2" y2="486.5"><stop offset="0" stop-color="rgb(18,4,204)"/><stop offset="0.210" stop-color="rgb(18,4,204)"/><stop offset="1" stop-color="rgb(216,216,0)"/></linearGradient><linearGradient id="w166" gradientUnits="userSpaceOnUse" x1="394.7" y1="447.6" x2="297.3" y2="483.5"><stop offset="0" stop-color="rgb(18,4,204)"/><stop offset="0.212" stop-color="rgb(18,4,204)"/><stop offset="1" stop-color="rgb(216,216,0)"/></linearGradient><linearGradient id="w167" gradientUnits="userSpaceOnUse" x1="394.7" y1="447.6" x2="297.5" y2="480.6"><stop offset="0" stop-color="rgb(18,4,204)"/><stop offset="0.214" stop-color="rgb(18,4,204)"/><stop offset="1" stop-color="rgb(216,216,0)"/></linearGradient><linearGradient id="w168" gradientUnits="userSpaceOnUse" x1="394.7" y1="447.6" x2="297.6" y2="477.8"><stop offset="0" stop-color="rgb(18,4,204)"/><stop offset="0.216" stop-color="rgb(18,4,204)"/><stop offset="1" stop-color="rgb(216,216,0)"/></linearGradient><linearGradient id="w169" gradientUnits="userSpaceOnUse" x1="394.7" y1="447.6" x2="297.7" y2="474.9"><stop offset="0" stop-color="rgb(18,4,204)"/><stop offset="0.218" stop-color="rgb(18,4,204)"/><stop offset="1" stop-color="rgb(216,216,0)"/></linearGradient><linearGradient id="w170" gradientUnits="userSpaceOnUse" x1="394.7" y1="447.6" x2="297.4" y2="472.3"><stop offset="0" stop-color="rgb(18,4,204)"/><stop offset="0.219" stop-color="rgb(18,4,204)"/><stop offset="1" stop-color="rgb(216,216,0)"/></linearGradient><linearGradient id="w171" gradientUnits="userSpaceOnUse" x1="394.7" y1="447.6" x2="296.5" y2="469.8"><stop offset="0" stop-color="rgb(18,4,204)"/><stop offset="0.219" stop-color="rgb(18,4,204)"/><stop offset="1" stop-color="rgb(216,216,0)"/></linearGradient><linearGradient id="w172" gradientUnits="userSpaceOnUse" x1="394.7" y1="447.6" x2="295.7" y2="467.3"><stop offset="0" stop-color="rgb(18,4,204)"/><stop offset="0.218" stop-color="rgb(18,4,204)"/><stop offset="1" stop-color="rgb(216,216,0)"/></linearGradient><linearGradient id="w173" gradientUnits="userSpaceOnUse" x1="394.7" y1="447.6" x2="294.8" y2="464.8"><stop offset="0" stop-color="rgb(18,4,204)"/><stop offset="0.217" stop-color="rgb(18,4,204)"/><stop offset="1" stop-color="rgb(216,216,0)"/></linearGradient><linearGradient id="w174" gradientUnits="userSpaceOnUse" x1="394.7" y1="447.6" x2="294.0" y2="462.2"><stop offset="0" stop-color="rgb(18,4,204)"/><stop offset="0.216" stop-color="rgb(18,4,204)"/><stop offset="1" stop-color="rgb(216,216,0)"/></linearGradient><linearGradient id="w175" gradientUnits="userSpaceOnUse" x1="394.7" y1="447.6" x2="293.4" y2="459.6"><stop offset="0" stop-color="rgb(18,4,204)"/><stop offset="0.216" stop-color="rgb(18,4,204)"/><stop offset="1" stop-color="rgb(216,216,0)"/></linearGradient><linearGradient id="w176" gradientUnits="userSpaceOnUse" x1="394.7" y1="447.6" x2="292.8" y2="457.0"><stop offset="0" stop-color="rgb(18,4,204)"/><stop offset="0.215" stop-color="rgb(18,4,204)"/><stop offset="1" stop-color="rgb(216,216,0)"/></linearGradient><linearGradient id="w177" gradientUnits="userSpaceOnUse" x1="394.7" y1="447.6" x2="292.2" y2="454.3"><stop offset="0" stop-color="rgb(18,4,204)"/><stop offset="0.214" stop-color="rgb(18,4,204)"/><stop offset="1" stop-color="rgb(216,216,0)"/></linearGradient><linearGradient id="w178" gradientUnits="userSpaceOnUse" x1="394.7" y1="447.6" x2="291.6" y2="451.7"><stop offset="0" stop-color="rgb(18,4,204)"/><stop offset="0.213" stop-color="rgb(18,4,204)"/><stop offset="1" stop-color="rgb(216,216,0)"/></linearGradient><linearGradient id="w179" gradientUnits="userSpaceOnUse" x1="394.7" y1="447.6" x2="291.0" y2="449.0"><stop offset="0" stop-color="rgb(18,4,204)"/><stop offset="0.212" stop-color="rgb(18,4,204)"/><stop offset="1" stop-color="rgb(217,217,0)"/></linearGradient><linearGradient id="w180" gradientUnits="userSpaceOnUse" x1="394.7" y1="447.6" x2="290.4" y2="446.2"><stop offset="0" stop-color="rgb(18,4,204)"/><stop offset="0.211" stop-color="rgb(18,4,204)"/><stop offset="1" stop-color="rgb(217,217,0)"/></linearGradient><linearGradient id="w181" gradientUnits="userSpaceOnUse" x1="394.7" y1="447.6" x2="290.2" y2="443.5"><stop offset="0" stop-color="rgb(18,4,204)"/><stop offset="0.210" stop-color="rgb(18,4,204)"/><stop offset="1" stop-color="rgb(217,217,0)"/></linearGradient><linearGradient id="w182" gradientUnits="userSpaceOnUse" x1="394.7" y1="447.6" x2="290.0" y2="440.7"><stop offset="0" stop-color="rgb(18,4,204)"/><stop offset="0.210" stop-color="rgb(18,4,204)"/><stop offset="1" stop-color="rgb(217,217,0)"/></linearGradient><linearGradient id="w183" gradientUnits="userSpaceOnUse" x1="394.7" y1="447.6" x2="289.9" y2="438.0"><stop offset="0" stop-color="rgb(18,4,204)"/><stop offset="0.209" stop-color="rgb(18,4,204)"/><stop offset="1" stop-color="rgb(217,217,0)"/></linearGradient><linearGradient id="w184" gradientUnits="userSpaceOnUse" x1="394.7" y1="447.6" x2="289.8" y2="435.2"><stop offset="0" stop-color="rgb(18,4,204)"/><stop offset="0.208" stop-color="rgb(18,4,204)"/><stop offset="1" stop-color="rgb(217,217,0)"/></linearGradient><linearGradient id="w185" gradientUnits="userSpaceOnUse" x1="394.7" y1="447.6" x2="289.6" y2="432.4"><stop offset="0" stop-color="rgb(18,4,204)"/><stop offset="0.207" stop-color="rgb(18,4,204)"/><stop offset="1" stop-color="rgb(217,217,0)"/></linearGradient><linearGradient id="w186" gradientUnits="userSpaceOnUse" x1="394.7" y1="447.6" x2="289.5" y2="429.5"><stop offset="0" stop-color="rgb(18,4,204)"/><stop offset="0.206" stop-color="rgb(18,4,204)"/><stop offset="1" stop-color="rgb(218,218,0)"/></linearGradient><linearGradient id="w187" gradientUnits="userSpaceOnUse" x1="394.7" y1="447.6" x2="289.5" y2="426.7"><stop offset="0" stop-color="rgb(18,4,204)"/><stop offset="0.205" stop-color="rgb(18,4,204)"/><stop offset="1" stop-color="rgb(218,218,0)"/></linearGradient><linearGradient id="w188" gradientUnits="userSpaceOnUse" x1="394.7" y1="447.6" x2="289.8" y2="423.9"><stop offset="0" stop-color="rgb(18,4,204)"/><stop offset="0.205" stop-color="rgb(18,4,204)"/><stop offset="1" stop-color="rgb(218,218,0)"/></linearGradient><linearGradient id="w189" gradientUnits="userSpaceOnUse" x1="394.7" y1="447.6" x2="290.1" y2="421.0"><stop offset="0" stop-color="rgb(18,4,204)"/><stop offset="0.204" stop-color="rgb(18,4,204)"/><stop offset="1" stop-color="rgb(218,218,0)"/></linearGradient><linearGradient id="w190" gradientUnits="userSpaceOnUse" x1="394.7" y1="447.6" x2="290.5" y2="418.2"><stop offset="0" stop-color="rgb(18,4,204)"/><stop offset="0.203" stop-color="rgb(18,4,204)"/><stop offset="1" stop-color="rgb(219,217,0)"/></linearGradient><linearGradient id="w191" gradientUnits="userSpaceOnUse" x1="394.7" y1="447.6" x2="290.8" y2="415.3"><stop offset="0" stop-color="rgb(18,4,204)"/><stop offset="0.202" stop-color="rgb(18,4,204)"/><stop offset="1" stop-color="rgb(220,216,0)"/></linearGradient><linearGradient id="w192" gradientUnits="userSpaceOnUse" x1="394.7" y1="447.6" x2="291.1" y2="412.4"><stop offset="0" stop-color="rgb(18,4,204)"/><stop offset="0.201" stop-color="rgb(18,4,204)"/><stop offset="1" stop-color="rgb(221,215,0)"/></linearGradient><linearGradient id="w193" gradientUnits="userSpaceOnUse" x1="394.7" y1="447.6" x2="291.5" y2="409.5"><stop offset="0" stop-color="rgb(18,4,204)"/><stop offset="0.200" stop-color="rgb(18,4,204)"/><stop offset="1" stop-color="rgb(223,213,0)"/></linearGradient><linearGradient id="w194" gradientUnits="userSpaceOnUse" x1="394.7" y1="447.6" x2="291.8" y2="406.5"><stop offset="0" stop-color="rgb(18,4,204)"/><stop offset="0.198" stop-color="rgb(18,4,204)"/><stop offset="1" stop-color="rgb(224,212,0)"/></linearGradient><linearGradient id="w195" gradientUnits="userSpaceOnUse" x1="394.7" y1="447.6" x2="292.1" y2="403.5"><stop offset="0" stop-color="rgb(18,4,204)"/><stop offset="0.197" stop-color="rgb(18,4,204)"/><stop offset="1" stop-color="rgb(225,211,0)"/></linearGradient><linearGradient id="w196" gradientUnits="userSpaceOnUse" x1="394.7" y1="447.6" x2="292.4" y2="400.4"><stop offset="0" stop-color="rgb(18,4,204)"/><stop offset="0.195" stop-color="rgb(18,4,204)"/><stop offset="1" stop-color="rgb(227,209,0)"/></linearGradient><linearGradient id="w197" gradientUnits="userSpaceOnUse" x1="394.7" y1="447.6" x2="292.7" y2="397.3"><stop offset="0" stop-color="rgb(18,4,204)"/><stop offset="0.193" stop-color="rgb(18,4,204)"/><stop offset="1" stop-color="rgb(228,207,0)"/></linearGradient><linearGradient id="w198" gradientUnits="userSpaceOnUse" x1="394.7" y1="447.6" x2="293.0" y2="394.1"><stop offset="0" stop-color="rgb(18,4,204)"/><stop offset="0.191" stop-color="rgb(18,4,204)"/><stop offset="1" stop-color="rgb(229,200,0)"/></linearGradient><linearGradient id="w199" gradientUnits="userSpaceOnUse" x1="394.7" y1="447.6" x2="293.5" y2="390.9"><stop offset="0" stop-color="rgb(18,4,204)"/><stop offset="0.190" stop-color="rgb(18,4,204)"/><stop offset="1" stop-color="rgb(229,193,0)"/></linearGradient><linearGradient id="w200" gradientUnits="userSpaceOnUse" x1="394.7" y1="447.6" x2="293.9" y2="387.7"><stop offset="0" stop-color="rgb(18,4,204)"/><stop offset="0.188" stop-color="rgb(18,4,204)"/><stop offset="1" stop-color="rgb(230,186,0)"/></linearGradient><linearGradient id="w201" gradientUnits="userSpaceOnUse" x1="394.7" y1="447.6" x2="294.4" y2="384.3"><stop offset="0" stop-color="rgb(18,4,204)"/><stop offset="0.186" stop-color="rgb(18,4,204)"/><stop offset="1" stop-color="rgb(230,180,0)"/></linearGradient><linearGradient id="w202" gradientUnits="userSpaceOnUse" x1="394.7" y1="447.6" x2="295.0" y2="381.0"><stop offset="0" stop-color="rgb(18,4,204)"/><stop offset="0.183" stop-color="rgb(18,4,204)"/><stop offset="1" stop-color="rgb(231,172,0)"/></linearGradient><linearGradient id="w203" gradientUnits="userSpaceOnUse" x1="394.7" y1="447.6" x2="295.5" y2="377.5"><stop offset="0" stop-color="rgb(18,4,204)"/><stop offset="0.181" stop-color="rgb(18,4,204)"/><stop offset="1" stop-color="rgb(232,165,0)"/></linearGradient><linearGradient id="w204" gradientUnits="userSpaceOnUse" x1="394.7" y1="447.6" x2="296.1" y2="373.9"><stop offset="0" stop-color="rgb(18,4,204)"/><stop offset="0.179" stop-color="rgb(18,4,204)"/><stop offset="1" stop-color="rgb(232,157,0)"/></linearGradient><linearGradient id="w205" gradientUnits="userSpaceOnUse" x1="394.7" y1="447.6" x2="296.8" y2="370.4"><stop offset="0" stop-color="rgb(18,4,204)"/><stop offset="0.176" stop-color="rgb(18,4,204)"/><stop offset="1" stop-color="rgb(232,148,0)"/></linearGradient><linearGradient id="w206" gradientUnits="userSpaceOnUse" x1="394.7" y1="447.6" x2="297.5" y2="366.7"><stop offset="0" stop-color="rgb(18,4,204)"/><stop offset="0.174" stop-color="rgb(18,4,204)"/><stop offset="1" stop-color="rgb(232,139,0)"/></linearGradient><linearGradient id="w207" gradientUnits="userSpaceOnUse" x1="394.7" y1="447.6" x2="298.2" y2="363.0"><stop offset="0" stop-color="rgb(18,4,204)"/><stop offset="0.171" stop-color="rgb(18,4,204)"/><stop offset="1" stop-color="rgb(232,129,0)"/></linearGradient><linearGradient id="w208" gradientUnits="userSpaceOnUse" x1="394.7" y1="447.6" x2="299.0" y2="359.1"><stop offset="0" stop-color="rgb(18,4,204)"/><stop offset="0.169" stop-color="rgb(18,4,204)"/><stop offset="1" stop-color="rgb(232,119,0)"/></linearGradient><linearGradient id="w209" gradientUnits="userSpaceOnUse" x1="394.7" y1="447.6" x2="299.9" y2="355.2"><stop offset="0" stop-color="rgb(18,4,204)"/><stop offset="0.166" stop-color="rgb(18,4,204)"/><stop offset="1" stop-color="rgb(232,109,0)"/></linearGradient><linearGradient id="w210" gradientUnits="userSpaceOnUse" x1="394.7" y1="447.6" x2="301.2" y2="351.7"><stop offset="0" stop-color="rgb(18,4,204)"/><stop offset="0.164" stop-color="rgb(18,4,204)"/><stop offset="1" stop-color="rgb(232,100,0)"/></linearGradient><linearGradient id="w211" gradientUnits="userSpaceOnUse" x1="394.7" y1="447.6" x2="302.6" y2="348.0"><stop offset="0" stop-color="rgb(18,4,204)"/><stop offset="0.162" stop-color="rgb(18,4,204)"/><stop offset="1" stop-color="rgb(232,90,1)"/></linearGradient><linearGradient id="w212" gradientUnits="userSpaceOnUse" x1="394.7" y1="447.6" x2="304.0" y2="344.2"><stop offset="0" stop-color="rgb(18,4,204)"/><stop offset="0.160" stop-color="rgb(18,4,204)"/><stop offset="1" stop-color="rgb(231,79,3)"/></linearGradient><linearGradient id="w213" gradientUnits="userSpaceOnUse" x1="394.7" y1="447.6" x2="305.5" y2="340.3"><stop offset="0" stop-color="rgb(18,4,204)"/><stop offset="0.158" stop-color="rgb(18,4,204)"/><stop offset="1" stop-color="rgb(231,68,6)"/></linearGradient><linearGradient id="w214" gradientUnits="userSpaceOnUse" x1="394.7" y1="447.6" x2="306.9" y2="336.3"><stop offset="0" stop-color="rgb(18,4,204)"/><stop offset="0.155" stop-color="rgb(18,4,204)"/><stop offset="1" stop-color="rgb(230,57,8)"/></linearGradient><linearGradient id="w215" gradientUnits="userSpaceOnUse" x1="394.7" y1="447.6" x2="308.4" y2="332.0"><stop offset="0" stop-color="rgb(18,4,204)"/><stop offset="0.153" stop-color="rgb(18,4,204)"/><stop offset="1" stop-color="rgb(229,45,10)"/></linearGradient><linearGradient id="w216" gradientUnits="userSpaceOnUse" x1="394.7" y1="447.6" x2="309.9" y2="327.6"><stop offset="0" stop-color="rgb(18,4,204)"/><stop offset="0.150" stop-color="rgb(18,4,204)"/><stop offset="1" stop-color="rgb(229,32,13)"/></linearGradient><linearGradient id="w217" gradientUnits="userSpaceOnUse" x1="394.7" y1="447.6" x2="311.5" y2="323.1"><stop offset="0" stop-color="rgb(18,4,204)"/><stop offset="0.147" stop-color="rgb(18,4,204)"/><stop offset="1" stop-color="rgb(228,19,15)"/></linearGradient><linearGradient id="w218" gradientUnits="userSpaceOnUse" x1="394.7" y1="447.6" x2="313.3" y2="318.6"><stop offset="0" stop-color="rgb(18,4,204)"/><stop offset="0.144" stop-color="rgb(18,4,204)"/><stop offset="1" stop-color="rgb(228,14,28)"/></linearGradient><linearGradient id="w219" gradientUnits="userSpaceOnUse" x1="394.7" y1="447.6" x2="315.1" y2="313.8"><stop offset="0" stop-color="rgb(18,4,204)"/><stop offset="0.141" stop-color="rgb(18,4,204)"/><stop offset="1" stop-color="rgb(227,12,45)"/></linearGradient><linearGradient id="w220" gradientUnits="userSpaceOnUse" x1="394.7" y1="447.6" x2="317.2" y2="309.2"><stop offset="0" stop-color="rgb(18,4,204)"/><stop offset="0.139" stop-color="rgb(18,4,204)"/><stop offset="1" stop-color="rgb(227,10,62)"/></linearGradient><linearGradient id="w221" gradientUnits="userSpaceOnUse" x1="394.7" y1="447.6" x2="319.5" y2="304.6"><stop offset="0" stop-color="rgb(18,4,204)"/><stop offset="0.136" stop-color="rgb(18,4,204)"/><stop offset="1" stop-color="rgb(227,7,78)"/></linearGradient><linearGradient id="w222" gradientUnits="userSpaceOnUse" x1="394.7" y1="447.6" x2="321.9" y2="299.9"><stop offset="0" stop-color="rgb(18,4,204)"/><stop offset="0.134" stop-color="rgb(18,4,204)"/><stop offset="1" stop-color="rgb(227,5,95)"/></linearGradient><linearGradient id="w223" gradientUnits="userSpaceOnUse" x1="394.7" y1="447.6" x2="324.5" y2="295.3"><stop offset="0" stop-color="rgb(18,4,204)"/><stop offset="0.131" stop-color="rgb(18,4,204)"/><stop offset="1" stop-color="rgb(226,3,111)"/></linearGradient><linearGradient id="w224" gradientUnits="userSpaceOnUse" x1="394.7" y1="447.6" x2="327.2" y2="290.6"><stop offset="0" stop-color="rgb(18,4,204)"/><stop offset="0.129" stop-color="rgb(18,4,204)"/><stop offset="1" stop-color="rgb(226,0,128)"/></linearGradient><linearGradient id="w225" gradientUnits="userSpaceOnUse" x1="394.7" y1="447.6" x2="330.4" y2="286.3"><stop offset="0" stop-color="rgb(18,4,204)"/><stop offset="0.127" stop-color="rgb(18,4,204)"/><stop offset="1" stop-color="rgb(225,0,139)"/></linearGradient><linearGradient id="w226" gradientUnits="userSpaceOnUse" x1="394.7" y1="447.6" x2="333.6" y2="281.9"><stop offset="0" stop-color="rgb(18,4,204)"/><stop offset="0.125" stop-color="rgb(18,4,204)"/><stop offset="1" stop-color="rgb(225,0,149)"/></linearGradient><linearGradient id="w227" gradientUnits="userSpaceOnUse" x1="394.7" y1="447.6" x2="336.9" y2="277.4"><stop offset="0" stop-color="rgb(18,4,204)"/><stop offset="0.122" stop-color="rgb(18,4,204)"/><stop offset="1" stop-color="rgb(224,0,160)"/></linearGradient><linearGradient id="w228" gradientUnits="userSpaceOnUse" x1="394.7" y1="447.6" x2="340.7" y2="273.6"><stop offset="0" stop-color="rgb(18,4,204)"/><stop offset="0.121" stop-color="rgb(18,4,204)"/><stop offset="1" stop-color="rgb(224,0,169)"/></linearGradient><linearGradient id="w229" gradientUnits="userSpaceOnUse" x1="394.7" y1="447.6" x2="344.5" y2="269.8"><stop offset="0" stop-color="rgb(18,4,204)"/><stop offset="0.119" stop-color="rgb(18,4,204)"/><stop offset="1" stop-color="rgb(223,0,178)"/></linearGradient><linearGradient id="w230" gradientUnits="userSpaceOnUse" x1="394.7" y1="447.6" x2="348.5" y2="265.8"><stop offset="0" stop-color="rgb(18,4,204)"/><stop offset="0.117" stop-color="rgb(18,4,204)"/><stop offset="1" stop-color="rgb(223,0,187)"/></linearGradient><linearGradient id="w231" gradientUnits="userSpaceOnUse" x1="394.7" y1="447.6" x2="352.6" y2="261.6"><stop offset="0" stop-color="rgb(18,4,204)"/><stop offset="0.115" stop-color="rgb(18,4,204)"/><stop offset="1" stop-color="rgb(222,0,196)"/></linearGradient><linearGradient id="w232" gradientUnits="userSpaceOnUse" x1="394.7" y1="447.6" x2="356.8" y2="257.1"><stop offset="0" stop-color="rgb(18,4,204)"/><stop offset="0.113" stop-color="rgb(18,4,204)"/><stop offset="1" stop-color="rgb(221,0,200)"/></linearGradient><linearGradient id="w233" gradientUnits="userSpaceOnUse" x1="394.7" y1="447.6" x2="361.3" y2="253.1"><stop offset="0" stop-color="rgb(18,4,204)"/><stop offset="0.111" stop-color="rgb(18,4,204)"/><stop offset="1" stop-color="rgb(220,0,203)"/></linearGradient><linearGradient id="w234" gradientUnits="userSpaceOnUse" x1="394.7" y1="447.6" x2="366.0" y2="249.8"><stop offset="0" stop-color="rgb(18,4,204)"/><stop offset="0.110" stop-color="rgb(18,4,204)"/><stop offset="1" stop-color="rgb(220,0,206)"/></linearGradient><linearGradient id="w235" gradientUnits="userSpaceOnUse" x1="394.7" y1="447.6" x2="370.9" y2="246.4"><stop offset="0" stop-color="rgb(18,4,204)"/><stop offset="0.109" stop-color="rgb(18,4,204)"/><stop offset="1" stop-color="rgb(219,0,209)"/></linearGradient><linearGradient id="w236" gradientUnits="userSpaceOnUse" x1="394.7" y1="447.6" x2="375.9" y2="243.3"><stop offset="0" stop-color="rgb(18,4,204)"/><stop offset="0.107" stop-color="rgb(18,4,204)"/><stop offset="1" stop-color="rgb(219,0,211)"/></linearGradient><linearGradient id="w237" gradientUnits="userSpaceOnUse" x1="394.7" y1="447.6" x2="381.1" y2="240.1"><stop offset="0" stop-color="rgb(18,4,204)"/><stop offset="0.106" stop-color="rgb(18,4,204)"/><stop offset="1" stop-color="rgb(218,0,214)"/></linearGradient><linearGradient id="w238" gradientUnits="userSpaceOnUse" x1="394.7" y1="447.6" x2="386.4" y2="237.2"><stop offset="0" stop-color="rgb(18,4,204)"/><stop offset="0.104" stop-color="rgb(18,4,204)"/><stop offset="1" stop-color="rgb(218,0,216)"/></linearGradient><linearGradient id="w239" gradientUnits="userSpaceOnUse" x1="394.7" y1="447.6" x2="391.9" y2="234.9"><stop offset="0" stop-color="rgb(18,4,204)"/><stop offset="0.103" stop-color="rgb(18,4,204)"/><stop offset="1" stop-color="rgb(217,0,218)"/></linearGradient><filter id="wb" x="-5%" y="-5%" width="110%" height="110%"><feGaussianBlur stdDeviation="1.1"/></filter></defs>
<g filter="url(#wb)">
<path fill="url(#w0)" d="M394.7 447.6L393.7 220.5L401.6 220.6Z"/>
<path fill="url(#w1)" d="M394.7 447.6L399.7 218.8L407.7 219.1Z"/>
<path fill="url(#w2)" d="M394.7 447.6L405.8 217.2L413.8 217.7Z"/>
<path fill="url(#w3)" d="M394.7 447.6L411.9 216.3L419.9 217.1Z"/>
<path fill="url(#w4)" d="M394.7 447.6L418.0 215.9L426.1 216.8Z"/>
<path fill="url(#w5)" d="M394.7 447.6L424.2 215.4L432.3 216.6Z"/>
<path fill="url(#w6)" d="M394.7 447.6L430.3 216.4L438.3 217.8Z"/>
<path fill="url(#w7)" d="M394.7 447.6L436.3 217.6L444.3 219.1Z"/>
<path fill="url(#w8)" d="M394.7 447.6L442.0 220.1L449.9 221.9Z"/>
<path fill="url(#w9)" d="M394.7 447.6L447.6 222.8L455.4 224.8Z"/>
<path fill="url(#w10)" d="M394.7 447.6L453.0 226.1L460.7 228.3Z"/>
<path fill="url(#w11)" d="M394.7 447.6L458.1 230.1L465.6 232.4Z"/>
<path fill="url(#w12)" d="M394.7 447.6L463.1 234.0L470.5 236.5Z"/>
<path fill="url(#w13)" d="M394.7 447.6L467.8 238.3L475.0 241.0Z"/>
<path fill="url(#w14)" d="M394.7 447.6L472.3 242.9L479.4 245.7Z"/>
<path fill="url(#w15)" d="M394.7 447.6L476.7 247.3L483.6 250.3Z"/>
<path fill="url(#w16)" d="M394.7 447.6L480.5 252.6L487.2 255.7Z"/>
<path fill="url(#w17)" d="M394.7 447.6L484.1 257.9L490.7 261.2Z"/>
<path fill="url(#w18)" d="M394.7 447.6L487.7 263.1L494.1 266.5Z"/>
<path fill="url(#w19)" d="M394.7 447.6L490.6 269.1L496.8 272.6Z"/>
<path fill="url(#w20)" d="M394.7 447.6L493.4 274.8L499.4 278.4Z"/>
<path fill="url(#w21)" d="M394.7 447.6L496.0 280.7L501.7 284.3Z"/>
<path fill="url(#w22)" d="M394.7 447.6L498.1 286.8L503.7 290.5Z"/>
<path fill="url(#w23)" d="M394.7 447.6L499.4 293.8L504.7 297.5Z"/>
<path fill="url(#w24)" d="M394.7 447.6L500.6 300.4L505.7 304.2Z"/>
<path fill="url(#w25)" d="M394.7 447.6L501.7 306.9L506.5 310.7Z"/>
<path fill="url(#w26)" d="M394.7 447.6L502.2 313.7L506.8 317.5Z"/>
<path fill="url(#w27)" d="M394.7 447.6L502.6 320.1L507.0 324.0Z"/>
<path fill="url(#w28)" d="M394.7 447.6L503.0 326.3L507.2 330.1Z"/>
<path fill="url(#w29)" d="M394.7 447.6L503.0 332.4L507.0 336.3Z"/>
<path fill="url(#w30)" d="M394.7 447.6L503.1 338.2L506.9 342.1Z"/>
<path fill="url(#w31)" d="M394.7 447.6L503.2 343.8L506.7 347.6Z"/>
<path fill="url(#w32)" d="M394.7 447.6L503.0 349.2L506.4 353.1Z"/>
<path fill="url(#w33)" d="M394.7 447.6L502.8 354.4L506.0 358.3Z"/>
<path fill="url(#w34)" d="M394.7 447.6L502.6 359.4L505.7 363.2Z"/>
<path fill="url(#w35)" d="M394.7 447.6L502.5 364.1L505.3 368.0Z"/>
<path fill="url(#w36)" d="M394.7 447.6L502.3 368.7L505.0 372.5Z"/>
<path fill="url(#w37)" d="M394.7 447.6L502.1 373.1L504.7 376.9Z"/>
<path fill="url(#w38)" d="M394.7 447.6L502.0 377.3L504.4 381.0Z"/>
<path fill="url(#w39)" d="M394.7 447.6L501.8 381.3L504.1 385.1Z"/>
<path fill="url(#w40)" d="M394.7 447.6L501.7 385.2L503.8 389.0Z"/>
<path fill="url(#w41)" d="M394.7 447.6L501.5 389.0L503.5 392.8Z"/>
<path fill="url(#w42)" d="M394.7 447.6L501.2 392.8L503.0 396.5Z"/>
<path fill="url(#w43)" d="M394.7 447.6L500.3 396.7L502.0 400.4Z"/>
<path fill="url(#w44)" d="M394.7 447.6L499.4 400.4L501.0 404.1Z"/>
<path fill="url(#w45)" d="M394.7 447.6L498.6 404.1L500.0 407.7Z"/>
<path fill="url(#w46)" d="M394.7 447.6L496.7 407.9L498.1 411.5Z"/>
<path fill="url(#w47)" d="M394.7 447.6L494.9 411.6L496.1 415.1Z"/>
<path fill="url(#w48)" d="M394.7 447.6L472.5 422.0L473.3 424.7Z"/>
<path fill="url(#w49)" d="M394.7 447.6L468.4 425.4L469.1 428.0Z"/>
<path fill="url(#w50)" d="M394.7 447.6L468.9 427.4L469.6 430.0Z"/>
<path fill="url(#w51)" d="M394.7 447.6L470.3 429.1L470.9 431.7Z"/>
<path fill="url(#w52)" d="M394.7 447.6L471.7 430.9L472.3 433.6Z"/>
<path fill="url(#w53)" d="M394.7 447.6L473.2 432.7L473.7 435.4Z"/>
<path fill="url(#w54)" d="M394.7 447.6L474.5 434.6L474.9 437.4Z"/>
<path fill="url(#w55)" d="M394.7 447.6L475.7 436.6L476.0 439.4Z"/>
<path fill="url(#w56)" d="M394.7 447.6L471.3 439.2L471.5 441.9Z"/>
<path fill="url(#w57)" d="M394.7 447.6L467.2 441.6L467.3 444.1Z"/>
<path fill="url(#w58)" d="M394.7 447.6L464.4 443.6L464.5 446.1Z"/>
<path fill="url(#w59)" d="M394.7 447.6L462.0 445.5L462.0 447.9Z"/>
<path fill="url(#w60)" d="M394.7 447.6L459.8 447.3L459.8 449.6Z"/>
<path fill="url(#w61)" d="M394.7 447.6L457.8 449.0L457.7 451.2Z"/>
<path fill="url(#w62)" d="M394.7 447.6L456.1 450.6L456.0 452.7Z"/>
<path fill="url(#w63)" d="M394.7 447.6L454.6 452.1L454.4 454.1Z"/>
<path fill="url(#w64)" d="M394.7 447.6L453.1 453.5L452.9 455.5Z"/>
<path fill="url(#w65)" d="M394.7 447.6L452.6 455.0L452.3 457.0Z"/>
<path fill="url(#w66)" d="M394.7 447.6L452.9 456.6L452.5 458.6Z"/>
<path fill="url(#w67)" d="M394.7 447.6L453.2 458.2L452.8 460.2Z"/>
<path fill="url(#w68)" d="M394.7 447.6L453.5 459.8L453.0 461.9Z"/>
<path fill="url(#w69)" d="M394.7 447.6L453.9 461.5L453.4 463.6Z"/>
<path fill="url(#w70)" d="M394.7 447.6L454.4 463.3L453.9 465.4Z"/>
<path fill="url(#w71)" d="M394.7 447.6L455.0 465.2L454.3 467.3Z"/>
<path fill="url(#w72)" d="M394.7 447.6L455.6 467.1L454.8 469.2Z"/>
<path fill="url(#w73)" d="M394.7 447.6L457.1 469.4L456.3 471.5Z"/>
<path fill="url(#w74)" d="M394.7 447.6L460.0 472.3L459.1 474.6Z"/>
<path fill="url(#w75)" d="M394.7 447.6L467.5 477.4L466.5 479.9Z"/>
<path fill="url(#w76)" d="M394.7 447.6L465.6 478.8L464.5 481.3Z"/>
<path fill="url(#w77)" d="M394.7 447.6L463.7 480.1L462.5 482.5Z"/>
<path fill="url(#w78)" d="M394.7 447.6L461.7 481.4L460.4 483.7Z"/>
<path fill="url(#w79)" d="M394.7 447.6L459.7 482.5L458.5 484.8Z"/>
<path fill="url(#w80)" d="M394.7 447.6L457.8 483.6L456.5 485.8Z"/>
<path fill="url(#w81)" d="M394.7 447.6L455.8 484.7L454.5 486.8Z"/>
<path fill="url(#w82)" d="M394.7 447.6L453.9 485.7L452.5 487.7Z"/>
<path fill="url(#w83)" d="M394.7 447.6L452.0 486.6L450.6 488.6Z"/>
<path fill="url(#w84)" d="M394.7 447.6L450.1 487.5L448.7 489.4Z"/>
<path fill="url(#w85)" d="M394.7 447.6L448.3 488.3L446.8 490.2Z"/>
<path fill="url(#w86)" d="M394.7 447.6L446.5 489.1L445.0 490.9Z"/>
<path fill="url(#w87)" d="M394.7 447.6L444.6 489.9L443.1 491.6Z"/>
<path fill="url(#w88)" d="M394.7 447.6L442.8 490.6L441.3 492.2Z"/>
<path fill="url(#w89)" d="M394.7 447.6L441.1 491.2L439.5 492.8Z"/>
<path fill="url(#w90)" d="M394.7 447.6L439.4 491.9L437.8 493.4Z"/>
<path fill="url(#w91)" d="M394.7 447.6L437.7 492.5L436.1 493.9Z"/>
<path fill="url(#w92)" d="M394.7 447.6L436.0 493.0L434.3 494.4Z"/>
<path fill="url(#w93)" d="M394.7 447.6L434.3 493.6L432.7 494.9Z"/>
<path fill="url(#w94)" d="M394.7 447.6L432.7 494.1L431.0 495.4Z"/>
<path fill="url(#w95)" d="M394.7 447.6L431.1 494.6L429.4 495.8Z"/>
<path fill="url(#w96)" d="M394.7 447.6L429.5 495.0L427.8 496.2Z"/>
<path fill="url(#w97)" d="M394.7 447.6L427.9 495.4L426.2 496.6Z"/>
<path fill="url(#w98)" d="M394.7 447.6L426.3 495.9L424.6 496.9Z"/>
<path fill="url(#w99)" d="M394.7 447.6L424.8 496.3L423.1 497.3Z"/>
<path fill="url(#w100)" d="M394.7 447.6L423.3 496.6L421.6 497.6Z"/>
<path fill="url(#w101)" d="M394.7 447.6L421.8 497.0L420.0 497.9Z"/>
<path fill="url(#w102)" d="M394.7 447.6L420.3 497.3L418.5 498.1Z"/>
<path fill="url(#w103)" d="M394.7 447.6L418.8 497.6L417.1 498.4Z"/>
<path fill="url(#w104)" d="M394.7 447.6L417.3 497.9L415.6 498.6Z"/>
<path fill="url(#w105)" d="M394.7 447.6L415.9 498.2L414.1 498.9Z"/>
<path fill="url(#w106)" d="M394.7 447.6L414.5 498.4L412.7 499.1Z"/>
<path fill="url(#w107)" d="M394.7 447.6L413.0 498.6L411.2 499.3Z"/>
<path fill="url(#w108)" d="M394.7 447.6L411.6 498.8L409.8 499.4Z"/>
<path fill="url(#w109)" d="M394.7 447.6L410.2 499.0L408.4 499.5Z"/>
<path fill="url(#w110)" d="M394.7 447.6L408.8 499.2L407.0 499.7Z"/>
<path fill="url(#w111)" d="M394.7 447.6L407.4 499.4L405.6 499.8Z"/>
<path fill="url(#w112)" d="M394.7 447.6L406.0 499.6L404.2 499.9Z"/>
<path fill="url(#w113)" d="M394.7 447.6L404.6 499.7L402.8 500.0Z"/>
<path fill="url(#w114)" d="M394.7 447.6L403.2 499.8L401.4 500.1Z"/>
<path fill="url(#w115)" d="M394.7 447.6L401.8 499.9L400.0 500.1Z"/>
<path fill="url(#w116)" d="M394.7 447.6L400.4 500.0L398.6 500.1Z"/>
<path fill="url(#w117)" d="M394.7 447.6L399.1 500.1L397.2 500.2Z"/>
<path fill="url(#w118)" d="M394.7 447.6L397.7 500.1L395.8 500.2Z"/>
<path fill="url(#w119)" d="M394.7 447.6L396.3 500.2L394.5 500.2Z"/>
<path fill="url(#w120)" d="M394.7 447.6L394.9 500.2L393.1 500.2Z"/>
<path fill="url(#w121)" d="M394.7 447.6L393.6 500.2L391.7 500.1Z"/>
<path fill="url(#w122)" d="M394.7 447.6L392.2 500.2L390.3 500.1Z"/>
<path fill="url(#w123)" d="M394.7 447.6L390.8 500.2L389.0 500.0Z"/>
<path fill="url(#w124)" d="M394.7 447.6L389.4 500.1L387.6 499.9Z"/>
<path fill="url(#w125)" d="M394.7 447.6L388.0 500.1L386.2 499.8Z"/>
<path fill="url(#w126)" d="M394.7 447.6L386.6 500.1L384.8 499.7Z"/>
<path fill="url(#w127)" d="M394.7 447.6L385.2 500.0L383.4 499.6Z"/>
<path fill="url(#w128)" d="M394.7 447.6L383.8 499.9L382.0 499.5Z"/>
<path fill="url(#w129)" d="M394.7 447.6L382.4 499.8L380.6 499.3Z"/>
<path fill="url(#w130)" d="M394.7 447.6L381.0 499.6L379.2 499.1Z"/>
<path fill="url(#w131)" d="M394.7 447.6L370.7 529.8L367.9 529.0Z"/>
<path fill="url(#w132)" d="M394.7 447.6L367.6 532.2L364.7 531.2Z"/>
<path fill="url(#w133)" d="M394.7 447.6L364.3 534.7L361.3 533.6Z"/>
<path fill="url(#w134)" d="M394.7 447.6L360.6 537.5L357.5 536.2Z"/>
<path fill="url(#w135)" d="M394.7 447.6L356.9 539.9L353.7 538.5Z"/>
<path fill="url(#w136)" d="M394.7 447.6L353.1 542.1L349.9 540.6Z"/>
<path fill="url(#w137)" d="M394.7 447.6L349.0 544.4L345.7 542.8Z"/>
<path fill="url(#w138)" d="M394.7 447.6L344.6 547.0L341.2 545.2Z"/>
<path fill="url(#w139)" d="M394.7 447.6L340.2 549.0L336.7 547.0Z"/>
<path fill="url(#w140)" d="M394.7 447.6L336.1 550.1L332.6 548.0Z"/>
<path fill="url(#w141)" d="M394.7 447.6L331.8 551.3L328.2 549.0Z"/>
<path fill="url(#w142)" d="M394.7 447.6L327.2 552.5L323.6 550.1Z"/>
<path fill="url(#w143)" d="M394.7 447.6L323.2 552.6L319.6 550.1Z"/>
<path fill="url(#w144)" d="M394.7 447.6L319.7 551.7L316.2 549.0Z"/>
<path fill="url(#w145)" d="M394.7 447.6L316.2 550.8L312.7 548.0Z"/>
<path fill="url(#w146)" d="M394.7 447.6L312.7 549.8L309.1 546.9Z"/>
<path fill="url(#w147)" d="M394.7 447.6L309.9 547.8L306.5 544.7Z"/>
<path fill="url(#w148)" d="M394.7 447.6L307.3 545.5L304.0 542.4Z"/>
<path fill="url(#w149)" d="M394.7 447.6L304.7 543.2L301.5 540.0Z"/>
<path fill="url(#w150)" d="M394.7 447.6L302.2 540.9L299.0 537.7Z"/>
<path fill="url(#w151)" d="M394.7 447.6L299.7 538.6L296.6 535.2Z"/>
<path fill="url(#w152)" d="M394.7 447.6L298.2 535.2L295.2 531.8Z"/>
<path fill="url(#w153)" d="M394.7 447.6L296.8 531.9L294.0 528.5Z"/>
<path fill="url(#w154)" d="M394.7 447.6L295.5 528.7L292.7 525.2Z"/>
<path fill="url(#w155)" d="M394.7 447.6L294.1 525.5L291.5 521.9Z"/>
<path fill="url(#w156)" d="M394.7 447.6L292.8 522.3L290.3 518.7Z"/>
<path fill="url(#w157)" d="M394.7 447.6L291.5 519.2L289.1 515.5Z"/>
<path fill="url(#w158)" d="M394.7 447.6L290.7 515.8L288.3 512.1Z"/>
<path fill="url(#w159)" d="M394.7 447.6L290.0 512.4L287.8 508.7Z"/>
<path fill="url(#w160)" d="M394.7 447.6L289.3 509.1L287.2 505.4Z"/>
<path fill="url(#w161)" d="M394.7 447.6L288.6 505.8L286.7 502.1Z"/>
<path fill="url(#w162)" d="M394.7 447.6L288.0 502.6L286.1 498.8Z"/>
<path fill="url(#w163)" d="M394.7 447.6L287.4 499.4L285.6 495.6Z"/>
<path fill="url(#w164)" d="M394.7 447.6L286.8 496.2L285.2 492.4Z"/>
<path fill="url(#w165)" d="M394.7 447.6L286.8 492.8L285.3 489.1Z"/>
<path fill="url(#w166)" d="M394.7 447.6L286.8 489.6L285.4 485.8Z"/>
<path fill="url(#w167)" d="M394.7 447.6L286.8 486.4L285.5 482.6Z"/>
<path fill="url(#w168)" d="M394.7 447.6L286.7 483.2L285.6 479.4Z"/>
<path fill="url(#w169)" d="M394.7 447.6L286.7 480.1L285.7 476.3Z"/>
<path fill="url(#w170)" d="M394.7 447.6L286.2 477.2L285.3 473.4Z"/>
<path fill="url(#w171)" d="M394.7 447.6L285.3 474.4L284.4 470.5Z"/>
<path fill="url(#w172)" d="M394.7 447.6L284.3 471.6L283.5 467.7Z"/>
<path fill="url(#w173)" d="M394.7 447.6L283.3 468.7L282.7 464.8Z"/>
<path fill="url(#w174)" d="M394.7 447.6L282.4 465.9L281.8 462.0Z"/>
<path fill="url(#w175)" d="M394.7 447.6L281.7 463.0L281.2 459.0Z"/>
<path fill="url(#w176)" d="M394.7 447.6L281.0 460.0L280.7 456.1Z"/>
<path fill="url(#w177)" d="M394.7 447.6L280.4 457.1L280.1 453.1Z"/>
<path fill="url(#w178)" d="M394.7 447.6L279.7 454.1L279.5 450.1Z"/>
<path fill="url(#w179)" d="M394.7 447.6L279.0 451.1L279.0 447.1Z"/>
<path fill="url(#w180)" d="M394.7 447.6L278.3 448.1L278.4 444.0Z"/>
<path fill="url(#w181)" d="M394.7 447.6L278.1 445.1L278.3 441.0Z"/>
<path fill="url(#w182)" d="M394.7 447.6L278.0 442.0L278.2 437.9Z"/>
<path fill="url(#w183)" d="M394.7 447.6L277.8 438.9L278.2 434.8Z"/>
<path fill="url(#w184)" d="M394.7 447.6L277.6 435.8L278.1 431.7Z"/>
<path fill="url(#w185)" d="M394.7 447.6L277.5 432.7L278.1 428.6Z"/>
<path fill="url(#w186)" d="M394.7 447.6L277.3 429.5L278.0 425.5Z"/>
<path fill="url(#w187)" d="M394.7 447.6L277.3 426.4L278.1 422.3Z"/>
<path fill="url(#w188)" d="M394.7 447.6L277.6 423.3L278.6 419.2Z"/>
<path fill="url(#w189)" d="M394.7 447.6L278.0 420.1L279.0 416.1Z"/>
<path fill="url(#w190)" d="M394.7 447.6L278.4 417.0L279.5 412.9Z"/>
<path fill="url(#w191)" d="M394.7 447.6L278.7 413.8L280.0 409.8Z"/>
<path fill="url(#w192)" d="M394.7 447.6L279.1 410.6L280.5 406.6Z"/>
<path fill="url(#w193)" d="M394.7 447.6L279.5 407.4L280.9 403.4Z"/>
<path fill="url(#w194)" d="M394.7 447.6L279.8 404.1L281.4 400.1Z"/>
<path fill="url(#w195)" d="M394.7 447.6L280.2 400.8L281.9 396.8Z"/>
<path fill="url(#w196)" d="M394.7 447.6L280.6 397.4L282.4 393.4Z"/>
<path fill="url(#w197)" d="M394.7 447.6L281.0 394.0L282.9 390.0Z"/>
<path fill="url(#w198)" d="M394.7 447.6L281.4 390.5L283.4 386.6Z"/>
<path fill="url(#w199)" d="M394.7 447.6L281.9 387.0L284.1 383.1Z"/>
<path fill="url(#w200)" d="M394.7 447.6L282.5 383.5L284.8 379.6Z"/>
<path fill="url(#w201)" d="M394.7 447.6L283.1 379.9L285.5 376.0Z"/>
<path fill="url(#w202)" d="M394.7 447.6L283.7 376.2L286.3 372.4Z"/>
<path fill="url(#w203)" d="M394.7 447.6L284.4 372.5L287.0 368.7Z"/>
<path fill="url(#w204)" d="M394.7 447.6L285.0 368.7L287.9 364.9Z"/>
<path fill="url(#w205)" d="M394.7 447.6L285.9 364.8L288.8 361.1Z"/>
<path fill="url(#w206)" d="M394.7 447.6L286.7 360.9L289.8 357.2Z"/>
<path fill="url(#w207)" d="M394.7 447.6L287.6 356.9L290.8 353.2Z"/>
<path fill="url(#w208)" d="M394.7 447.6L288.5 352.8L291.9 349.2Z"/>
<path fill="url(#w209)" d="M394.7 447.6L289.5 348.7L293.1 345.1Z"/>
<path fill="url(#w210)" d="M394.7 447.6L291.0 344.8L294.7 341.3Z"/>
<path fill="url(#w211)" d="M394.7 447.6L292.6 340.9L296.4 337.4Z"/>
<path fill="url(#w212)" d="M394.7 447.6L294.2 336.9L298.1 333.5Z"/>
<path fill="url(#w213)" d="M394.7 447.6L295.8 332.8L299.9 329.4Z"/>
<path fill="url(#w214)" d="M394.7 447.6L297.4 328.5L301.6 325.2Z"/>
<path fill="url(#w215)" d="M394.7 447.6L299.1 324.1L303.4 320.8Z"/>
<path fill="url(#w216)" d="M394.7 447.6L300.7 319.5L305.3 316.3Z"/>
<path fill="url(#w217)" d="M394.7 447.6L302.5 314.7L307.2 311.6Z"/>
<path fill="url(#w218)" d="M394.7 447.6L304.5 310.0L309.3 306.9Z"/>
<path fill="url(#w219)" d="M394.7 447.6L306.5 305.1L311.5 302.1Z"/>
<path fill="url(#w220)" d="M394.7 447.6L308.7 300.2L313.9 297.3Z"/>
<path fill="url(#w221)" d="M394.7 447.6L311.2 295.4L316.6 292.6Z"/>
<path fill="url(#w222)" d="M394.7 447.6L313.8 290.5L319.3 287.8Z"/>
<path fill="url(#w223)" d="M394.7 447.6L316.6 285.8L322.3 283.1Z"/>
<path fill="url(#w224)" d="M394.7 447.6L319.6 280.8L325.4 278.3Z"/>
<path fill="url(#w225)" d="M394.7 447.6L322.9 276.4L328.9 274.0Z"/>
<path fill="url(#w226)" d="M394.7 447.6L326.4 271.8L332.5 269.6Z"/>
<path fill="url(#w227)" d="M394.7 447.6L329.9 267.1L336.2 265.0Z"/>
<path fill="url(#w228)" d="M394.7 447.6L333.9 263.2L340.4 261.2Z"/>
<path fill="url(#w229)" d="M394.7 447.6L338.0 259.2L344.6 257.3Z"/>
<path fill="url(#w230)" d="M394.7 447.6L342.2 255.0L349.0 253.3Z"/>
<path fill="url(#w231)" d="M394.7 447.6L346.5 250.7L353.4 249.1Z"/>
<path fill="url(#w232)" d="M394.7 447.6L350.9 246.1L358.0 244.7Z"/>
<path fill="url(#w233)" d="M394.7 447.6L355.7 241.9L362.9 240.7Z"/>
<path fill="url(#w234)" d="M394.7 447.6L360.6 238.5L368.0 237.4Z"/>
<path fill="url(#w235)" d="M394.7 447.6L365.8 235.0L373.2 234.1Z"/>
<path fill="url(#w236)" d="M394.7 447.6L371.1 231.7L378.6 231.0Z"/>
<path fill="url(#w237)" d="M394.7 447.6L376.5 228.5L384.1 228.0Z"/>
<path fill="url(#w238)" d="M394.7 447.6L382.1 225.4L389.8 225.1Z"/>
<path fill="url(#w239)" d="M394.7 447.6L387.8 223.0L395.7 222.9Z"/>
</g>
</g>
<clipPath id="m2c"><path d="M280 478L297.8 473.6L309 470.8L322 467L330 464.5L330 430L520 430L520 560L280 560Z"/></clipPath>
<g id="mesh2" clip-path="url(#m2c)">
<path class="w" stroke="#5a5a5a" stroke-width="5" d="M391.1 488.2L390.8 492.8M376.3 487.3L374.3 491.7M420.6 486.1L423.5 490.4M406.1 487.8L407.4 492.3"/>
<path class="w" stroke="#5a5a5a" stroke-width="4.5" d="M362.2 485.0L358.6 489.2M349.3 481.6L344.3 485.3M338.0 477.1L331.9 480.3M328.8 471.7L321.7 474.4M321.9 465.8L314.2 467.7M317.5 459.4L309.4 460.6M463.9 468.2L471.4 470.4M456.0 474.0L462.8 476.8M446.0 479.0L451.7 482.5M434.0 483.1L438.5 487.0"/>
<path class="w" stroke="#b4b4b4" stroke-width="3.5" d="M391.1 488.2L390.8 492.8M376.3 487.3L374.3 491.7M362.2 485.0L358.6 489.2M349.3 481.6L344.3 485.3M338.0 477.1L331.9 480.3M328.8 471.7L321.7 474.4M321.9 465.8L314.2 467.7M317.5 459.4L309.4 460.6M463.9 468.2L471.4 470.4M456.0 474.0L462.8 476.8M446.0 479.0L451.7 482.5M434.0 483.1L438.5 487.0M420.6 486.1L423.5 490.4M406.1 487.8L407.4 492.3"/>
<path class="w" stroke="#e4e4e4" stroke-width="2" d="M391.1 488.2L390.8 492.8M376.3 487.3L374.3 491.7M362.2 485.0L358.6 489.2M349.3 481.6L344.3 485.3M338.0 477.1L331.9 480.3M328.8 471.7L321.7 474.4M321.9 465.8L314.2 467.7M317.5 459.4L309.4 460.6M463.9 468.2L471.4 470.4M456.0 474.0L462.8 476.8M446.0 479.0L451.7 482.5M434.0 483.1L438.5 487.0M420.6 486.1L423.5 490.4M406.1 487.8L407.4 492.3"/>
<path class="w" stroke="#545454" stroke-width="6" d="M391.1 488.2L383.7 487.9M383.7 487.9L376.3 487.3M376.3 487.3L369.1 486.3M369.1 486.3L362.2 485.0M362.2 485.0L355.5 483.4M355.5 483.4L349.3 481.6M349.3 481.6L343.4 479.4M343.4 479.4L338.0 477.1M451.3 476.6L446.0 479.0M446.0 479.0L440.2 481.2M440.2 481.2L434.0 483.1M434.0 483.1L427.5 484.7M427.5 484.7L420.6 486.1M420.6 486.1L413.4 487.1M413.4 487.1L406.1 487.8M406.1 487.8L398.6 488.2M398.6 488.2L391.1 488.2"/>
<path class="w" stroke="#4e4e4e" stroke-width="6" d="M338.0 477.1L333.2 474.5M456.0 474.0L451.3 476.6"/>
<path class="w" stroke="#4e4e4e" stroke-width="5.5" d="M333.2 474.5L328.8 471.7M328.8 471.7L325.1 468.8M325.1 468.8L321.9 465.8M321.9 465.8L319.4 462.6M319.4 462.6L317.5 459.4M317.5 459.4L316.2 456.1M466.9 465.2L463.9 468.2M463.9 468.2L460.3 471.2M460.3 471.2L456.0 474.0"/>
<path class="w" stroke="#a2a2a2" stroke-width="5" d="M391.1 488.7L383.7 488.4M383.6 488.4L376.3 487.7M376.3 487.7L369.1 486.8M369.0 486.8L362.1 485.5M362.1 485.5L355.4 483.9M355.4 483.9L349.1 482.0M349.1 482.0L343.3 479.9M446.2 479.4L440.4 481.6M440.4 481.6L434.2 483.5M434.1 483.5L427.6 485.2M427.5 485.2L420.7 486.5M420.6 486.5L413.5 487.6M413.5 487.6L406.1 488.3M406.1 488.3L398.7 488.6M398.6 488.6L391.1 488.7"/>
<path class="w" stroke="#9c9c9c" stroke-width="5" d="M343.2 479.9L337.8 477.5M337.8 477.5L332.9 474.9M332.9 474.9L328.6 472.1M328.5 472.1L324.8 469.2M464.2 468.6L460.5 471.5M460.5 471.6L456.3 474.4M456.3 474.4L451.5 477.0M451.5 477.0L446.2 479.4"/>
<path class="w" stroke="#969696" stroke-width="5" d="M324.8 469.2L321.6 466.1M467.2 465.5L464.2 468.5"/>
<path class="w" stroke="#969696" stroke-width="4.5" d="M321.6 466.1L319.0 462.9M319.0 462.9L317.1 459.6M317.0 459.6L315.8 456.3"/>
<path class="w" stroke="#cccccc" stroke-width="3.5" d="M391.1 489.4L383.6 489.1M383.6 489.1L376.2 488.4M376.2 488.4L369.0 487.5M368.9 487.4L362.0 486.2M361.9 486.2L355.3 484.6M355.2 484.6L348.9 482.7M440.6 482.3L434.4 484.2M434.3 484.2L427.7 485.9M427.7 485.9L420.8 487.2M420.7 487.2L413.6 488.3M413.5 488.3L406.2 489.0M406.1 489.0L398.7 489.3M398.6 489.3L391.1 489.4"/>
<path class="w" stroke="#c6c6c6" stroke-width="3.5" d="M348.9 482.7L343.0 480.5M342.9 480.5L337.6 478.1M337.5 478.1L332.6 475.5M332.5 475.5L328.2 472.7M460.9 472.1L456.7 474.9M456.6 475.0L451.8 477.6M451.8 477.6L446.5 480.0M446.4 480.1L440.6 482.3"/>
<path class="w" stroke="#c0c0c0" stroke-width="3.5" d="M328.1 472.6L324.4 469.7M324.3 469.6L321.1 466.6M321.0 466.5L318.5 463.3M467.7 466.0L464.7 469.0M464.6 469.1L461.0 472.1"/>
<path class="w" stroke="#bababa" stroke-width="3.5" d="M318.4 463.2L316.5 460.0M316.4 459.8L315.1 456.6"/>
<path class="w" stroke="#545454" stroke-width="6" d="M390.8 492.8L382.5 492.4M382.5 492.4L374.3 491.7M374.3 491.7L366.3 490.6M366.3 490.6L358.6 489.2M358.6 489.2L351.2 487.4M351.2 487.4L344.3 485.3M344.3 485.3L337.8 483.0M337.8 483.0L331.9 480.3M457.5 479.8L451.7 482.5M451.7 482.5L445.3 484.9M445.3 484.9L438.5 487.0M438.5 487.0L431.2 488.9M431.2 488.9L423.5 490.4M423.5 490.4L415.6 491.5M415.6 491.5L407.4 492.3M407.4 492.3L399.1 492.7M399.1 492.7L390.8 492.8"/>
<path class="w" stroke="#4e4e4e" stroke-width="6" d="M331.9 480.3L326.5 477.4M326.5 477.4L321.7 474.4M467.4 473.7L462.8 476.8M462.8 476.8L457.5 479.8"/>
<path class="w" stroke="#4e4e4e" stroke-width="5.5" d="M321.7 474.4L317.6 471.1M317.6 471.1L314.2 467.7M314.2 467.7L311.4 464.2M311.4 464.2L309.4 460.6M309.4 460.6L308.0 457.0M474.7 467.0L471.4 470.4M471.4 470.4L467.4 473.7"/>
<path class="w" stroke="#a2a2a2" stroke-width="5" d="M390.8 493.3L382.5 492.9M382.5 492.9L374.3 492.2M374.2 492.2L366.3 491.1M366.2 491.1L358.5 489.7M358.5 489.7L351.1 487.9M351.1 487.9L344.1 485.8M344.1 485.8L337.6 483.4M451.9 482.9L445.5 485.3M445.5 485.3L438.6 487.5M438.6 487.5L431.3 489.3M431.3 489.3L423.6 490.8M423.6 490.8L415.7 492.0M415.6 492.0L407.5 492.8M407.5 492.8L399.2 493.2M399.1 493.2L390.8 493.3"/>
<path class="w" stroke="#9c9c9c" stroke-width="5" d="M337.6 483.4L331.7 480.7M331.6 480.7L326.3 477.9M326.2 477.8L321.5 474.7M321.5 474.7L317.3 471.5M471.7 470.8L467.7 474.1M467.7 474.1L463.1 477.2M463.0 477.2L457.8 480.2M457.7 480.2L451.9 482.9"/>
<path class="w" stroke="#969696" stroke-width="5" d="M317.3 471.4L313.9 468.0M313.8 468.0L311.1 464.5M475.0 467.3L471.7 470.8"/>
<path class="w" stroke="#969696" stroke-width="4.5" d="M311.1 464.4L309.0 460.9M309.0 460.8L307.6 457.2"/>
<path class="w" stroke="#cccccc" stroke-width="3.5" d="M390.8 494.0L382.4 493.6M382.4 493.6L374.2 492.9M374.1 492.9L366.2 491.8M366.1 491.8L358.4 490.4M358.3 490.3L351.0 488.6M350.9 488.6L343.9 486.5M445.7 486.0L438.8 488.2M438.8 488.2L431.5 490.0M431.4 490.0L423.8 491.5M423.7 491.6L415.8 492.7M415.7 492.7L407.5 493.5M407.5 493.5L399.2 493.9M399.1 493.9L390.8 494.0"/>
<path class="w" stroke="#c6c6c6" stroke-width="3.5" d="M343.9 486.4L337.4 484.1M337.3 484.0L331.4 481.4M331.3 481.3L325.9 478.5M325.9 478.4L321.1 475.3M468.1 474.7L463.4 477.8M463.4 477.9L458.1 480.8M458.0 480.8L452.2 483.5M452.1 483.5L445.8 486.0"/>
<path class="w" stroke="#c0c0c0" stroke-width="3.5" d="M321.0 475.3L316.9 472.0M316.8 471.9L313.4 468.5M313.3 468.4L310.6 464.9M475.5 467.8L472.2 471.2M472.1 471.3L468.1 474.6"/>
<path class="w" stroke="#bababa" stroke-width="3.5" d="M310.5 464.8L308.4 461.2M308.3 461.0L307.0 457.4"/>
</g>
<g stroke="#00c800" stroke-width="1.2" fill="none">
<path d="M394.7 447.8L394.7 312"/>
<path d="M394.7 447.8L456 430.2"/>
<path d="M504 412.6L509.5 414.2" stroke-width="2"/>
</g>
<path d="M394.7 299.5L397.4 314L392 314Z" fill="#00c800"/>
<g fill="#00c800" font-size="21">
<text transform="translate(389.8,280.8) scale(0.76,1)">Z</text>
<text transform="translate(526.6,410) scale(0.7,0.93)">X</text>
</g>
<path fill="none" stroke-linecap="round" stroke="#5c5c5c" stroke-width="5.0" d="M321.8 416.3L324.2 418.8"/>
<path fill="none" stroke-linecap="round" stroke="#5c5c5c" stroke-width="5.1" d="M324.2 418.8L326.7 421.3"/>
<path fill="none" stroke-linecap="round" stroke="#5c5c5c" stroke-width="5.2" d="M326.7 421.3L329.3 423.8"/>
<path fill="none" stroke-linecap="round" stroke="#5c5c5c" stroke-width="5.2" d="M329.3 423.8L332.1 426.2"/>
<path fill="none" stroke-linecap="round" stroke="#5c5c5c" stroke-width="5.3" d="M332.1 426.2L335.1 428.6"/>
<path fill="none" stroke-linecap="round" stroke="#5c5c5c" stroke-width="5.3" d="M335.1 428.6L338.3 430.9"/>
<path fill="none" stroke-linecap="round" stroke="#5c5c5c" stroke-width="5.3" d="M338.3 430.9L341.7 433.0"/>
<path fill="none" stroke-linecap="round" stroke="#5c5c5c" stroke-width="5.4" d="M341.7 433.0L345.1 434.9"/>
<path fill="none" stroke-linecap="round" stroke="#5c5c5c" stroke-width="5.4" d="M345.1 434.9L348.6 436.7"/>
<path fill="none" stroke-linecap="round" stroke="#5c5c5c" stroke-width="5.4" d="M348.6 436.7L351.9 438.2"/>
<path fill="none" stroke-linecap="round" stroke="#5c5c5c" stroke-width="5.4" d="M351.9 438.2L355.2 439.6"/>
<path fill="none" stroke-linecap="round" stroke="#5c5c5c" stroke-width="5.4" d="M355.2 439.6L358.5 441.0"/>
<path fill="none" stroke-linecap="round" stroke="#a8a8a8" stroke-width="3.9" d="M321.7 416.1L324.1 418.6"/>
<path fill="none" stroke-linecap="round" stroke="#a8a8a8" stroke-width="4.0" d="M324.1 418.6L326.6 421.1"/>
<path fill="none" stroke-linecap="round" stroke="#a8a8a8" stroke-width="4.0" d="M326.6 421.1L329.2 423.6"/>
<path fill="none" stroke-linecap="round" stroke="#a8a8a8" stroke-width="4.1" d="M329.2 423.6L332.0 426.0"/>
<path fill="none" stroke-linecap="round" stroke="#a8a8a8" stroke-width="4.1" d="M332.0 426.0L335.0 428.4"/>
<path fill="none" stroke-linecap="round" stroke="#a8a8a8" stroke-width="4.1" d="M335.0 428.4L338.2 430.7"/>
<path fill="none" stroke-linecap="round" stroke="#a8a8a8" stroke-width="4.1" d="M338.2 430.7L341.5 432.8"/>
<path fill="none" stroke-linecap="round" stroke="#a8a8a8" stroke-width="4.2" d="M341.5 432.8L345.0 434.7"/>
<path fill="none" stroke-linecap="round" stroke="#a8a8a8" stroke-width="4.2" d="M345.0 434.7L348.5 436.5"/>
<path fill="none" stroke-linecap="round" stroke="#a8a8a8" stroke-width="4.2" d="M348.5 436.5L351.8 438.0"/>
<path fill="none" stroke-linecap="round" stroke="#a8a8a8" stroke-width="4.2" d="M351.8 438.0L355.1 439.4"/>
<path fill="none" stroke-linecap="round" stroke="#a8a8a8" stroke-width="4.2" d="M355.1 439.4L358.4 440.8"/>
<path fill="none" stroke-linecap="round" stroke="#e8e8e8" stroke-width="1.8" d="M321.5 415.8L323.9 418.3"/>
<path fill="none" stroke-linecap="round" stroke="#e8e8e8" stroke-width="1.8" d="M323.9 418.3L326.4 420.8"/>
<path fill="none" stroke-linecap="round" stroke="#e8e8e8" stroke-width="1.9" d="M326.4 420.8L329.0 423.3"/>
<path fill="none" stroke-linecap="round" stroke="#e8e8e8" stroke-width="1.9" d="M329.0 423.3L331.8 425.7"/>
<path fill="none" stroke-linecap="round" stroke="#e8e8e8" stroke-width="1.9" d="M331.8 425.7L334.8 428.1"/>
<path fill="none" stroke-linecap="round" stroke="#e8e8e8" stroke-width="1.9" d="M334.8 428.1L338.0 430.4"/>
<path fill="none" stroke-linecap="round" stroke="#e8e8e8" stroke-width="1.9" d="M338.0 430.4L341.4 432.5"/>
<path fill="none" stroke-linecap="round" stroke="#e8e8e8" stroke-width="1.9" d="M341.4 432.5L344.8 434.4"/>
<path fill="none" stroke-linecap="round" stroke="#e8e8e8" stroke-width="1.9" d="M344.8 434.4L348.3 436.2"/>
<path fill="none" stroke-linecap="round" stroke="#e8e8e8" stroke-width="1.9" d="M348.3 436.2L351.6 437.7"/>
<path fill="none" stroke-linecap="round" stroke="#e8e8e8" stroke-width="1.9" d="M351.6 437.7L354.9 439.1"/>
<path fill="none" stroke-linecap="round" stroke="#e8e8e8" stroke-width="1.9" d="M354.9 439.1L358.2 440.5"/>
<rect x="466.6" y="492" width="7.8" height="12" fill="#8a8a8a"/>
<rect x="468.2" y="492" width="3" height="12" fill="#c0c0c0"/>
<ellipse cx="470.6" cy="494.6" rx="5.6" ry="2" fill="#e000e0"/>
<g transform="translate(358.0,442.6) rotate(20.96)">
<path d="M0 -8.0 L121.6 -8.8 A8.8 8.8 0 0 1 121.6 8.8 L0 8.0 A2 8.0 0 0 1 0 -8.0 Z" fill="url(#tg)"/>
</g>
<path class="w" stroke="#808080" stroke-width="5.1" d="M378.6 235.2L374.3 236.3"/>
<path class="w" stroke="#808080" stroke-width="5.2" d="M374.3 236.3L370.0 237.5"/>
<path class="w" stroke="#808080" stroke-width="5.3" d="M370.0 237.5L365.7 238.8"/>
<path class="w" stroke="#808080" stroke-width="5.5" d="M365.7 238.8L361.4 240.3"/>
<path class="w" stroke="#808080" stroke-width="5.6" d="M361.4 240.3L357.1 241.9"/>
<path class="w" stroke="#808080" stroke-width="5.7" d="M357.1 241.9L352.9 243.8"/>
<path class="w" stroke="#808080" stroke-width="5.9" d="M352.9 243.8L349.0 246.0"/>
<path class="w" stroke="#808080" stroke-width="6.0" d="M349.0 246.0L345.2 248.3"/>
<path class="w" stroke="#808080" stroke-width="6.1" d="M345.2 248.3L341.2 250.7"/>
<path class="w" stroke="#808080" stroke-width="6.3" d="M341.2 250.7L336.6 252.9"/>
<path class="w" stroke="#808080" stroke-width="6.4" d="M336.6 252.9L331.7 255.2"/>
<path class="w" stroke="#808080" stroke-width="6.5" d="M331.7 255.2L327.2 257.5"/>
<path class="w" stroke="#808080" stroke-width="6.7" d="M327.2 257.5L323.1 260.0"/>
<path class="w" stroke="#808080" stroke-width="6.8" d="M323.1 260.0L319.3 262.6"/>
<path class="w" stroke="#808080" stroke-width="6.9" d="M319.3 262.6L316.0 265.4"/>
<path class="w" stroke="#808080" stroke-width="7.1" d="M316.0 265.4L313.4 268.5"/>
<path class="w" stroke="#808080" stroke-width="7.2" d="M313.4 268.5L311.3 271.9"/>
<path class="w" stroke="#808080" stroke-width="7.3" d="M311.3 271.9L309.7 275.2"/>
<path class="w" stroke="#808080" stroke-width="7.3" d="M309.7 275.2L308.7 278.4"/>
<path class="w" stroke="#808080" stroke-width="7.4" d="M308.7 278.4L308.3 281.6"/>
<path class="w" stroke="#808080" stroke-width="7.5" d="M308.3 281.6L308.3 285.0"/>
<path class="w" stroke="#808080" stroke-width="7.5" d="M308.3 285.0L308.7 288.7"/>
<path class="w" stroke="#808080" stroke-width="7.6" d="M308.7 288.7L309.6 292.5"/>
<path class="w" stroke="#808080" stroke-width="7.6" d="M309.6 292.5L311.1 296.2"/>
<path class="w" stroke="#808080" stroke-width="7.6" d="M311.1 296.2L313.2 299.6"/>
<path class="w" stroke="#808080" stroke-width="7.6" d="M313.2 299.6L315.8 302.9"/>
<path class="w" stroke="#808080" stroke-width="7.7" d="M315.8 302.9L318.8 306.0"/>
<path class="w" stroke="#808080" stroke-width="7.7" d="M318.8 306.0L322.2 309.0"/>
<path class="w" stroke="#808080" stroke-width="7.8" d="M322.2 309.0L325.9 311.8"/>
<path class="w" stroke="#808080" stroke-width="7.8" d="M325.9 311.8L330.0 314.4"/>
<path class="w" stroke="#808080" stroke-width="7.8" d="M330.0 314.4L334.5 316.9"/>
<path class="w" stroke="#808080" stroke-width="7.8" d="M334.5 316.9L339.2 319.3"/>
<path class="w" stroke="#808080" stroke-width="7.8" d="M339.2 319.3L344.0 321.4"/>
<path class="w" stroke="#808080" stroke-width="7.8" d="M344.0 321.4L348.7 323.2"/>
<path class="w" stroke="#808080" stroke-width="7.8" d="M348.7 323.2L353.5 324.8"/>
<path class="w" stroke="#808080" stroke-width="7.8" d="M353.5 324.8L358.0 326.3"/>
<path class="w" stroke="#808080" stroke-width="7.8" d="M358.0 326.3L362.1 327.8"/>
<path class="w" stroke="#808080" stroke-width="7.8" d="M362.1 327.8L366.0 329.3"/>
<path class="w" stroke="#808080" stroke-width="7.7" d="M366.0 329.3L370.0 330.8"/>
<path class="w" stroke="#7b7b7b" stroke-width="7.7" d="M370.0 330.8L374.0 332.2"/>
<path class="w" stroke="#737373" stroke-width="7.7" d="M374.0 332.2L378.0 333.6"/>
<path class="w" stroke="#6c6c6c" stroke-width="7.6" d="M378.0 333.6L382.6 335.0"/>
<path class="w" stroke="#646464" stroke-width="7.6" d="M382.6 335.0L388.0 336.3"/>
<path class="w" stroke="#5d5d5d" stroke-width="7.5" d="M388.0 336.3L393.9 337.6"/>
<path class="w" stroke="#555555" stroke-width="7.4" d="M393.9 337.6L400.0 338.8"/>
<path class="w" stroke="#4e4e4e" stroke-width="7.2" d="M400.0 338.8L406.1 340.0"/>
<path class="w" stroke="#464646" stroke-width="7.1" d="M406.1 340.0L412.4 341.1"/>
<path class="w" stroke="#3f3f3f" stroke-width="7.0" d="M412.4 341.1L418.7 342.0"/>
<path class="w" stroke="#3c3c3c" stroke-width="6.8" d="M418.7 342.0L424.9 342.7"/>
<path class="w" stroke="#3c3c3c" stroke-width="6.7" d="M424.9 342.7L431.1 343.2"/>
<path class="w" stroke="#3c3c3c" stroke-width="6.6" d="M431.1 343.2L437.3 343.5"/>
<path class="w" stroke="#3c3c3c" stroke-width="6.5" d="M437.3 343.5L443.7 343.5"/>
<path class="w" stroke="#3c3c3c" stroke-width="6.4" d="M443.7 343.5L450.0 343.4"/>
<path class="w" stroke="#3c3c3c" stroke-width="6.3" d="M450.0 343.4L456.0 343.0"/>
<path class="w" stroke="#3c3c3c" stroke-width="6.3" d="M456.0 343.0L461.6 342.5"/>
<path class="w" stroke="#3c3c3c" stroke-width="6.2" d="M461.6 342.5L466.7 341.7"/>
<path class="w" stroke="#3c3c3c" stroke-width="6.1" d="M466.7 341.7L470.9 340.7"/>
<path class="w" stroke="#3c3c3c" stroke-width="6.0" d="M470.9 340.7L474.1 339.3"/>
<path class="w" stroke="#3c3c3c" stroke-width="5.8" d="M474.1 339.3L476.3 337.6"/>
<path class="w" stroke="#3c3c3c" stroke-width="5.8" d="M476.3 337.6L477.5 336.0"/>
<path class="w" stroke="#3c3c3c" stroke-width="5.6" d="M477.5 336.0L477.4 334.5"/>
<path class="w" stroke="#3c3c3c" stroke-width="5.5" d="M477.4 334.5L476.3 333.1"/>
<path class="w" stroke="#3c3c3c" stroke-width="5.4" d="M476.3 333.1L474.7 331.9"/>
<path class="w" stroke="#404040" stroke-width="5.4" d="M474.7 331.9L472.5 331.1"/>
<path class="w" stroke="#4f4f4f" stroke-width="5.3" d="M472.5 331.1L469.8 330.7"/>
<path class="w" stroke="#5e5e5e" stroke-width="5.2" d="M469.8 330.7L467.2 330.4"/>
<path class="w" stroke="#6d6d6d" stroke-width="5.2" d="M467.2 330.4L465.1 330.4"/>
<path class="w" stroke="#7c7c7c" stroke-width="5.2" d="M465.1 330.4L463.1 330.6"/>
<path class="w" stroke="#808080" stroke-width="5.2" d="M463.1 330.6L461.2 330.8"/>
<path class="w" stroke="#b8b8b8" stroke-width="3.6" d="M378.5 234.9L374.2 236.0"/>
<path class="w" stroke="#b8b8b8" stroke-width="3.7" d="M374.2 236.0L369.9 237.2"/>
<path class="w" stroke="#b8b8b8" stroke-width="3.7" d="M369.9 237.2L365.6 238.6"/>
<path class="w" stroke="#b8b8b8" stroke-width="3.8" d="M365.6 238.6L361.3 240.0"/>
<path class="w" stroke="#b8b8b8" stroke-width="3.9" d="M361.3 240.0L357.0 241.7"/>
<path class="w" stroke="#b8b8b8" stroke-width="4.0" d="M357.0 241.7L352.8 243.6"/>
<path class="w" stroke="#b8b8b8" stroke-width="4.1" d="M352.8 243.6L348.9 245.7"/>
<path class="w" stroke="#b8b8b8" stroke-width="4.2" d="M348.9 245.7L345.1 248.1"/>
<path class="w" stroke="#b8b8b8" stroke-width="4.3" d="M345.1 248.1L341.1 250.4"/>
<path class="w" stroke="#b8b8b8" stroke-width="4.4" d="M341.1 250.4L336.5 252.7"/>
<path class="w" stroke="#b8b8b8" stroke-width="4.5" d="M336.5 252.7L331.6 254.9"/>
<path class="w" stroke="#b8b8b8" stroke-width="4.6" d="M331.6 254.9L327.1 257.2"/>
<path class="w" stroke="#b8b8b8" stroke-width="4.7" d="M327.1 257.2L323.0 259.7"/>
<path class="w" stroke="#b8b8b8" stroke-width="4.8" d="M323.0 259.7L319.2 262.3"/>
<path class="w" stroke="#b8b8b8" stroke-width="4.9" d="M319.2 262.3L315.9 265.1"/>
<path class="w" stroke="#b8b8b8" stroke-width="4.9" d="M315.9 265.1L313.3 268.3"/>
<path class="w" stroke="#b8b8b8" stroke-width="5.0" d="M313.3 268.3L311.2 271.6"/>
<path class="w" stroke="#b8b8b8" stroke-width="5.1" d="M311.2 271.6L309.6 274.9"/>
<path class="w" stroke="#b8b8b8" stroke-width="5.1" d="M309.6 274.9L308.6 278.2"/>
<path class="w" stroke="#b8b8b8" stroke-width="5.2" d="M308.6 278.2L308.2 281.4"/>
<path class="w" stroke="#b8b8b8" stroke-width="5.2" d="M308.2 281.4L308.2 284.8"/>
<path class="w" stroke="#b8b8b8" stroke-width="5.3" d="M308.2 284.8L308.6 288.4"/>
<path class="w" stroke="#b8b8b8" stroke-width="5.3" d="M308.6 288.4L309.5 292.3"/>
<path class="w" stroke="#b8b8b8" stroke-width="5.3" d="M309.5 292.3L311.0 295.9"/>
<path class="w" stroke="#b8b8b8" stroke-width="5.3" d="M311.0 295.9L313.1 299.4"/>
<path class="w" stroke="#b8b8b8" stroke-width="5.4" d="M313.1 299.4L315.7 302.6"/>
<path class="w" stroke="#b8b8b8" stroke-width="5.4" d="M315.7 302.6L318.7 305.8"/>
<path class="w" stroke="#b8b8b8" stroke-width="5.4" d="M318.7 305.8L322.1 308.7"/>
<path class="w" stroke="#b8b8b8" stroke-width="5.4" d="M322.1 308.7L325.8 311.5"/>
<path class="w" stroke="#b8b8b8" stroke-width="5.5" d="M325.8 311.5L329.9 314.1"/>
<path class="w" stroke="#b8b8b8" stroke-width="5.5" d="M329.9 314.1L334.4 316.7"/>
<path class="w" stroke="#b8b8b8" stroke-width="5.5" d="M334.4 316.7L339.1 319.0"/>
<path class="w" stroke="#b8b8b8" stroke-width="5.5" d="M339.1 319.0L343.9 321.1"/>
<path class="w" stroke="#b8b8b8" stroke-width="5.5" d="M343.9 321.1L348.6 323.0"/>
<path class="w" stroke="#b8b8b8" stroke-width="5.5" d="M348.6 323.0L353.4 324.5"/>
<path class="w" stroke="#b8b8b8" stroke-width="5.5" d="M353.4 324.5L357.9 326.1"/>
<path class="w" stroke="#b8b8b8" stroke-width="5.5" d="M357.9 326.1L362.0 327.6"/>
<path class="w" stroke="#b8b8b8" stroke-width="5.4" d="M362.0 327.6L365.9 329.1"/>
<path class="w" stroke="#b8b8b8" stroke-width="5.4" d="M365.9 329.1L369.9 330.6"/>
<path class="w" stroke="#b2b2b2" stroke-width="5.4" d="M369.9 330.6L373.9 332.0"/>
<path class="w" stroke="#a8a8a8" stroke-width="5.4" d="M373.9 332.0L377.9 333.4"/>
<path class="w" stroke="#9e9e9e" stroke-width="5.3" d="M377.9 333.4L382.5 334.8"/>
<path class="w" stroke="#949494" stroke-width="5.3" d="M382.5 334.8L387.9 336.1"/>
<path class="w" stroke="#8b8b8b" stroke-width="5.2" d="M387.9 336.1L393.8 337.3"/>
<path class="w" stroke="#818181" stroke-width="5.2" d="M393.8 337.3L399.9 338.6"/>
<path class="w" stroke="#777777" stroke-width="5.1" d="M399.9 338.6L406.0 339.7"/>
<path class="w" stroke="#6d6d6d" stroke-width="5.0" d="M406.0 339.7L412.3 340.8"/>
<path class="w" stroke="#636363" stroke-width="4.9" d="M412.3 340.8L418.6 341.8"/>
<path class="w" stroke="#606060" stroke-width="4.8" d="M418.6 341.8L424.8 342.4"/>
<path class="w" stroke="#606060" stroke-width="4.7" d="M424.8 342.4L431.0 343.0"/>
<path class="w" stroke="#606060" stroke-width="4.6" d="M431.0 343.0L437.2 343.2"/>
<path class="w" stroke="#606060" stroke-width="4.5" d="M437.2 343.2L443.6 343.3"/>
<path class="w" stroke="#606060" stroke-width="4.5" d="M443.6 343.3L449.9 343.1"/>
<path class="w" stroke="#606060" stroke-width="4.4" d="M449.9 343.1L455.9 342.8"/>
<path class="w" stroke="#606060" stroke-width="4.4" d="M455.9 342.8L461.5 342.2"/>
<path class="w" stroke="#606060" stroke-width="4.3" d="M461.5 342.2L466.6 341.5"/>
<path class="w" stroke="#606060" stroke-width="4.2" d="M466.6 341.5L470.8 340.4"/>
<path class="w" stroke="#606060" stroke-width="4.2" d="M470.8 340.4L474.0 339.0"/>
<path class="w" stroke="#606060" stroke-width="4.1" d="M474.0 339.0L476.2 337.4"/>
<path class="w" stroke="#606060" stroke-width="4.0" d="M476.2 337.4L477.4 335.8"/>
<path class="w" stroke="#606060" stroke-width="4.0" d="M477.4 335.8L477.3 334.2"/>
<path class="w" stroke="#606060" stroke-width="3.9" d="M477.3 334.2L476.2 332.8"/>
<path class="w" stroke="#606060" stroke-width="3.8" d="M476.2 332.8L474.6 331.6"/>
<path class="w" stroke="#656565" stroke-width="3.8" d="M474.6 331.6L472.4 330.9"/>
<path class="w" stroke="#797979" stroke-width="3.7" d="M472.4 330.9L469.7 330.4"/>
<path class="w" stroke="#8c8c8c" stroke-width="3.7" d="M469.7 330.4L467.1 330.1"/>
<path class="w" stroke="#a0a0a0" stroke-width="3.6" d="M467.1 330.1L465.0 330.1"/>
<path class="w" stroke="#b4b4b4" stroke-width="3.6" d="M465.0 330.1L463.0 330.3"/>
<path class="w" stroke="#b8b8b8" stroke-width="3.6" d="M463.0 330.3L461.1 330.6"/>
<path class="w" stroke="#e8e8e8" stroke-width="1.5" d="M378.3 234.6L374.0 235.7"/>
<path class="w" stroke="#e8e8e8" stroke-width="1.6" d="M374.0 235.7L369.7 236.9"/>
<path class="w" stroke="#e8e8e8" stroke-width="1.6" d="M369.7 236.9L365.4 238.2"/>
<path class="w" stroke="#e8e8e8" stroke-width="1.6" d="M365.4 238.2L361.1 239.7"/>
<path class="w" stroke="#e8e8e8" stroke-width="1.7" d="M361.1 239.7L356.8 241.3"/>
<path class="w" stroke="#e8e8e8" stroke-width="1.7" d="M356.8 241.3L352.6 243.2"/>
<path class="w" stroke="#e8e8e8" stroke-width="1.8" d="M352.6 243.2L348.7 245.4"/>
<path class="w" stroke="#e8e8e8" stroke-width="1.8" d="M348.7 245.4L344.9 247.7"/>
<path class="w" stroke="#e8e8e8" stroke-width="1.8" d="M344.9 247.7L340.9 250.1"/>
<path class="w" stroke="#e8e8e8" stroke-width="1.9" d="M340.9 250.1L336.3 252.3"/>
<path class="w" stroke="#e8e8e8" stroke-width="1.9" d="M336.3 252.3L331.4 254.6"/>
<path class="w" stroke="#e8e8e8" stroke-width="2.0" d="M331.4 254.6L326.9 256.9"/>
<path class="w" stroke="#e8e8e8" stroke-width="2.0" d="M326.9 256.9L322.8 259.4"/>
<path class="w" stroke="#e8e8e8" stroke-width="2.0" d="M322.8 259.4L319.0 262.0"/>
<path class="w" stroke="#e8e8e8" stroke-width="2.1" d="M319.0 262.0L315.7 264.8"/>
<path class="w" stroke="#e8e8e8" stroke-width="2.1" d="M315.7 264.8L313.1 267.9"/>
<path class="w" stroke="#e8e8e8" stroke-width="2.1" d="M313.1 267.9L311.0 271.3"/>
<path class="w" stroke="#e8e8e8" stroke-width="2.2" d="M311.0 271.3L309.4 274.6"/>
<path class="w" stroke="#e8e8e8" stroke-width="2.2" d="M309.4 274.6L308.4 277.8"/>
<path class="w" stroke="#e8e8e8" stroke-width="2.2" d="M308.4 277.8L308.0 281.0"/>
<path class="w" stroke="#e8e8e8" stroke-width="2.2" d="M308.0 281.0L308.0 284.4"/>
<path class="w" stroke="#e8e8e8" stroke-width="2.3" d="M308.0 284.4L308.4 288.1"/>
<path class="w" stroke="#e8e8e8" stroke-width="2.3" d="M308.4 288.1L309.3 291.9"/>
<path class="w" stroke="#e8e8e8" stroke-width="2.3" d="M309.3 291.9L310.8 295.6"/>
<path class="w" stroke="#e8e8e8" stroke-width="2.3" d="M310.8 295.6L312.9 299.0"/>
<path class="w" stroke="#e8e8e8" stroke-width="2.3" d="M312.9 299.0L315.5 302.3"/>
<path class="w" stroke="#e8e8e8" stroke-width="2.3" d="M315.5 302.3L318.5 305.4"/>
<path class="w" stroke="#e8e8e8" stroke-width="2.3" d="M318.5 305.4L321.9 308.4"/>
<path class="w" stroke="#e8e8e8" stroke-width="2.3" d="M321.9 308.4L325.6 311.2"/>
<path class="w" stroke="#e8e8e8" stroke-width="2.3" d="M325.6 311.2L329.7 313.8"/>
<path class="w" stroke="#e8e8e8" stroke-width="2.3" d="M329.7 313.8L334.2 316.3"/>
<path class="w" stroke="#e8e8e8" stroke-width="2.3" d="M334.2 316.3L338.9 318.7"/>
<path class="w" stroke="#e8e8e8" stroke-width="2.3" d="M338.9 318.7L343.7 320.8"/>
<path class="w" stroke="#e8e8e8" stroke-width="2.3" d="M343.7 320.8L348.4 322.6"/>
<path class="w" stroke="#e8e8e8" stroke-width="2.3" d="M348.4 322.6L353.2 324.2"/>
<path class="w" stroke="#e8e8e8" stroke-width="2.3" d="M353.2 324.2L357.7 325.7"/>
<path class="w" stroke="#e8e8e8" stroke-width="2.3" d="M357.7 325.7L361.8 327.2"/>
<path class="w" stroke="#e8e8e8" stroke-width="2.3" d="M361.8 327.2L365.7 328.7"/>
<path class="w" stroke="#e8e8e8" stroke-width="2.3" d="M365.7 328.7L369.7 330.2"/>
<path class="w" stroke="#e0e0e0" stroke-width="2.3" d="M369.7 330.2L373.7 331.6"/>
<path class="w" stroke="#d4d4d4" stroke-width="2.3" d="M373.7 331.6L377.7 333.0"/>
<path class="w" stroke="#c8c8c8" stroke-width="2.3" d="M377.7 333.0L382.3 334.4"/>
<path class="w" stroke="#bcbcbc" stroke-width="2.3" d="M382.3 334.4L387.7 335.7"/>
<path class="w" stroke="#b0b0b0" stroke-width="2.2" d="M387.7 335.7L393.6 337.0"/>
<path class="w" stroke="#a4a4a4" stroke-width="2.2" d="M393.6 337.0L399.7 338.2"/>
<path class="w" stroke="#989898" stroke-width="2.2" d="M399.7 338.2L405.8 339.4"/>
<path class="w" stroke="#8c8c8c" stroke-width="2.1" d="M405.8 339.4L412.1 340.5"/>
<path class="w" stroke="#808080" stroke-width="2.1" d="M412.1 340.5L418.4 341.4"/>
<path class="w" stroke="#7c7c7c" stroke-width="2.0" d="M418.4 341.4L424.6 342.1"/>
<path class="w" stroke="#7c7c7c" stroke-width="2.0" d="M424.6 342.1L430.8 342.6"/>
<path class="w" stroke="#7c7c7c" stroke-width="2.0" d="M430.8 342.6L437.0 342.9"/>
<path class="w" stroke="#7c7c7c" stroke-width="1.9" d="M437.0 342.9L443.4 342.9"/>
<path class="w" stroke="#7c7c7c" stroke-width="1.9" d="M443.4 342.9L449.7 342.8"/>
<path class="w" stroke="#7c7c7c" stroke-width="1.9" d="M449.7 342.8L455.7 342.4"/>
<path class="w" stroke="#7c7c7c" stroke-width="1.9" d="M455.7 342.4L461.3 341.9"/>
<path class="w" stroke="#7c7c7c" stroke-width="1.8" d="M461.3 341.9L466.4 341.1"/>
<path class="w" stroke="#7c7c7c" stroke-width="1.8" d="M466.4 341.1L470.6 340.1"/>
<path class="w" stroke="#7c7c7c" stroke-width="1.8" d="M470.6 340.1L473.8 338.7"/>
<path class="w" stroke="#7c7c7c" stroke-width="1.8" d="M473.8 338.7L476.0 337.0"/>
<path class="w" stroke="#7c7c7c" stroke-width="1.7" d="M476.0 337.0L477.2 335.4"/>
<path class="w" stroke="#7c7c7c" stroke-width="1.7" d="M477.2 335.4L477.1 333.9"/>
<path class="w" stroke="#7c7c7c" stroke-width="1.7" d="M477.1 333.9L476.0 332.5"/>
<path class="w" stroke="#7c7c7c" stroke-width="1.6" d="M476.0 332.5L474.4 331.3"/>
<path class="w" stroke="#838383" stroke-width="1.6" d="M474.4 331.3L472.2 330.5"/>
<path class="w" stroke="#9b9b9b" stroke-width="1.6" d="M472.2 330.5L469.5 330.1"/>
<path class="w" stroke="#b3b3b3" stroke-width="1.6" d="M469.5 330.1L466.9 329.8"/>
<path class="w" stroke="#cbcbcb" stroke-width="1.6" d="M466.9 329.8L464.8 329.8"/>
<path class="w" stroke="#e3e3e3" stroke-width="1.6" d="M464.8 329.8L462.8 330.0"/>
<path class="w" stroke="#e8e8e8" stroke-width="1.6" d="M462.8 330.0L460.9 330.2"/>
<path class="w" stroke="#747474" stroke-width="6.0" d="M354.8 200.6L358.4 201.6"/>
<path class="w" stroke="#747474" stroke-width="6.1" d="M358.4 201.6L361.9 202.7"/>
<path class="w" stroke="#747474" stroke-width="6.2" d="M361.9 202.7L365.7 203.7"/>
<path class="w" stroke="#747474" stroke-width="6.2" d="M365.7 203.7L369.9 204.8"/>
<path class="w" stroke="#747474" stroke-width="6.3" d="M369.9 204.8L374.2 205.8"/>
<path class="w" stroke="#747474" stroke-width="6.3" d="M374.2 205.8L378.6 206.9"/>
<path class="w" stroke="#747474" stroke-width="6.3" d="M378.6 206.9L382.9 208.0"/>
<path class="w" stroke="#747474" stroke-width="6.3" d="M382.9 208.0L387.2 209.0"/>
<path class="w" stroke="#747474" stroke-width="6.4" d="M387.2 209.0L391.5 210.1"/>
<path class="w" stroke="#747474" stroke-width="6.4" d="M391.5 210.1L395.8 211.1"/>
<path class="w" stroke="#717171" stroke-width="6.5" d="M395.8 211.1L400.1 212.1"/>
<path class="w" stroke="#6e6e6e" stroke-width="6.6" d="M400.1 212.1L404.4 213.1"/>
<path class="w" stroke="#6a6a6a" stroke-width="6.6" d="M404.4 213.1L408.7 214.0"/>
<path class="w" stroke="#676767" stroke-width="6.7" d="M408.7 214.0L413.0 214.8"/>
<path class="w" stroke="#636363" stroke-width="6.7" d="M413.0 214.8L417.3 215.6"/>
<path class="w" stroke="#5f5f5f" stroke-width="6.7" d="M417.3 215.6L421.4 216.4"/>
<path class="w" stroke="#5c5c5c" stroke-width="6.8" d="M421.4 216.4L425.5 217.1"/>
<path class="w" stroke="#585858" stroke-width="6.8" d="M425.5 217.1L430.0 217.8"/>
<path class="w" stroke="#545454" stroke-width="6.8" d="M430.0 217.8L435.0 218.4"/>
<path class="w" stroke="#515151" stroke-width="6.8" d="M435.0 218.4L440.3 219.0"/>
<path class="w" stroke="#4d4d4d" stroke-width="6.9" d="M440.3 219.0L446.0 219.6"/>
<path class="w" stroke="#494949" stroke-width="6.9" d="M446.0 219.6L452.1 220.4"/>
<path class="w" stroke="#464646" stroke-width="7.0" d="M452.1 220.4L458.5 221.3"/>
<path class="w" stroke="#424242" stroke-width="7.0" d="M458.5 221.3L464.7 222.0"/>
<path class="w" stroke="#3e3e3e" stroke-width="7.0" d="M464.7 222.0L470.4 222.5"/>
<path class="w" stroke="#3b3b3b" stroke-width="6.8" d="M470.4 222.5L476.0 222.9"/>
<path class="w" stroke="#373737" stroke-width="6.7" d="M476.0 222.9L481.5 223.3"/>
<path class="w" stroke="#a4a4a4" stroke-width="4.2" d="M354.7 200.3L358.3 201.4"/>
<path class="w" stroke="#a4a4a4" stroke-width="4.3" d="M358.3 201.4L361.8 202.4"/>
<path class="w" stroke="#a4a4a4" stroke-width="4.3" d="M361.8 202.4L365.6 203.4"/>
<path class="w" stroke="#a4a4a4" stroke-width="4.4" d="M365.6 203.4L369.8 204.5"/>
<path class="w" stroke="#a4a4a4" stroke-width="4.4" d="M369.8 204.5L374.1 205.6"/>
<path class="w" stroke="#a4a4a4" stroke-width="4.4" d="M374.1 205.6L378.5 206.7"/>
<path class="w" stroke="#a4a4a4" stroke-width="4.4" d="M378.5 206.7L382.8 207.7"/>
<path class="w" stroke="#a4a4a4" stroke-width="4.4" d="M382.8 207.7L387.1 208.8"/>
<path class="w" stroke="#a4a4a4" stroke-width="4.5" d="M387.1 208.8L391.4 209.8"/>
<path class="w" stroke="#a4a4a4" stroke-width="4.5" d="M391.4 209.8L395.7 210.9"/>
<path class="w" stroke="#a0a0a0" stroke-width="4.5" d="M395.7 210.9L400.0 211.9"/>
<path class="w" stroke="#9b9b9b" stroke-width="4.6" d="M400.0 211.9L404.3 212.8"/>
<path class="w" stroke="#959595" stroke-width="4.6" d="M404.3 212.8L408.6 213.7"/>
<path class="w" stroke="#909090" stroke-width="4.7" d="M408.6 213.7L412.9 214.6"/>
<path class="w" stroke="#8a8a8a" stroke-width="4.7" d="M412.9 214.6L417.2 215.3"/>
<path class="w" stroke="#858585" stroke-width="4.7" d="M417.2 215.3L421.3 216.1"/>
<path class="w" stroke="#7f7f7f" stroke-width="4.7" d="M421.3 216.1L425.4 216.9"/>
<path class="w" stroke="#797979" stroke-width="4.7" d="M425.4 216.9L429.9 217.6"/>
<path class="w" stroke="#747474" stroke-width="4.8" d="M429.9 217.6L434.9 218.2"/>
<path class="w" stroke="#6e6e6e" stroke-width="4.8" d="M434.9 218.2L440.2 218.7"/>
<path class="w" stroke="#696969" stroke-width="4.8" d="M440.2 218.7L445.9 219.3"/>
<path class="w" stroke="#636363" stroke-width="4.8" d="M445.9 219.3L452.0 220.1"/>
<path class="w" stroke="#5d5d5d" stroke-width="4.9" d="M452.0 220.1L458.4 221.0"/>
<path class="w" stroke="#585858" stroke-width="4.9" d="M458.4 221.0L464.6 221.8"/>
<path class="w" stroke="#525252" stroke-width="4.9" d="M464.6 221.8L470.3 222.3"/>
<path class="w" stroke="#4d4d4d" stroke-width="4.8" d="M470.3 222.3L475.9 222.7"/>
<path class="w" stroke="#474747" stroke-width="4.7" d="M475.9 222.7L481.4 223.1"/>
<path class="w" stroke="#dedede" stroke-width="1.8" d="M354.5 200.0L358.1 201.0"/>
<path class="w" stroke="#dedede" stroke-width="1.8" d="M358.1 201.0L361.6 202.1"/>
<path class="w" stroke="#dedede" stroke-width="1.9" d="M361.6 202.1L365.4 203.1"/>
<path class="w" stroke="#dedede" stroke-width="1.9" d="M365.4 203.1L369.6 204.2"/>
<path class="w" stroke="#dedede" stroke-width="1.9" d="M369.6 204.2L373.9 205.2"/>
<path class="w" stroke="#dedede" stroke-width="1.9" d="M373.9 205.2L378.3 206.3"/>
<path class="w" stroke="#dedede" stroke-width="1.9" d="M378.3 206.3L382.6 207.4"/>
<path class="w" stroke="#dedede" stroke-width="1.9" d="M382.6 207.4L386.9 208.4"/>
<path class="w" stroke="#dedede" stroke-width="1.9" d="M386.9 208.4L391.2 209.5"/>
<path class="w" stroke="#dedede" stroke-width="1.9" d="M391.2 209.5L395.5 210.5"/>
<path class="w" stroke="#d9d9d9" stroke-width="1.9" d="M395.5 210.5L399.8 211.5"/>
<path class="w" stroke="#d1d1d1" stroke-width="2.0" d="M399.8 211.5L404.1 212.5"/>
<path class="w" stroke="#c9c9c9" stroke-width="2.0" d="M404.1 212.5L408.4 213.4"/>
<path class="w" stroke="#c1c1c1" stroke-width="2.0" d="M408.4 213.4L412.7 214.2"/>
<path class="w" stroke="#b9b9b9" stroke-width="2.0" d="M412.7 214.2L417.0 215.0"/>
<path class="w" stroke="#b1b1b1" stroke-width="2.0" d="M417.0 215.0L421.1 215.8"/>
<path class="w" stroke="#a9a9a9" stroke-width="2.0" d="M421.1 215.8L425.2 216.5"/>
<path class="w" stroke="#a0a0a0" stroke-width="2.0" d="M425.2 216.5L429.7 217.2"/>
<path class="w" stroke="#989898" stroke-width="2.0" d="M429.7 217.2L434.7 217.8"/>
<path class="w" stroke="#909090" stroke-width="2.1" d="M434.7 217.8L440.0 218.4"/>
<path class="w" stroke="#888888" stroke-width="2.1" d="M440.0 218.4L445.7 219.0"/>
<path class="w" stroke="#808080" stroke-width="2.1" d="M445.7 219.0L451.8 219.8"/>
<path class="w" stroke="#787878" stroke-width="2.1" d="M451.8 219.8L458.2 220.7"/>
<path class="w" stroke="#707070" stroke-width="2.1" d="M458.2 220.7L464.4 221.4"/>
<path class="w" stroke="#686868" stroke-width="2.1" d="M464.4 221.4L470.1 221.9"/>
<path class="w" stroke="#606060" stroke-width="2.0" d="M470.1 221.9L475.7 222.3"/>
<path class="w" stroke="#585858" stroke-width="2.0" d="M475.7 222.3L481.2 222.7"/>
<rect x="369.5" y="203.3" width="1" height="1.4" fill="#181818"/>
<rect x="378.3" y="205.5" width="1" height="1.4" fill="#181818"/>
<rect x="391.2" y="208.7" width="1" height="1.4" fill="#181818"/>
<rect x="404.1" y="211.6" width="1" height="1.4" fill="#181818"/>
<rect x="416.9" y="214.1" width="1" height="1.4" fill="#181818"/>
<rect x="429.6" y="216.3" width="1" height="1.4" fill="#181818"/>
<rect x="439.9" y="217.5" width="1" height="1.4" fill="#181818"/>
<rect x="451.7" y="218.9" width="1" height="1.4" fill="#181818"/>
<rect x="464.3" y="220.5" width="1" height="1.4" fill="#181818"/>
<rect x="475.5" y="221.4" width="1" height="1.4" fill="#181818"/>
<rect x="306.6" y="288.2" width="1" height="1.4" fill="#181818"/>
<rect x="311.2" y="299.8" width="1" height="1.4" fill="#181818"/>
<rect x="320.5" y="309.5" width="1" height="1.4" fill="#181818"/>
<rect x="328.6" y="315.1" width="1" height="1.4" fill="#181818"/>
<rect x="338.0" y="320.1" width="1" height="1.4" fill="#181818"/>
<rect x="352.4" y="325.7" width="1" height="1.4" fill="#181818"/>
<rect x="361.0" y="328.7" width="1" height="1.4" fill="#181818"/>
<rect x="372.9" y="333.1" width="1" height="1.4" fill="#181818"/>
<rect x="381.6" y="335.9" width="1" height="1.4" fill="#181818"/>
<rect x="393.1" y="338.5" width="1" height="1.4" fill="#181818"/>
<rect x="405.3" y="340.8" width="1" height="1.4" fill="#181818"/>
<rect x="418.0" y="342.8" width="1" height="1.4" fill="#181818"/>
<rect x="430.5" y="344.0" width="1" height="1.4" fill="#181818"/>
<rect x="443.2" y="344.3" width="1" height="1.4" fill="#181818"/>
<rect x="449.6" y="344.1" width="1" height="1.4" fill="#181818"/>
<rect x="461.2" y="343.1" width="1" height="1.4" fill="#181818"/>
</svg></body></html>
